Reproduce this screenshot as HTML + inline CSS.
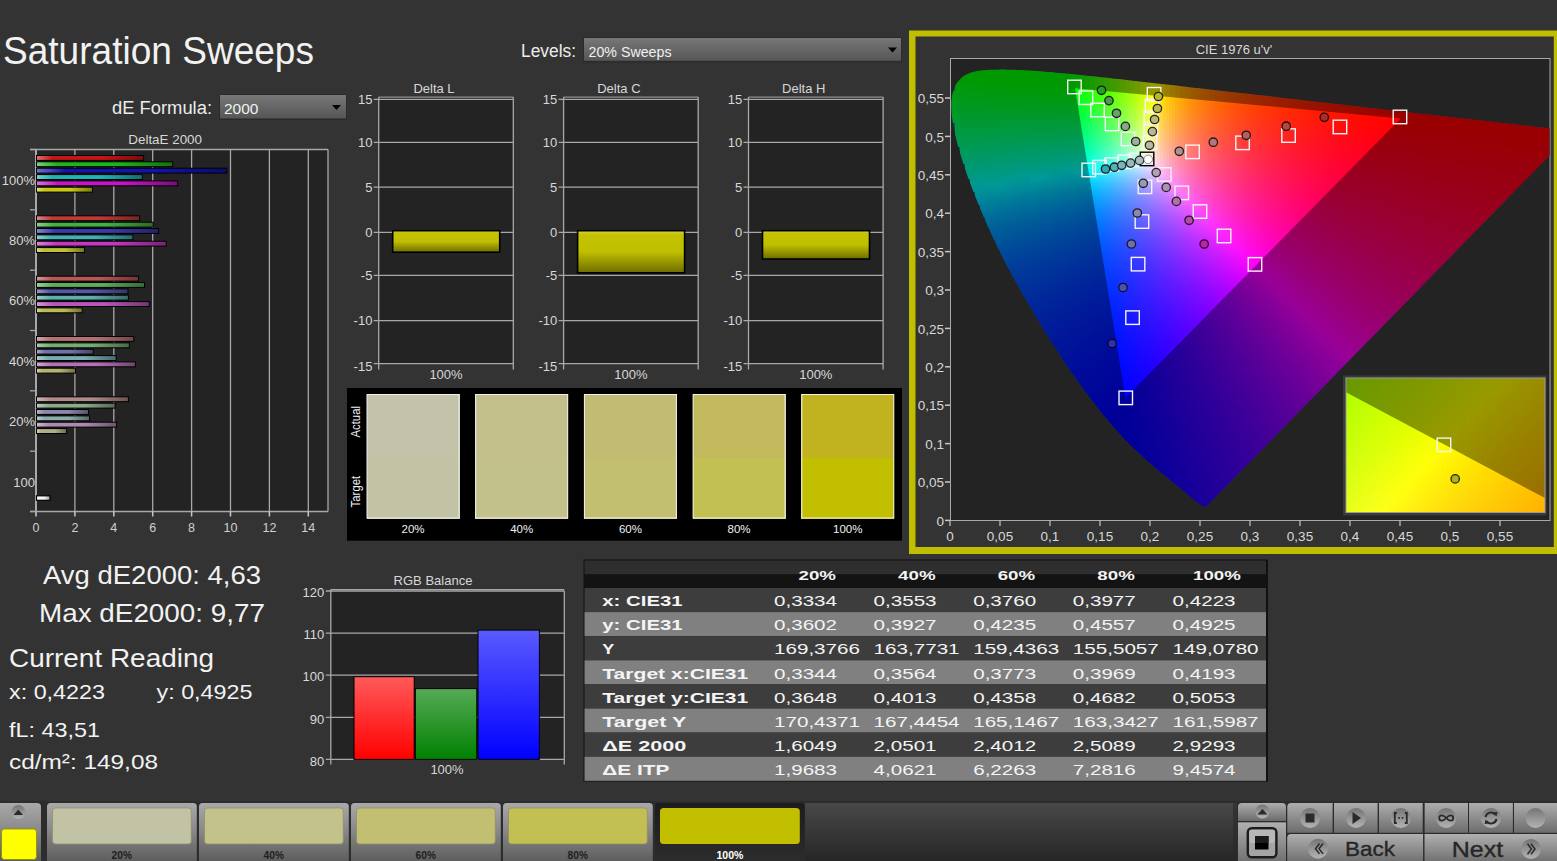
<!DOCTYPE html>
<html><head><meta charset="utf-8"><style>
html,body{margin:0;padding:0;background:#333333;width:1557px;height:861px;overflow:hidden}
svg{display:block;font-family:"Liberation Sans", sans-serif}
</style></head><body>
<svg width="1557" height="861" viewBox="0 0 1557 861">
<defs>
<linearGradient id="dd" x1="0" y1="0" x2="0" y2="1"><stop offset="0" stop-color="#777777"/><stop offset="1" stop-color="#555555"/></linearGradient>
<linearGradient id="ybar" x1="0" y1="0" x2="0" y2="1"><stop offset="0" stop-color="#d4d448"/><stop offset="0.1" stop-color="#c4c200"/><stop offset="0.5" stop-color="#c0bf00"/><stop offset="1" stop-color="#6e6c00"/></linearGradient>
</defs>
<rect x="0" y="0" width="1557" height="861" fill="#333333"/>
<text x="3" y="64" font-size="38" fill="#f2f2f2" text-anchor="start" textLength="311" lengthAdjust="spacingAndGlyphs" >Saturation Sweeps</text>
<text x="112" y="114" font-size="18" fill="#ececec" text-anchor="start" textLength="100" lengthAdjust="spacingAndGlyphs" >dE Formula:</text>
<rect x="219" y="94" width="128" height="26" fill="#2b2b2b"/>
<rect x="220" y="95" width="126" height="24" fill="url(#dd)"/>
<rect x="220" y="118.5" width="126" height="1" fill="#2a2a2a"/>
<text x="224" y="114" font-size="15.5" fill="#f0f0f0" text-anchor="start" >2000</text>
<path d="M332 105 L341 105 L336.5 110 Z" fill="#000"/>
<text x="521" y="57" font-size="18" fill="#ececec" text-anchor="start" textLength="55" lengthAdjust="spacingAndGlyphs" >Levels:</text>
<rect x="583" y="37" width="319" height="25.5" fill="#2b2b2b"/>
<rect x="584" y="38" width="317" height="23.5" fill="url(#dd)"/>
<rect x="584" y="60.8" width="317" height="1" fill="#2a2a2a"/>
<text x="588.5" y="57" font-size="15.5" fill="#f0f0f0" text-anchor="start" textLength="83" lengthAdjust="spacingAndGlyphs" >20% Sweeps</text>
<path d="M888 47.5 L897 47.5 L892.5 52.5 Z" fill="#000"/>
<text x="128.3" y="143.5" font-size="13" fill="#d8d8d8" text-anchor="start" textLength="73.7" lengthAdjust="spacingAndGlyphs" >DeltaE 2000</text>
<rect x="36" y="149.5" width="292" height="362.0" fill="#232323"/>
<line x1="74.9" y1="149.5" x2="74.9" y2="511.5" stroke="#a8a8a8" stroke-width="1.3"/>
<line x1="113.8" y1="149.5" x2="113.8" y2="511.5" stroke="#a8a8a8" stroke-width="1.3"/>
<line x1="152.7" y1="149.5" x2="152.7" y2="511.5" stroke="#a8a8a8" stroke-width="1.3"/>
<line x1="191.6" y1="149.5" x2="191.6" y2="511.5" stroke="#a8a8a8" stroke-width="1.3"/>
<line x1="230.5" y1="149.5" x2="230.5" y2="511.5" stroke="#a8a8a8" stroke-width="1.3"/>
<line x1="269.4" y1="149.5" x2="269.4" y2="511.5" stroke="#a8a8a8" stroke-width="1.3"/>
<line x1="308.3" y1="149.5" x2="308.3" y2="511.5" stroke="#a8a8a8" stroke-width="1.3"/>
<line x1="328" y1="149.5" x2="328" y2="511.5" stroke="#a8a8a8" stroke-width="1.3"/>
<line x1="30" y1="149.5" x2="328" y2="149.5" stroke="#a8a8a8" stroke-width="1.3"/>
<line x1="36" y1="149.5" x2="36" y2="516.5" stroke="#a8a8a8" stroke-width="2"/>
<line x1="30" y1="511.5" x2="328" y2="511.5" stroke="#a8a8a8" stroke-width="1.3"/>
<text x="36.0" y="532" font-size="12.5" fill="#d0d0d0" text-anchor="middle" >0</text>
<line x1="74.9" y1="511.5" x2="74.9" y2="516.5" stroke="#c8c8c8" stroke-width="1.5"/>
<text x="74.9" y="532" font-size="12.5" fill="#d0d0d0" text-anchor="middle" >2</text>
<line x1="113.8" y1="511.5" x2="113.8" y2="516.5" stroke="#c8c8c8" stroke-width="1.5"/>
<text x="113.8" y="532" font-size="12.5" fill="#d0d0d0" text-anchor="middle" >4</text>
<line x1="152.7" y1="511.5" x2="152.7" y2="516.5" stroke="#c8c8c8" stroke-width="1.5"/>
<text x="152.7" y="532" font-size="12.5" fill="#d0d0d0" text-anchor="middle" >6</text>
<line x1="191.6" y1="511.5" x2="191.6" y2="516.5" stroke="#c8c8c8" stroke-width="1.5"/>
<text x="191.6" y="532" font-size="12.5" fill="#d0d0d0" text-anchor="middle" >8</text>
<line x1="230.5" y1="511.5" x2="230.5" y2="516.5" stroke="#c8c8c8" stroke-width="1.5"/>
<text x="230.5" y="532" font-size="12.5" fill="#d0d0d0" text-anchor="middle" >10</text>
<line x1="269.4" y1="511.5" x2="269.4" y2="516.5" stroke="#c8c8c8" stroke-width="1.5"/>
<text x="269.4" y="532" font-size="12.5" fill="#d0d0d0" text-anchor="middle" >12</text>
<line x1="308.3" y1="511.5" x2="308.3" y2="516.5" stroke="#c8c8c8" stroke-width="1.5"/>
<text x="308.3" y="532" font-size="12.5" fill="#d0d0d0" text-anchor="middle" >14</text>
<line x1="30" y1="149.5" x2="36" y2="149.5" stroke="#a8a8a8" stroke-width="1.3"/>
<line x1="30" y1="209.8" x2="36" y2="209.8" stroke="#a8a8a8" stroke-width="1.3"/>
<line x1="30" y1="270.2" x2="36" y2="270.2" stroke="#a8a8a8" stroke-width="1.3"/>
<line x1="30" y1="330.5" x2="36" y2="330.5" stroke="#a8a8a8" stroke-width="1.3"/>
<line x1="30" y1="390.8" x2="36" y2="390.8" stroke="#a8a8a8" stroke-width="1.3"/>
<line x1="30" y1="451.2" x2="36" y2="451.2" stroke="#a8a8a8" stroke-width="1.3"/>
<line x1="30" y1="511.5" x2="36" y2="511.5" stroke="#a8a8a8" stroke-width="1.3"/>
<text x="35" y="184.7" font-size="13" fill="#d8d8d8" text-anchor="end" >100%</text>
<linearGradient id="bg0" x1="0" y1="0" x2="1" y2="0"><stop offset="0" stop-color="rgb(222, 114, 114)"/><stop offset="0.15" stop-color="rgb(200, 20, 20)"/><stop offset="0.6" stop-color="rgb(200, 20, 20)"/><stop offset="1" stop-color="rgb(124, 12, 12)"/></linearGradient>
<rect x="36.5" y="155.5" width="107.1" height="4.9" fill="url(#bg0)" stroke="#000" stroke-width="1"/>
<linearGradient id="bg1" x1="0" y1="0" x2="1" y2="0"><stop offset="0" stop-color="rgb(120, 210, 120)"/><stop offset="0.15" stop-color="rgb(30, 180, 30)"/><stop offset="0.6" stop-color="rgb(30, 180, 30)"/><stop offset="1" stop-color="rgb(18, 111, 18)"/></linearGradient>
<rect x="36.5" y="161.8" width="136.2" height="4.9" fill="url(#bg1)" stroke="#000" stroke-width="1"/>
<linearGradient id="bg2" x1="0" y1="0" x2="1" y2="0"><stop offset="0" stop-color="rgb(114, 114, 204)"/><stop offset="0.15" stop-color="rgb(20, 20, 170)"/><stop offset="0.6" stop-color="rgb(20, 20, 170)"/><stop offset="1" stop-color="rgb(12, 12, 105)"/></linearGradient>
<rect x="36.5" y="168.2" width="190.3" height="4.9" fill="url(#bg2)" stroke="#000" stroke-width="1"/>
<linearGradient id="bg3" x1="0" y1="0" x2="1" y2="0"><stop offset="0" stop-color="rgb(120, 210, 210)"/><stop offset="0.15" stop-color="rgb(30, 180, 180)"/><stop offset="0.6" stop-color="rgb(30, 180, 180)"/><stop offset="1" stop-color="rgb(18, 111, 111)"/></linearGradient>
<rect x="36.5" y="174.6" width="105.8" height="4.9" fill="url(#bg3)" stroke="#000" stroke-width="1"/>
<linearGradient id="bg4" x1="0" y1="0" x2="1" y2="0"><stop offset="0" stop-color="rgb(222, 114, 222)"/><stop offset="0.15" stop-color="rgb(200, 20, 200)"/><stop offset="0.6" stop-color="rgb(200, 20, 200)"/><stop offset="1" stop-color="rgb(124, 12, 124)"/></linearGradient>
<rect x="36.5" y="180.9" width="141.2" height="4.9" fill="url(#bg4)" stroke="#000" stroke-width="1"/>
<linearGradient id="bg5" x1="0" y1="0" x2="1" y2="0"><stop offset="0" stop-color="rgb(222, 222, 114)"/><stop offset="0.15" stop-color="rgb(200, 200, 20)"/><stop offset="0.6" stop-color="rgb(200, 200, 20)"/><stop offset="1" stop-color="rgb(124, 124, 12)"/></linearGradient>
<rect x="36.5" y="187.2" width="56.0" height="4.9" fill="url(#bg5)" stroke="#000" stroke-width="1"/>
<text x="35" y="245.0" font-size="13" fill="#d8d8d8" text-anchor="end" >80%</text>
<linearGradient id="bg6" x1="0" y1="0" x2="1" y2="0"><stop offset="0" stop-color="rgb(217, 136, 136)"/><stop offset="0.15" stop-color="rgb(192, 57, 57)"/><stop offset="0.6" stop-color="rgb(192, 57, 57)"/><stop offset="1" stop-color="rgb(119, 35, 35)"/></linearGradient>
<rect x="36.5" y="215.8" width="103.1" height="4.9" fill="url(#bg6)" stroke="#000" stroke-width="1"/>
<linearGradient id="bg7" x1="0" y1="0" x2="1" y2="0"><stop offset="0" stop-color="rgb(141, 208, 141)"/><stop offset="0.15" stop-color="rgb(65, 177, 65)"/><stop offset="0.6" stop-color="rgb(65, 177, 65)"/><stop offset="1" stop-color="rgb(40, 109, 40)"/></linearGradient>
<rect x="36.5" y="222.2" width="116.8" height="4.9" fill="url(#bg7)" stroke="#000" stroke-width="1"/>
<linearGradient id="bg8" x1="0" y1="0" x2="1" y2="0"><stop offset="0" stop-color="rgb(136, 136, 204)"/><stop offset="0.15" stop-color="rgb(57, 57, 170)"/><stop offset="0.6" stop-color="rgb(57, 57, 170)"/><stop offset="1" stop-color="rgb(35, 35, 105)"/></linearGradient>
<rect x="36.5" y="228.5" width="122.1" height="4.9" fill="url(#bg8)" stroke="#000" stroke-width="1"/>
<linearGradient id="bg9" x1="0" y1="0" x2="1" y2="0"><stop offset="0" stop-color="rgb(141, 208, 208)"/><stop offset="0.15" stop-color="rgb(65, 177, 177)"/><stop offset="0.6" stop-color="rgb(65, 177, 177)"/><stop offset="1" stop-color="rgb(40, 109, 109)"/></linearGradient>
<rect x="36.5" y="234.9" width="96.4" height="4.9" fill="url(#bg9)" stroke="#000" stroke-width="1"/>
<linearGradient id="bg10" x1="0" y1="0" x2="1" y2="0"><stop offset="0" stop-color="rgb(217, 136, 217)"/><stop offset="0.15" stop-color="rgb(192, 57, 192)"/><stop offset="0.6" stop-color="rgb(192, 57, 192)"/><stop offset="1" stop-color="rgb(119, 35, 119)"/></linearGradient>
<rect x="36.5" y="241.2" width="129.8" height="4.9" fill="url(#bg10)" stroke="#000" stroke-width="1"/>
<linearGradient id="bg11" x1="0" y1="0" x2="1" y2="0"><stop offset="0" stop-color="rgb(217, 217, 136)"/><stop offset="0.15" stop-color="rgb(192, 192, 57)"/><stop offset="0.6" stop-color="rgb(192, 192, 57)"/><stop offset="1" stop-color="rgb(119, 119, 35)"/></linearGradient>
<rect x="36.5" y="247.6" width="48.0" height="4.9" fill="url(#bg11)" stroke="#000" stroke-width="1"/>
<text x="35" y="305.3" font-size="13" fill="#d8d8d8" text-anchor="end" >60%</text>
<linearGradient id="bg12" x1="0" y1="0" x2="1" y2="0"><stop offset="0" stop-color="rgb(213, 153, 153)"/><stop offset="0.15" stop-color="rgb(186, 86, 86)"/><stop offset="0.6" stop-color="rgb(186, 86, 86)"/><stop offset="1" stop-color="rgb(115, 53, 53)"/></linearGradient>
<rect x="36.5" y="276.2" width="102.0" height="4.9" fill="url(#bg12)" stroke="#000" stroke-width="1"/>
<linearGradient id="bg13" x1="0" y1="0" x2="1" y2="0"><stop offset="0" stop-color="rgb(156, 207, 156)"/><stop offset="0.15" stop-color="rgb(91, 175, 91)"/><stop offset="0.6" stop-color="rgb(91, 175, 91)"/><stop offset="1" stop-color="rgb(56, 108, 56)"/></linearGradient>
<rect x="36.5" y="282.5" width="108.0" height="4.9" fill="url(#bg13)" stroke="#000" stroke-width="1"/>
<linearGradient id="bg14" x1="0" y1="0" x2="1" y2="0"><stop offset="0" stop-color="rgb(153, 153, 204)"/><stop offset="0.15" stop-color="rgb(86, 86, 170)"/><stop offset="0.6" stop-color="rgb(86, 86, 170)"/><stop offset="1" stop-color="rgb(53, 53, 105)"/></linearGradient>
<rect x="36.5" y="288.9" width="91.5" height="4.9" fill="url(#bg14)" stroke="#000" stroke-width="1"/>
<linearGradient id="bg15" x1="0" y1="0" x2="1" y2="0"><stop offset="0" stop-color="rgb(156, 207, 207)"/><stop offset="0.15" stop-color="rgb(91, 175, 175)"/><stop offset="0.6" stop-color="rgb(91, 175, 175)"/><stop offset="1" stop-color="rgb(56, 108, 108)"/></linearGradient>
<rect x="36.5" y="295.2" width="91.9" height="4.9" fill="url(#bg15)" stroke="#000" stroke-width="1"/>
<linearGradient id="bg16" x1="0" y1="0" x2="1" y2="0"><stop offset="0" stop-color="rgb(213, 153, 213)"/><stop offset="0.15" stop-color="rgb(186, 86, 186)"/><stop offset="0.6" stop-color="rgb(186, 86, 186)"/><stop offset="1" stop-color="rgb(115, 53, 115)"/></linearGradient>
<rect x="36.5" y="301.6" width="112.8" height="4.9" fill="url(#bg16)" stroke="#000" stroke-width="1"/>
<linearGradient id="bg17" x1="0" y1="0" x2="1" y2="0"><stop offset="0" stop-color="rgb(213, 213, 153)"/><stop offset="0.15" stop-color="rgb(186, 186, 86)"/><stop offset="0.6" stop-color="rgb(186, 186, 86)"/><stop offset="1" stop-color="rgb(115, 115, 53)"/></linearGradient>
<rect x="36.5" y="307.9" width="45.7" height="4.9" fill="url(#bg17)" stroke="#000" stroke-width="1"/>
<text x="35" y="365.7" font-size="13" fill="#d8d8d8" text-anchor="end" >40%</text>
<linearGradient id="bg18" x1="0" y1="0" x2="1" y2="0"><stop offset="0" stop-color="rgb(210, 169, 169)"/><stop offset="0.15" stop-color="rgb(181, 113, 113)"/><stop offset="0.6" stop-color="rgb(181, 113, 113)"/><stop offset="1" stop-color="rgb(112, 70, 70)"/></linearGradient>
<rect x="36.5" y="336.5" width="97.3" height="4.9" fill="url(#bg18)" stroke="#000" stroke-width="1"/>
<linearGradient id="bg19" x1="0" y1="0" x2="1" y2="0"><stop offset="0" stop-color="rgb(171, 205, 171)"/><stop offset="0.15" stop-color="rgb(116, 173, 116)"/><stop offset="0.6" stop-color="rgb(116, 173, 116)"/><stop offset="1" stop-color="rgb(71, 107, 71)"/></linearGradient>
<rect x="36.5" y="342.9" width="92.9" height="4.9" fill="url(#bg19)" stroke="#000" stroke-width="1"/>
<linearGradient id="bg20" x1="0" y1="0" x2="1" y2="0"><stop offset="0" stop-color="rgb(169, 169, 204)"/><stop offset="0.15" stop-color="rgb(113, 113, 170)"/><stop offset="0.6" stop-color="rgb(113, 113, 170)"/><stop offset="1" stop-color="rgb(70, 70, 105)"/></linearGradient>
<rect x="36.5" y="349.2" width="56.8" height="4.9" fill="url(#bg20)" stroke="#000" stroke-width="1"/>
<linearGradient id="bg21" x1="0" y1="0" x2="1" y2="0"><stop offset="0" stop-color="rgb(171, 205, 205)"/><stop offset="0.15" stop-color="rgb(116, 173, 173)"/><stop offset="0.6" stop-color="rgb(116, 173, 173)"/><stop offset="1" stop-color="rgb(71, 107, 107)"/></linearGradient>
<rect x="36.5" y="355.6" width="79.7" height="4.9" fill="url(#bg21)" stroke="#000" stroke-width="1"/>
<linearGradient id="bg22" x1="0" y1="0" x2="1" y2="0"><stop offset="0" stop-color="rgb(210, 169, 210)"/><stop offset="0.15" stop-color="rgb(181, 113, 181)"/><stop offset="0.6" stop-color="rgb(181, 113, 181)"/><stop offset="1" stop-color="rgb(112, 70, 112)"/></linearGradient>
<rect x="36.5" y="361.9" width="98.9" height="4.9" fill="url(#bg22)" stroke="#000" stroke-width="1"/>
<linearGradient id="bg23" x1="0" y1="0" x2="1" y2="0"><stop offset="0" stop-color="rgb(210, 210, 169)"/><stop offset="0.15" stop-color="rgb(181, 181, 113)"/><stop offset="0.6" stop-color="rgb(181, 181, 113)"/><stop offset="1" stop-color="rgb(112, 112, 70)"/></linearGradient>
<rect x="36.5" y="368.2" width="39.0" height="4.9" fill="url(#bg23)" stroke="#000" stroke-width="1"/>
<text x="35" y="426.0" font-size="13" fill="#d8d8d8" text-anchor="end" >20%</text>
<linearGradient id="bg24" x1="0" y1="0" x2="1" y2="0"><stop offset="0" stop-color="rgb(207, 184, 184)"/><stop offset="0.15" stop-color="rgb(176, 137, 137)"/><stop offset="0.6" stop-color="rgb(176, 137, 137)"/><stop offset="1" stop-color="rgb(109, 84, 84)"/></linearGradient>
<rect x="36.5" y="396.8" width="91.9" height="4.9" fill="url(#bg24)" stroke="#000" stroke-width="1"/>
<linearGradient id="bg25" x1="0" y1="0" x2="1" y2="0"><stop offset="0" stop-color="rgb(185, 205, 185)"/><stop offset="0.15" stop-color="rgb(139, 172, 139)"/><stop offset="0.6" stop-color="rgb(139, 172, 139)"/><stop offset="1" stop-color="rgb(86, 106, 86)"/></linearGradient>
<rect x="36.5" y="403.2" width="78.7" height="4.9" fill="url(#bg25)" stroke="#000" stroke-width="1"/>
<linearGradient id="bg26" x1="0" y1="0" x2="1" y2="0"><stop offset="0" stop-color="rgb(184, 184, 204)"/><stop offset="0.15" stop-color="rgb(137, 137, 170)"/><stop offset="0.6" stop-color="rgb(137, 137, 170)"/><stop offset="1" stop-color="rgb(84, 84, 105)"/></linearGradient>
<rect x="36.5" y="409.5" width="52.1" height="4.9" fill="url(#bg26)" stroke="#000" stroke-width="1"/>
<linearGradient id="bg27" x1="0" y1="0" x2="1" y2="0"><stop offset="0" stop-color="rgb(185, 205, 205)"/><stop offset="0.15" stop-color="rgb(139, 172, 172)"/><stop offset="0.6" stop-color="rgb(139, 172, 172)"/><stop offset="1" stop-color="rgb(86, 106, 106)"/></linearGradient>
<rect x="36.5" y="415.9" width="53.1" height="4.9" fill="url(#bg27)" stroke="#000" stroke-width="1"/>
<linearGradient id="bg28" x1="0" y1="0" x2="1" y2="0"><stop offset="0" stop-color="rgb(207, 184, 207)"/><stop offset="0.15" stop-color="rgb(176, 137, 176)"/><stop offset="0.6" stop-color="rgb(176, 137, 176)"/><stop offset="1" stop-color="rgb(109, 84, 109)"/></linearGradient>
<rect x="36.5" y="422.2" width="80.1" height="4.9" fill="url(#bg28)" stroke="#000" stroke-width="1"/>
<linearGradient id="bg29" x1="0" y1="0" x2="1" y2="0"><stop offset="0" stop-color="rgb(207, 207, 184)"/><stop offset="0.15" stop-color="rgb(176, 176, 137)"/><stop offset="0.6" stop-color="rgb(176, 176, 137)"/><stop offset="1" stop-color="rgb(109, 109, 84)"/></linearGradient>
<rect x="36.5" y="428.6" width="30.2" height="4.9" fill="url(#bg29)" stroke="#000" stroke-width="1"/>
<text x="35" y="487" font-size="13" fill="#d8d8d8" text-anchor="end" >100</text>
<linearGradient id="bgw" x1="0" y1="0" x2="1" y2="0"><stop offset="0" stop-color="#ffffff"/><stop offset="0.6" stop-color="#f0f0f0"/><stop offset="1" stop-color="#9a9a9a"/></linearGradient>
<rect x="36.5" y="495.8" width="13.5" height="4.5" fill="url(#bgw)" stroke="#000" stroke-width="1.2"/>
<rect x="378.7" y="97.3" width="134.6" height="266.3" fill="#232323"/>
<line x1="373.7" y1="99.3" x2="513.3" y2="99.3" stroke="#a8a8a8" stroke-width="1.3"/>
<text x="372.4" y="103.9" font-size="13" fill="#d8d8d8" text-anchor="end" >15</text>
<line x1="373.7" y1="142.3" x2="513.3" y2="142.3" stroke="#a8a8a8" stroke-width="1.3"/>
<text x="372.4" y="146.9" font-size="13" fill="#d8d8d8" text-anchor="end" >10</text>
<line x1="373.7" y1="187.2" x2="513.3" y2="187.2" stroke="#a8a8a8" stroke-width="1.3"/>
<text x="372.4" y="191.8" font-size="13" fill="#d8d8d8" text-anchor="end" >5</text>
<line x1="373.7" y1="232.4" x2="513.3" y2="232.4" stroke="#a8a8a8" stroke-width="1.3"/>
<text x="372.4" y="237.0" font-size="13" fill="#d8d8d8" text-anchor="end" >0</text>
<line x1="373.7" y1="275.3" x2="513.3" y2="275.3" stroke="#a8a8a8" stroke-width="1.3"/>
<text x="372.4" y="279.9" font-size="13" fill="#d8d8d8" text-anchor="end" >-5</text>
<line x1="373.7" y1="320.6" x2="513.3" y2="320.6" stroke="#a8a8a8" stroke-width="1.3"/>
<text x="372.4" y="325.2" font-size="13" fill="#d8d8d8" text-anchor="end" >-10</text>
<line x1="373.7" y1="363.6" x2="513.3" y2="363.6" stroke="#a8a8a8" stroke-width="1.3"/>
<text x="372.4" y="370.5" font-size="13" fill="#d8d8d8" text-anchor="end" >-15</text>
<line x1="378.7" y1="97.1" x2="513.3" y2="97.1" stroke="#a8a8a8" stroke-width="1"/>
<line x1="378.7" y1="97.1" x2="378.7" y2="369.6" stroke="#a8a8a8" stroke-width="1.3"/>
<line x1="513.3" y1="97.1" x2="513.3" y2="369.6" stroke="#a8a8a8" stroke-width="1.3"/>
<text x="434.0" y="93" font-size="13" fill="#d8d8d8" text-anchor="middle" >Delta L</text>
<text x="446.0" y="379" font-size="13" fill="#d8d8d8" text-anchor="middle" >100%</text>
<rect x="392.7" y="230.7" width="107" height="21.5" fill="url(#ybar)" stroke="#000" stroke-width="1.6"/>
<rect x="563.6" y="97.3" width="134.6" height="266.3" fill="#232323"/>
<line x1="558.6" y1="99.3" x2="698.2" y2="99.3" stroke="#a8a8a8" stroke-width="1.3"/>
<text x="557.3" y="103.9" font-size="13" fill="#d8d8d8" text-anchor="end" >15</text>
<line x1="558.6" y1="142.3" x2="698.2" y2="142.3" stroke="#a8a8a8" stroke-width="1.3"/>
<text x="557.3" y="146.9" font-size="13" fill="#d8d8d8" text-anchor="end" >10</text>
<line x1="558.6" y1="187.2" x2="698.2" y2="187.2" stroke="#a8a8a8" stroke-width="1.3"/>
<text x="557.3" y="191.8" font-size="13" fill="#d8d8d8" text-anchor="end" >5</text>
<line x1="558.6" y1="232.4" x2="698.2" y2="232.4" stroke="#a8a8a8" stroke-width="1.3"/>
<text x="557.3" y="237.0" font-size="13" fill="#d8d8d8" text-anchor="end" >0</text>
<line x1="558.6" y1="275.3" x2="698.2" y2="275.3" stroke="#a8a8a8" stroke-width="1.3"/>
<text x="557.3" y="279.9" font-size="13" fill="#d8d8d8" text-anchor="end" >-5</text>
<line x1="558.6" y1="320.6" x2="698.2" y2="320.6" stroke="#a8a8a8" stroke-width="1.3"/>
<text x="557.3" y="325.2" font-size="13" fill="#d8d8d8" text-anchor="end" >-10</text>
<line x1="558.6" y1="363.6" x2="698.2" y2="363.6" stroke="#a8a8a8" stroke-width="1.3"/>
<text x="557.3" y="370.5" font-size="13" fill="#d8d8d8" text-anchor="end" >-15</text>
<line x1="563.6" y1="97.1" x2="698.2" y2="97.1" stroke="#a8a8a8" stroke-width="1"/>
<line x1="563.6" y1="97.1" x2="563.6" y2="369.6" stroke="#a8a8a8" stroke-width="1.3"/>
<line x1="698.2" y1="97.1" x2="698.2" y2="369.6" stroke="#a8a8a8" stroke-width="1.3"/>
<text x="618.9" y="93" font-size="13" fill="#d8d8d8" text-anchor="middle" >Delta C</text>
<text x="630.9" y="379" font-size="13" fill="#d8d8d8" text-anchor="middle" >100%</text>
<rect x="577.6" y="230.7" width="107" height="42.1" fill="url(#ybar)" stroke="#000" stroke-width="1.6"/>
<rect x="748.5" y="97.3" width="134.6" height="266.3" fill="#232323"/>
<line x1="743.5" y1="99.3" x2="883.1" y2="99.3" stroke="#a8a8a8" stroke-width="1.3"/>
<text x="742.2" y="103.9" font-size="13" fill="#d8d8d8" text-anchor="end" >15</text>
<line x1="743.5" y1="142.3" x2="883.1" y2="142.3" stroke="#a8a8a8" stroke-width="1.3"/>
<text x="742.2" y="146.9" font-size="13" fill="#d8d8d8" text-anchor="end" >10</text>
<line x1="743.5" y1="187.2" x2="883.1" y2="187.2" stroke="#a8a8a8" stroke-width="1.3"/>
<text x="742.2" y="191.8" font-size="13" fill="#d8d8d8" text-anchor="end" >5</text>
<line x1="743.5" y1="232.4" x2="883.1" y2="232.4" stroke="#a8a8a8" stroke-width="1.3"/>
<text x="742.2" y="237.0" font-size="13" fill="#d8d8d8" text-anchor="end" >0</text>
<line x1="743.5" y1="275.3" x2="883.1" y2="275.3" stroke="#a8a8a8" stroke-width="1.3"/>
<text x="742.2" y="279.9" font-size="13" fill="#d8d8d8" text-anchor="end" >-5</text>
<line x1="743.5" y1="320.6" x2="883.1" y2="320.6" stroke="#a8a8a8" stroke-width="1.3"/>
<text x="742.2" y="325.2" font-size="13" fill="#d8d8d8" text-anchor="end" >-10</text>
<line x1="743.5" y1="363.6" x2="883.1" y2="363.6" stroke="#a8a8a8" stroke-width="1.3"/>
<text x="742.2" y="370.5" font-size="13" fill="#d8d8d8" text-anchor="end" >-15</text>
<line x1="748.5" y1="97.1" x2="883.1" y2="97.1" stroke="#a8a8a8" stroke-width="1"/>
<line x1="748.5" y1="97.1" x2="748.5" y2="369.6" stroke="#a8a8a8" stroke-width="1.3"/>
<line x1="883.1" y1="97.1" x2="883.1" y2="369.6" stroke="#a8a8a8" stroke-width="1.3"/>
<text x="803.8" y="93" font-size="13" fill="#d8d8d8" text-anchor="middle" >Delta H</text>
<text x="815.8" y="379" font-size="13" fill="#d8d8d8" text-anchor="middle" >100%</text>
<rect x="762.5" y="230.7" width="107" height="28.3" fill="url(#ybar)" stroke="#000" stroke-width="1.6"/>
<rect x="347" y="388" width="555" height="152.7" fill="#000"/>
<rect x="366.5" y="394" width="93" height="64" fill="#c3c3a9" shape-rendering="crispEdges"/>
<rect x="366.5" y="458" width="93" height="60.5" fill="#c2c2a5" shape-rendering="crispEdges"/>
<rect x="367.0" y="394.5" width="92" height="123.5" fill="none" stroke="#f0f0f0" stroke-width="1"/>
<text x="413.0" y="533" font-size="11.5" fill="#f0f0f0" text-anchor="middle" >20%</text>
<rect x="475.2" y="394" width="93" height="64" fill="#c2bf8b" shape-rendering="crispEdges"/>
<rect x="475.2" y="458" width="93" height="60.5" fill="#c2c18a" shape-rendering="crispEdges"/>
<rect x="475.7" y="394.5" width="92" height="123.5" fill="none" stroke="#f0f0f0" stroke-width="1"/>
<text x="521.7" y="533" font-size="11.5" fill="#f0f0f0" text-anchor="middle" >40%</text>
<rect x="583.9" y="394" width="93" height="64" fill="#c1bb73" shape-rendering="crispEdges"/>
<rect x="583.9" y="458" width="93" height="60.5" fill="#c2bf71" shape-rendering="crispEdges"/>
<rect x="584.4" y="394.5" width="92" height="123.5" fill="none" stroke="#f0f0f0" stroke-width="1"/>
<text x="630.4" y="533" font-size="11.5" fill="#f0f0f0" text-anchor="middle" >60%</text>
<rect x="692.6" y="394" width="93" height="64" fill="#c2b95c" shape-rendering="crispEdges"/>
<rect x="692.6" y="458" width="93" height="60.5" fill="#c2c052" shape-rendering="crispEdges"/>
<rect x="693.1" y="394.5" width="92" height="123.5" fill="none" stroke="#f0f0f0" stroke-width="1"/>
<text x="739.1" y="533" font-size="11.5" fill="#f0f0f0" text-anchor="middle" >80%</text>
<rect x="801.3" y="394" width="93" height="64" fill="#c1b31f" shape-rendering="crispEdges"/>
<rect x="801.3" y="458" width="93" height="60.5" fill="#c2bf00" shape-rendering="crispEdges"/>
<rect x="801.8" y="394.5" width="92" height="123.5" fill="none" stroke="#f0f0f0" stroke-width="1"/>
<text x="847.8" y="533" font-size="11.5" fill="#f0f0f0" text-anchor="middle" >100%</text>
<text transform="translate(359.5,437.5) rotate(-90)" font-size="12" fill="#f0f0f0" textLength="31.5" lengthAdjust="spacingAndGlyphs">Actual</text>
<text transform="translate(359.5,507.4) rotate(-90)" font-size="12" fill="#f0f0f0" textLength="31.6" lengthAdjust="spacingAndGlyphs">Target</text>
<clipPath id="cieclip"><rect x="950.5" y="58.5" width="599" height="461.5"/></clipPath>
<clipPath id="locclip"><path d="M1206.8 506.1 L1206.7 506.2 L1206.5 506.2 L1206.3 506.3 L1206.1 506.5 L1205.9 506.5 L1205.7 506.6 L1205.5 506.6 L1205.4 506.7 L1205.2 506.7 L1205.0 506.7 L1204.8 506.7 L1204.5 506.6 L1204.2 506.5 L1203.9 506.5 L1203.5 506.3 L1203.0 506.2 L1202.6 506.1 L1202.2 505.9 L1201.8 505.7 L1201.4 505.4 L1201.0 505.1 L1200.6 504.8 L1200.1 504.5 L1199.6 504.2 L1199.1 503.8 L1198.6 503.4 L1198.0 503.0 L1197.4 502.5 L1196.8 502.0 L1196.1 501.5 L1195.4 500.9 L1194.6 500.3 L1193.8 499.6 L1192.9 498.9 L1192.0 498.2 L1191.1 497.4 L1190.1 496.6 L1189.1 495.7 L1188.1 494.9 L1187.0 493.9 L1185.9 493.0 L1184.7 492.0 L1183.5 491.0 L1182.2 490.0 L1180.9 488.9 L1179.6 487.8 L1178.1 486.6 L1176.6 485.4 L1175.0 484.1 L1173.4 482.7 L1171.6 481.3 L1169.8 479.8 L1168.0 478.3 L1166.1 476.7 L1164.1 475.1 L1162.1 473.5 L1160.0 471.8 L1157.9 470.0 L1155.7 468.1 L1153.3 466.1 L1150.9 464.1 L1148.5 461.9 L1145.9 459.7 L1143.3 457.3 L1140.5 454.8 L1137.7 452.1 L1134.8 449.4 L1131.9 446.5 L1128.9 443.6 L1125.8 440.4 L1122.5 437.0 L1119.0 433.1 L1115.2 428.9 L1111.3 424.4 L1107.2 419.5 L1102.9 414.4 L1098.6 409.0 L1094.1 403.2 L1089.5 397.2 L1084.7 390.8 L1079.8 384.1 L1074.8 377.1 L1069.8 369.9 L1064.7 362.4 L1059.5 354.5 L1054.2 346.3 L1048.8 337.8 L1043.4 329.1 L1038.1 320.3 L1032.8 311.5 L1027.6 302.5 L1022.3 293.4 L1017.0 284.1 L1011.8 274.8 L1006.8 265.6 L1002.1 256.5 L997.7 247.4 L993.4 238.4 L989.2 229.4 L985.3 220.6 L981.6 212.0 L978.2 203.7 L974.9 195.6 L971.9 187.8 L969.1 180.2 L966.4 172.8 L964.1 165.8 L961.9 159.1 L960.0 152.8 L958.3 146.9 L956.8 141.2 L955.5 135.9 L954.4 130.8 L953.5 126.0 L952.7 121.5 L952.1 117.4 L951.7 113.5 L951.5 109.8 L951.4 106.3 L951.4 103.0 L951.6 99.9 L952.0 97.0 L952.4 94.3 L953.1 91.8 L953.8 89.4 L954.6 87.2 L955.6 85.1 L956.7 83.2 L958.0 81.5 L959.3 79.9 L960.8 78.5 L962.3 77.1 L963.9 76.0 L965.6 74.9 L967.4 74.1 L969.2 73.3 L971.2 72.6 L973.1 72.0 L975.1 71.5 L977.2 71.1 L979.4 70.8 L981.5 70.5 L983.8 70.3 L986.0 70.1 L988.3 69.9 L990.6 69.8 L992.9 69.7 L995.3 69.7 L997.7 69.7 L1000.1 69.6 L1002.4 69.6 L1004.8 69.6 L1007.1 69.7 L1009.5 69.7 L1011.9 69.8 L1014.3 69.8 L1016.8 69.9 L1019.2 70.0 L1021.7 70.1 L1024.2 70.2 L1026.7 70.4 L1029.2 70.5 L1031.8 70.7 L1034.4 70.8 L1037.1 71.0 L1039.8 71.2 L1042.5 71.4 L1045.3 71.7 L1048.1 71.9 L1050.9 72.1 L1053.8 72.4 L1056.7 72.7 L1059.7 72.9 L1062.7 73.2 L1065.8 73.5 L1068.9 73.8 L1072.0 74.1 L1075.3 74.5 L1078.5 74.8 L1081.9 75.2 L1085.3 75.5 L1088.7 75.9 L1092.2 76.2 L1095.8 76.6 L1099.4 77.0 L1103.1 77.4 L1106.9 77.8 L1110.7 78.3 L1114.5 78.7 L1118.5 79.1 L1122.5 79.6 L1126.6 80.0 L1130.7 80.5 L1135.0 81.0 L1139.3 81.5 L1143.6 81.9 L1148.1 82.4 L1152.6 83.0 L1157.2 83.5 L1161.8 84.0 L1166.6 84.5 L1171.4 85.1 L1176.2 85.6 L1181.2 86.2 L1186.2 86.8 L1191.3 87.4 L1196.4 88.0 L1201.7 88.6 L1207.0 89.2 L1212.3 89.8 L1217.8 90.4 L1223.3 91.0 L1228.9 91.7 L1234.5 92.3 L1240.2 93.0 L1246.0 93.6 L1251.8 94.3 L1257.6 95.0 L1263.6 95.6 L1269.5 96.3 L1275.5 97.0 L1281.5 97.7 L1287.6 98.4 L1293.7 99.1 L1299.8 99.8 L1305.9 100.5 L1312.0 101.2 L1318.1 101.9 L1324.0 102.6 L1330.0 103.3 L1335.9 103.9 L1341.8 104.6 L1347.6 105.3 L1353.5 105.9 L1359.3 106.6 L1365.2 107.3 L1371.0 107.9 L1376.7 108.6 L1382.4 109.2 L1387.9 109.9 L1393.4 110.5 L1398.7 111.1 L1404.0 111.7 L1409.2 112.3 L1414.2 112.9 L1419.2 113.4 L1424.0 114.0 L1428.8 114.5 L1433.5 115.1 L1438.0 115.6 L1442.4 116.1 L1446.8 116.6 L1450.8 117.1 L1454.4 117.5 L1458.0 117.9 L1461.6 118.3 L1465.7 118.8 L1470.3 119.3 L1475.7 119.9 L1481.8 120.6 L1488.2 121.3 L1494.7 122.1 L1500.9 122.8 L1506.5 123.4 L1511.6 124.0 L1516.4 124.6 L1520.9 125.1 L1525.2 125.6 L1529.3 126.0 L1533.0 126.5 L1536.6 126.9 L1539.8 127.2 L1542.8 127.6 L1545.5 127.9 L1548.1 128.2 L1550.5 128.5 L1552.7 128.7 L1554.5 128.9 L1556.2 129.1 L1557.8 129.3 L1559.3 129.5 L1560.9 129.6 L1562.5 129.8 L1564.2 130.0 L1565.8 130.2 L1567.4 130.4 L1568.7 130.5 L1569.9 130.7 L1570.8 130.8 L1571.6 130.9 L1572.2 130.9 L1572.7 131.0 L1573.1 131.0 L1573.4 131.1 Z"/></clipPath>
<rect x="909" y="30.5" width="660" height="523.5" fill="#bfbe00"/>
<rect x="915.5" y="36.5" width="638.3" height="510.5" fill="#333333"/>
<text x="1234" y="54" font-size="13" fill="#d8d8d8" text-anchor="middle" >CIE 1976 u'v'</text>
<rect x="950.5" y="58.5" width="599.5" height="462" fill="#232323" stroke="#a8a8a8" stroke-width="1"/>
<g clip-path="url(#cieclip)"><g clip-path="url(#locclip)">
<path d="M1206.8 506.1 L1206.7 506.2 L1206.5 506.2 L1206.3 506.3 L1206.1 506.5 L1205.9 506.5 L1205.7 506.6 L1205.5 506.6 L1205.4 506.7 L1205.2 506.7 L1205.0 506.7 L1204.8 506.7 L1204.5 506.6 L1204.2 506.5 L1203.9 506.5 L1203.5 506.3 L1203.0 506.2 L1202.6 506.1 L1202.2 505.9 L1201.8 505.7 L1201.4 505.4 L1201.0 505.1 L1200.6 504.8 L1200.1 504.5 L1199.6 504.2 L1199.1 503.8 L1198.6 503.4 L1198.0 503.0 L1197.4 502.5 L1196.8 502.0 L1196.1 501.5 L1195.4 500.9 L1194.6 500.3 L1193.8 499.6 L1192.9 498.9 L1192.0 498.2 L1191.1 497.4 L1190.1 496.6 L1189.1 495.7 L1188.1 494.9 L1187.0 493.9 L1185.9 493.0 L1184.7 492.0 L1183.5 491.0 L1182.2 490.0 L1180.9 488.9 L1179.6 487.8 L1178.1 486.6 L1176.6 485.4 L1175.0 484.1 L1173.4 482.7 L1171.6 481.3 L1169.8 479.8 L1168.0 478.3 L1166.1 476.7 L1164.1 475.1 L1162.1 473.5 L1160.0 471.8 L1157.9 470.0 L1155.7 468.1 L1153.3 466.1 L1150.9 464.1 L1148.5 461.9 L1145.9 459.7 L1143.3 457.3 L1140.5 454.8 L1137.7 452.1 L1134.8 449.4 L1131.9 446.5 L1128.9 443.6 L1125.8 440.4 L1122.5 437.0 L1119.0 433.1 L1115.2 428.9 L1111.3 424.4 L1107.2 419.5 L1102.9 414.4 L1098.6 409.0 L1094.1 403.2 L1089.5 397.2 L1084.7 390.8 L1079.8 384.1 L1074.8 377.1 L1069.8 369.9 L1064.7 362.4 L1059.5 354.5 L1054.2 346.3 L1048.8 337.8 L1043.4 329.1 L1038.1 320.3 L1032.8 311.5 L1027.6 302.5 L1022.3 293.4 L1017.0 284.1 L1011.8 274.8 L1006.8 265.6 L1002.1 256.5 L997.7 247.4 L993.4 238.4 L989.2 229.4 L985.3 220.6 L981.6 212.0 L978.2 203.7 L974.9 195.6 L971.9 187.8 L969.1 180.2 L966.4 172.8 L964.1 165.8 L961.9 159.1 L960.0 152.8 L958.3 146.9 L956.8 141.2 L955.5 135.9 L954.4 130.8 L953.5 126.0 L952.7 121.5 L952.1 117.4 L951.7 113.5 L951.5 109.8 L951.4 106.3 L951.4 103.0 L951.6 99.9 L952.0 97.0 L952.4 94.3 L953.1 91.8 L953.8 89.4 L954.6 87.2 L955.6 85.1 L956.7 83.2 L958.0 81.5 L959.3 79.9 L960.8 78.5 L962.3 77.1 L963.9 76.0 L965.6 74.9 L967.4 74.1 L969.2 73.3 L971.2 72.6 L973.1 72.0 L975.1 71.5 L977.2 71.1 L979.4 70.8 L981.5 70.5 L983.8 70.3 L986.0 70.1 L988.3 69.9 L990.6 69.8 L992.9 69.7 L995.3 69.7 L997.7 69.7 L1000.1 69.6 L1002.4 69.6 L1004.8 69.6 L1007.1 69.7 L1009.5 69.7 L1011.9 69.8 L1014.3 69.8 L1016.8 69.9 L1019.2 70.0 L1021.7 70.1 L1024.2 70.2 L1026.7 70.4 L1029.2 70.5 L1031.8 70.7 L1034.4 70.8 L1037.1 71.0 L1039.8 71.2 L1042.5 71.4 L1045.3 71.7 L1048.1 71.9 L1050.9 72.1 L1053.8 72.4 L1056.7 72.7 L1059.7 72.9 L1062.7 73.2 L1065.8 73.5 L1068.9 73.8 L1072.0 74.1 L1075.3 74.5 L1078.5 74.8 L1081.9 75.2 L1085.3 75.5 L1088.7 75.9 L1092.2 76.2 L1095.8 76.6 L1099.4 77.0 L1103.1 77.4 L1106.9 77.8 L1110.7 78.3 L1114.5 78.7 L1118.5 79.1 L1122.5 79.6 L1126.6 80.0 L1130.7 80.5 L1135.0 81.0 L1139.3 81.5 L1143.6 81.9 L1148.1 82.4 L1152.6 83.0 L1157.2 83.5 L1161.8 84.0 L1166.6 84.5 L1171.4 85.1 L1176.2 85.6 L1181.2 86.2 L1186.2 86.8 L1191.3 87.4 L1196.4 88.0 L1201.7 88.6 L1207.0 89.2 L1212.3 89.8 L1217.8 90.4 L1223.3 91.0 L1228.9 91.7 L1234.5 92.3 L1240.2 93.0 L1246.0 93.6 L1251.8 94.3 L1257.6 95.0 L1263.6 95.6 L1269.5 96.3 L1275.5 97.0 L1281.5 97.7 L1287.6 98.4 L1293.7 99.1 L1299.8 99.8 L1305.9 100.5 L1312.0 101.2 L1318.1 101.9 L1324.0 102.6 L1330.0 103.3 L1335.9 103.9 L1341.8 104.6 L1347.6 105.3 L1353.5 105.9 L1359.3 106.6 L1365.2 107.3 L1371.0 107.9 L1376.7 108.6 L1382.4 109.2 L1387.9 109.9 L1393.4 110.5 L1398.7 111.1 L1404.0 111.7 L1409.2 112.3 L1414.2 112.9 L1419.2 113.4 L1424.0 114.0 L1428.8 114.5 L1433.5 115.1 L1438.0 115.6 L1442.4 116.1 L1446.8 116.6 L1450.8 117.1 L1454.4 117.5 L1458.0 117.9 L1461.6 118.3 L1465.7 118.8 L1470.3 119.3 L1475.7 119.9 L1481.8 120.6 L1488.2 121.3 L1494.7 122.1 L1500.9 122.8 L1506.5 123.4 L1511.6 124.0 L1516.4 124.6 L1520.9 125.1 L1525.2 125.6 L1529.3 126.0 L1533.0 126.5 L1536.6 126.9 L1539.8 127.2 L1542.8 127.6 L1545.5 127.9 L1548.1 128.2 L1550.5 128.5 L1552.7 128.7 L1554.5 128.9 L1556.2 129.1 L1557.8 129.3 L1559.3 129.5 L1560.9 129.6 L1562.5 129.8 L1564.2 130.0 L1565.8 130.2 L1567.4 130.4 L1568.7 130.5 L1569.9 130.7 L1570.8 130.8 L1571.6 130.9 L1572.2 130.9 L1572.7 131.0 L1573.1 131.0 L1573.4 131.1 Z" fill="#005a60"/>
<g shape-rendering="crispEdges">
<linearGradient id="fo0" gradientUnits="userSpaceOnUse" x1="0" y1="91.0" x2="0" y2="123.1"><stop offset="0" stop-color="#00990f"/><stop offset=".25" stop-color="#009918"/><stop offset=".5" stop-color="#009921"/><stop offset=".75" stop-color="#00992a"/><stop offset="1" stop-color="#009934"/></linearGradient>
<rect x="950" y="91.0" width="5" height="32.0" fill="url(#fo0)"/>
<linearGradient id="fo1" gradientUnits="userSpaceOnUse" x1="0" y1="79.2" x2="0" y2="147.0"><stop offset="0" stop-color="#009902"/><stop offset=".167" stop-color="#00990e"/><stop offset=".333" stop-color="#00991a"/><stop offset=".5" stop-color="#009928"/><stop offset=".667" stop-color="#009935"/><stop offset=".833" stop-color="#009944"/><stop offset="1" stop-color="#009953"/></linearGradient>
<rect x="955" y="79.2" width="5" height="67.8" fill="url(#fo1)"/>
<linearGradient id="fo2" gradientUnits="userSpaceOnUse" x1="0" y1="74.0" x2="0" y2="164.0"><stop offset="0" stop-color="#009900"/><stop offset=".125" stop-color="#009908"/><stop offset=".25" stop-color="#009914"/><stop offset=".375" stop-color="#009921"/><stop offset=".5" stop-color="#00992f"/><stop offset=".625" stop-color="#00993d"/><stop offset=".75" stop-color="#00994c"/><stop offset=".875" stop-color="#00995c"/><stop offset="1" stop-color="#00996d"/></linearGradient>
<rect x="960" y="74.0" width="5" height="90.0" fill="url(#fo2)"/>
<linearGradient id="fo3" gradientUnits="userSpaceOnUse" x1="0" y1="71.0" x2="0" y2="178.8"><stop offset="0" stop-color="#009900"/><stop offset=".1" stop-color="#009904"/><stop offset=".2" stop-color="#009910"/><stop offset=".3" stop-color="#00991c"/><stop offset=".4" stop-color="#009929"/><stop offset=".5" stop-color="#009936"/><stop offset=".6" stop-color="#009944"/><stop offset=".7" stop-color="#009953"/><stop offset=".8" stop-color="#009963"/><stop offset=".9" stop-color="#009974"/><stop offset="1" stop-color="#009985"/></linearGradient>
<rect x="965" y="71.0" width="5" height="107.8" fill="url(#fo3)"/>
<linearGradient id="fo4" gradientUnits="userSpaceOnUse" x1="0" y1="69.2" x2="0" y2="192.4"><stop offset="0" stop-color="#009900"/><stop offset=".091" stop-color="#009902"/><stop offset=".182" stop-color="#00990e"/><stop offset=".273" stop-color="#00991b"/><stop offset=".364" stop-color="#009929"/><stop offset=".455" stop-color="#009937"/><stop offset=".545" stop-color="#009946"/><stop offset=".636" stop-color="#009956"/><stop offset=".727" stop-color="#009966"/><stop offset=".818" stop-color="#009978"/><stop offset=".909" stop-color="#00998b"/><stop offset="1" stop-color="#009399"/></linearGradient>
<rect x="970" y="69.2" width="5" height="123.2" fill="url(#fo4)"/>
<linearGradient id="fo5" gradientUnits="userSpaceOnUse" x1="0" y1="68.0" x2="0" y2="205.0"><stop offset="0" stop-color="#009900"/><stop offset=".083" stop-color="#009900"/><stop offset=".167" stop-color="#00990d"/><stop offset=".25" stop-color="#00991a"/><stop offset=".333" stop-color="#009928"/><stop offset=".417" stop-color="#009937"/><stop offset=".5" stop-color="#009946"/><stop offset=".583" stop-color="#009957"/><stop offset=".667" stop-color="#009968"/><stop offset=".75" stop-color="#00997a"/><stop offset=".833" stop-color="#00998e"/><stop offset=".917" stop-color="#009099"/><stop offset="1" stop-color="#007f99"/></linearGradient>
<rect x="975" y="68.0" width="5" height="137.0" fill="url(#fo5)"/>
<linearGradient id="fo6" gradientUnits="userSpaceOnUse" x1="0" y1="67.4" x2="0" y2="217.0"><stop offset="0" stop-color="#009900"/><stop offset=".071" stop-color="#009900"/><stop offset=".143" stop-color="#00990a"/><stop offset=".214" stop-color="#009917"/><stop offset=".286" stop-color="#009924"/><stop offset=".357" stop-color="#009931"/><stop offset=".429" stop-color="#009940"/><stop offset=".5" stop-color="#00994f"/><stop offset=".571" stop-color="#00995f"/><stop offset=".643" stop-color="#00996f"/><stop offset=".714" stop-color="#009981"/><stop offset=".786" stop-color="#009994"/><stop offset=".857" stop-color="#008b99"/><stop offset=".929" stop-color="#007c99"/><stop offset="1" stop-color="#006e99"/></linearGradient>
<rect x="980" y="67.4" width="5" height="149.6" fill="url(#fo6)"/>
<linearGradient id="fo7" gradientUnits="userSpaceOnUse" x1="0" y1="67.0" x2="0" y2="228.5"><stop offset="0" stop-color="#009900"/><stop offset=".067" stop-color="#009900"/><stop offset=".133" stop-color="#009909"/><stop offset=".2" stop-color="#009916"/><stop offset=".267" stop-color="#009923"/><stop offset=".333" stop-color="#009931"/><stop offset=".4" stop-color="#009940"/><stop offset=".467" stop-color="#00994f"/><stop offset=".533" stop-color="#009960"/><stop offset=".6" stop-color="#009971"/><stop offset=".667" stop-color="#009983"/><stop offset=".733" stop-color="#009996"/><stop offset=".8" stop-color="#008999"/><stop offset=".867" stop-color="#007999"/><stop offset=".933" stop-color="#006c99"/><stop offset="1" stop-color="#006199"/></linearGradient>
<rect x="985" y="67.0" width="5" height="161.5" fill="url(#fo7)"/>
<linearGradient id="fo8" gradientUnits="userSpaceOnUse" x1="0" y1="66.8" x2="0" y2="239.5"><stop offset="0" stop-color="#009900"/><stop offset=".062" stop-color="#009900"/><stop offset=".125" stop-color="#009909"/><stop offset=".188" stop-color="#009916"/><stop offset=".25" stop-color="#009923"/><stop offset=".312" stop-color="#009931"/><stop offset=".375" stop-color="#009940"/><stop offset=".438" stop-color="#009950"/><stop offset=".5" stop-color="#009960"/><stop offset=".562" stop-color="#009972"/><stop offset=".625" stop-color="#009984"/><stop offset=".688" stop-color="#009998"/><stop offset=".75" stop-color="#008799"/><stop offset=".812" stop-color="#007899"/><stop offset=".875" stop-color="#006b99"/><stop offset=".938" stop-color="#005f99"/><stop offset="1" stop-color="#005699"/></linearGradient>
<rect x="990" y="66.8" width="5" height="172.8" fill="url(#fo8)"/>
<linearGradient id="fo9" gradientUnits="userSpaceOnUse" x1="0" y1="66.7" x2="0" y2="250.1"><stop offset="0" stop-color="#009900"/><stop offset=".059" stop-color="#009900"/><stop offset=".118" stop-color="#009908"/><stop offset=".176" stop-color="#009915"/><stop offset=".235" stop-color="#009923"/><stop offset=".294" stop-color="#009931"/><stop offset=".353" stop-color="#009940"/><stop offset=".412" stop-color="#009950"/><stop offset=".471" stop-color="#009961"/><stop offset=".529" stop-color="#009973"/><stop offset=".588" stop-color="#009985"/><stop offset=".647" stop-color="#009999"/><stop offset=".706" stop-color="#008699"/><stop offset=".765" stop-color="#007699"/><stop offset=".824" stop-color="#006999"/><stop offset=".882" stop-color="#005e99"/><stop offset=".941" stop-color="#005599"/><stop offset="1" stop-color="#004c99"/></linearGradient>
<rect x="995" y="66.7" width="5" height="183.4" fill="url(#fo9)"/>
<linearGradient id="fo10" gradientUnits="userSpaceOnUse" x1="0" y1="66.6" x2="0" y2="260.2"><stop offset="0" stop-color="#009900"/><stop offset=".056" stop-color="#009900"/><stop offset=".111" stop-color="#009908"/><stop offset=".167" stop-color="#009915"/><stop offset=".222" stop-color="#009922"/><stop offset=".278" stop-color="#009931"/><stop offset=".333" stop-color="#009940"/><stop offset=".389" stop-color="#009950"/><stop offset=".444" stop-color="#009961"/><stop offset=".5" stop-color="#009973"/><stop offset=".556" stop-color="#009986"/><stop offset=".611" stop-color="#009899"/><stop offset=".667" stop-color="#008599"/><stop offset=".722" stop-color="#007699"/><stop offset=".778" stop-color="#006999"/><stop offset=".833" stop-color="#005e99"/><stop offset=".889" stop-color="#005499"/><stop offset=".944" stop-color="#004c99"/><stop offset="1" stop-color="#004499"/></linearGradient>
<rect x="1000" y="66.6" width="5" height="193.6" fill="url(#fo10)"/>
<linearGradient id="fo11" gradientUnits="userSpaceOnUse" x1="0" y1="66.7" x2="0" y2="269.8"><stop offset="0" stop-color="#009900"/><stop offset=".056" stop-color="#009900"/><stop offset=".111" stop-color="#009909"/><stop offset=".167" stop-color="#009916"/><stop offset=".222" stop-color="#009925"/><stop offset=".278" stop-color="#009935"/><stop offset=".333" stop-color="#009945"/><stop offset=".389" stop-color="#009956"/><stop offset=".444" stop-color="#009969"/><stop offset=".5" stop-color="#00997c"/><stop offset=".556" stop-color="#009991"/><stop offset=".611" stop-color="#008c99"/><stop offset=".667" stop-color="#007a99"/><stop offset=".722" stop-color="#006c99"/><stop offset=".778" stop-color="#005f99"/><stop offset=".833" stop-color="#005599"/><stop offset=".889" stop-color="#004c99"/><stop offset=".944" stop-color="#004499"/><stop offset="1" stop-color="#003d99"/></linearGradient>
<rect x="1005" y="66.7" width="5" height="203.1" fill="url(#fo11)"/>
<linearGradient id="fo12" gradientUnits="userSpaceOnUse" x1="0" y1="66.8" x2="0" y2="279.0"><stop offset="0" stop-color="#009900"/><stop offset=".053" stop-color="#009900"/><stop offset=".105" stop-color="#009908"/><stop offset=".158" stop-color="#009916"/><stop offset=".211" stop-color="#009924"/><stop offset=".263" stop-color="#009934"/><stop offset=".316" stop-color="#009944"/><stop offset=".368" stop-color="#009956"/><stop offset=".421" stop-color="#009968"/><stop offset=".474" stop-color="#00997c"/><stop offset=".526" stop-color="#009991"/><stop offset=".579" stop-color="#008c99"/><stop offset=".632" stop-color="#007a99"/><stop offset=".684" stop-color="#006c99"/><stop offset=".737" stop-color="#006099"/><stop offset=".789" stop-color="#005599"/><stop offset=".842" stop-color="#004c99"/><stop offset=".895" stop-color="#004499"/><stop offset=".947" stop-color="#003d99"/><stop offset="1" stop-color="#003799"/></linearGradient>
<rect x="1010" y="66.8" width="5" height="212.3" fill="url(#fo12)"/>
<linearGradient id="fo13" gradientUnits="userSpaceOnUse" x1="0" y1="66.9" x2="0" y2="288.0"><stop offset="0" stop-color="#009900"/><stop offset=".05" stop-color="#009900"/><stop offset=".1" stop-color="#009907"/><stop offset=".15" stop-color="#009915"/><stop offset=".2" stop-color="#009924"/><stop offset=".25" stop-color="#009933"/><stop offset=".3" stop-color="#009944"/><stop offset=".35" stop-color="#009955"/><stop offset=".4" stop-color="#009968"/><stop offset=".45" stop-color="#00997b"/><stop offset=".5" stop-color="#009990"/><stop offset=".55" stop-color="#008c99"/><stop offset=".6" stop-color="#007b99"/><stop offset=".65" stop-color="#006c99"/><stop offset=".7" stop-color="#006099"/><stop offset=".75" stop-color="#005599"/><stop offset=".8" stop-color="#004c99"/><stop offset=".85" stop-color="#004499"/><stop offset=".9" stop-color="#003d99"/><stop offset=".95" stop-color="#003799"/><stop offset="1" stop-color="#003299"/></linearGradient>
<rect x="1015" y="66.9" width="5" height="221.1" fill="url(#fo13)"/>
<linearGradient id="fo14" gradientUnits="userSpaceOnUse" x1="0" y1="67.1" x2="0" y2="296.8"><stop offset="0" stop-color="#009900"/><stop offset=".048" stop-color="#009900"/><stop offset=".095" stop-color="#009907"/><stop offset=".143" stop-color="#009915"/><stop offset=".19" stop-color="#009923"/><stop offset=".238" stop-color="#009933"/><stop offset=".286" stop-color="#009943"/><stop offset=".333" stop-color="#009955"/><stop offset=".381" stop-color="#009967"/><stop offset=".429" stop-color="#00997b"/><stop offset=".476" stop-color="#009990"/><stop offset=".524" stop-color="#008d99"/><stop offset=".571" stop-color="#007b99"/><stop offset=".619" stop-color="#006c99"/><stop offset=".667" stop-color="#006099"/><stop offset=".714" stop-color="#005599"/><stop offset=".762" stop-color="#004c99"/><stop offset=".81" stop-color="#004499"/><stop offset=".857" stop-color="#003d99"/><stop offset=".905" stop-color="#003799"/><stop offset=".952" stop-color="#003299"/><stop offset="1" stop-color="#002d99"/></linearGradient>
<rect x="1020" y="67.1" width="5" height="229.7" fill="url(#fo14)"/>
<linearGradient id="fo15" gradientUnits="userSpaceOnUse" x1="0" y1="67.4" x2="0" y2="305.4"><stop offset="0" stop-color="#009900"/><stop offset=".045" stop-color="#009900"/><stop offset=".091" stop-color="#009906"/><stop offset=".136" stop-color="#009914"/><stop offset=".182" stop-color="#009923"/><stop offset=".227" stop-color="#009933"/><stop offset=".273" stop-color="#009943"/><stop offset=".318" stop-color="#009954"/><stop offset=".364" stop-color="#009967"/><stop offset=".409" stop-color="#00997b"/><stop offset=".455" stop-color="#009990"/><stop offset=".5" stop-color="#008d99"/><stop offset=".545" stop-color="#007b99"/><stop offset=".591" stop-color="#006c99"/><stop offset=".636" stop-color="#006099"/><stop offset=".682" stop-color="#005599"/><stop offset=".727" stop-color="#004c99"/><stop offset=".773" stop-color="#004499"/><stop offset=".818" stop-color="#003d99"/><stop offset=".864" stop-color="#003799"/><stop offset=".909" stop-color="#003299"/><stop offset=".955" stop-color="#002d99"/><stop offset="1" stop-color="#002899"/></linearGradient>
<rect x="1025" y="67.4" width="5" height="238.0" fill="url(#fo15)"/>
<linearGradient id="fo16" gradientUnits="userSpaceOnUse" x1="0" y1="67.7" x2="0" y2="313.9"><stop offset="0" stop-color="#009900"/><stop offset=".045" stop-color="#009900"/><stop offset=".091" stop-color="#009907"/><stop offset=".136" stop-color="#009916"/><stop offset=".182" stop-color="#009925"/><stop offset=".227" stop-color="#009936"/><stop offset=".273" stop-color="#009947"/><stop offset=".318" stop-color="#00995a"/><stop offset=".364" stop-color="#00996e"/><stop offset=".409" stop-color="#009983"/><stop offset=".455" stop-color="#009899"/><stop offset=".5" stop-color="#008499"/><stop offset=".545" stop-color="#007399"/><stop offset=".591" stop-color="#006599"/><stop offset=".636" stop-color="#005999"/><stop offset=".682" stop-color="#004f99"/><stop offset=".727" stop-color="#004699"/><stop offset=".773" stop-color="#003f99"/><stop offset=".818" stop-color="#003899"/><stop offset=".864" stop-color="#003299"/><stop offset=".909" stop-color="#002d99"/><stop offset=".955" stop-color="#002899"/><stop offset="1" stop-color="#002499"/></linearGradient>
<rect x="1030" y="67.7" width="5" height="246.2" fill="url(#fo16)"/>
<linearGradient id="fo17" gradientUnits="userSpaceOnUse" x1="0" y1="68.1" x2="0" y2="322.3"><stop offset="0" stop-color="#009900"/><stop offset=".043" stop-color="#009900"/><stop offset=".087" stop-color="#009907"/><stop offset=".13" stop-color="#009916"/><stop offset=".174" stop-color="#009925"/><stop offset=".217" stop-color="#009935"/><stop offset=".261" stop-color="#009947"/><stop offset=".304" stop-color="#009959"/><stop offset=".348" stop-color="#00996d"/><stop offset=".391" stop-color="#009982"/><stop offset=".435" stop-color="#009999"/><stop offset=".478" stop-color="#008499"/><stop offset=".522" stop-color="#007399"/><stop offset=".565" stop-color="#006599"/><stop offset=".609" stop-color="#005999"/><stop offset=".652" stop-color="#004f99"/><stop offset=".696" stop-color="#004699"/><stop offset=".739" stop-color="#003f99"/><stop offset=".783" stop-color="#003899"/><stop offset=".826" stop-color="#003299"/><stop offset=".87" stop-color="#002d99"/><stop offset=".913" stop-color="#002899"/><stop offset=".957" stop-color="#002499"/><stop offset="1" stop-color="#002099"/></linearGradient>
<rect x="1035" y="68.1" width="5" height="254.3" fill="url(#fo17)"/>
<linearGradient id="fo18" gradientUnits="userSpaceOnUse" x1="0" y1="68.4" x2="0" y2="330.6"><stop offset="0" stop-color="#009900"/><stop offset=".042" stop-color="#009900"/><stop offset=".083" stop-color="#009907"/><stop offset=".125" stop-color="#009915"/><stop offset=".167" stop-color="#009925"/><stop offset=".208" stop-color="#009935"/><stop offset=".25" stop-color="#009947"/><stop offset=".292" stop-color="#009959"/><stop offset=".333" stop-color="#00996d"/><stop offset=".375" stop-color="#009982"/><stop offset=".417" stop-color="#009999"/><stop offset=".458" stop-color="#008499"/><stop offset=".5" stop-color="#007399"/><stop offset=".542" stop-color="#006599"/><stop offset=".583" stop-color="#005999"/><stop offset=".625" stop-color="#004f99"/><stop offset=".667" stop-color="#004699"/><stop offset=".708" stop-color="#003f99"/><stop offset=".75" stop-color="#003899"/><stop offset=".792" stop-color="#003299"/><stop offset=".833" stop-color="#002d99"/><stop offset=".875" stop-color="#002899"/><stop offset=".917" stop-color="#002499"/><stop offset=".958" stop-color="#002099"/><stop offset="1" stop-color="#001d99"/></linearGradient>
<rect x="1040" y="68.4" width="5" height="262.1" fill="url(#fo18)"/>
<linearGradient id="fo19" gradientUnits="userSpaceOnUse" x1="0" y1="68.8" x2="0" y2="338.6"><stop offset="0" stop-color="#009900"/><stop offset=".04" stop-color="#009900"/><stop offset=".08" stop-color="#009906"/><stop offset=".12" stop-color="#009915"/><stop offset=".16" stop-color="#009924"/><stop offset=".2" stop-color="#009935"/><stop offset=".24" stop-color="#009946"/><stop offset=".28" stop-color="#009959"/><stop offset=".32" stop-color="#00996d"/><stop offset=".36" stop-color="#009982"/><stop offset=".4" stop-color="#009999"/><stop offset=".44" stop-color="#008499"/><stop offset=".48" stop-color="#007399"/><stop offset=".52" stop-color="#006599"/><stop offset=".56" stop-color="#005999"/><stop offset=".6" stop-color="#004f99"/><stop offset=".64" stop-color="#004699"/><stop offset=".68" stop-color="#003f99"/><stop offset=".72" stop-color="#003899"/><stop offset=".76" stop-color="#003299"/><stop offset=".8" stop-color="#002d99"/><stop offset=".84" stop-color="#002899"/><stop offset=".88" stop-color="#002499"/><stop offset=".92" stop-color="#002099"/><stop offset=".96" stop-color="#001d99"/><stop offset="1" stop-color="#001999"/></linearGradient>
<rect x="1045" y="68.8" width="5" height="269.8" fill="url(#fo19)"/>
<linearGradient id="fo20" gradientUnits="userSpaceOnUse" x1="0" y1="69.3" x2="0" y2="346.6"><stop offset="0" stop-color="#009900"/><stop offset=".04" stop-color="#009900"/><stop offset=".08" stop-color="#009907"/><stop offset=".12" stop-color="#009916"/><stop offset=".16" stop-color="#009927"/><stop offset=".2" stop-color="#009938"/><stop offset=".24" stop-color="#00994a"/><stop offset=".28" stop-color="#00995e"/><stop offset=".32" stop-color="#009973"/><stop offset=".36" stop-color="#00998a"/><stop offset=".4" stop-color="#009099"/><stop offset=".44" stop-color="#007c99"/><stop offset=".48" stop-color="#006c99"/><stop offset=".52" stop-color="#005e99"/><stop offset=".56" stop-color="#005399"/><stop offset=".6" stop-color="#004999"/><stop offset=".64" stop-color="#004199"/><stop offset=".68" stop-color="#003a99"/><stop offset=".72" stop-color="#003499"/><stop offset=".76" stop-color="#002e99"/><stop offset=".8" stop-color="#002999"/><stop offset=".84" stop-color="#002599"/><stop offset=".88" stop-color="#002099"/><stop offset=".92" stop-color="#001d99"/><stop offset=".96" stop-color="#001999"/><stop offset="1" stop-color="#001699"/></linearGradient>
<rect x="1050" y="69.3" width="5" height="277.3" fill="url(#fo20)"/>
<linearGradient id="fo21" gradientUnits="userSpaceOnUse" x1="0" y1="69.7" x2="0" y2="354.4"><stop offset="0" stop-color="#009900"/><stop offset=".038" stop-color="#009900"/><stop offset=".077" stop-color="#009907"/><stop offset=".115" stop-color="#009916"/><stop offset=".154" stop-color="#009926"/><stop offset=".192" stop-color="#009938"/><stop offset=".231" stop-color="#00994a"/><stop offset=".269" stop-color="#00995e"/><stop offset=".308" stop-color="#009973"/><stop offset=".346" stop-color="#00998a"/><stop offset=".385" stop-color="#009099"/><stop offset=".423" stop-color="#007c99"/><stop offset=".462" stop-color="#006c99"/><stop offset=".5" stop-color="#005e99"/><stop offset=".538" stop-color="#005399"/><stop offset=".577" stop-color="#004999"/><stop offset=".615" stop-color="#004199"/><stop offset=".654" stop-color="#003a99"/><stop offset=".692" stop-color="#003499"/><stop offset=".731" stop-color="#002e99"/><stop offset=".769" stop-color="#002999"/><stop offset=".808" stop-color="#002499"/><stop offset=".846" stop-color="#002099"/><stop offset=".885" stop-color="#001d99"/><stop offset=".923" stop-color="#001999"/><stop offset=".962" stop-color="#001699"/><stop offset="1" stop-color="#001499"/></linearGradient>
<rect x="1055" y="69.7" width="5" height="284.7" fill="url(#fo21)"/>
<linearGradient id="fo22" gradientUnits="userSpaceOnUse" x1="0" y1="70.2" x2="0" y2="362.0"><stop offset="0" stop-color="#009900"/><stop offset=".037" stop-color="#009900"/><stop offset=".074" stop-color="#009907"/><stop offset=".111" stop-color="#009916"/><stop offset=".148" stop-color="#009926"/><stop offset=".185" stop-color="#009937"/><stop offset=".222" stop-color="#00994a"/><stop offset=".259" stop-color="#00995e"/><stop offset=".296" stop-color="#009973"/><stop offset=".333" stop-color="#00998a"/><stop offset=".37" stop-color="#009099"/><stop offset=".407" stop-color="#007c99"/><stop offset=".444" stop-color="#006c99"/><stop offset=".481" stop-color="#005e99"/><stop offset=".519" stop-color="#005399"/><stop offset=".556" stop-color="#004999"/><stop offset=".593" stop-color="#004199"/><stop offset=".63" stop-color="#003a99"/><stop offset=".667" stop-color="#003499"/><stop offset=".704" stop-color="#002e99"/><stop offset=".741" stop-color="#002999"/><stop offset=".778" stop-color="#002499"/><stop offset=".815" stop-color="#002099"/><stop offset=".852" stop-color="#001d99"/><stop offset=".889" stop-color="#001999"/><stop offset=".926" stop-color="#001699"/><stop offset=".963" stop-color="#001399"/><stop offset="1" stop-color="#001199"/></linearGradient>
<rect x="1060" y="70.2" width="5" height="291.8" fill="url(#fo22)"/>
<linearGradient id="fo23" gradientUnits="userSpaceOnUse" x1="0" y1="70.7" x2="0" y2="369.5"><stop offset="0" stop-color="#009900"/><stop offset=".037" stop-color="#009900"/><stop offset=".074" stop-color="#009907"/><stop offset=".111" stop-color="#009917"/><stop offset=".148" stop-color="#009928"/><stop offset=".185" stop-color="#00993b"/><stop offset=".222" stop-color="#00994e"/><stop offset=".259" stop-color="#009963"/><stop offset=".296" stop-color="#009979"/><stop offset=".333" stop-color="#009992"/><stop offset=".37" stop-color="#008899"/><stop offset=".407" stop-color="#007599"/><stop offset=".444" stop-color="#006699"/><stop offset=".481" stop-color="#005999"/><stop offset=".519" stop-color="#004e99"/><stop offset=".556" stop-color="#004599"/><stop offset=".593" stop-color="#003d99"/><stop offset=".63" stop-color="#003699"/><stop offset=".667" stop-color="#003099"/><stop offset=".704" stop-color="#002a99"/><stop offset=".741" stop-color="#002599"/><stop offset=".778" stop-color="#002199"/><stop offset=".815" stop-color="#001d99"/><stop offset=".852" stop-color="#001a99"/><stop offset=".889" stop-color="#001799"/><stop offset=".926" stop-color="#001499"/><stop offset=".963" stop-color="#001199"/><stop offset="1" stop-color="#000e99"/></linearGradient>
<rect x="1065" y="70.7" width="5" height="298.8" fill="url(#fo23)"/>
<linearGradient id="fo24" gradientUnits="userSpaceOnUse" x1="0" y1="71.2" x2="0" y2="376.8"><stop offset="0" stop-color="#009900"/><stop offset=".036" stop-color="#009900"/><stop offset=".071" stop-color="#009907"/><stop offset=".107" stop-color="#009917"/><stop offset=".143" stop-color="#009928"/><stop offset=".179" stop-color="#00993a"/><stop offset=".214" stop-color="#00994e"/><stop offset=".25" stop-color="#009963"/><stop offset=".286" stop-color="#009979"/><stop offset=".321" stop-color="#009991"/><stop offset=".357" stop-color="#008999"/><stop offset=".393" stop-color="#007599"/><stop offset=".429" stop-color="#006699"/><stop offset=".464" stop-color="#005999"/><stop offset=".5" stop-color="#004e99"/><stop offset=".536" stop-color="#004599"/><stop offset=".571" stop-color="#003d99"/><stop offset=".607" stop-color="#003699"/><stop offset=".643" stop-color="#003099"/><stop offset=".679" stop-color="#002a99"/><stop offset=".714" stop-color="#002599"/><stop offset=".75" stop-color="#002199"/><stop offset=".786" stop-color="#001d99"/><stop offset=".821" stop-color="#001a99"/><stop offset=".857" stop-color="#001699"/><stop offset=".893" stop-color="#001499"/><stop offset=".929" stop-color="#001199"/><stop offset=".964" stop-color="#000e99"/><stop offset="1" stop-color="#000c99"/></linearGradient>
<rect x="1070" y="71.2" width="5" height="305.6" fill="url(#fo24)"/>
<linearGradient id="fo25" gradientUnits="userSpaceOnUse" x1="0" y1="71.7" x2="0" y2="383.8"><stop offset="0" stop-color="#079900"/><stop offset=".036" stop-color="#059900"/><stop offset=".071" stop-color="#029908"/><stop offset=".107" stop-color="#009919"/><stop offset=".143" stop-color="#00992a"/><stop offset=".179" stop-color="#00993e"/><stop offset=".214" stop-color="#009952"/><stop offset=".25" stop-color="#009968"/><stop offset=".286" stop-color="#009980"/><stop offset=".321" stop-color="#009999"/><stop offset=".357" stop-color="#008199"/><stop offset=".393" stop-color="#006f99"/><stop offset=".429" stop-color="#006099"/><stop offset=".464" stop-color="#005399"/><stop offset=".5" stop-color="#004999"/><stop offset=".536" stop-color="#004099"/><stop offset=".571" stop-color="#003999"/><stop offset=".607" stop-color="#003299"/><stop offset=".643" stop-color="#002c99"/><stop offset=".679" stop-color="#002799"/><stop offset=".714" stop-color="#002299"/><stop offset=".75" stop-color="#001e99"/><stop offset=".786" stop-color="#001a99"/><stop offset=".821" stop-color="#001799"/><stop offset=".857" stop-color="#001499"/><stop offset=".893" stop-color="#001199"/><stop offset=".929" stop-color="#000e99"/><stop offset=".964" stop-color="#000c99"/><stop offset="1" stop-color="#000a99"/></linearGradient>
<rect x="1075" y="71.7" width="5" height="312.1" fill="url(#fo25)"/>
<linearGradient id="fo26" gradientUnits="userSpaceOnUse" x1="0" y1="72.2" x2="0" y2="390.8"><stop offset="0" stop-color="#0f9900"/><stop offset=".034" stop-color="#0c9900"/><stop offset=".069" stop-color="#0a9908"/><stop offset=".103" stop-color="#089918"/><stop offset=".138" stop-color="#05992a"/><stop offset=".172" stop-color="#02993d"/><stop offset=".207" stop-color="#009952"/><stop offset=".241" stop-color="#009968"/><stop offset=".276" stop-color="#00997f"/><stop offset=".31" stop-color="#009999"/><stop offset=".345" stop-color="#008299"/><stop offset=".379" stop-color="#006f99"/><stop offset=".414" stop-color="#006099"/><stop offset=".448" stop-color="#005499"/><stop offset=".483" stop-color="#004999"/><stop offset=".517" stop-color="#004099"/><stop offset=".552" stop-color="#003999"/><stop offset=".586" stop-color="#003299"/><stop offset=".621" stop-color="#002c99"/><stop offset=".655" stop-color="#002799"/><stop offset=".69" stop-color="#002299"/><stop offset=".724" stop-color="#001e99"/><stop offset=".759" stop-color="#001a99"/><stop offset=".793" stop-color="#001799"/><stop offset=".828" stop-color="#001499"/><stop offset=".862" stop-color="#001199"/><stop offset=".897" stop-color="#000e99"/><stop offset=".931" stop-color="#000c99"/><stop offset=".966" stop-color="#000a99"/><stop offset="1" stop-color="#000899"/></linearGradient>
<rect x="1080" y="72.2" width="5" height="318.5" fill="url(#fo26)"/>
<linearGradient id="fo27" gradientUnits="userSpaceOnUse" x1="0" y1="72.7" x2="0" y2="397.5"><stop offset="0" stop-color="#169900"/><stop offset=".033" stop-color="#149900"/><stop offset=".067" stop-color="#129907"/><stop offset=".1" stop-color="#109918"/><stop offset=".133" stop-color="#0d992a"/><stop offset=".167" stop-color="#0b993d"/><stop offset=".2" stop-color="#089951"/><stop offset=".233" stop-color="#059967"/><stop offset=".267" stop-color="#02997f"/><stop offset=".3" stop-color="#009999"/><stop offset=".333" stop-color="#008299"/><stop offset=".367" stop-color="#006f99"/><stop offset=".4" stop-color="#006099"/><stop offset=".433" stop-color="#005499"/><stop offset=".467" stop-color="#004999"/><stop offset=".5" stop-color="#004099"/><stop offset=".533" stop-color="#003999"/><stop offset=".567" stop-color="#003299"/><stop offset=".6" stop-color="#002c99"/><stop offset=".633" stop-color="#002799"/><stop offset=".667" stop-color="#002299"/><stop offset=".7" stop-color="#001e99"/><stop offset=".733" stop-color="#001a99"/><stop offset=".767" stop-color="#001799"/><stop offset=".8" stop-color="#001499"/><stop offset=".833" stop-color="#001199"/><stop offset=".867" stop-color="#000e99"/><stop offset=".9" stop-color="#000c99"/><stop offset=".933" stop-color="#000a99"/><stop offset=".967" stop-color="#000899"/><stop offset="1" stop-color="#000699"/></linearGradient>
<rect x="1085" y="72.7" width="5" height="324.8" fill="url(#fo27)"/>
<linearGradient id="fo28" gradientUnits="userSpaceOnUse" x1="0" y1="73.3" x2="0" y2="404.1"><stop offset="0" stop-color="#1e9900"/><stop offset=".033" stop-color="#1c9900"/><stop offset=".067" stop-color="#1a9908"/><stop offset=".1" stop-color="#18991a"/><stop offset=".133" stop-color="#16992c"/><stop offset=".167" stop-color="#139940"/><stop offset=".2" stop-color="#119956"/><stop offset=".233" stop-color="#0e996d"/><stop offset=".267" stop-color="#0b9986"/><stop offset=".3" stop-color="#079299"/><stop offset=".333" stop-color="#037b99"/><stop offset=".367" stop-color="#006999"/><stop offset=".4" stop-color="#005b99"/><stop offset=".433" stop-color="#004f99"/><stop offset=".467" stop-color="#004599"/><stop offset=".5" stop-color="#003c99"/><stop offset=".533" stop-color="#003599"/><stop offset=".567" stop-color="#002e99"/><stop offset=".6" stop-color="#002999"/><stop offset=".633" stop-color="#002499"/><stop offset=".667" stop-color="#001f99"/><stop offset=".7" stop-color="#001b99"/><stop offset=".733" stop-color="#001899"/><stop offset=".767" stop-color="#001499"/><stop offset=".8" stop-color="#001199"/><stop offset=".833" stop-color="#000f99"/><stop offset=".867" stop-color="#000c99"/><stop offset=".9" stop-color="#000a99"/><stop offset=".933" stop-color="#000899"/><stop offset=".967" stop-color="#000699"/><stop offset="1" stop-color="#000499"/></linearGradient>
<rect x="1090" y="73.3" width="5" height="330.9" fill="url(#fo28)"/>
<linearGradient id="fo29" gradientUnits="userSpaceOnUse" x1="0" y1="73.8" x2="0" y2="410.6"><stop offset="0" stop-color="#269900"/><stop offset=".032" stop-color="#249900"/><stop offset=".065" stop-color="#239908"/><stop offset=".097" stop-color="#219919"/><stop offset=".129" stop-color="#1f992c"/><stop offset=".161" stop-color="#1d9940"/><stop offset=".194" stop-color="#1b9955"/><stop offset=".226" stop-color="#18996c"/><stop offset=".258" stop-color="#169986"/><stop offset=".29" stop-color="#129299"/><stop offset=".323" stop-color="#0d7b99"/><stop offset=".355" stop-color="#096999"/><stop offset=".387" stop-color="#055b99"/><stop offset=".419" stop-color="#024f99"/><stop offset=".452" stop-color="#004599"/><stop offset=".484" stop-color="#003c99"/><stop offset=".516" stop-color="#003599"/><stop offset=".548" stop-color="#002e99"/><stop offset=".581" stop-color="#002999"/><stop offset=".613" stop-color="#002499"/><stop offset=".645" stop-color="#001f99"/><stop offset=".677" stop-color="#001b99"/><stop offset=".71" stop-color="#001899"/><stop offset=".742" stop-color="#001499"/><stop offset=".774" stop-color="#001199"/><stop offset=".806" stop-color="#000f99"/><stop offset=".839" stop-color="#000c99"/><stop offset=".871" stop-color="#000a99"/><stop offset=".903" stop-color="#000899"/><stop offset=".935" stop-color="#000699"/><stop offset=".968" stop-color="#000499"/><stop offset="1" stop-color="#000299"/></linearGradient>
<rect x="1095" y="73.8" width="5" height="336.8" fill="url(#fo29)"/>
<linearGradient id="fo30" gradientUnits="userSpaceOnUse" x1="0" y1="74.4" x2="0" y2="416.9"><stop offset="0" stop-color="#2e9900"/><stop offset=".032" stop-color="#2d9900"/><stop offset=".065" stop-color="#2b9909"/><stop offset=".097" stop-color="#2a991b"/><stop offset=".129" stop-color="#28992e"/><stop offset=".161" stop-color="#269943"/><stop offset=".194" stop-color="#24995a"/><stop offset=".226" stop-color="#229972"/><stop offset=".258" stop-color="#20998c"/><stop offset=".29" stop-color="#1b8b99"/><stop offset=".323" stop-color="#147599"/><stop offset=".355" stop-color="#0f6499"/><stop offset=".387" stop-color="#0b5699"/><stop offset=".419" stop-color="#084a99"/><stop offset=".452" stop-color="#054199"/><stop offset=".484" stop-color="#033899"/><stop offset=".516" stop-color="#013199"/><stop offset=".548" stop-color="#002b99"/><stop offset=".581" stop-color="#002699"/><stop offset=".613" stop-color="#002199"/><stop offset=".645" stop-color="#001d99"/><stop offset=".677" stop-color="#001999"/><stop offset=".71" stop-color="#001599"/><stop offset=".742" stop-color="#001299"/><stop offset=".774" stop-color="#000f99"/><stop offset=".806" stop-color="#000d99"/><stop offset=".839" stop-color="#000a99"/><stop offset=".871" stop-color="#000899"/><stop offset=".903" stop-color="#000699"/><stop offset=".935" stop-color="#000499"/><stop offset=".968" stop-color="#000299"/><stop offset="1" stop-color="#000199"/></linearGradient>
<rect x="1100" y="74.4" width="5" height="342.5" fill="url(#fo30)"/>
<linearGradient id="fo31" gradientUnits="userSpaceOnUse" x1="0" y1="74.9" x2="0" y2="422.9"><stop offset="0" stop-color="#379900"/><stop offset=".031" stop-color="#369900"/><stop offset=".062" stop-color="#349909"/><stop offset=".094" stop-color="#33991b"/><stop offset=".125" stop-color="#32992e"/><stop offset=".156" stop-color="#309943"/><stop offset=".188" stop-color="#2f9959"/><stop offset=".219" stop-color="#2d9972"/><stop offset=".25" stop-color="#2b998c"/><stop offset=".281" stop-color="#268b99"/><stop offset=".312" stop-color="#1e7599"/><stop offset=".344" stop-color="#186499"/><stop offset=".375" stop-color="#135699"/><stop offset=".406" stop-color="#0f4a99"/><stop offset=".438" stop-color="#0c4199"/><stop offset=".469" stop-color="#093899"/><stop offset=".5" stop-color="#073199"/><stop offset=".531" stop-color="#042b99"/><stop offset=".562" stop-color="#032699"/><stop offset=".594" stop-color="#012199"/><stop offset=".625" stop-color="#001d99"/><stop offset=".656" stop-color="#001999"/><stop offset=".688" stop-color="#001599"/><stop offset=".719" stop-color="#001299"/><stop offset=".75" stop-color="#000f99"/><stop offset=".781" stop-color="#000d99"/><stop offset=".812" stop-color="#000a99"/><stop offset=".844" stop-color="#000899"/><stop offset=".875" stop-color="#000699"/><stop offset=".906" stop-color="#000499"/><stop offset=".938" stop-color="#000299"/><stop offset=".969" stop-color="#000199"/><stop offset="1" stop-color="#000099"/></linearGradient>
<rect x="1105" y="74.9" width="5" height="348.0" fill="url(#fo31)"/>
<linearGradient id="fo32" gradientUnits="userSpaceOnUse" x1="0" y1="75.5" x2="0" y2="428.8"><stop offset="0" stop-color="#3f9900"/><stop offset=".031" stop-color="#3f9900"/><stop offset=".062" stop-color="#3e9909"/><stop offset=".094" stop-color="#3d991c"/><stop offset=".125" stop-color="#3c9930"/><stop offset=".156" stop-color="#3b9946"/><stop offset=".188" stop-color="#3a995d"/><stop offset=".219" stop-color="#389977"/><stop offset=".25" stop-color="#379993"/><stop offset=".281" stop-color="#2e8499"/><stop offset=".312" stop-color="#266f99"/><stop offset=".344" stop-color="#1f5f99"/><stop offset=".375" stop-color="#195199"/><stop offset=".406" stop-color="#154699"/><stop offset=".438" stop-color="#113d99"/><stop offset=".469" stop-color="#0e3599"/><stop offset=".5" stop-color="#0b2e99"/><stop offset=".531" stop-color="#092899"/><stop offset=".562" stop-color="#062399"/><stop offset=".594" stop-color="#051e99"/><stop offset=".625" stop-color="#031a99"/><stop offset=".656" stop-color="#011699"/><stop offset=".688" stop-color="#001399"/><stop offset=".719" stop-color="#001099"/><stop offset=".75" stop-color="#000d99"/><stop offset=".781" stop-color="#000b99"/><stop offset=".812" stop-color="#000899"/><stop offset=".844" stop-color="#000699"/><stop offset=".875" stop-color="#000499"/><stop offset=".906" stop-color="#000299"/><stop offset=".938" stop-color="#000199"/><stop offset=".969" stop-color="#000099"/><stop offset="1" stop-color="#000099"/></linearGradient>
<rect x="1110" y="75.5" width="5" height="353.3" fill="url(#fo32)"/>
<linearGradient id="fo33" gradientUnits="userSpaceOnUse" x1="0" y1="76.0" x2="0" y2="434.5"><stop offset="0" stop-color="#499900"/><stop offset=".03" stop-color="#489900"/><stop offset=".061" stop-color="#479909"/><stop offset=".091" stop-color="#47991c"/><stop offset=".121" stop-color="#469930"/><stop offset=".152" stop-color="#469946"/><stop offset=".182" stop-color="#45995d"/><stop offset=".212" stop-color="#449977"/><stop offset=".242" stop-color="#439993"/><stop offset=".273" stop-color="#398499"/><stop offset=".303" stop-color="#2f6f99"/><stop offset=".333" stop-color="#285f99"/><stop offset=".364" stop-color="#215199"/><stop offset=".394" stop-color="#1c4699"/><stop offset=".424" stop-color="#183d99"/><stop offset=".455" stop-color="#143599"/><stop offset=".485" stop-color="#112e99"/><stop offset=".515" stop-color="#0e2899"/><stop offset=".545" stop-color="#0c2399"/><stop offset=".576" stop-color="#091e99"/><stop offset=".606" stop-color="#071a99"/><stop offset=".636" stop-color="#061699"/><stop offset=".667" stop-color="#041399"/><stop offset=".697" stop-color="#031099"/><stop offset=".727" stop-color="#010d99"/><stop offset=".758" stop-color="#000b99"/><stop offset=".788" stop-color="#000899"/><stop offset=".818" stop-color="#000699"/><stop offset=".848" stop-color="#000499"/><stop offset=".879" stop-color="#000299"/><stop offset=".909" stop-color="#000199"/><stop offset=".939" stop-color="#000099"/><stop offset=".97" stop-color="#000099"/><stop offset="1" stop-color="#000099"/></linearGradient>
<rect x="1115" y="76.0" width="5" height="358.4" fill="url(#fo33)"/>
<linearGradient id="fo34" gradientUnits="userSpaceOnUse" x1="0" y1="76.6" x2="0" y2="440.0"><stop offset="0" stop-color="#529900"/><stop offset=".03" stop-color="#529900"/><stop offset=".061" stop-color="#52990a"/><stop offset=".091" stop-color="#51991d"/><stop offset=".121" stop-color="#519932"/><stop offset=".152" stop-color="#519949"/><stop offset=".182" stop-color="#509961"/><stop offset=".212" stop-color="#50997c"/><stop offset=".242" stop-color="#509899"/><stop offset=".273" stop-color="#417e99"/><stop offset=".303" stop-color="#376a99"/><stop offset=".333" stop-color="#2e5a99"/><stop offset=".364" stop-color="#274d99"/><stop offset=".394" stop-color="#224299"/><stop offset=".424" stop-color="#1d3999"/><stop offset=".455" stop-color="#193299"/><stop offset=".485" stop-color="#152b99"/><stop offset=".515" stop-color="#122599"/><stop offset=".545" stop-color="#0f2099"/><stop offset=".576" stop-color="#0d1c99"/><stop offset=".606" stop-color="#0b1899"/><stop offset=".636" stop-color="#091499"/><stop offset=".667" stop-color="#071199"/><stop offset=".697" stop-color="#060e99"/><stop offset=".727" stop-color="#040b99"/><stop offset=".758" stop-color="#030999"/><stop offset=".788" stop-color="#020799"/><stop offset=".818" stop-color="#010499"/><stop offset=".848" stop-color="#000399"/><stop offset=".879" stop-color="#000199"/><stop offset=".909" stop-color="#000099"/><stop offset=".939" stop-color="#000099"/><stop offset=".97" stop-color="#000099"/><stop offset="1" stop-color="#000099"/></linearGradient>
<rect x="1120" y="76.6" width="5" height="363.4" fill="url(#fo34)"/>
<linearGradient id="fo35" gradientUnits="userSpaceOnUse" x1="0" y1="77.1" x2="0" y2="445.2"><stop offset="0" stop-color="#5c9900"/><stop offset=".03" stop-color="#5c9900"/><stop offset=".061" stop-color="#5c990b"/><stop offset=".091" stop-color="#5c991f"/><stop offset=".121" stop-color="#5c9935"/><stop offset=".152" stop-color="#5d994c"/><stop offset=".182" stop-color="#5d9966"/><stop offset=".212" stop-color="#5d9982"/><stop offset=".242" stop-color="#599299"/><stop offset=".273" stop-color="#4a7899"/><stop offset=".303" stop-color="#3e6599"/><stop offset=".333" stop-color="#355599"/><stop offset=".364" stop-color="#2d4999"/><stop offset=".394" stop-color="#273f99"/><stop offset=".424" stop-color="#223699"/><stop offset=".455" stop-color="#1d2f99"/><stop offset=".485" stop-color="#192899"/><stop offset=".515" stop-color="#162399"/><stop offset=".545" stop-color="#131e99"/><stop offset=".576" stop-color="#111999"/><stop offset=".606" stop-color="#0e1599"/><stop offset=".636" stop-color="#0c1299"/><stop offset=".667" stop-color="#0a0f99"/><stop offset=".697" stop-color="#090c99"/><stop offset=".727" stop-color="#070999"/><stop offset=".758" stop-color="#060799"/><stop offset=".788" stop-color="#040599"/><stop offset=".818" stop-color="#030399"/><stop offset=".848" stop-color="#020199"/><stop offset=".879" stop-color="#010099"/><stop offset=".909" stop-color="#000099"/><stop offset=".939" stop-color="#000099"/><stop offset=".97" stop-color="#000099"/><stop offset="1" stop-color="#000099"/></linearGradient>
<rect x="1125" y="77.1" width="5" height="368.0" fill="url(#fo35)"/>
<linearGradient id="fo36" gradientUnits="userSpaceOnUse" x1="0" y1="77.7" x2="0" y2="450.1"><stop offset="0" stop-color="#669900"/><stop offset=".029" stop-color="#669900"/><stop offset=".059" stop-color="#67990a"/><stop offset=".088" stop-color="#67991f"/><stop offset=".118" stop-color="#689934"/><stop offset=".147" stop-color="#69994c"/><stop offset=".176" stop-color="#6a9965"/><stop offset=".206" stop-color="#6a9981"/><stop offset=".235" stop-color="#669299"/><stop offset=".265" stop-color="#557999"/><stop offset=".294" stop-color="#486599"/><stop offset=".324" stop-color="#3e5699"/><stop offset=".353" stop-color="#354999"/><stop offset=".382" stop-color="#2f3f99"/><stop offset=".412" stop-color="#293699"/><stop offset=".441" stop-color="#242f99"/><stop offset=".471" stop-color="#1f2899"/><stop offset=".5" stop-color="#1c2399"/><stop offset=".529" stop-color="#181e99"/><stop offset=".559" stop-color="#161999"/><stop offset=".588" stop-color="#131699"/><stop offset=".618" stop-color="#111299"/><stop offset=".647" stop-color="#0f0f99"/><stop offset=".676" stop-color="#0d0c99"/><stop offset=".706" stop-color="#0b0999"/><stop offset=".735" stop-color="#090799"/><stop offset=".765" stop-color="#080599"/><stop offset=".794" stop-color="#060399"/><stop offset=".824" stop-color="#050199"/><stop offset=".853" stop-color="#040099"/><stop offset=".882" stop-color="#030099"/><stop offset=".912" stop-color="#020099"/><stop offset=".941" stop-color="#010099"/><stop offset=".971" stop-color="#000099"/><stop offset="1" stop-color="#000099"/></linearGradient>
<rect x="1130" y="77.7" width="5" height="372.4" fill="url(#fo36)"/>
<linearGradient id="fo37" gradientUnits="userSpaceOnUse" x1="0" y1="78.3" x2="0" y2="454.9"><stop offset="0" stop-color="#709900"/><stop offset=".029" stop-color="#719900"/><stop offset=".059" stop-color="#72990b"/><stop offset=".088" stop-color="#739920"/><stop offset=".118" stop-color="#749937"/><stop offset=".147" stop-color="#76994f"/><stop offset=".176" stop-color="#77996a"/><stop offset=".206" stop-color="#799987"/><stop offset=".235" stop-color="#708c99"/><stop offset=".265" stop-color="#5d7399"/><stop offset=".294" stop-color="#4f6099"/><stop offset=".324" stop-color="#445199"/><stop offset=".353" stop-color="#3b4599"/><stop offset=".382" stop-color="#343b99"/><stop offset=".412" stop-color="#2e3399"/><stop offset=".441" stop-color="#282c99"/><stop offset=".471" stop-color="#242599"/><stop offset=".5" stop-color="#202099"/><stop offset=".529" stop-color="#1c1b99"/><stop offset=".559" stop-color="#191799"/><stop offset=".588" stop-color="#161399"/><stop offset=".618" stop-color="#141099"/><stop offset=".647" stop-color="#120d99"/><stop offset=".676" stop-color="#0f0a99"/><stop offset=".706" stop-color="#0e0899"/><stop offset=".735" stop-color="#0c0599"/><stop offset=".765" stop-color="#0a0399"/><stop offset=".794" stop-color="#090199"/><stop offset=".824" stop-color="#080099"/><stop offset=".853" stop-color="#060099"/><stop offset=".882" stop-color="#050099"/><stop offset=".912" stop-color="#040099"/><stop offset=".941" stop-color="#030099"/><stop offset=".971" stop-color="#020099"/><stop offset="1" stop-color="#010099"/></linearGradient>
<rect x="1135" y="78.3" width="5" height="376.7" fill="url(#fo37)"/>
<linearGradient id="fo38" gradientUnits="userSpaceOnUse" x1="0" y1="78.8" x2="0" y2="459.6"><stop offset="0" stop-color="#7b9900"/><stop offset=".029" stop-color="#7c9900"/><stop offset=".057" stop-color="#7e990b"/><stop offset=".086" stop-color="#7f9920"/><stop offset=".114" stop-color="#819936"/><stop offset=".143" stop-color="#83994f"/><stop offset=".171" stop-color="#85996a"/><stop offset=".2" stop-color="#879987"/><stop offset=".229" stop-color="#7e8c99"/><stop offset=".257" stop-color="#6a7399"/><stop offset=".286" stop-color="#5a6099"/><stop offset=".314" stop-color="#4e5199"/><stop offset=".343" stop-color="#444599"/><stop offset=".371" stop-color="#3c3b99"/><stop offset=".4" stop-color="#353399"/><stop offset=".429" stop-color="#2f2c99"/><stop offset=".457" stop-color="#2a2699"/><stop offset=".486" stop-color="#262099"/><stop offset=".514" stop-color="#221b99"/><stop offset=".543" stop-color="#1e1799"/><stop offset=".571" stop-color="#1b1399"/><stop offset=".6" stop-color="#181099"/><stop offset=".629" stop-color="#160d99"/><stop offset=".657" stop-color="#140a99"/><stop offset=".686" stop-color="#120899"/><stop offset=".714" stop-color="#100599"/><stop offset=".743" stop-color="#0e0399"/><stop offset=".771" stop-color="#0c0199"/><stop offset=".8" stop-color="#0b0099"/><stop offset=".829" stop-color="#0a0099"/><stop offset=".857" stop-color="#080099"/><stop offset=".886" stop-color="#070099"/><stop offset=".914" stop-color="#060099"/><stop offset=".943" stop-color="#050099"/><stop offset=".971" stop-color="#040099"/><stop offset="1" stop-color="#030099"/></linearGradient>
<rect x="1140" y="78.8" width="5" height="380.8" fill="url(#fo38)"/>
<linearGradient id="fo39" gradientUnits="userSpaceOnUse" x1="0" y1="79.4" x2="0" y2="464.1"><stop offset="0" stop-color="#869900"/><stop offset=".029" stop-color="#889900"/><stop offset=".057" stop-color="#8a990c"/><stop offset=".086" stop-color="#8c9921"/><stop offset=".114" stop-color="#8e9939"/><stop offset=".143" stop-color="#919952"/><stop offset=".171" stop-color="#94996e"/><stop offset=".2" stop-color="#97998d"/><stop offset=".229" stop-color="#878699"/><stop offset=".257" stop-color="#716e99"/><stop offset=".286" stop-color="#615c99"/><stop offset=".314" stop-color="#544d99"/><stop offset=".343" stop-color="#4a4299"/><stop offset=".371" stop-color="#413899"/><stop offset=".4" stop-color="#3a3099"/><stop offset=".429" stop-color="#342999"/><stop offset=".457" stop-color="#2e2399"/><stop offset=".486" stop-color="#2a1e99"/><stop offset=".514" stop-color="#251999"/><stop offset=".543" stop-color="#221599"/><stop offset=".571" stop-color="#1f1199"/><stop offset=".6" stop-color="#1c0e99"/><stop offset=".629" stop-color="#190b99"/><stop offset=".657" stop-color="#170999"/><stop offset=".686" stop-color="#140699"/><stop offset=".714" stop-color="#120499"/><stop offset=".743" stop-color="#110299"/><stop offset=".771" stop-color="#0f0099"/><stop offset=".8" stop-color="#0d0099"/><stop offset=".829" stop-color="#0c0099"/><stop offset=".857" stop-color="#0b0099"/><stop offset=".886" stop-color="#090099"/><stop offset=".914" stop-color="#080099"/><stop offset=".943" stop-color="#070099"/><stop offset=".971" stop-color="#060099"/><stop offset="1" stop-color="#050099"/></linearGradient>
<rect x="1145" y="79.4" width="5" height="384.7" fill="url(#fo39)"/>
<linearGradient id="fo40" gradientUnits="userSpaceOnUse" x1="0" y1="79.9" x2="0" y2="468.4"><stop offset="0" stop-color="#929900"/><stop offset=".029" stop-color="#949900"/><stop offset=".057" stop-color="#97990d"/><stop offset=".086" stop-color="#999823"/><stop offset=".114" stop-color="#99963a"/><stop offset=".143" stop-color="#999252"/><stop offset=".171" stop-color="#998f6c"/><stop offset=".2" stop-color="#998c87"/><stop offset=".229" stop-color="#908099"/><stop offset=".257" stop-color="#796999"/><stop offset=".286" stop-color="#685799"/><stop offset=".314" stop-color="#5a4999"/><stop offset=".343" stop-color="#4f3e99"/><stop offset=".371" stop-color="#463599"/><stop offset=".4" stop-color="#3f2d99"/><stop offset=".429" stop-color="#382699"/><stop offset=".457" stop-color="#322099"/><stop offset=".486" stop-color="#2d1b99"/><stop offset=".514" stop-color="#291799"/><stop offset=".543" stop-color="#251399"/><stop offset=".571" stop-color="#220f99"/><stop offset=".6" stop-color="#1f0c99"/><stop offset=".629" stop-color="#1c0999"/><stop offset=".657" stop-color="#190799"/><stop offset=".686" stop-color="#170499"/><stop offset=".714" stop-color="#150299"/><stop offset=".743" stop-color="#130099"/><stop offset=".771" stop-color="#110099"/><stop offset=".8" stop-color="#100099"/><stop offset=".829" stop-color="#0e0099"/><stop offset=".857" stop-color="#0d0099"/><stop offset=".886" stop-color="#0b0099"/><stop offset=".914" stop-color="#0a0099"/><stop offset=".943" stop-color="#090099"/><stop offset=".971" stop-color="#080099"/><stop offset="1" stop-color="#070099"/></linearGradient>
<rect x="1150" y="79.9" width="5" height="388.5" fill="url(#fo40)"/>
<linearGradient id="fo41" gradientUnits="userSpaceOnUse" x1="0" y1="80.5" x2="0" y2="472.7"><stop offset="0" stop-color="#999400"/><stop offset=".028" stop-color="#999100"/><stop offset=".056" stop-color="#998f0b"/><stop offset=".083" stop-color="#998c20"/><stop offset=".111" stop-color="#998935"/><stop offset=".139" stop-color="#99864b"/><stop offset=".167" stop-color="#998362"/><stop offset=".194" stop-color="#997f7a"/><stop offset=".222" stop-color="#997c94"/><stop offset=".25" stop-color="#866999"/><stop offset=".278" stop-color="#735799"/><stop offset=".306" stop-color="#654999"/><stop offset=".333" stop-color="#593e99"/><stop offset=".361" stop-color="#4f3599"/><stop offset=".389" stop-color="#462d99"/><stop offset=".417" stop-color="#3f2699"/><stop offset=".444" stop-color="#392099"/><stop offset=".472" stop-color="#341b99"/><stop offset=".5" stop-color="#2f1799"/><stop offset=".528" stop-color="#2b1399"/><stop offset=".556" stop-color="#270f99"/><stop offset=".583" stop-color="#240c99"/><stop offset=".611" stop-color="#210999"/><stop offset=".639" stop-color="#1e0799"/><stop offset=".667" stop-color="#1b0499"/><stop offset=".694" stop-color="#190299"/><stop offset=".722" stop-color="#170099"/><stop offset=".75" stop-color="#150099"/><stop offset=".778" stop-color="#130099"/><stop offset=".806" stop-color="#120099"/><stop offset=".833" stop-color="#100099"/><stop offset=".861" stop-color="#0f0099"/><stop offset=".889" stop-color="#0d0099"/><stop offset=".917" stop-color="#0c0099"/><stop offset=".944" stop-color="#0b0099"/><stop offset=".972" stop-color="#0a0099"/><stop offset="1" stop-color="#090099"/></linearGradient>
<rect x="1155" y="80.5" width="5" height="392.2" fill="url(#fo41)"/>
<linearGradient id="fo42" gradientUnits="userSpaceOnUse" x1="0" y1="81.1" x2="0" y2="476.8"><stop offset="0" stop-color="#998900"/><stop offset=".028" stop-color="#998600"/><stop offset=".056" stop-color="#99840b"/><stop offset=".083" stop-color="#99811e"/><stop offset=".111" stop-color="#997e32"/><stop offset=".139" stop-color="#997a47"/><stop offset=".167" stop-color="#99775d"/><stop offset=".194" stop-color="#997474"/><stop offset=".222" stop-color="#99708c"/><stop offset=".25" stop-color="#8e6499"/><stop offset=".278" stop-color="#7a5399"/><stop offset=".306" stop-color="#6b4699"/><stop offset=".333" stop-color="#5e3b99"/><stop offset=".361" stop-color="#543299"/><stop offset=".389" stop-color="#4b2a99"/><stop offset=".417" stop-color="#442499"/><stop offset=".444" stop-color="#3d1e99"/><stop offset=".472" stop-color="#371999"/><stop offset=".5" stop-color="#331599"/><stop offset=".528" stop-color="#2e1199"/><stop offset=".556" stop-color="#2a0d99"/><stop offset=".583" stop-color="#270a99"/><stop offset=".611" stop-color="#240899"/><stop offset=".639" stop-color="#210599"/><stop offset=".667" stop-color="#1e0399"/><stop offset=".694" stop-color="#1c0199"/><stop offset=".722" stop-color="#190099"/><stop offset=".75" stop-color="#170099"/><stop offset=".778" stop-color="#160099"/><stop offset=".806" stop-color="#140099"/><stop offset=".833" stop-color="#120099"/><stop offset=".861" stop-color="#110099"/><stop offset=".889" stop-color="#0f0099"/><stop offset=".917" stop-color="#0e0099"/><stop offset=".944" stop-color="#0d0099"/><stop offset=".972" stop-color="#0c0099"/><stop offset="1" stop-color="#0a0099"/></linearGradient>
<rect x="1160" y="81.1" width="5" height="395.7" fill="url(#fo42)"/>
<linearGradient id="fo43" gradientUnits="userSpaceOnUse" x1="0" y1="81.6" x2="0" y2="480.9"><stop offset="0" stop-color="#997f00"/><stop offset=".028" stop-color="#997c00"/><stop offset=".056" stop-color="#997a0b"/><stop offset=".083" stop-color="#99771d"/><stop offset=".111" stop-color="#997330"/><stop offset=".139" stop-color="#997044"/><stop offset=".167" stop-color="#996d59"/><stop offset=".194" stop-color="#99696e"/><stop offset=".222" stop-color="#996685"/><stop offset=".25" stop-color="#955f99"/><stop offset=".278" stop-color="#814f99"/><stop offset=".306" stop-color="#714299"/><stop offset=".333" stop-color="#643799"/><stop offset=".361" stop-color="#592f99"/><stop offset=".389" stop-color="#502799"/><stop offset=".417" stop-color="#482199"/><stop offset=".444" stop-color="#411c99"/><stop offset=".472" stop-color="#3b1799"/><stop offset=".5" stop-color="#361399"/><stop offset=".528" stop-color="#320f99"/><stop offset=".556" stop-color="#2d0c99"/><stop offset=".583" stop-color="#2a0999"/><stop offset=".611" stop-color="#260699"/><stop offset=".639" stop-color="#230499"/><stop offset=".667" stop-color="#210199"/><stop offset=".694" stop-color="#1e0099"/><stop offset=".722" stop-color="#1c0099"/><stop offset=".75" stop-color="#1a0099"/><stop offset=".778" stop-color="#180099"/><stop offset=".806" stop-color="#160099"/><stop offset=".833" stop-color="#140099"/><stop offset=".861" stop-color="#130099"/><stop offset=".889" stop-color="#110099"/><stop offset=".917" stop-color="#100099"/><stop offset=".944" stop-color="#0f0099"/><stop offset=".972" stop-color="#0d0099"/><stop offset="1" stop-color="#0c0099"/></linearGradient>
<rect x="1165" y="81.6" width="5" height="399.3" fill="url(#fo43)"/>
<linearGradient id="fo44" gradientUnits="userSpaceOnUse" x1="0" y1="82.2" x2="0" y2="485.0"><stop offset="0" stop-color="#997600"/><stop offset=".027" stop-color="#997400"/><stop offset=".054" stop-color="#99710a"/><stop offset=".081" stop-color="#996e1b"/><stop offset=".108" stop-color="#996b2d"/><stop offset=".135" stop-color="#99683f"/><stop offset=".162" stop-color="#996452"/><stop offset=".189" stop-color="#996166"/><stop offset=".216" stop-color="#995d7a"/><stop offset=".243" stop-color="#995a90"/><stop offset=".27" stop-color="#8d4f99"/><stop offset=".297" stop-color="#7b4299"/><stop offset=".324" stop-color="#6d3799"/><stop offset=".351" stop-color="#622e99"/><stop offset=".378" stop-color="#582799"/><stop offset=".405" stop-color="#4f2199"/><stop offset=".432" stop-color="#481b99"/><stop offset=".459" stop-color="#421799"/><stop offset=".486" stop-color="#3c1399"/><stop offset=".514" stop-color="#370f99"/><stop offset=".541" stop-color="#330c99"/><stop offset=".568" stop-color="#2f0999"/><stop offset=".595" stop-color="#2b0699"/><stop offset=".622" stop-color="#280399"/><stop offset=".649" stop-color="#250199"/><stop offset=".676" stop-color="#220099"/><stop offset=".703" stop-color="#200099"/><stop offset=".73" stop-color="#1e0099"/><stop offset=".757" stop-color="#1c0099"/><stop offset=".784" stop-color="#1a0099"/><stop offset=".811" stop-color="#180099"/><stop offset=".838" stop-color="#160099"/><stop offset=".865" stop-color="#140099"/><stop offset=".892" stop-color="#130099"/><stop offset=".919" stop-color="#120099"/><stop offset=".946" stop-color="#100099"/><stop offset=".973" stop-color="#0f0099"/><stop offset="1" stop-color="#0e0099"/></linearGradient>
<rect x="1170" y="82.2" width="5" height="402.8" fill="url(#fo44)"/>
<linearGradient id="fo45" gradientUnits="userSpaceOnUse" x1="0" y1="82.8" x2="0" y2="489.1"><stop offset="0" stop-color="#996e00"/><stop offset=".027" stop-color="#996c00"/><stop offset=".054" stop-color="#99690a"/><stop offset=".081" stop-color="#99661a"/><stop offset=".108" stop-color="#99632b"/><stop offset=".135" stop-color="#99603d"/><stop offset=".162" stop-color="#995c4f"/><stop offset=".189" stop-color="#995962"/><stop offset=".216" stop-color="#995575"/><stop offset=".243" stop-color="#99518a"/><stop offset=".27" stop-color="#934b99"/><stop offset=".297" stop-color="#813e99"/><stop offset=".324" stop-color="#733499"/><stop offset=".351" stop-color="#672c99"/><stop offset=".378" stop-color="#5c2499"/><stop offset=".405" stop-color="#541e99"/><stop offset=".432" stop-color="#4c1999"/><stop offset=".459" stop-color="#461499"/><stop offset=".486" stop-color="#401099"/><stop offset=".514" stop-color="#3b0d99"/><stop offset=".541" stop-color="#360a99"/><stop offset=".568" stop-color="#320799"/><stop offset=".595" stop-color="#2e0499"/><stop offset=".622" stop-color="#2b0299"/><stop offset=".649" stop-color="#280099"/><stop offset=".676" stop-color="#250099"/><stop offset=".703" stop-color="#220099"/><stop offset=".73" stop-color="#200099"/><stop offset=".757" stop-color="#1e0099"/><stop offset=".784" stop-color="#1c0099"/><stop offset=".811" stop-color="#1a0099"/><stop offset=".838" stop-color="#180099"/><stop offset=".865" stop-color="#160099"/><stop offset=".892" stop-color="#150099"/><stop offset=".919" stop-color="#130099"/><stop offset=".946" stop-color="#120099"/><stop offset=".973" stop-color="#110099"/><stop offset="1" stop-color="#100099"/></linearGradient>
<rect x="1175" y="82.8" width="5" height="406.3" fill="url(#fo45)"/>
<linearGradient id="fo46" gradientUnits="userSpaceOnUse" x1="0" y1="83.4" x2="0" y2="493.2"><stop offset="0" stop-color="#996700"/><stop offset=".027" stop-color="#996400"/><stop offset=".054" stop-color="#99610a"/><stop offset=".081" stop-color="#995e1a"/><stop offset=".108" stop-color="#995b2a"/><stop offset=".135" stop-color="#99583a"/><stop offset=".162" stop-color="#99554c"/><stop offset=".189" stop-color="#99515e"/><stop offset=".216" stop-color="#994e70"/><stop offset=".243" stop-color="#994a84"/><stop offset=".27" stop-color="#994698"/><stop offset=".297" stop-color="#873b99"/><stop offset=".324" stop-color="#783199"/><stop offset=".351" stop-color="#6b2999"/><stop offset=".378" stop-color="#612299"/><stop offset=".405" stop-color="#581c99"/><stop offset=".432" stop-color="#501799"/><stop offset=".459" stop-color="#491299"/><stop offset=".486" stop-color="#430e99"/><stop offset=".514" stop-color="#3e0b99"/><stop offset=".541" stop-color="#390899"/><stop offset=".568" stop-color="#350599"/><stop offset=".595" stop-color="#310399"/><stop offset=".622" stop-color="#2e0099"/><stop offset=".649" stop-color="#2a0099"/><stop offset=".676" stop-color="#270099"/><stop offset=".703" stop-color="#250099"/><stop offset=".73" stop-color="#220099"/><stop offset=".757" stop-color="#200099"/><stop offset=".784" stop-color="#1e0099"/><stop offset=".811" stop-color="#1c0099"/><stop offset=".838" stop-color="#1a0099"/><stop offset=".865" stop-color="#180099"/><stop offset=".892" stop-color="#170099"/><stop offset=".919" stop-color="#150099"/><stop offset=".946" stop-color="#140099"/><stop offset=".973" stop-color="#120099"/><stop offset="1" stop-color="#110099"/></linearGradient>
<rect x="1180" y="83.4" width="5" height="409.8" fill="url(#fo46)"/>
<linearGradient id="fo47" gradientUnits="userSpaceOnUse" x1="0" y1="83.9" x2="0" y2="497.4"><stop offset="0" stop-color="#996000"/><stop offset=".026" stop-color="#995e00"/><stop offset=".053" stop-color="#995b09"/><stop offset=".079" stop-color="#995818"/><stop offset=".105" stop-color="#995527"/><stop offset=".132" stop-color="#995236"/><stop offset=".158" stop-color="#994f47"/><stop offset=".184" stop-color="#994b57"/><stop offset=".211" stop-color="#994869"/><stop offset=".237" stop-color="#99447a"/><stop offset=".263" stop-color="#99418d"/><stop offset=".289" stop-color="#923a99"/><stop offset=".316" stop-color="#823099"/><stop offset=".342" stop-color="#742899"/><stop offset=".368" stop-color="#692199"/><stop offset=".395" stop-color="#5f1c99"/><stop offset=".421" stop-color="#571699"/><stop offset=".447" stop-color="#501299"/><stop offset=".474" stop-color="#490e99"/><stop offset=".5" stop-color="#440b99"/><stop offset=".526" stop-color="#3f0899"/><stop offset=".553" stop-color="#3a0599"/><stop offset=".579" stop-color="#360299"/><stop offset=".605" stop-color="#320099"/><stop offset=".632" stop-color="#2f0099"/><stop offset=".658" stop-color="#2c0099"/><stop offset=".684" stop-color="#290099"/><stop offset=".711" stop-color="#260099"/><stop offset=".737" stop-color="#240099"/><stop offset=".763" stop-color="#220099"/><stop offset=".789" stop-color="#200099"/><stop offset=".816" stop-color="#1e0099"/><stop offset=".842" stop-color="#1c0099"/><stop offset=".868" stop-color="#1a0099"/><stop offset=".895" stop-color="#180099"/><stop offset=".921" stop-color="#170099"/><stop offset=".947" stop-color="#150099"/><stop offset=".974" stop-color="#140099"/><stop offset="1" stop-color="#130099"/></linearGradient>
<rect x="1185" y="83.9" width="5" height="413.4" fill="url(#fo47)"/>
<linearGradient id="fo48" gradientUnits="userSpaceOnUse" x1="0" y1="84.5" x2="0" y2="501.6"><stop offset="0" stop-color="#995a00"/><stop offset=".026" stop-color="#995800"/><stop offset=".053" stop-color="#995509"/><stop offset=".079" stop-color="#995217"/><stop offset=".105" stop-color="#994f26"/><stop offset=".132" stop-color="#994c35"/><stop offset=".158" stop-color="#994944"/><stop offset=".184" stop-color="#994554"/><stop offset=".211" stop-color="#994265"/><stop offset=".237" stop-color="#993f76"/><stop offset=".263" stop-color="#993b88"/><stop offset=".289" stop-color="#983799"/><stop offset=".316" stop-color="#872d99"/><stop offset=".342" stop-color="#792599"/><stop offset=".368" stop-color="#6d1f99"/><stop offset=".395" stop-color="#641999"/><stop offset=".421" stop-color="#5b1499"/><stop offset=".447" stop-color="#531099"/><stop offset=".474" stop-color="#4d0c99"/><stop offset=".5" stop-color="#470999"/><stop offset=".526" stop-color="#420699"/><stop offset=".553" stop-color="#3d0399"/><stop offset=".579" stop-color="#390199"/><stop offset=".605" stop-color="#350099"/><stop offset=".632" stop-color="#310099"/><stop offset=".658" stop-color="#2e0099"/><stop offset=".684" stop-color="#2b0099"/><stop offset=".711" stop-color="#290099"/><stop offset=".737" stop-color="#260099"/><stop offset=".763" stop-color="#240099"/><stop offset=".789" stop-color="#220099"/><stop offset=".816" stop-color="#1f0099"/><stop offset=".842" stop-color="#1e0099"/><stop offset=".868" stop-color="#1c0099"/><stop offset=".895" stop-color="#1a0099"/><stop offset=".921" stop-color="#190099"/><stop offset=".947" stop-color="#170099"/><stop offset=".974" stop-color="#160099"/><stop offset="1" stop-color="#140099"/></linearGradient>
<rect x="1190" y="84.5" width="5" height="417.1" fill="url(#fo48)"/>
<linearGradient id="fo49" gradientUnits="userSpaceOnUse" x1="0" y1="85.1" x2="0" y2="505.6"><stop offset="0" stop-color="#995500"/><stop offset=".026" stop-color="#995200"/><stop offset=".053" stop-color="#994f09"/><stop offset=".079" stop-color="#994c17"/><stop offset=".105" stop-color="#994925"/><stop offset=".132" stop-color="#994633"/><stop offset=".158" stop-color="#994342"/><stop offset=".184" stop-color="#994052"/><stop offset=".211" stop-color="#993d62"/><stop offset=".237" stop-color="#993972"/><stop offset=".263" stop-color="#993583"/><stop offset=".289" stop-color="#993295"/><stop offset=".316" stop-color="#8c2a99"/><stop offset=".342" stop-color="#7e2299"/><stop offset=".368" stop-color="#721c99"/><stop offset=".395" stop-color="#681799"/><stop offset=".421" stop-color="#5f1299"/><stop offset=".447" stop-color="#570e99"/><stop offset=".474" stop-color="#500a99"/><stop offset=".5" stop-color="#4a0799"/><stop offset=".526" stop-color="#450499"/><stop offset=".553" stop-color="#400299"/><stop offset=".579" stop-color="#3c0099"/><stop offset=".605" stop-color="#380099"/><stop offset=".632" stop-color="#340099"/><stop offset=".658" stop-color="#310099"/><stop offset=".684" stop-color="#2e0099"/><stop offset=".711" stop-color="#2b0099"/><stop offset=".737" stop-color="#280099"/><stop offset=".763" stop-color="#260099"/><stop offset=".789" stop-color="#240099"/><stop offset=".816" stop-color="#210099"/><stop offset=".842" stop-color="#1f0099"/><stop offset=".868" stop-color="#1e0099"/><stop offset=".895" stop-color="#1c0099"/><stop offset=".921" stop-color="#1a0099"/><stop offset=".947" stop-color="#190099"/><stop offset=".974" stop-color="#170099"/><stop offset="1" stop-color="#160099"/></linearGradient>
<rect x="1195" y="85.1" width="5" height="420.5" fill="url(#fo49)"/>
<linearGradient id="fo50" gradientUnits="userSpaceOnUse" x1="0" y1="85.7" x2="0" y2="509.0"><stop offset="0" stop-color="#995000"/><stop offset=".026" stop-color="#994d00"/><stop offset=".053" stop-color="#994a09"/><stop offset=".079" stop-color="#994716"/><stop offset=".105" stop-color="#994424"/><stop offset=".132" stop-color="#994132"/><stop offset=".158" stop-color="#993e40"/><stop offset=".184" stop-color="#993b4f"/><stop offset=".211" stop-color="#99385e"/><stop offset=".237" stop-color="#99346e"/><stop offset=".263" stop-color="#99317e"/><stop offset=".289" stop-color="#992d8f"/><stop offset=".316" stop-color="#922799"/><stop offset=".342" stop-color="#832099"/><stop offset=".368" stop-color="#761a99"/><stop offset=".395" stop-color="#6c1499"/><stop offset=".421" stop-color="#631099"/><stop offset=".447" stop-color="#5b0c99"/><stop offset=".474" stop-color="#540899"/><stop offset=".5" stop-color="#4d0599"/><stop offset=".526" stop-color="#480399"/><stop offset=".553" stop-color="#430099"/><stop offset=".579" stop-color="#3e0099"/><stop offset=".605" stop-color="#3a0099"/><stop offset=".632" stop-color="#370099"/><stop offset=".658" stop-color="#330099"/><stop offset=".684" stop-color="#300099"/><stop offset=".711" stop-color="#2d0099"/><stop offset=".737" stop-color="#2a0099"/><stop offset=".763" stop-color="#280099"/><stop offset=".789" stop-color="#260099"/><stop offset=".816" stop-color="#230099"/><stop offset=".842" stop-color="#210099"/><stop offset=".868" stop-color="#200099"/><stop offset=".895" stop-color="#1e0099"/><stop offset=".921" stop-color="#1c0099"/><stop offset=".947" stop-color="#1a0099"/><stop offset=".974" stop-color="#190099"/><stop offset="1" stop-color="#180099"/></linearGradient>
<rect x="1200" y="85.7" width="5" height="423.4" fill="url(#fo50)"/>
<linearGradient id="fo51" gradientUnits="userSpaceOnUse" x1="0" y1="86.2" x2="0" y2="508.4"><stop offset="0" stop-color="#994b00"/><stop offset=".026" stop-color="#994800"/><stop offset=".053" stop-color="#994509"/><stop offset=".079" stop-color="#994315"/><stop offset=".105" stop-color="#994022"/><stop offset=".132" stop-color="#993d30"/><stop offset=".158" stop-color="#993a3d"/><stop offset=".184" stop-color="#99374c"/><stop offset=".211" stop-color="#99335a"/><stop offset=".237" stop-color="#993069"/><stop offset=".263" stop-color="#992c79"/><stop offset=".289" stop-color="#992989"/><stop offset=".316" stop-color="#992599"/><stop offset=".342" stop-color="#891e99"/><stop offset=".368" stop-color="#7c1899"/><stop offset=".395" stop-color="#711399"/><stop offset=".421" stop-color="#680e99"/><stop offset=".447" stop-color="#600b99"/><stop offset=".474" stop-color="#580799"/><stop offset=".5" stop-color="#520499"/><stop offset=".526" stop-color="#4c0199"/><stop offset=".553" stop-color="#470099"/><stop offset=".579" stop-color="#420099"/><stop offset=".605" stop-color="#3e0099"/><stop offset=".632" stop-color="#3a0099"/><stop offset=".658" stop-color="#360099"/><stop offset=".684" stop-color="#330099"/><stop offset=".711" stop-color="#300099"/><stop offset=".737" stop-color="#2d0099"/><stop offset=".763" stop-color="#2b0099"/><stop offset=".789" stop-color="#280099"/><stop offset=".816" stop-color="#260099"/><stop offset=".842" stop-color="#240099"/><stop offset=".868" stop-color="#220099"/><stop offset=".895" stop-color="#200099"/><stop offset=".921" stop-color="#1e0099"/><stop offset=".947" stop-color="#1d0099"/><stop offset=".974" stop-color="#1b0099"/><stop offset="1" stop-color="#1a0099"/></linearGradient>
<rect x="1205" y="86.2" width="5" height="422.2" fill="url(#fo51)"/>
<linearGradient id="fo52" gradientUnits="userSpaceOnUse" x1="0" y1="86.8" x2="0" y2="503.3"><stop offset="0" stop-color="#994600"/><stop offset=".026" stop-color="#994400"/><stop offset=".053" stop-color="#994108"/><stop offset=".079" stop-color="#993e14"/><stop offset=".105" stop-color="#993c20"/><stop offset=".132" stop-color="#99392d"/><stop offset=".158" stop-color="#99363a"/><stop offset=".184" stop-color="#993347"/><stop offset=".211" stop-color="#993055"/><stop offset=".237" stop-color="#992c63"/><stop offset=".263" stop-color="#992972"/><stop offset=".289" stop-color="#992681"/><stop offset=".316" stop-color="#992290"/><stop offset=".342" stop-color="#921d99"/><stop offset=".368" stop-color="#841799"/><stop offset=".395" stop-color="#791299"/><stop offset=".421" stop-color="#6f0e99"/><stop offset=".447" stop-color="#660a99"/><stop offset=".474" stop-color="#5e0699"/><stop offset=".5" stop-color="#580399"/><stop offset=".526" stop-color="#510199"/><stop offset=".553" stop-color="#4c0099"/><stop offset=".579" stop-color="#470099"/><stop offset=".605" stop-color="#420099"/><stop offset=".632" stop-color="#3e0099"/><stop offset=".658" stop-color="#3b0099"/><stop offset=".684" stop-color="#370099"/><stop offset=".711" stop-color="#340099"/><stop offset=".737" stop-color="#310099"/><stop offset=".763" stop-color="#2e0099"/><stop offset=".789" stop-color="#2c0099"/><stop offset=".816" stop-color="#290099"/><stop offset=".842" stop-color="#270099"/><stop offset=".868" stop-color="#250099"/><stop offset=".895" stop-color="#230099"/><stop offset=".921" stop-color="#210099"/><stop offset=".947" stop-color="#200099"/><stop offset=".974" stop-color="#1e0099"/><stop offset="1" stop-color="#1c0099"/></linearGradient>
<rect x="1210" y="86.8" width="5" height="416.5" fill="url(#fo52)"/>
<linearGradient id="fo53" gradientUnits="userSpaceOnUse" x1="0" y1="87.4" x2="0" y2="498.2"><stop offset="0" stop-color="#994200"/><stop offset=".027" stop-color="#994000"/><stop offset=".054" stop-color="#993d08"/><stop offset=".081" stop-color="#993a14"/><stop offset=".108" stop-color="#993720"/><stop offset=".135" stop-color="#99352c"/><stop offset=".162" stop-color="#993239"/><stop offset=".189" stop-color="#992f46"/><stop offset=".216" stop-color="#992c53"/><stop offset=".243" stop-color="#992861"/><stop offset=".27" stop-color="#99256f"/><stop offset=".297" stop-color="#99227e"/><stop offset=".324" stop-color="#991e8d"/><stop offset=".351" stop-color="#961a99"/><stop offset=".378" stop-color="#881499"/><stop offset=".405" stop-color="#7c0f99"/><stop offset=".432" stop-color="#720b99"/><stop offset=".459" stop-color="#690899"/><stop offset=".486" stop-color="#610499"/><stop offset=".514" stop-color="#5a0199"/><stop offset=".541" stop-color="#540099"/><stop offset=".568" stop-color="#4e0099"/><stop offset=".595" stop-color="#490099"/><stop offset=".622" stop-color="#450099"/><stop offset=".649" stop-color="#400099"/><stop offset=".676" stop-color="#3c0099"/><stop offset=".703" stop-color="#390099"/><stop offset=".73" stop-color="#360099"/><stop offset=".757" stop-color="#330099"/><stop offset=".784" stop-color="#300099"/><stop offset=".811" stop-color="#2d0099"/><stop offset=".838" stop-color="#2b0099"/><stop offset=".865" stop-color="#290099"/><stop offset=".892" stop-color="#270099"/><stop offset=".919" stop-color="#250099"/><stop offset=".946" stop-color="#230099"/><stop offset=".973" stop-color="#210099"/><stop offset="1" stop-color="#1f0099"/></linearGradient>
<rect x="1215" y="87.4" width="5" height="410.8" fill="url(#fo53)"/>
<linearGradient id="fo54" gradientUnits="userSpaceOnUse" x1="0" y1="87.9" x2="0" y2="493.0"><stop offset="0" stop-color="#993e00"/><stop offset=".027" stop-color="#993c00"/><stop offset=".054" stop-color="#993908"/><stop offset=".081" stop-color="#993713"/><stop offset=".108" stop-color="#99341e"/><stop offset=".135" stop-color="#99312a"/><stop offset=".162" stop-color="#992e36"/><stop offset=".189" stop-color="#992b42"/><stop offset=".216" stop-color="#99284f"/><stop offset=".243" stop-color="#99255c"/><stop offset=".27" stop-color="#992269"/><stop offset=".297" stop-color="#991f77"/><stop offset=".324" stop-color="#991c85"/><stop offset=".351" stop-color="#991894"/><stop offset=".378" stop-color="#901399"/><stop offset=".405" stop-color="#830f99"/><stop offset=".432" stop-color="#790a99"/><stop offset=".459" stop-color="#6f0799"/><stop offset=".486" stop-color="#670499"/><stop offset=".514" stop-color="#600199"/><stop offset=".541" stop-color="#590099"/><stop offset=".568" stop-color="#530099"/><stop offset=".595" stop-color="#4e0099"/><stop offset=".622" stop-color="#490099"/><stop offset=".649" stop-color="#450099"/><stop offset=".676" stop-color="#410099"/><stop offset=".703" stop-color="#3d0099"/><stop offset=".73" stop-color="#3a0099"/><stop offset=".757" stop-color="#370099"/><stop offset=".784" stop-color="#340099"/><stop offset=".811" stop-color="#310099"/><stop offset=".838" stop-color="#2e0099"/><stop offset=".865" stop-color="#2c0099"/><stop offset=".892" stop-color="#2a0099"/><stop offset=".919" stop-color="#280099"/><stop offset=".946" stop-color="#260099"/><stop offset=".973" stop-color="#240099"/><stop offset="1" stop-color="#220099"/></linearGradient>
<rect x="1220" y="87.9" width="5" height="405.1" fill="url(#fo54)"/>
<linearGradient id="fo55" gradientUnits="userSpaceOnUse" x1="0" y1="88.5" x2="0" y2="487.9"><stop offset="0" stop-color="#993b00"/><stop offset=".028" stop-color="#993800"/><stop offset=".056" stop-color="#993608"/><stop offset=".083" stop-color="#993313"/><stop offset=".111" stop-color="#99301e"/><stop offset=".139" stop-color="#992e2a"/><stop offset=".167" stop-color="#992b35"/><stop offset=".194" stop-color="#992841"/><stop offset=".222" stop-color="#99254e"/><stop offset=".25" stop-color="#99225a"/><stop offset=".278" stop-color="#991f67"/><stop offset=".306" stop-color="#991c75"/><stop offset=".333" stop-color="#991883"/><stop offset=".361" stop-color="#991591"/><stop offset=".389" stop-color="#931199"/><stop offset=".417" stop-color="#860c99"/><stop offset=".444" stop-color="#7b0899"/><stop offset=".472" stop-color="#720599"/><stop offset=".5" stop-color="#6a0299"/><stop offset=".528" stop-color="#620099"/><stop offset=".556" stop-color="#5b0099"/><stop offset=".583" stop-color="#550099"/><stop offset=".611" stop-color="#500099"/><stop offset=".639" stop-color="#4b0099"/><stop offset=".667" stop-color="#470099"/><stop offset=".694" stop-color="#430099"/><stop offset=".722" stop-color="#3f0099"/><stop offset=".75" stop-color="#3b0099"/><stop offset=".778" stop-color="#380099"/><stop offset=".806" stop-color="#350099"/><stop offset=".833" stop-color="#320099"/><stop offset=".861" stop-color="#300099"/><stop offset=".889" stop-color="#2d0099"/><stop offset=".917" stop-color="#2b0099"/><stop offset=".944" stop-color="#290099"/><stop offset=".972" stop-color="#270099"/><stop offset="1" stop-color="#250099"/></linearGradient>
<rect x="1225" y="88.5" width="5" height="399.4" fill="url(#fo55)"/>
<linearGradient id="fo56" gradientUnits="userSpaceOnUse" x1="0" y1="89.1" x2="0" y2="482.8"><stop offset="0" stop-color="#993700"/><stop offset=".028" stop-color="#993500"/><stop offset=".056" stop-color="#993208"/><stop offset=".083" stop-color="#993012"/><stop offset=".111" stop-color="#992d1d"/><stop offset=".139" stop-color="#992b27"/><stop offset=".167" stop-color="#992833"/><stop offset=".194" stop-color="#99253e"/><stop offset=".222" stop-color="#99224a"/><stop offset=".25" stop-color="#991f56"/><stop offset=".278" stop-color="#991c62"/><stop offset=".306" stop-color="#99196f"/><stop offset=".333" stop-color="#99167c"/><stop offset=".361" stop-color="#991389"/><stop offset=".389" stop-color="#990f97"/><stop offset=".417" stop-color="#8e0b99"/><stop offset=".444" stop-color="#830799"/><stop offset=".472" stop-color="#790499"/><stop offset=".5" stop-color="#700199"/><stop offset=".528" stop-color="#680099"/><stop offset=".556" stop-color="#610099"/><stop offset=".583" stop-color="#5b0099"/><stop offset=".611" stop-color="#550099"/><stop offset=".639" stop-color="#500099"/><stop offset=".667" stop-color="#4b0099"/><stop offset=".694" stop-color="#470099"/><stop offset=".722" stop-color="#430099"/><stop offset=".75" stop-color="#3f0099"/><stop offset=".778" stop-color="#3c0099"/><stop offset=".806" stop-color="#390099"/><stop offset=".833" stop-color="#360099"/><stop offset=".861" stop-color="#330099"/><stop offset=".889" stop-color="#310099"/><stop offset=".917" stop-color="#2e0099"/><stop offset=".944" stop-color="#2c0099"/><stop offset=".972" stop-color="#2a0099"/><stop offset="1" stop-color="#280099"/></linearGradient>
<rect x="1230" y="89.1" width="5" height="393.7" fill="url(#fo56)"/>
<linearGradient id="fo57" gradientUnits="userSpaceOnUse" x1="0" y1="89.7" x2="0" y2="477.7"><stop offset="0" stop-color="#993400"/><stop offset=".029" stop-color="#993200"/><stop offset=".057" stop-color="#992f08"/><stop offset=".086" stop-color="#992d12"/><stop offset=".114" stop-color="#992a1c"/><stop offset=".143" stop-color="#992727"/><stop offset=".171" stop-color="#992532"/><stop offset=".2" stop-color="#99223d"/><stop offset=".229" stop-color="#991f49"/><stop offset=".257" stop-color="#991c54"/><stop offset=".286" stop-color="#991960"/><stop offset=".314" stop-color="#99166d"/><stop offset=".343" stop-color="#99137a"/><stop offset=".371" stop-color="#991087"/><stop offset=".4" stop-color="#990c94"/><stop offset=".429" stop-color="#910999"/><stop offset=".457" stop-color="#850599"/><stop offset=".486" stop-color="#7b0299"/><stop offset=".514" stop-color="#720099"/><stop offset=".543" stop-color="#6a0099"/><stop offset=".571" stop-color="#630099"/><stop offset=".6" stop-color="#5d0099"/><stop offset=".629" stop-color="#570099"/><stop offset=".657" stop-color="#520099"/><stop offset=".686" stop-color="#4d0099"/><stop offset=".714" stop-color="#490099"/><stop offset=".743" stop-color="#450099"/><stop offset=".771" stop-color="#410099"/><stop offset=".8" stop-color="#3e0099"/><stop offset=".829" stop-color="#3a0099"/><stop offset=".857" stop-color="#370099"/><stop offset=".886" stop-color="#350099"/><stop offset=".914" stop-color="#320099"/><stop offset=".943" stop-color="#300099"/><stop offset=".971" stop-color="#2d0099"/><stop offset="1" stop-color="#2b0099"/></linearGradient>
<rect x="1235" y="89.7" width="5" height="388.0" fill="url(#fo57)"/>
<linearGradient id="fo58" gradientUnits="userSpaceOnUse" x1="0" y1="90.2" x2="0" y2="472.6"><stop offset="0" stop-color="#993100"/><stop offset=".029" stop-color="#992f00"/><stop offset=".057" stop-color="#992c07"/><stop offset=".086" stop-color="#992a11"/><stop offset=".114" stop-color="#99271b"/><stop offset=".143" stop-color="#992525"/><stop offset=".171" stop-color="#992230"/><stop offset=".2" stop-color="#99203a"/><stop offset=".229" stop-color="#991d45"/><stop offset=".257" stop-color="#991a50"/><stop offset=".286" stop-color="#99175c"/><stop offset=".314" stop-color="#991467"/><stop offset=".343" stop-color="#991173"/><stop offset=".371" stop-color="#990e80"/><stop offset=".4" stop-color="#990b8c"/><stop offset=".429" stop-color="#990899"/><stop offset=".457" stop-color="#8d0499"/><stop offset=".486" stop-color="#820199"/><stop offset=".514" stop-color="#790099"/><stop offset=".543" stop-color="#700099"/><stop offset=".571" stop-color="#690099"/><stop offset=".6" stop-color="#620099"/><stop offset=".629" stop-color="#5c0099"/><stop offset=".657" stop-color="#570099"/><stop offset=".686" stop-color="#520099"/><stop offset=".714" stop-color="#4d0099"/><stop offset=".743" stop-color="#490099"/><stop offset=".771" stop-color="#450099"/><stop offset=".8" stop-color="#420099"/><stop offset=".829" stop-color="#3e0099"/><stop offset=".857" stop-color="#3b0099"/><stop offset=".886" stop-color="#380099"/><stop offset=".914" stop-color="#360099"/><stop offset=".943" stop-color="#330099"/><stop offset=".971" stop-color="#310099"/><stop offset="1" stop-color="#2f0099"/></linearGradient>
<rect x="1240" y="90.2" width="5" height="382.3" fill="url(#fo58)"/>
<linearGradient id="fo59" gradientUnits="userSpaceOnUse" x1="0" y1="90.8" x2="0" y2="467.5"><stop offset="0" stop-color="#992e00"/><stop offset=".029" stop-color="#992c00"/><stop offset=".059" stop-color="#992a07"/><stop offset=".088" stop-color="#992711"/><stop offset=".118" stop-color="#99251b"/><stop offset=".147" stop-color="#992225"/><stop offset=".176" stop-color="#99202f"/><stop offset=".206" stop-color="#991d3a"/><stop offset=".235" stop-color="#991a44"/><stop offset=".265" stop-color="#99174f"/><stop offset=".294" stop-color="#99145a"/><stop offset=".324" stop-color="#991266"/><stop offset=".353" stop-color="#990f72"/><stop offset=".382" stop-color="#990b7e"/><stop offset=".412" stop-color="#99088a"/><stop offset=".441" stop-color="#990597"/><stop offset=".471" stop-color="#8f0299"/><stop offset=".5" stop-color="#840099"/><stop offset=".529" stop-color="#7b0099"/><stop offset=".559" stop-color="#720099"/><stop offset=".588" stop-color="#6b0099"/><stop offset=".618" stop-color="#640099"/><stop offset=".647" stop-color="#5e0099"/><stop offset=".676" stop-color="#580099"/><stop offset=".706" stop-color="#530099"/><stop offset=".735" stop-color="#4f0099"/><stop offset=".765" stop-color="#4b0099"/><stop offset=".794" stop-color="#470099"/><stop offset=".824" stop-color="#430099"/><stop offset=".853" stop-color="#400099"/><stop offset=".882" stop-color="#3c0099"/><stop offset=".912" stop-color="#3a0099"/><stop offset=".941" stop-color="#370099"/><stop offset=".971" stop-color="#340099"/><stop offset="1" stop-color="#320099"/></linearGradient>
<rect x="1245" y="90.8" width="5" height="376.7" fill="url(#fo59)"/>
<linearGradient id="fo60" gradientUnits="userSpaceOnUse" x1="0" y1="91.4" x2="0" y2="462.4"><stop offset="0" stop-color="#992c00"/><stop offset=".029" stop-color="#992900"/><stop offset=".059" stop-color="#992707"/><stop offset=".088" stop-color="#992510"/><stop offset=".118" stop-color="#99221a"/><stop offset=".147" stop-color="#992023"/><stop offset=".176" stop-color="#991d2d"/><stop offset=".206" stop-color="#991b37"/><stop offset=".235" stop-color="#991841"/><stop offset=".265" stop-color="#99154b"/><stop offset=".294" stop-color="#991356"/><stop offset=".324" stop-color="#991061"/><stop offset=".353" stop-color="#990d6c"/><stop offset=".382" stop-color="#990a78"/><stop offset=".412" stop-color="#990783"/><stop offset=".441" stop-color="#99048f"/><stop offset=".471" stop-color="#970199"/><stop offset=".5" stop-color="#8b0099"/><stop offset=".529" stop-color="#820099"/><stop offset=".559" stop-color="#790099"/><stop offset=".588" stop-color="#710099"/><stop offset=".618" stop-color="#6a0099"/><stop offset=".647" stop-color="#630099"/><stop offset=".676" stop-color="#5e0099"/><stop offset=".706" stop-color="#580099"/><stop offset=".735" stop-color="#540099"/><stop offset=".765" stop-color="#4f0099"/><stop offset=".794" stop-color="#4b0099"/><stop offset=".824" stop-color="#470099"/><stop offset=".853" stop-color="#440099"/><stop offset=".882" stop-color="#400099"/><stop offset=".912" stop-color="#3d0099"/><stop offset=".941" stop-color="#3b0099"/><stop offset=".971" stop-color="#380099"/><stop offset="1" stop-color="#350099"/></linearGradient>
<rect x="1250" y="91.4" width="5" height="371.0" fill="url(#fo60)"/>
<linearGradient id="fo61" gradientUnits="userSpaceOnUse" x1="0" y1="91.9" x2="0" y2="457.2"><stop offset="0" stop-color="#992900"/><stop offset=".03" stop-color="#992700"/><stop offset=".061" stop-color="#992507"/><stop offset=".091" stop-color="#992210"/><stop offset=".121" stop-color="#992019"/><stop offset=".152" stop-color="#991d23"/><stop offset=".182" stop-color="#991b2c"/><stop offset=".212" stop-color="#991836"/><stop offset=".242" stop-color="#991640"/><stop offset=".273" stop-color="#99134b"/><stop offset=".303" stop-color="#991055"/><stop offset=".333" stop-color="#990d60"/><stop offset=".364" stop-color="#990b6b"/><stop offset=".394" stop-color="#990876"/><stop offset=".424" stop-color="#990581"/><stop offset=".455" stop-color="#99028d"/><stop offset=".485" stop-color="#990099"/><stop offset=".515" stop-color="#8d0099"/><stop offset=".545" stop-color="#830099"/><stop offset=".576" stop-color="#7b0099"/><stop offset=".606" stop-color="#730099"/><stop offset=".636" stop-color="#6b0099"/><stop offset=".667" stop-color="#650099"/><stop offset=".697" stop-color="#5f0099"/><stop offset=".727" stop-color="#5a0099"/><stop offset=".758" stop-color="#550099"/><stop offset=".788" stop-color="#500099"/><stop offset=".818" stop-color="#4c0099"/><stop offset=".848" stop-color="#480099"/><stop offset=".879" stop-color="#450099"/><stop offset=".909" stop-color="#420099"/><stop offset=".939" stop-color="#3e0099"/><stop offset=".97" stop-color="#3c0099"/><stop offset="1" stop-color="#390099"/></linearGradient>
<rect x="1255" y="91.9" width="5" height="365.3" fill="url(#fo61)"/>
<linearGradient id="fo62" gradientUnits="userSpaceOnUse" x1="0" y1="92.5" x2="0" y2="452.1"><stop offset="0" stop-color="#992700"/><stop offset=".03" stop-color="#992500"/><stop offset=".061" stop-color="#992207"/><stop offset=".091" stop-color="#99200f"/><stop offset=".121" stop-color="#991e18"/><stop offset=".152" stop-color="#991b21"/><stop offset=".182" stop-color="#99192a"/><stop offset=".212" stop-color="#991634"/><stop offset=".242" stop-color="#99143d"/><stop offset=".273" stop-color="#991147"/><stop offset=".303" stop-color="#990f51"/><stop offset=".333" stop-color="#990c5b"/><stop offset=".364" stop-color="#990966"/><stop offset=".394" stop-color="#990770"/><stop offset=".424" stop-color="#99047b"/><stop offset=".455" stop-color="#990186"/><stop offset=".485" stop-color="#990092"/><stop offset=".515" stop-color="#950099"/><stop offset=".545" stop-color="#8a0099"/><stop offset=".576" stop-color="#810099"/><stop offset=".606" stop-color="#790099"/><stop offset=".636" stop-color="#710099"/><stop offset=".667" stop-color="#6b0099"/><stop offset=".697" stop-color="#650099"/><stop offset=".727" stop-color="#5f0099"/><stop offset=".758" stop-color="#5a0099"/><stop offset=".788" stop-color="#550099"/><stop offset=".818" stop-color="#510099"/><stop offset=".848" stop-color="#4d0099"/><stop offset=".879" stop-color="#490099"/><stop offset=".909" stop-color="#460099"/><stop offset=".939" stop-color="#420099"/><stop offset=".97" stop-color="#3f0099"/><stop offset="1" stop-color="#3d0099"/></linearGradient>
<rect x="1260" y="92.5" width="5" height="359.6" fill="url(#fo62)"/>
<linearGradient id="fo63" gradientUnits="userSpaceOnUse" x1="0" y1="93.1" x2="0" y2="447.0"><stop offset="0" stop-color="#992400"/><stop offset=".031" stop-color="#992200"/><stop offset=".062" stop-color="#992007"/><stop offset=".094" stop-color="#991e0f"/><stop offset=".125" stop-color="#991b18"/><stop offset=".156" stop-color="#991921"/><stop offset=".188" stop-color="#99172a"/><stop offset=".219" stop-color="#991433"/><stop offset=".25" stop-color="#99123d"/><stop offset=".281" stop-color="#990f47"/><stop offset=".312" stop-color="#990d50"/><stop offset=".344" stop-color="#990a5a"/><stop offset=".375" stop-color="#990765"/><stop offset=".406" stop-color="#99046f"/><stop offset=".438" stop-color="#99027a"/><stop offset=".469" stop-color="#990085"/><stop offset=".5" stop-color="#990090"/><stop offset=".531" stop-color="#970099"/><stop offset=".562" stop-color="#8c0099"/><stop offset=".594" stop-color="#830099"/><stop offset=".625" stop-color="#7a0099"/><stop offset=".656" stop-color="#730099"/><stop offset=".688" stop-color="#6c0099"/><stop offset=".719" stop-color="#660099"/><stop offset=".75" stop-color="#600099"/><stop offset=".781" stop-color="#5b0099"/><stop offset=".812" stop-color="#560099"/><stop offset=".844" stop-color="#520099"/><stop offset=".875" stop-color="#4e0099"/><stop offset=".906" stop-color="#4a0099"/><stop offset=".938" stop-color="#470099"/><stop offset=".969" stop-color="#430099"/><stop offset="1" stop-color="#400099"/></linearGradient>
<rect x="1265" y="93.1" width="5" height="353.9" fill="url(#fo63)"/>
<linearGradient id="fo64" gradientUnits="userSpaceOnUse" x1="0" y1="93.7" x2="0" y2="441.9"><stop offset="0" stop-color="#992200"/><stop offset=".031" stop-color="#992000"/><stop offset=".062" stop-color="#991e07"/><stop offset=".094" stop-color="#991c0f"/><stop offset=".125" stop-color="#991a17"/><stop offset=".156" stop-color="#991720"/><stop offset=".188" stop-color="#991528"/><stop offset=".219" stop-color="#991331"/><stop offset=".25" stop-color="#99103a"/><stop offset=".281" stop-color="#990e43"/><stop offset=".312" stop-color="#990b4d"/><stop offset=".344" stop-color="#990956"/><stop offset=".375" stop-color="#990660"/><stop offset=".406" stop-color="#99036a"/><stop offset=".438" stop-color="#990174"/><stop offset=".469" stop-color="#99007f"/><stop offset=".5" stop-color="#990089"/><stop offset=".531" stop-color="#990094"/><stop offset=".562" stop-color="#930099"/><stop offset=".594" stop-color="#890099"/><stop offset=".625" stop-color="#810099"/><stop offset=".656" stop-color="#790099"/><stop offset=".688" stop-color="#720099"/><stop offset=".719" stop-color="#6b0099"/><stop offset=".75" stop-color="#660099"/><stop offset=".781" stop-color="#600099"/><stop offset=".812" stop-color="#5b0099"/><stop offset=".844" stop-color="#570099"/><stop offset=".875" stop-color="#520099"/><stop offset=".906" stop-color="#4e0099"/><stop offset=".938" stop-color="#4b0099"/><stop offset=".969" stop-color="#470099"/><stop offset="1" stop-color="#440099"/></linearGradient>
<rect x="1270" y="93.7" width="5" height="348.2" fill="url(#fo64)"/>
<linearGradient id="fo65" gradientUnits="userSpaceOnUse" x1="0" y1="94.2" x2="0" y2="436.8"><stop offset="0" stop-color="#992000"/><stop offset=".032" stop-color="#991e00"/><stop offset=".065" stop-color="#991c07"/><stop offset=".097" stop-color="#991a0f"/><stop offset=".129" stop-color="#991817"/><stop offset=".161" stop-color="#991520"/><stop offset=".194" stop-color="#991328"/><stop offset=".226" stop-color="#991131"/><stop offset=".258" stop-color="#990e3a"/><stop offset=".29" stop-color="#990c43"/><stop offset=".323" stop-color="#99094c"/><stop offset=".355" stop-color="#990756"/><stop offset=".387" stop-color="#99045f"/><stop offset=".419" stop-color="#990169"/><stop offset=".452" stop-color="#990073"/><stop offset=".484" stop-color="#99007d"/><stop offset=".516" stop-color="#990088"/><stop offset=".548" stop-color="#990093"/><stop offset=".581" stop-color="#950099"/><stop offset=".613" stop-color="#8b0099"/><stop offset=".645" stop-color="#820099"/><stop offset=".677" stop-color="#7a0099"/><stop offset=".71" stop-color="#730099"/><stop offset=".742" stop-color="#6d0099"/><stop offset=".774" stop-color="#670099"/><stop offset=".806" stop-color="#610099"/><stop offset=".839" stop-color="#5c0099"/><stop offset=".871" stop-color="#580099"/><stop offset=".903" stop-color="#530099"/><stop offset=".935" stop-color="#4f0099"/><stop offset=".968" stop-color="#4c0099"/><stop offset="1" stop-color="#480099"/></linearGradient>
<rect x="1275" y="94.2" width="5" height="342.5" fill="url(#fo65)"/>
<linearGradient id="fo66" gradientUnits="userSpaceOnUse" x1="0" y1="94.8" x2="0" y2="431.7"><stop offset="0" stop-color="#991e00"/><stop offset=".032" stop-color="#991c00"/><stop offset=".065" stop-color="#991a06"/><stop offset=".097" stop-color="#99180e"/><stop offset=".129" stop-color="#991616"/><stop offset=".161" stop-color="#99141e"/><stop offset=".194" stop-color="#991126"/><stop offset=".226" stop-color="#990f2f"/><stop offset=".258" stop-color="#990d37"/><stop offset=".29" stop-color="#990a40"/><stop offset=".323" stop-color="#990849"/><stop offset=".355" stop-color="#990652"/><stop offset=".387" stop-color="#99035b"/><stop offset=".419" stop-color="#990164"/><stop offset=".452" stop-color="#99006e"/><stop offset=".484" stop-color="#990078"/><stop offset=".516" stop-color="#990081"/><stop offset=".548" stop-color="#99008c"/><stop offset=".581" stop-color="#990096"/><stop offset=".613" stop-color="#920099"/><stop offset=".645" stop-color="#890099"/><stop offset=".677" stop-color="#800099"/><stop offset=".71" stop-color="#790099"/><stop offset=".742" stop-color="#720099"/><stop offset=".774" stop-color="#6c0099"/><stop offset=".806" stop-color="#660099"/><stop offset=".839" stop-color="#610099"/><stop offset=".871" stop-color="#5c0099"/><stop offset=".903" stop-color="#580099"/><stop offset=".935" stop-color="#540099"/><stop offset=".968" stop-color="#500099"/><stop offset="1" stop-color="#4c0099"/></linearGradient>
<rect x="1280" y="94.8" width="5" height="336.9" fill="url(#fo66)"/>
<linearGradient id="fo67" gradientUnits="userSpaceOnUse" x1="0" y1="95.4" x2="0" y2="426.5"><stop offset="0" stop-color="#991c00"/><stop offset=".033" stop-color="#991a00"/><stop offset=".067" stop-color="#991807"/><stop offset=".1" stop-color="#99160e"/><stop offset=".133" stop-color="#991416"/><stop offset=".167" stop-color="#99121e"/><stop offset=".2" stop-color="#991026"/><stop offset=".233" stop-color="#990d2f"/><stop offset=".267" stop-color="#990b37"/><stop offset=".3" stop-color="#990940"/><stop offset=".333" stop-color="#990648"/><stop offset=".367" stop-color="#990451"/><stop offset=".4" stop-color="#99015a"/><stop offset=".433" stop-color="#990064"/><stop offset=".467" stop-color="#99006d"/><stop offset=".5" stop-color="#990077"/><stop offset=".533" stop-color="#990081"/><stop offset=".567" stop-color="#99008b"/><stop offset=".6" stop-color="#990095"/><stop offset=".633" stop-color="#930099"/><stop offset=".667" stop-color="#8a0099"/><stop offset=".7" stop-color="#820099"/><stop offset=".733" stop-color="#7a0099"/><stop offset=".767" stop-color="#730099"/><stop offset=".8" stop-color="#6d0099"/><stop offset=".833" stop-color="#670099"/><stop offset=".867" stop-color="#620099"/><stop offset=".9" stop-color="#5d0099"/><stop offset=".933" stop-color="#590099"/><stop offset=".967" stop-color="#550099"/><stop offset="1" stop-color="#510099"/></linearGradient>
<rect x="1285" y="95.4" width="5" height="331.2" fill="url(#fo67)"/>
<linearGradient id="fo68" gradientUnits="userSpaceOnUse" x1="0" y1="95.9" x2="0" y2="421.4"><stop offset="0" stop-color="#991b00"/><stop offset=".033" stop-color="#991900"/><stop offset=".067" stop-color="#991706"/><stop offset=".1" stop-color="#99150e"/><stop offset=".133" stop-color="#991315"/><stop offset=".167" stop-color="#99101d"/><stop offset=".2" stop-color="#990e25"/><stop offset=".233" stop-color="#990c2d"/><stop offset=".267" stop-color="#990a35"/><stop offset=".3" stop-color="#99083d"/><stop offset=".333" stop-color="#990545"/><stop offset=".367" stop-color="#99034e"/><stop offset=".4" stop-color="#990156"/><stop offset=".433" stop-color="#99005f"/><stop offset=".467" stop-color="#990068"/><stop offset=".5" stop-color="#990071"/><stop offset=".533" stop-color="#99007b"/><stop offset=".567" stop-color="#990084"/><stop offset=".6" stop-color="#99008e"/><stop offset=".633" stop-color="#990098"/><stop offset=".667" stop-color="#910099"/><stop offset=".7" stop-color="#880099"/><stop offset=".733" stop-color="#800099"/><stop offset=".767" stop-color="#790099"/><stop offset=".8" stop-color="#730099"/><stop offset=".833" stop-color="#6d0099"/><stop offset=".867" stop-color="#670099"/><stop offset=".9" stop-color="#620099"/><stop offset=".933" stop-color="#5e0099"/><stop offset=".967" stop-color="#590099"/><stop offset="1" stop-color="#550099"/></linearGradient>
<rect x="1290" y="95.9" width="5" height="325.5" fill="url(#fo68)"/>
<linearGradient id="fo69" gradientUnits="userSpaceOnUse" x1="0" y1="96.5" x2="0" y2="416.3"><stop offset="0" stop-color="#991900"/><stop offset=".034" stop-color="#991700"/><stop offset=".069" stop-color="#991506"/><stop offset=".103" stop-color="#99130e"/><stop offset=".138" stop-color="#991115"/><stop offset=".172" stop-color="#990f1d"/><stop offset=".207" stop-color="#990d25"/><stop offset=".241" stop-color="#990a2c"/><stop offset=".276" stop-color="#990834"/><stop offset=".31" stop-color="#99063d"/><stop offset=".345" stop-color="#990445"/><stop offset=".379" stop-color="#99014d"/><stop offset=".414" stop-color="#990056"/><stop offset=".448" stop-color="#99005f"/><stop offset=".483" stop-color="#990068"/><stop offset=".517" stop-color="#990071"/><stop offset=".552" stop-color="#99007a"/><stop offset=".586" stop-color="#990083"/><stop offset=".621" stop-color="#99008d"/><stop offset=".655" stop-color="#990097"/><stop offset=".69" stop-color="#920099"/><stop offset=".724" stop-color="#890099"/><stop offset=".759" stop-color="#810099"/><stop offset=".793" stop-color="#7a0099"/><stop offset=".828" stop-color="#730099"/><stop offset=".862" stop-color="#6d0099"/><stop offset=".897" stop-color="#680099"/><stop offset=".931" stop-color="#630099"/><stop offset=".966" stop-color="#5e0099"/><stop offset="1" stop-color="#5a0099"/></linearGradient>
<rect x="1295" y="96.5" width="5" height="319.8" fill="url(#fo69)"/>
<linearGradient id="fo70" gradientUnits="userSpaceOnUse" x1="0" y1="97.1" x2="0" y2="411.2"><stop offset="0" stop-color="#991700"/><stop offset=".034" stop-color="#991500"/><stop offset=".069" stop-color="#991306"/><stop offset=".103" stop-color="#99110d"/><stop offset=".138" stop-color="#990f14"/><stop offset=".172" stop-color="#990d1c"/><stop offset=".207" stop-color="#990b23"/><stop offset=".241" stop-color="#99092b"/><stop offset=".276" stop-color="#990732"/><stop offset=".31" stop-color="#99053a"/><stop offset=".345" stop-color="#990342"/><stop offset=".379" stop-color="#99004a"/><stop offset=".414" stop-color="#990052"/><stop offset=".448" stop-color="#99005b"/><stop offset=".483" stop-color="#990063"/><stop offset=".517" stop-color="#99006c"/><stop offset=".552" stop-color="#990074"/><stop offset=".586" stop-color="#99007d"/><stop offset=".621" stop-color="#990087"/><stop offset=".655" stop-color="#990090"/><stop offset=".69" stop-color="#990099"/><stop offset=".724" stop-color="#900099"/><stop offset=".759" stop-color="#880099"/><stop offset=".793" stop-color="#800099"/><stop offset=".828" stop-color="#790099"/><stop offset=".862" stop-color="#730099"/><stop offset=".897" stop-color="#6d0099"/><stop offset=".931" stop-color="#680099"/><stop offset=".966" stop-color="#630099"/><stop offset="1" stop-color="#5f0099"/></linearGradient>
<rect x="1300" y="97.1" width="5" height="314.1" fill="url(#fo70)"/>
<linearGradient id="fo71" gradientUnits="userSpaceOnUse" x1="0" y1="97.7" x2="0" y2="406.1"><stop offset="0" stop-color="#991600"/><stop offset=".036" stop-color="#991400"/><stop offset=".071" stop-color="#991206"/><stop offset=".107" stop-color="#99100d"/><stop offset=".143" stop-color="#990e14"/><stop offset=".179" stop-color="#990c1c"/><stop offset=".214" stop-color="#990a23"/><stop offset=".25" stop-color="#99082b"/><stop offset=".286" stop-color="#990632"/><stop offset=".321" stop-color="#99033a"/><stop offset=".357" stop-color="#990142"/><stop offset=".393" stop-color="#99004a"/><stop offset=".429" stop-color="#990052"/><stop offset=".464" stop-color="#99005a"/><stop offset=".5" stop-color="#990063"/><stop offset=".536" stop-color="#99006b"/><stop offset=".571" stop-color="#990074"/><stop offset=".607" stop-color="#99007d"/><stop offset=".643" stop-color="#990086"/><stop offset=".679" stop-color="#99008f"/><stop offset=".714" stop-color="#990099"/><stop offset=".75" stop-color="#900099"/><stop offset=".786" stop-color="#880099"/><stop offset=".821" stop-color="#810099"/><stop offset=".857" stop-color="#7a0099"/><stop offset=".893" stop-color="#740099"/><stop offset=".929" stop-color="#6e0099"/><stop offset=".964" stop-color="#690099"/><stop offset="1" stop-color="#640099"/></linearGradient>
<rect x="1305" y="97.7" width="5" height="308.4" fill="url(#fo71)"/>
<linearGradient id="fo72" gradientUnits="userSpaceOnUse" x1="0" y1="98.2" x2="0" y2="401.0"><stop offset="0" stop-color="#991400"/><stop offset=".036" stop-color="#991200"/><stop offset=".071" stop-color="#991106"/><stop offset=".107" stop-color="#990f0d"/><stop offset=".143" stop-color="#990d14"/><stop offset=".179" stop-color="#990b1a"/><stop offset=".214" stop-color="#990922"/><stop offset=".25" stop-color="#990729"/><stop offset=".286" stop-color="#990530"/><stop offset=".321" stop-color="#990237"/><stop offset=".357" stop-color="#99003f"/><stop offset=".393" stop-color="#990047"/><stop offset=".429" stop-color="#99004e"/><stop offset=".464" stop-color="#990056"/><stop offset=".5" stop-color="#99005e"/><stop offset=".536" stop-color="#990067"/><stop offset=".571" stop-color="#99006f"/><stop offset=".607" stop-color="#990077"/><stop offset=".643" stop-color="#990080"/><stop offset=".679" stop-color="#990089"/><stop offset=".714" stop-color="#990092"/><stop offset=".75" stop-color="#970099"/><stop offset=".786" stop-color="#8f0099"/><stop offset=".821" stop-color="#870099"/><stop offset=".857" stop-color="#800099"/><stop offset=".893" stop-color="#7a0099"/><stop offset=".929" stop-color="#740099"/><stop offset=".964" stop-color="#6e0099"/><stop offset="1" stop-color="#690099"/></linearGradient>
<rect x="1310" y="98.2" width="5" height="302.7" fill="url(#fo72)"/>
<linearGradient id="fo73" gradientUnits="userSpaceOnUse" x1="0" y1="98.8" x2="0" y2="395.9"><stop offset="0" stop-color="#991300"/><stop offset=".037" stop-color="#991100"/><stop offset=".074" stop-color="#990f06"/><stop offset=".111" stop-color="#990d0d"/><stop offset=".148" stop-color="#990b14"/><stop offset=".185" stop-color="#99091b"/><stop offset=".222" stop-color="#990722"/><stop offset=".259" stop-color="#990529"/><stop offset=".296" stop-color="#990330"/><stop offset=".333" stop-color="#990137"/><stop offset=".37" stop-color="#99003f"/><stop offset=".407" stop-color="#990047"/><stop offset=".444" stop-color="#99004e"/><stop offset=".481" stop-color="#990056"/><stop offset=".519" stop-color="#99005e"/><stop offset=".556" stop-color="#990066"/><stop offset=".593" stop-color="#99006f"/><stop offset=".63" stop-color="#990077"/><stop offset=".667" stop-color="#990080"/><stop offset=".704" stop-color="#990088"/><stop offset=".741" stop-color="#990091"/><stop offset=".778" stop-color="#980099"/><stop offset=".815" stop-color="#8f0099"/><stop offset=".852" stop-color="#870099"/><stop offset=".889" stop-color="#800099"/><stop offset=".926" stop-color="#7a0099"/><stop offset=".963" stop-color="#740099"/><stop offset="1" stop-color="#6e0099"/></linearGradient>
<rect x="1315" y="98.8" width="5" height="297.0" fill="url(#fo73)"/>
<linearGradient id="fo74" gradientUnits="userSpaceOnUse" x1="0" y1="99.4" x2="0" y2="390.7"><stop offset="0" stop-color="#991100"/><stop offset=".038" stop-color="#991000"/><stop offset=".077" stop-color="#990e06"/><stop offset=".115" stop-color="#990c0d"/><stop offset=".154" stop-color="#990a14"/><stop offset=".192" stop-color="#99081b"/><stop offset=".231" stop-color="#990622"/><stop offset=".269" stop-color="#990429"/><stop offset=".308" stop-color="#990230"/><stop offset=".346" stop-color="#990038"/><stop offset=".385" stop-color="#99003f"/><stop offset=".423" stop-color="#990047"/><stop offset=".462" stop-color="#99004e"/><stop offset=".5" stop-color="#990056"/><stop offset=".538" stop-color="#99005e"/><stop offset=".577" stop-color="#990066"/><stop offset=".615" stop-color="#99006f"/><stop offset=".654" stop-color="#990077"/><stop offset=".692" stop-color="#990080"/><stop offset=".731" stop-color="#990088"/><stop offset=".769" stop-color="#990091"/><stop offset=".808" stop-color="#980099"/><stop offset=".846" stop-color="#8f0099"/><stop offset=".885" stop-color="#870099"/><stop offset=".923" stop-color="#800099"/><stop offset=".962" stop-color="#7a0099"/><stop offset="1" stop-color="#740099"/></linearGradient>
<rect x="1320" y="99.4" width="5" height="291.3" fill="url(#fo74)"/>
<linearGradient id="fo75" gradientUnits="userSpaceOnUse" x1="0" y1="100.0" x2="0" y2="385.6"><stop offset="0" stop-color="#991000"/><stop offset=".038" stop-color="#990e00"/><stop offset=".077" stop-color="#990c06"/><stop offset=".115" stop-color="#990b0c"/><stop offset=".154" stop-color="#990913"/><stop offset=".192" stop-color="#99071a"/><stop offset=".231" stop-color="#990520"/><stop offset=".269" stop-color="#990327"/><stop offset=".308" stop-color="#99012e"/><stop offset=".346" stop-color="#990035"/><stop offset=".385" stop-color="#99003c"/><stop offset=".423" stop-color="#990044"/><stop offset=".462" stop-color="#99004b"/><stop offset=".5" stop-color="#990053"/><stop offset=".538" stop-color="#99005a"/><stop offset=".577" stop-color="#990062"/><stop offset=".615" stop-color="#99006a"/><stop offset=".654" stop-color="#990072"/><stop offset=".692" stop-color="#99007a"/><stop offset=".731" stop-color="#990082"/><stop offset=".769" stop-color="#99008b"/><stop offset=".808" stop-color="#990093"/><stop offset=".846" stop-color="#960099"/><stop offset=".885" stop-color="#8e0099"/><stop offset=".923" stop-color="#870099"/><stop offset=".962" stop-color="#800099"/><stop offset="1" stop-color="#7a0099"/></linearGradient>
<rect x="1325" y="100.0" width="5" height="285.7" fill="url(#fo75)"/>
<linearGradient id="fo76" gradientUnits="userSpaceOnUse" x1="0" y1="100.5" x2="0" y2="380.5"><stop offset="0" stop-color="#990f00"/><stop offset=".04" stop-color="#990d00"/><stop offset=".08" stop-color="#990b06"/><stop offset=".12" stop-color="#99090d"/><stop offset=".16" stop-color="#990713"/><stop offset=".2" stop-color="#99061a"/><stop offset=".24" stop-color="#990421"/><stop offset=".28" stop-color="#990227"/><stop offset=".32" stop-color="#99002e"/><stop offset=".36" stop-color="#990035"/><stop offset=".4" stop-color="#99003d"/><stop offset=".44" stop-color="#990044"/><stop offset=".48" stop-color="#99004b"/><stop offset=".52" stop-color="#990053"/><stop offset=".56" stop-color="#99005a"/><stop offset=".6" stop-color="#990062"/><stop offset=".64" stop-color="#99006a"/><stop offset=".68" stop-color="#990072"/><stop offset=".72" stop-color="#99007a"/><stop offset=".76" stop-color="#990082"/><stop offset=".8" stop-color="#99008b"/><stop offset=".84" stop-color="#990093"/><stop offset=".88" stop-color="#960099"/><stop offset=".92" stop-color="#8e0099"/><stop offset=".96" stop-color="#870099"/><stop offset="1" stop-color="#800099"/></linearGradient>
<rect x="1330" y="100.5" width="5" height="280.0" fill="url(#fo76)"/>
<linearGradient id="fo77" gradientUnits="userSpaceOnUse" x1="0" y1="101.1" x2="0" y2="375.4"><stop offset="0" stop-color="#990e00"/><stop offset=".04" stop-color="#990c00"/><stop offset=".08" stop-color="#990a06"/><stop offset=".12" stop-color="#99080c"/><stop offset=".16" stop-color="#990612"/><stop offset=".2" stop-color="#990519"/><stop offset=".24" stop-color="#99031f"/><stop offset=".28" stop-color="#990126"/><stop offset=".32" stop-color="#99002c"/><stop offset=".36" stop-color="#990033"/><stop offset=".4" stop-color="#99003a"/><stop offset=".44" stop-color="#990041"/><stop offset=".48" stop-color="#990048"/><stop offset=".52" stop-color="#99004f"/><stop offset=".56" stop-color="#990056"/><stop offset=".6" stop-color="#99005e"/><stop offset=".64" stop-color="#990065"/><stop offset=".68" stop-color="#99006d"/><stop offset=".72" stop-color="#990075"/><stop offset=".76" stop-color="#99007c"/><stop offset=".8" stop-color="#990084"/><stop offset=".84" stop-color="#99008d"/><stop offset=".88" stop-color="#990095"/><stop offset=".92" stop-color="#950099"/><stop offset=".96" stop-color="#8d0099"/><stop offset="1" stop-color="#860099"/></linearGradient>
<rect x="1335" y="101.1" width="5" height="274.3" fill="url(#fo77)"/>
<linearGradient id="fo78" gradientUnits="userSpaceOnUse" x1="0" y1="101.7" x2="0" y2="370.3"><stop offset="0" stop-color="#990c00"/><stop offset=".042" stop-color="#990b00"/><stop offset=".083" stop-color="#990906"/><stop offset=".125" stop-color="#99070c"/><stop offset=".167" stop-color="#990512"/><stop offset=".208" stop-color="#990319"/><stop offset=".25" stop-color="#99021f"/><stop offset=".292" stop-color="#990026"/><stop offset=".333" stop-color="#99002d"/><stop offset=".375" stop-color="#990033"/><stop offset=".417" stop-color="#99003a"/><stop offset=".458" stop-color="#990041"/><stop offset=".5" stop-color="#990048"/><stop offset=".542" stop-color="#99004f"/><stop offset=".583" stop-color="#990057"/><stop offset=".625" stop-color="#99005e"/><stop offset=".667" stop-color="#990066"/><stop offset=".708" stop-color="#99006d"/><stop offset=".75" stop-color="#990075"/><stop offset=".792" stop-color="#99007d"/><stop offset=".833" stop-color="#990085"/><stop offset=".875" stop-color="#99008d"/><stop offset=".917" stop-color="#990095"/><stop offset=".958" stop-color="#950099"/><stop offset="1" stop-color="#8d0099"/></linearGradient>
<rect x="1340" y="101.7" width="5" height="268.6" fill="url(#fo78)"/>
<linearGradient id="fo79" gradientUnits="userSpaceOnUse" x1="0" y1="102.3" x2="0" y2="365.2"><stop offset="0" stop-color="#990b00"/><stop offset=".042" stop-color="#990a00"/><stop offset=".083" stop-color="#990806"/><stop offset=".125" stop-color="#99060c"/><stop offset=".167" stop-color="#990412"/><stop offset=".208" stop-color="#990318"/><stop offset=".25" stop-color="#99011e"/><stop offset=".292" stop-color="#990024"/><stop offset=".333" stop-color="#99002b"/><stop offset=".375" stop-color="#990031"/><stop offset=".417" stop-color="#990038"/><stop offset=".458" stop-color="#99003e"/><stop offset=".5" stop-color="#990045"/><stop offset=".542" stop-color="#99004c"/><stop offset=".583" stop-color="#990053"/><stop offset=".625" stop-color="#99005a"/><stop offset=".667" stop-color="#990061"/><stop offset=".708" stop-color="#990068"/><stop offset=".75" stop-color="#990070"/><stop offset=".792" stop-color="#990077"/><stop offset=".833" stop-color="#99007f"/><stop offset=".875" stop-color="#990087"/><stop offset=".917" stop-color="#99008e"/><stop offset=".958" stop-color="#990096"/><stop offset="1" stop-color="#940099"/></linearGradient>
<rect x="1345" y="102.3" width="5" height="262.9" fill="url(#fo79)"/>
<linearGradient id="fo80" gradientUnits="userSpaceOnUse" x1="0" y1="102.8" x2="0" y2="360.1"><stop offset="0" stop-color="#990a00"/><stop offset=".043" stop-color="#990900"/><stop offset=".087" stop-color="#990706"/><stop offset=".13" stop-color="#99050c"/><stop offset=".174" stop-color="#990312"/><stop offset=".217" stop-color="#990118"/><stop offset=".261" stop-color="#99001e"/><stop offset=".304" stop-color="#990025"/><stop offset=".348" stop-color="#99002b"/><stop offset=".391" stop-color="#990031"/><stop offset=".435" stop-color="#990038"/><stop offset=".478" stop-color="#99003f"/><stop offset=".522" stop-color="#990046"/><stop offset=".565" stop-color="#99004c"/><stop offset=".609" stop-color="#990053"/><stop offset=".652" stop-color="#99005a"/><stop offset=".696" stop-color="#990062"/><stop offset=".739" stop-color="#990069"/><stop offset=".783" stop-color="#990070"/><stop offset=".826" stop-color="#990078"/><stop offset=".87" stop-color="#99007f"/><stop offset=".913" stop-color="#990087"/><stop offset=".957" stop-color="#99008f"/><stop offset="1" stop-color="#990097"/></linearGradient>
<rect x="1350" y="102.8" width="5" height="257.2" fill="url(#fo80)"/>
<linearGradient id="fo81" gradientUnits="userSpaceOnUse" x1="0" y1="103.4" x2="0" y2="354.9"><stop offset="0" stop-color="#990900"/><stop offset=".043" stop-color="#990800"/><stop offset=".087" stop-color="#990606"/><stop offset=".13" stop-color="#99040b"/><stop offset=".174" stop-color="#990211"/><stop offset=".217" stop-color="#990117"/><stop offset=".261" stop-color="#99001d"/><stop offset=".304" stop-color="#990023"/><stop offset=".348" stop-color="#990029"/><stop offset=".391" stop-color="#99002f"/><stop offset=".435" stop-color="#990036"/><stop offset=".478" stop-color="#99003c"/><stop offset=".522" stop-color="#990042"/><stop offset=".565" stop-color="#990049"/><stop offset=".609" stop-color="#990050"/><stop offset=".652" stop-color="#990056"/><stop offset=".696" stop-color="#99005d"/><stop offset=".739" stop-color="#990064"/><stop offset=".783" stop-color="#99006b"/><stop offset=".826" stop-color="#990072"/><stop offset=".87" stop-color="#99007a"/><stop offset=".913" stop-color="#990081"/><stop offset=".957" stop-color="#990088"/><stop offset="1" stop-color="#990090"/></linearGradient>
<rect x="1355" y="103.4" width="5" height="251.5" fill="url(#fo81)"/>
<linearGradient id="fo82" gradientUnits="userSpaceOnUse" x1="0" y1="104.0" x2="0" y2="349.8"><stop offset="0" stop-color="#990800"/><stop offset=".045" stop-color="#990600"/><stop offset=".091" stop-color="#990506"/><stop offset=".136" stop-color="#99030c"/><stop offset=".182" stop-color="#990111"/><stop offset=".227" stop-color="#990017"/><stop offset=".273" stop-color="#99001d"/><stop offset=".318" stop-color="#990023"/><stop offset=".364" stop-color="#99002a"/><stop offset=".409" stop-color="#990030"/><stop offset=".455" stop-color="#990036"/><stop offset=".5" stop-color="#99003c"/><stop offset=".545" stop-color="#990043"/><stop offset=".591" stop-color="#99004a"/><stop offset=".636" stop-color="#990050"/><stop offset=".682" stop-color="#990057"/><stop offset=".727" stop-color="#99005e"/><stop offset=".773" stop-color="#990065"/><stop offset=".818" stop-color="#99006c"/><stop offset=".864" stop-color="#990073"/><stop offset=".909" stop-color="#99007a"/><stop offset=".955" stop-color="#990082"/><stop offset="1" stop-color="#990089"/></linearGradient>
<rect x="1360" y="104.0" width="5" height="245.8" fill="url(#fo82)"/>
<linearGradient id="fo83" gradientUnits="userSpaceOnUse" x1="0" y1="104.5" x2="0" y2="344.7"><stop offset="0" stop-color="#990700"/><stop offset=".045" stop-color="#990600"/><stop offset=".091" stop-color="#990405"/><stop offset=".136" stop-color="#99020b"/><stop offset=".182" stop-color="#990111"/><stop offset=".227" stop-color="#990016"/><stop offset=".273" stop-color="#99001c"/><stop offset=".318" stop-color="#990022"/><stop offset=".364" stop-color="#990028"/><stop offset=".409" stop-color="#99002e"/><stop offset=".455" stop-color="#990034"/><stop offset=".5" stop-color="#99003a"/><stop offset=".545" stop-color="#990040"/><stop offset=".591" stop-color="#990046"/><stop offset=".636" stop-color="#99004d"/><stop offset=".682" stop-color="#990053"/><stop offset=".727" stop-color="#99005a"/><stop offset=".773" stop-color="#990060"/><stop offset=".818" stop-color="#990067"/><stop offset=".864" stop-color="#99006e"/><stop offset=".909" stop-color="#990075"/><stop offset=".955" stop-color="#99007c"/><stop offset="1" stop-color="#990083"/></linearGradient>
<rect x="1365" y="104.5" width="5" height="240.2" fill="url(#fo83)"/>
<linearGradient id="fo84" gradientUnits="userSpaceOnUse" x1="0" y1="105.1" x2="0" y2="339.6"><stop offset="0" stop-color="#990600"/><stop offset=".048" stop-color="#990500"/><stop offset=".095" stop-color="#990306"/><stop offset=".143" stop-color="#99010b"/><stop offset=".19" stop-color="#990011"/><stop offset=".238" stop-color="#990017"/><stop offset=".286" stop-color="#99001c"/><stop offset=".333" stop-color="#990022"/><stop offset=".381" stop-color="#990028"/><stop offset=".429" stop-color="#99002e"/><stop offset=".476" stop-color="#990034"/><stop offset=".524" stop-color="#99003a"/><stop offset=".571" stop-color="#990041"/><stop offset=".619" stop-color="#990047"/><stop offset=".667" stop-color="#99004d"/><stop offset=".714" stop-color="#990054"/><stop offset=".762" stop-color="#99005a"/><stop offset=".81" stop-color="#990061"/><stop offset=".857" stop-color="#990068"/><stop offset=".905" stop-color="#99006f"/><stop offset=".952" stop-color="#990076"/><stop offset="1" stop-color="#99007d"/></linearGradient>
<rect x="1370" y="105.1" width="5" height="234.5" fill="url(#fo84)"/>
<linearGradient id="fo85" gradientUnits="userSpaceOnUse" x1="0" y1="105.7" x2="0" y2="334.5"><stop offset="0" stop-color="#990500"/><stop offset=".048" stop-color="#990400"/><stop offset=".095" stop-color="#990205"/><stop offset=".143" stop-color="#99010b"/><stop offset=".19" stop-color="#990010"/><stop offset=".238" stop-color="#990016"/><stop offset=".286" stop-color="#99001b"/><stop offset=".333" stop-color="#990021"/><stop offset=".381" stop-color="#990026"/><stop offset=".429" stop-color="#99002c"/><stop offset=".476" stop-color="#990032"/><stop offset=".524" stop-color="#990038"/><stop offset=".571" stop-color="#99003e"/><stop offset=".619" stop-color="#990044"/><stop offset=".667" stop-color="#99004a"/><stop offset=".714" stop-color="#990050"/><stop offset=".762" stop-color="#990056"/><stop offset=".81" stop-color="#99005d"/><stop offset=".857" stop-color="#990063"/><stop offset=".905" stop-color="#99006a"/><stop offset=".952" stop-color="#990070"/><stop offset="1" stop-color="#990077"/></linearGradient>
<rect x="1375" y="105.7" width="5" height="228.8" fill="url(#fo85)"/>
<linearGradient id="fo86" gradientUnits="userSpaceOnUse" x1="0" y1="106.3" x2="0" y2="329.4"><stop offset="0" stop-color="#990400"/><stop offset=".05" stop-color="#990300"/><stop offset=".1" stop-color="#990106"/><stop offset=".15" stop-color="#99000b"/><stop offset=".2" stop-color="#990010"/><stop offset=".25" stop-color="#990016"/><stop offset=".3" stop-color="#99001b"/><stop offset=".35" stop-color="#990021"/><stop offset=".4" stop-color="#990027"/><stop offset=".45" stop-color="#99002d"/><stop offset=".5" stop-color="#990032"/><stop offset=".55" stop-color="#990038"/><stop offset=".6" stop-color="#99003e"/><stop offset=".65" stop-color="#990044"/><stop offset=".7" stop-color="#99004b"/><stop offset=".75" stop-color="#990051"/><stop offset=".8" stop-color="#990057"/><stop offset=".85" stop-color="#99005e"/><stop offset=".9" stop-color="#990064"/><stop offset=".95" stop-color="#99006b"/><stop offset="1" stop-color="#990071"/></linearGradient>
<rect x="1380" y="106.3" width="5" height="223.1" fill="url(#fo86)"/>
<linearGradient id="fo87" gradientUnits="userSpaceOnUse" x1="0" y1="106.8" x2="0" y2="324.2"><stop offset="0" stop-color="#990400"/><stop offset=".05" stop-color="#990200"/><stop offset=".1" stop-color="#990005"/><stop offset=".15" stop-color="#99000a"/><stop offset=".2" stop-color="#990010"/><stop offset=".25" stop-color="#990015"/><stop offset=".3" stop-color="#99001a"/><stop offset=".35" stop-color="#990020"/><stop offset=".4" stop-color="#990025"/><stop offset=".45" stop-color="#99002b"/><stop offset=".5" stop-color="#990030"/><stop offset=".55" stop-color="#990036"/><stop offset=".6" stop-color="#99003c"/><stop offset=".65" stop-color="#990041"/><stop offset=".7" stop-color="#990047"/><stop offset=".75" stop-color="#99004d"/><stop offset=".8" stop-color="#990053"/><stop offset=".85" stop-color="#990059"/><stop offset=".9" stop-color="#99005f"/><stop offset=".95" stop-color="#990066"/><stop offset="1" stop-color="#99006c"/></linearGradient>
<rect x="1385" y="106.8" width="5" height="217.4" fill="url(#fo87)"/>
<linearGradient id="fo88" gradientUnits="userSpaceOnUse" x1="0" y1="107.4" x2="0" y2="319.1"><stop offset="0" stop-color="#990300"/><stop offset=".053" stop-color="#990100"/><stop offset=".105" stop-color="#990005"/><stop offset=".158" stop-color="#99000b"/><stop offset=".211" stop-color="#990010"/><stop offset=".263" stop-color="#990015"/><stop offset=".316" stop-color="#99001b"/><stop offset=".368" stop-color="#990020"/><stop offset=".421" stop-color="#990026"/><stop offset=".474" stop-color="#99002b"/><stop offset=".526" stop-color="#990031"/><stop offset=".579" stop-color="#990037"/><stop offset=".632" stop-color="#99003c"/><stop offset=".684" stop-color="#990042"/><stop offset=".737" stop-color="#990048"/><stop offset=".789" stop-color="#99004e"/><stop offset=".842" stop-color="#990054"/><stop offset=".895" stop-color="#99005a"/><stop offset=".947" stop-color="#990061"/><stop offset="1" stop-color="#990067"/></linearGradient>
<rect x="1390" y="107.4" width="5" height="211.7" fill="url(#fo88)"/>
<linearGradient id="fo89" gradientUnits="userSpaceOnUse" x1="0" y1="108.0" x2="0" y2="314.0"><stop offset="0" stop-color="#990200"/><stop offset=".053" stop-color="#990000"/><stop offset=".105" stop-color="#990005"/><stop offset=".158" stop-color="#99000a"/><stop offset=".211" stop-color="#99000f"/><stop offset=".263" stop-color="#990014"/><stop offset=".316" stop-color="#990019"/><stop offset=".368" stop-color="#99001f"/><stop offset=".421" stop-color="#990024"/><stop offset=".474" stop-color="#990029"/><stop offset=".526" stop-color="#99002f"/><stop offset=".579" stop-color="#990034"/><stop offset=".632" stop-color="#99003a"/><stop offset=".684" stop-color="#99003f"/><stop offset=".737" stop-color="#990045"/><stop offset=".789" stop-color="#99004b"/><stop offset=".842" stop-color="#990050"/><stop offset=".895" stop-color="#990056"/><stop offset=".947" stop-color="#99005c"/><stop offset="1" stop-color="#990062"/></linearGradient>
<rect x="1395" y="108.0" width="5" height="206.1" fill="url(#fo89)"/>
<linearGradient id="fo90" gradientUnits="userSpaceOnUse" x1="0" y1="108.5" x2="0" y2="308.9"><stop offset="0" stop-color="#990100"/><stop offset=".056" stop-color="#990000"/><stop offset=".111" stop-color="#990005"/><stop offset=".167" stop-color="#99000a"/><stop offset=".222" stop-color="#990010"/><stop offset=".278" stop-color="#990015"/><stop offset=".333" stop-color="#99001a"/><stop offset=".389" stop-color="#99001f"/><stop offset=".444" stop-color="#990024"/><stop offset=".5" stop-color="#99002a"/><stop offset=".556" stop-color="#99002f"/><stop offset=".611" stop-color="#990035"/><stop offset=".667" stop-color="#99003a"/><stop offset=".722" stop-color="#990040"/><stop offset=".778" stop-color="#990046"/><stop offset=".833" stop-color="#99004c"/><stop offset=".889" stop-color="#990051"/><stop offset=".944" stop-color="#990057"/><stop offset="1" stop-color="#99005d"/></linearGradient>
<rect x="1400" y="108.5" width="5" height="200.4" fill="url(#fo90)"/>
<linearGradient id="fo91" gradientUnits="userSpaceOnUse" x1="0" y1="109.1" x2="0" y2="303.8"><stop offset="0" stop-color="#990000"/><stop offset=".056" stop-color="#990000"/><stop offset=".111" stop-color="#990005"/><stop offset=".167" stop-color="#99000a"/><stop offset=".222" stop-color="#99000f"/><stop offset=".278" stop-color="#990014"/><stop offset=".333" stop-color="#990019"/><stop offset=".389" stop-color="#99001e"/><stop offset=".444" stop-color="#990023"/><stop offset=".5" stop-color="#990028"/><stop offset=".556" stop-color="#99002d"/><stop offset=".611" stop-color="#990032"/><stop offset=".667" stop-color="#990038"/><stop offset=".722" stop-color="#99003d"/><stop offset=".778" stop-color="#990042"/><stop offset=".833" stop-color="#990048"/><stop offset=".889" stop-color="#99004e"/><stop offset=".944" stop-color="#990053"/><stop offset="1" stop-color="#990059"/></linearGradient>
<rect x="1405" y="109.1" width="5" height="194.7" fill="url(#fo91)"/>
<linearGradient id="fo92" gradientUnits="userSpaceOnUse" x1="0" y1="109.7" x2="0" y2="298.7"><stop offset="0" stop-color="#990000"/><stop offset=".059" stop-color="#990001"/><stop offset=".118" stop-color="#990005"/><stop offset=".176" stop-color="#99000a"/><stop offset=".235" stop-color="#99000f"/><stop offset=".294" stop-color="#990014"/><stop offset=".353" stop-color="#990019"/><stop offset=".412" stop-color="#99001e"/><stop offset=".471" stop-color="#990023"/><stop offset=".529" stop-color="#990029"/><stop offset=".588" stop-color="#99002e"/><stop offset=".647" stop-color="#990033"/><stop offset=".706" stop-color="#990039"/><stop offset=".765" stop-color="#99003e"/><stop offset=".824" stop-color="#990044"/><stop offset=".882" stop-color="#990049"/><stop offset=".941" stop-color="#99004f"/><stop offset="1" stop-color="#990055"/></linearGradient>
<rect x="1410" y="109.7" width="5" height="189.0" fill="url(#fo92)"/>
<linearGradient id="fo93" gradientUnits="userSpaceOnUse" x1="0" y1="110.2" x2="0" y2="293.6"><stop offset="0" stop-color="#990000"/><stop offset=".059" stop-color="#990000"/><stop offset=".118" stop-color="#990005"/><stop offset=".176" stop-color="#99000a"/><stop offset=".235" stop-color="#99000e"/><stop offset=".294" stop-color="#990013"/><stop offset=".353" stop-color="#990018"/><stop offset=".412" stop-color="#99001d"/><stop offset=".471" stop-color="#990022"/><stop offset=".529" stop-color="#990027"/><stop offset=".588" stop-color="#99002c"/><stop offset=".647" stop-color="#990031"/><stop offset=".706" stop-color="#990036"/><stop offset=".765" stop-color="#99003b"/><stop offset=".824" stop-color="#990040"/><stop offset=".882" stop-color="#990046"/><stop offset=".941" stop-color="#99004b"/><stop offset="1" stop-color="#990050"/></linearGradient>
<rect x="1415" y="110.2" width="5" height="183.3" fill="url(#fo93)"/>
<linearGradient id="fo94" gradientUnits="userSpaceOnUse" x1="0" y1="110.8" x2="0" y2="288.4"><stop offset="0" stop-color="#990000"/><stop offset=".062" stop-color="#990001"/><stop offset=".125" stop-color="#990005"/><stop offset=".188" stop-color="#99000a"/><stop offset=".25" stop-color="#99000f"/><stop offset=".312" stop-color="#990014"/><stop offset=".375" stop-color="#990018"/><stop offset=".438" stop-color="#99001d"/><stop offset=".5" stop-color="#990022"/><stop offset=".562" stop-color="#990027"/><stop offset=".625" stop-color="#99002c"/><stop offset=".688" stop-color="#990032"/><stop offset=".75" stop-color="#990037"/><stop offset=".812" stop-color="#99003c"/><stop offset=".875" stop-color="#990041"/><stop offset=".938" stop-color="#990047"/><stop offset="1" stop-color="#99004c"/></linearGradient>
<rect x="1420" y="110.8" width="5" height="177.6" fill="url(#fo94)"/>
<linearGradient id="fo95" gradientUnits="userSpaceOnUse" x1="0" y1="111.4" x2="0" y2="283.3"><stop offset="0" stop-color="#990000"/><stop offset=".062" stop-color="#990000"/><stop offset=".125" stop-color="#990005"/><stop offset=".188" stop-color="#990009"/><stop offset=".25" stop-color="#99000e"/><stop offset=".312" stop-color="#990013"/><stop offset=".375" stop-color="#990017"/><stop offset=".438" stop-color="#99001c"/><stop offset=".5" stop-color="#990021"/><stop offset=".562" stop-color="#990025"/><stop offset=".625" stop-color="#99002a"/><stop offset=".688" stop-color="#99002f"/><stop offset=".75" stop-color="#990034"/><stop offset=".812" stop-color="#990039"/><stop offset=".875" stop-color="#99003e"/><stop offset=".938" stop-color="#990043"/><stop offset="1" stop-color="#990048"/></linearGradient>
<rect x="1425" y="111.4" width="5" height="172.0" fill="url(#fo95)"/>
<linearGradient id="fo96" gradientUnits="userSpaceOnUse" x1="0" y1="111.9" x2="0" y2="278.2"><stop offset="0" stop-color="#990000"/><stop offset=".067" stop-color="#990001"/><stop offset=".133" stop-color="#990005"/><stop offset=".2" stop-color="#99000a"/><stop offset=".267" stop-color="#99000e"/><stop offset=".333" stop-color="#990013"/><stop offset=".4" stop-color="#990018"/><stop offset=".467" stop-color="#99001d"/><stop offset=".533" stop-color="#990021"/><stop offset=".6" stop-color="#990026"/><stop offset=".667" stop-color="#99002b"/><stop offset=".733" stop-color="#990030"/><stop offset=".8" stop-color="#990035"/><stop offset=".867" stop-color="#99003a"/><stop offset=".933" stop-color="#99003f"/><stop offset="1" stop-color="#990045"/></linearGradient>
<rect x="1430" y="111.9" width="5" height="166.3" fill="url(#fo96)"/>
<linearGradient id="fo97" gradientUnits="userSpaceOnUse" x1="0" y1="112.5" x2="0" y2="273.1"><stop offset="0" stop-color="#990000"/><stop offset=".067" stop-color="#990001"/><stop offset=".133" stop-color="#990005"/><stop offset=".2" stop-color="#990009"/><stop offset=".267" stop-color="#99000e"/><stop offset=".333" stop-color="#990012"/><stop offset=".4" stop-color="#990017"/><stop offset=".467" stop-color="#99001b"/><stop offset=".533" stop-color="#990020"/><stop offset=".6" stop-color="#990024"/><stop offset=".667" stop-color="#990029"/><stop offset=".733" stop-color="#99002e"/><stop offset=".8" stop-color="#990032"/><stop offset=".867" stop-color="#990037"/><stop offset=".933" stop-color="#99003c"/><stop offset="1" stop-color="#990041"/></linearGradient>
<rect x="1435" y="112.5" width="5" height="160.6" fill="url(#fo97)"/>
<linearGradient id="fo98" gradientUnits="userSpaceOnUse" x1="0" y1="113.1" x2="0" y2="268.0"><stop offset="0" stop-color="#990000"/><stop offset=".071" stop-color="#990001"/><stop offset=".143" stop-color="#990005"/><stop offset=".214" stop-color="#99000a"/><stop offset=".286" stop-color="#99000e"/><stop offset=".357" stop-color="#990013"/><stop offset=".429" stop-color="#990017"/><stop offset=".5" stop-color="#99001c"/><stop offset=".571" stop-color="#990020"/><stop offset=".643" stop-color="#990025"/><stop offset=".714" stop-color="#99002a"/><stop offset=".786" stop-color="#99002f"/><stop offset=".857" stop-color="#990034"/><stop offset=".929" stop-color="#990039"/><stop offset="1" stop-color="#99003e"/></linearGradient>
<rect x="1440" y="113.1" width="5" height="154.9" fill="url(#fo98)"/>
<linearGradient id="fo99" gradientUnits="userSpaceOnUse" x1="0" y1="113.7" x2="0" y2="262.9"><stop offset="0" stop-color="#990000"/><stop offset=".071" stop-color="#990001"/><stop offset=".143" stop-color="#990005"/><stop offset=".214" stop-color="#990009"/><stop offset=".286" stop-color="#99000d"/><stop offset=".357" stop-color="#990012"/><stop offset=".429" stop-color="#990016"/><stop offset=".5" stop-color="#99001a"/><stop offset=".571" stop-color="#99001f"/><stop offset=".643" stop-color="#990023"/><stop offset=".714" stop-color="#990028"/><stop offset=".786" stop-color="#99002c"/><stop offset=".857" stop-color="#990031"/><stop offset=".929" stop-color="#990036"/><stop offset="1" stop-color="#99003a"/></linearGradient>
<rect x="1445" y="113.7" width="5" height="149.2" fill="url(#fo99)"/>
<linearGradient id="fo100" gradientUnits="userSpaceOnUse" x1="0" y1="114.3" x2="0" y2="257.8"><stop offset="0" stop-color="#990000"/><stop offset=".077" stop-color="#990001"/><stop offset=".154" stop-color="#990005"/><stop offset=".231" stop-color="#990009"/><stop offset=".308" stop-color="#99000e"/><stop offset=".385" stop-color="#990012"/><stop offset=".462" stop-color="#990017"/><stop offset=".538" stop-color="#99001b"/><stop offset=".615" stop-color="#990020"/><stop offset=".692" stop-color="#990024"/><stop offset=".769" stop-color="#990029"/><stop offset=".846" stop-color="#99002d"/><stop offset=".923" stop-color="#990032"/><stop offset="1" stop-color="#990037"/></linearGradient>
<rect x="1450" y="114.3" width="5" height="143.5" fill="url(#fo100)"/>
<linearGradient id="fo101" gradientUnits="userSpaceOnUse" x1="0" y1="114.8" x2="0" y2="252.6"><stop offset="0" stop-color="#990000"/><stop offset=".077" stop-color="#990001"/><stop offset=".154" stop-color="#990005"/><stop offset=".231" stop-color="#990009"/><stop offset=".308" stop-color="#99000d"/><stop offset=".385" stop-color="#990011"/><stop offset=".462" stop-color="#990015"/><stop offset=".538" stop-color="#99001a"/><stop offset=".615" stop-color="#99001e"/><stop offset=".692" stop-color="#990022"/><stop offset=".769" stop-color="#990026"/><stop offset=".846" stop-color="#99002b"/><stop offset=".923" stop-color="#99002f"/><stop offset="1" stop-color="#990034"/></linearGradient>
<rect x="1455" y="114.8" width="5" height="137.8" fill="url(#fo101)"/>
<linearGradient id="fo102" gradientUnits="userSpaceOnUse" x1="0" y1="115.4" x2="0" y2="247.5"><stop offset="0" stop-color="#990000"/><stop offset=".083" stop-color="#990001"/><stop offset=".167" stop-color="#990005"/><stop offset=".25" stop-color="#990009"/><stop offset=".333" stop-color="#99000d"/><stop offset=".417" stop-color="#990012"/><stop offset=".5" stop-color="#990016"/><stop offset=".583" stop-color="#99001a"/><stop offset=".667" stop-color="#99001f"/><stop offset=".75" stop-color="#990023"/><stop offset=".833" stop-color="#990028"/><stop offset=".917" stop-color="#99002c"/><stop offset="1" stop-color="#990031"/></linearGradient>
<rect x="1460" y="115.4" width="5" height="132.1" fill="url(#fo102)"/>
<linearGradient id="fo103" gradientUnits="userSpaceOnUse" x1="0" y1="116.0" x2="0" y2="242.4"><stop offset="0" stop-color="#990000"/><stop offset=".091" stop-color="#990001"/><stop offset=".182" stop-color="#990005"/><stop offset=".273" stop-color="#99000a"/><stop offset=".364" stop-color="#99000e"/><stop offset=".455" stop-color="#990012"/><stop offset=".545" stop-color="#990017"/><stop offset=".636" stop-color="#99001b"/><stop offset=".727" stop-color="#990020"/><stop offset=".818" stop-color="#990025"/><stop offset=".909" stop-color="#990029"/><stop offset="1" stop-color="#99002e"/></linearGradient>
<rect x="1465" y="116.0" width="5" height="126.4" fill="url(#fo103)"/>
<linearGradient id="fo104" gradientUnits="userSpaceOnUse" x1="0" y1="116.5" x2="0" y2="237.3"><stop offset="0" stop-color="#990000"/><stop offset=".091" stop-color="#990001"/><stop offset=".182" stop-color="#990005"/><stop offset=".273" stop-color="#990009"/><stop offset=".364" stop-color="#99000d"/><stop offset=".455" stop-color="#990011"/><stop offset=".545" stop-color="#990015"/><stop offset=".636" stop-color="#99001a"/><stop offset=".727" stop-color="#99001e"/><stop offset=".818" stop-color="#990022"/><stop offset=".909" stop-color="#990027"/><stop offset="1" stop-color="#99002b"/></linearGradient>
<rect x="1470" y="116.5" width="5" height="120.7" fill="url(#fo104)"/>
<linearGradient id="fo105" gradientUnits="userSpaceOnUse" x1="0" y1="117.1" x2="0" y2="232.2"><stop offset="0" stop-color="#990000"/><stop offset=".1" stop-color="#990001"/><stop offset=".2" stop-color="#990005"/><stop offset=".3" stop-color="#990009"/><stop offset=".4" stop-color="#99000e"/><stop offset=".5" stop-color="#990012"/><stop offset=".6" stop-color="#990016"/><stop offset=".7" stop-color="#99001b"/><stop offset=".8" stop-color="#99001f"/><stop offset=".9" stop-color="#990024"/><stop offset="1" stop-color="#990028"/></linearGradient>
<rect x="1475" y="117.1" width="5" height="115.1" fill="url(#fo105)"/>
<linearGradient id="fo106" gradientUnits="userSpaceOnUse" x1="0" y1="117.7" x2="0" y2="227.1"><stop offset="0" stop-color="#990000"/><stop offset=".1" stop-color="#990001"/><stop offset=".2" stop-color="#990005"/><stop offset=".3" stop-color="#990009"/><stop offset=".4" stop-color="#99000d"/><stop offset=".5" stop-color="#990011"/><stop offset=".6" stop-color="#990015"/><stop offset=".7" stop-color="#990019"/><stop offset=".8" stop-color="#99001d"/><stop offset=".9" stop-color="#990021"/><stop offset="1" stop-color="#990026"/></linearGradient>
<rect x="1480" y="117.7" width="5" height="109.4" fill="url(#fo106)"/>
<linearGradient id="fo107" gradientUnits="userSpaceOnUse" x1="0" y1="118.3" x2="0" y2="221.9"><stop offset="0" stop-color="#990000"/><stop offset=".111" stop-color="#990001"/><stop offset=".222" stop-color="#990005"/><stop offset=".333" stop-color="#990009"/><stop offset=".444" stop-color="#99000e"/><stop offset=".556" stop-color="#990012"/><stop offset=".667" stop-color="#990016"/><stop offset=".778" stop-color="#99001a"/><stop offset=".889" stop-color="#99001f"/><stop offset="1" stop-color="#990023"/></linearGradient>
<rect x="1485" y="118.3" width="5" height="103.7" fill="url(#fo107)"/>
<linearGradient id="fo108" gradientUnits="userSpaceOnUse" x1="0" y1="118.8" x2="0" y2="216.8"><stop offset="0" stop-color="#990000"/><stop offset=".111" stop-color="#990001"/><stop offset=".222" stop-color="#990005"/><stop offset=".333" stop-color="#990009"/><stop offset=".444" stop-color="#99000c"/><stop offset=".556" stop-color="#990010"/><stop offset=".667" stop-color="#990014"/><stop offset=".778" stop-color="#990018"/><stop offset=".889" stop-color="#99001c"/><stop offset="1" stop-color="#990020"/></linearGradient>
<rect x="1490" y="118.8" width="5" height="98.0" fill="url(#fo108)"/>
<linearGradient id="fo109" gradientUnits="userSpaceOnUse" x1="0" y1="119.4" x2="0" y2="211.7"><stop offset="0" stop-color="#990000"/><stop offset=".125" stop-color="#990001"/><stop offset=".25" stop-color="#990005"/><stop offset=".375" stop-color="#990009"/><stop offset=".5" stop-color="#99000d"/><stop offset=".625" stop-color="#990011"/><stop offset=".75" stop-color="#990016"/><stop offset=".875" stop-color="#99001a"/><stop offset="1" stop-color="#99001e"/></linearGradient>
<rect x="1495" y="119.4" width="5" height="92.3" fill="url(#fo109)"/>
<linearGradient id="fo110" gradientUnits="userSpaceOnUse" x1="0" y1="120.0" x2="0" y2="206.6"><stop offset="0" stop-color="#990000"/><stop offset=".125" stop-color="#990001"/><stop offset=".25" stop-color="#990005"/><stop offset=".375" stop-color="#990008"/><stop offset=".5" stop-color="#99000c"/><stop offset=".625" stop-color="#990010"/><stop offset=".75" stop-color="#990014"/><stop offset=".875" stop-color="#990018"/><stop offset="1" stop-color="#99001c"/></linearGradient>
<rect x="1500" y="120.0" width="5" height="86.6" fill="url(#fo110)"/>
<linearGradient id="fo111" gradientUnits="userSpaceOnUse" x1="0" y1="120.5" x2="0" y2="201.5"><stop offset="0" stop-color="#990000"/><stop offset=".143" stop-color="#990001"/><stop offset=".286" stop-color="#990005"/><stop offset=".429" stop-color="#990009"/><stop offset=".571" stop-color="#99000d"/><stop offset=".714" stop-color="#990011"/><stop offset=".857" stop-color="#990015"/><stop offset="1" stop-color="#990019"/></linearGradient>
<rect x="1505" y="120.5" width="5" height="80.9" fill="url(#fo111)"/>
<linearGradient id="fo112" gradientUnits="userSpaceOnUse" x1="0" y1="121.1" x2="0" y2="196.4"><stop offset="0" stop-color="#990000"/><stop offset=".143" stop-color="#990001"/><stop offset=".286" stop-color="#990005"/><stop offset=".429" stop-color="#990008"/><stop offset=".571" stop-color="#99000c"/><stop offset=".714" stop-color="#990010"/><stop offset=".857" stop-color="#990013"/><stop offset="1" stop-color="#990017"/></linearGradient>
<rect x="1510" y="121.1" width="5" height="75.3" fill="url(#fo112)"/>
<linearGradient id="fo113" gradientUnits="userSpaceOnUse" x1="0" y1="121.7" x2="0" y2="191.3"><stop offset="0" stop-color="#990000"/><stop offset=".167" stop-color="#990001"/><stop offset=".333" stop-color="#990005"/><stop offset=".5" stop-color="#990009"/><stop offset=".667" stop-color="#99000d"/><stop offset=".833" stop-color="#990011"/><stop offset="1" stop-color="#990015"/></linearGradient>
<rect x="1515" y="121.7" width="5" height="69.6" fill="url(#fo113)"/>
<linearGradient id="fo114" gradientUnits="userSpaceOnUse" x1="0" y1="122.3" x2="0" y2="186.1"><stop offset="0" stop-color="#990000"/><stop offset=".167" stop-color="#990001"/><stop offset=".333" stop-color="#990004"/><stop offset=".5" stop-color="#990008"/><stop offset=".667" stop-color="#99000c"/><stop offset=".833" stop-color="#99000f"/><stop offset="1" stop-color="#990013"/></linearGradient>
<rect x="1520" y="122.3" width="5" height="63.9" fill="url(#fo114)"/>
<linearGradient id="fo115" gradientUnits="userSpaceOnUse" x1="0" y1="122.8" x2="0" y2="181.0"><stop offset="0" stop-color="#990000"/><stop offset=".2" stop-color="#990001"/><stop offset=".4" stop-color="#990005"/><stop offset=".6" stop-color="#990009"/><stop offset=".8" stop-color="#99000d"/><stop offset="1" stop-color="#990011"/></linearGradient>
<rect x="1525" y="122.8" width="5" height="58.2" fill="url(#fo115)"/>
<linearGradient id="fo116" gradientUnits="userSpaceOnUse" x1="0" y1="123.4" x2="0" y2="175.9"><stop offset="0" stop-color="#990000"/><stop offset=".2" stop-color="#990001"/><stop offset=".4" stop-color="#990004"/><stop offset=".6" stop-color="#990008"/><stop offset=".8" stop-color="#99000b"/><stop offset="1" stop-color="#99000f"/></linearGradient>
<rect x="1530" y="123.4" width="5" height="52.5" fill="url(#fo116)"/>
<linearGradient id="fo117" gradientUnits="userSpaceOnUse" x1="0" y1="124.0" x2="0" y2="170.8"><stop offset="0" stop-color="#990000"/><stop offset=".25" stop-color="#990001"/><stop offset=".5" stop-color="#990005"/><stop offset=".75" stop-color="#990009"/><stop offset="1" stop-color="#99000d"/></linearGradient>
<rect x="1535" y="124.0" width="5" height="46.8" fill="url(#fo117)"/>
<linearGradient id="fo118" gradientUnits="userSpaceOnUse" x1="0" y1="124.5" x2="0" y2="165.7"><stop offset="0" stop-color="#990000"/><stop offset=".25" stop-color="#990001"/><stop offset=".5" stop-color="#990004"/><stop offset=".75" stop-color="#990007"/><stop offset="1" stop-color="#99000b"/></linearGradient>
<rect x="1540" y="124.5" width="5" height="41.1" fill="url(#fo118)"/>
<linearGradient id="fo119" gradientUnits="userSpaceOnUse" x1="0" y1="125.1" x2="0" y2="160.6"><stop offset="0" stop-color="#990000"/><stop offset=".25" stop-color="#990001"/><stop offset=".5" stop-color="#990003"/><stop offset=".75" stop-color="#990006"/><stop offset="1" stop-color="#990009"/></linearGradient>
<rect x="1545" y="125.1" width="5" height="35.5" fill="url(#fo119)"/>
</g>
<clipPath id="triclip"><path d="M1400.70 118.52 L1075.00 88.21 L1125.40 397.93 Z"/></clipPath>
<g clip-path="url(#triclip)"><g shape-rendering="crispEdges">
<linearGradient id="fi120" gradientUnits="userSpaceOnUse" x1="0" y1="86.2" x2="0" y2="96.4"><stop offset="0" stop-color="#00ff00"/><stop offset=".333" stop-color="#00ff03"/><stop offset=".667" stop-color="#00ff0b"/><stop offset="1" stop-color="#00ff13"/></linearGradient>
<rect x="1073" y="86.2" width="3" height="10.1" fill="url(#fi120)"/>
<linearGradient id="fi121" gradientUnits="userSpaceOnUse" x1="0" y1="86.3" x2="0" y2="114.8"><stop offset="0" stop-color="#07ff00"/><stop offset=".333" stop-color="#03ff12"/><stop offset=".667" stop-color="#00ff29"/><stop offset="1" stop-color="#00ff43"/></linearGradient>
<rect x="1076" y="86.3" width="3" height="28.5" fill="url(#fi121)"/>
<linearGradient id="fi122" gradientUnits="userSpaceOnUse" x1="0" y1="86.6" x2="0" y2="133.2"><stop offset="0" stop-color="#0eff00"/><stop offset=".2" stop-color="#0bff11"/><stop offset=".4" stop-color="#07ff29"/><stop offset=".6" stop-color="#03ff42"/><stop offset=".8" stop-color="#00ff5c"/><stop offset="1" stop-color="#00ff78"/></linearGradient>
<rect x="1079" y="86.6" width="3" height="46.6" fill="url(#fi122)"/>
<linearGradient id="fi123" gradientUnits="userSpaceOnUse" x1="0" y1="86.9" x2="0" y2="151.7"><stop offset="0" stop-color="#16ff00"/><stop offset=".167" stop-color="#12ff15"/><stop offset=".333" stop-color="#0eff31"/><stop offset=".5" stop-color="#0aff4f"/><stop offset=".667" stop-color="#05ff6f"/><stop offset=".833" stop-color="#00ff91"/><stop offset="1" stop-color="#00ffb6"/></linearGradient>
<rect x="1082" y="86.9" width="3" height="64.8" fill="url(#fi123)"/>
<linearGradient id="fi124" gradientUnits="userSpaceOnUse" x1="0" y1="87.1" x2="0" y2="170.1"><stop offset="0" stop-color="#1eff00"/><stop offset=".125" stop-color="#1aff14"/><stop offset=".25" stop-color="#17ff2f"/><stop offset=".375" stop-color="#13ff4c"/><stop offset=".5" stop-color="#0eff6b"/><stop offset=".625" stop-color="#0aff8c"/><stop offset=".75" stop-color="#05ffaf"/><stop offset=".875" stop-color="#00ffd5"/><stop offset="1" stop-color="#00fffe"/></linearGradient>
<rect x="1085" y="87.1" width="3" height="83.0" fill="url(#fi124)"/>
<linearGradient id="fi125" gradientUnits="userSpaceOnUse" x1="0" y1="87.4" x2="0" y2="188.5"><stop offset="0" stop-color="#26ff00"/><stop offset=".1" stop-color="#23ff14"/><stop offset=".2" stop-color="#1fff2e"/><stop offset=".3" stop-color="#1bff4b"/><stop offset=".4" stop-color="#18ff69"/><stop offset=".5" stop-color="#13ff89"/><stop offset=".6" stop-color="#0fffac"/><stop offset=".7" stop-color="#0affd1"/><stop offset=".8" stop-color="#05fff8"/><stop offset=".9" stop-color="#00dfff"/><stop offset="1" stop-color="#00c1ff"/></linearGradient>
<rect x="1088" y="87.4" width="3" height="101.1" fill="url(#fi125)"/>
<linearGradient id="fi126" gradientUnits="userSpaceOnUse" x1="0" y1="87.7" x2="0" y2="207.0"><stop offset="0" stop-color="#2eff00"/><stop offset=".083" stop-color="#2bff14"/><stop offset=".167" stop-color="#28ff2e"/><stop offset=".25" stop-color="#24ff4a"/><stop offset=".333" stop-color="#21ff68"/><stop offset=".417" stop-color="#1dff88"/><stop offset=".5" stop-color="#19ffaa"/><stop offset=".583" stop-color="#14ffce"/><stop offset=".667" stop-color="#10fff6"/><stop offset=".75" stop-color="#09e2ff"/><stop offset=".833" stop-color="#04c3ff"/><stop offset=".917" stop-color="#00a9ff"/><stop offset="1" stop-color="#0094ff"/></linearGradient>
<rect x="1091" y="87.7" width="3" height="119.3" fill="url(#fi126)"/>
<linearGradient id="fi127" gradientUnits="userSpaceOnUse" x1="0" y1="88.0" x2="0" y2="225.4"><stop offset="0" stop-color="#36ff00"/><stop offset=".071" stop-color="#33ff13"/><stop offset=".143" stop-color="#30ff2e"/><stop offset=".214" stop-color="#2dff4a"/><stop offset=".286" stop-color="#2aff67"/><stop offset=".357" stop-color="#27ff87"/><stop offset=".429" stop-color="#23ffa9"/><stop offset=".5" stop-color="#1fffce"/><stop offset=".571" stop-color="#1bfff5"/><stop offset=".643" stop-color="#13e3ff"/><stop offset=".714" stop-color="#0dc3ff"/><stop offset=".786" stop-color="#08aaff"/><stop offset=".857" stop-color="#0395ff"/><stop offset=".929" stop-color="#0083ff"/><stop offset="1" stop-color="#0074ff"/></linearGradient>
<rect x="1094" y="88.0" width="3" height="137.4" fill="url(#fi127)"/>
<linearGradient id="fi128" gradientUnits="userSpaceOnUse" x1="0" y1="88.3" x2="0" y2="243.8"><stop offset="0" stop-color="#3fff00"/><stop offset=".062" stop-color="#3cff13"/><stop offset=".125" stop-color="#39ff2e"/><stop offset=".188" stop-color="#37ff4a"/><stop offset=".25" stop-color="#34ff67"/><stop offset=".312" stop-color="#30ff87"/><stop offset=".375" stop-color="#2dffa9"/><stop offset=".438" stop-color="#29ffce"/><stop offset=".5" stop-color="#25fff5"/><stop offset=".562" stop-color="#1de2ff"/><stop offset=".625" stop-color="#16c3ff"/><stop offset=".688" stop-color="#10aaff"/><stop offset=".75" stop-color="#0b95ff"/><stop offset=".812" stop-color="#0683ff"/><stop offset=".875" stop-color="#0374ff"/><stop offset=".938" stop-color="#0067ff"/><stop offset="1" stop-color="#005cff"/></linearGradient>
<rect x="1097" y="88.3" width="3" height="155.6" fill="url(#fi128)"/>
<linearGradient id="fi129" gradientUnits="userSpaceOnUse" x1="0" y1="88.5" x2="0" y2="262.3"><stop offset="0" stop-color="#47ff00"/><stop offset=".059" stop-color="#45ff15"/><stop offset=".118" stop-color="#42ff31"/><stop offset=".176" stop-color="#3fff4f"/><stop offset=".235" stop-color="#3dff6f"/><stop offset=".294" stop-color="#3aff91"/><stop offset=".353" stop-color="#36ffb6"/><stop offset=".412" stop-color="#33ffde"/><stop offset=".471" stop-color="#2df5ff"/><stop offset=".529" stop-color="#23d1ff"/><stop offset=".588" stop-color="#1bb3ff"/><stop offset=".647" stop-color="#149bff"/><stop offset=".706" stop-color="#0f88ff"/><stop offset=".765" stop-color="#0a77ff"/><stop offset=".824" stop-color="#0669ff"/><stop offset=".882" stop-color="#035cff"/><stop offset=".941" stop-color="#0052ff"/><stop offset="1" stop-color="#0048ff"/></linearGradient>
<rect x="1100" y="88.5" width="3" height="173.7" fill="url(#fi129)"/>
<linearGradient id="fi130" gradientUnits="userSpaceOnUse" x1="0" y1="88.8" x2="0" y2="280.7"><stop offset="0" stop-color="#50ff00"/><stop offset=".053" stop-color="#4eff15"/><stop offset=".105" stop-color="#4cff31"/><stop offset=".158" stop-color="#49ff4f"/><stop offset=".211" stop-color="#47ff6f"/><stop offset=".263" stop-color="#44ff91"/><stop offset=".316" stop-color="#41ffb6"/><stop offset=".368" stop-color="#3effde"/><stop offset=".421" stop-color="#38f6ff"/><stop offset=".474" stop-color="#2dd1ff"/><stop offset=".526" stop-color="#24b4ff"/><stop offset=".579" stop-color="#1c9cff"/><stop offset=".632" stop-color="#1688ff"/><stop offset=".684" stop-color="#1177ff"/><stop offset=".737" stop-color="#0c69ff"/><stop offset=".789" stop-color="#095dff"/><stop offset=".842" stop-color="#0552ff"/><stop offset=".895" stop-color="#0249ff"/><stop offset=".947" stop-color="#0040ff"/><stop offset="1" stop-color="#0039ff"/></linearGradient>
<rect x="1103" y="88.8" width="3" height="191.9" fill="url(#fi130)"/>
<linearGradient id="fi131" gradientUnits="userSpaceOnUse" x1="0" y1="89.1" x2="0" y2="299.1"><stop offset="0" stop-color="#59ff00"/><stop offset=".048" stop-color="#57ff15"/><stop offset=".095" stop-color="#55ff31"/><stop offset=".143" stop-color="#53ff4f"/><stop offset=".19" stop-color="#51ff6f"/><stop offset=".238" stop-color="#4eff91"/><stop offset=".286" stop-color="#4cffb6"/><stop offset=".333" stop-color="#49ffde"/><stop offset=".381" stop-color="#44f6ff"/><stop offset=".429" stop-color="#37d1ff"/><stop offset=".476" stop-color="#2db4ff"/><stop offset=".524" stop-color="#249cff"/><stop offset=".571" stop-color="#1e88ff"/><stop offset=".619" stop-color="#1877ff"/><stop offset=".667" stop-color="#1369ff"/><stop offset=".714" stop-color="#0f5dff"/><stop offset=".762" stop-color="#0b52ff"/><stop offset=".81" stop-color="#0848ff"/><stop offset=".857" stop-color="#0540ff"/><stop offset=".905" stop-color="#0239ff"/><stop offset=".952" stop-color="#0032ff"/><stop offset="1" stop-color="#002cff"/></linearGradient>
<rect x="1106" y="89.1" width="3" height="210.1" fill="url(#fi131)"/>
<linearGradient id="fi132" gradientUnits="userSpaceOnUse" x1="0" y1="89.4" x2="0" y2="317.6"><stop offset="0" stop-color="#62ff00"/><stop offset=".043" stop-color="#60ff15"/><stop offset=".087" stop-color="#5fff31"/><stop offset=".13" stop-color="#5dff4f"/><stop offset=".174" stop-color="#5bff6f"/><stop offset=".217" stop-color="#59ff91"/><stop offset=".261" stop-color="#57ffb6"/><stop offset=".304" stop-color="#55ffde"/><stop offset=".348" stop-color="#4ff5ff"/><stop offset=".391" stop-color="#41d0ff"/><stop offset=".435" stop-color="#36b3ff"/><stop offset=".478" stop-color="#2d9bff"/><stop offset=".522" stop-color="#2588ff"/><stop offset=".565" stop-color="#1f77ff"/><stop offset=".609" stop-color="#1969ff"/><stop offset=".652" stop-color="#155cff"/><stop offset=".696" stop-color="#1052ff"/><stop offset=".739" stop-color="#0d48ff"/><stop offset=".783" stop-color="#0a40ff"/><stop offset=".826" stop-color="#0738ff"/><stop offset=".87" stop-color="#0431ff"/><stop offset=".913" stop-color="#022bff"/><stop offset=".957" stop-color="#0026ff"/><stop offset="1" stop-color="#0021ff"/></linearGradient>
<rect x="1109" y="89.4" width="3" height="228.2" fill="url(#fi132)"/>
<linearGradient id="fi133" gradientUnits="userSpaceOnUse" x1="0" y1="89.6" x2="0" y2="336.0"><stop offset="0" stop-color="#6bff00"/><stop offset=".04" stop-color="#6aff15"/><stop offset=".08" stop-color="#69ff31"/><stop offset=".12" stop-color="#67ff4f"/><stop offset=".16" stop-color="#66ff6f"/><stop offset=".2" stop-color="#64ff92"/><stop offset=".24" stop-color="#62ffb7"/><stop offset=".28" stop-color="#60ffdf"/><stop offset=".32" stop-color="#5af4ff"/><stop offset=".36" stop-color="#4bcfff"/><stop offset=".4" stop-color="#3fb2ff"/><stop offset=".44" stop-color="#359bff"/><stop offset=".48" stop-color="#2d87ff"/><stop offset=".52" stop-color="#2676ff"/><stop offset=".56" stop-color="#2068ff"/><stop offset=".6" stop-color="#1b5cff"/><stop offset=".64" stop-color="#1651ff"/><stop offset=".68" stop-color="#1248ff"/><stop offset=".72" stop-color="#0f3fff"/><stop offset=".76" stop-color="#0b38ff"/><stop offset=".8" stop-color="#0931ff"/><stop offset=".84" stop-color="#062bff"/><stop offset=".88" stop-color="#0425ff"/><stop offset=".92" stop-color="#0220ff"/><stop offset=".96" stop-color="#001cff"/><stop offset="1" stop-color="#0017ff"/></linearGradient>
<rect x="1112" y="89.6" width="3" height="246.4" fill="url(#fi133)"/>
<linearGradient id="fi134" gradientUnits="userSpaceOnUse" x1="0" y1="89.9" x2="0" y2="354.5"><stop offset="0" stop-color="#75ff00"/><stop offset=".038" stop-color="#74ff16"/><stop offset=".077" stop-color="#73ff33"/><stop offset=".115" stop-color="#71ff53"/><stop offset=".154" stop-color="#70ff75"/><stop offset=".192" stop-color="#6fff9a"/><stop offset=".231" stop-color="#6effc1"/><stop offset=".269" stop-color="#6cffec"/><stop offset=".308" stop-color="#60e6ff"/><stop offset=".346" stop-color="#50c3ff"/><stop offset=".385" stop-color="#43a8ff"/><stop offset=".423" stop-color="#3991ff"/><stop offset=".462" stop-color="#307eff"/><stop offset=".5" stop-color="#296eff"/><stop offset=".538" stop-color="#2360ff"/><stop offset=".577" stop-color="#1e55ff"/><stop offset=".615" stop-color="#194aff"/><stop offset=".654" stop-color="#1541ff"/><stop offset=".692" stop-color="#1139ff"/><stop offset=".731" stop-color="#0e32ff"/><stop offset=".769" stop-color="#0b2cff"/><stop offset=".808" stop-color="#0826ff"/><stop offset=".846" stop-color="#0621ff"/><stop offset=".885" stop-color="#041cff"/><stop offset=".923" stop-color="#0217ff"/><stop offset=".962" stop-color="#0013ff"/><stop offset="1" stop-color="#0010ff"/></linearGradient>
<rect x="1115" y="89.9" width="3" height="264.5" fill="url(#fi134)"/>
<linearGradient id="fi135" gradientUnits="userSpaceOnUse" x1="0" y1="90.2" x2="0" y2="372.9"><stop offset="0" stop-color="#7eff00"/><stop offset=".036" stop-color="#7eff16"/><stop offset=".071" stop-color="#7dff34"/><stop offset=".107" stop-color="#7cff53"/><stop offset=".143" stop-color="#7bff75"/><stop offset=".179" stop-color="#7aff9a"/><stop offset=".214" stop-color="#7affc2"/><stop offset=".25" stop-color="#79ffed"/><stop offset=".286" stop-color="#6ce6ff"/><stop offset=".321" stop-color="#5ac3ff"/><stop offset=".357" stop-color="#4ca7ff"/><stop offset=".393" stop-color="#4190ff"/><stop offset=".429" stop-color="#387dff"/><stop offset=".464" stop-color="#306eff"/><stop offset=".5" stop-color="#2960ff"/><stop offset=".536" stop-color="#2454ff"/><stop offset=".571" stop-color="#1f4aff"/><stop offset=".607" stop-color="#1a41ff"/><stop offset=".643" stop-color="#1639ff"/><stop offset=".679" stop-color="#1332ff"/><stop offset=".714" stop-color="#0f2bff"/><stop offset=".75" stop-color="#0d26ff"/><stop offset=".786" stop-color="#0a20ff"/><stop offset=".821" stop-color="#081bff"/><stop offset=".857" stop-color="#0517ff"/><stop offset=".893" stop-color="#0313ff"/><stop offset=".929" stop-color="#010fff"/><stop offset=".964" stop-color="#000cff"/><stop offset="1" stop-color="#0009ff"/></linearGradient>
<rect x="1118" y="90.2" width="3" height="282.7" fill="url(#fi135)"/>
<linearGradient id="fi136" gradientUnits="userSpaceOnUse" x1="0" y1="90.5" x2="0" y2="391.3"><stop offset="0" stop-color="#88ff00"/><stop offset=".033" stop-color="#88ff16"/><stop offset=".067" stop-color="#87ff34"/><stop offset=".1" stop-color="#87ff54"/><stop offset=".133" stop-color="#87ff76"/><stop offset=".167" stop-color="#86ff9b"/><stop offset=".2" stop-color="#86ffc3"/><stop offset=".233" stop-color="#85ffee"/><stop offset=".267" stop-color="#77e4ff"/><stop offset=".3" stop-color="#64c2ff"/><stop offset=".333" stop-color="#56a6ff"/><stop offset=".367" stop-color="#498fff"/><stop offset=".4" stop-color="#3f7dff"/><stop offset=".433" stop-color="#376dff"/><stop offset=".467" stop-color="#305fff"/><stop offset=".5" stop-color="#2a54ff"/><stop offset=".533" stop-color="#2449ff"/><stop offset=".567" stop-color="#1f40ff"/><stop offset=".6" stop-color="#1b38ff"/><stop offset=".633" stop-color="#1731ff"/><stop offset=".667" stop-color="#142bff"/><stop offset=".7" stop-color="#1125ff"/><stop offset=".733" stop-color="#0e20ff"/><stop offset=".767" stop-color="#0b1bff"/><stop offset=".8" stop-color="#0917ff"/><stop offset=".833" stop-color="#0713ff"/><stop offset=".867" stop-color="#050fff"/><stop offset=".9" stop-color="#030bff"/><stop offset=".933" stop-color="#0108ff"/><stop offset=".967" stop-color="#0005ff"/><stop offset="1" stop-color="#0002ff"/></linearGradient>
<rect x="1121" y="90.5" width="3" height="300.8" fill="url(#fi136)"/>
<linearGradient id="fi137" gradientUnits="userSpaceOnUse" x1="0" y1="90.8" x2="0" y2="399.8"><stop offset="0" stop-color="#92ff00"/><stop offset=".032" stop-color="#92ff16"/><stop offset=".065" stop-color="#92ff34"/><stop offset=".097" stop-color="#92ff54"/><stop offset=".129" stop-color="#92ff76"/><stop offset=".161" stop-color="#92ff9c"/><stop offset=".194" stop-color="#92ffc4"/><stop offset=".226" stop-color="#92ffef"/><stop offset=".258" stop-color="#82e3ff"/><stop offset=".29" stop-color="#6ec0ff"/><stop offset=".323" stop-color="#5fa5ff"/><stop offset=".355" stop-color="#528eff"/><stop offset=".387" stop-color="#477cff"/><stop offset=".419" stop-color="#3e6cff"/><stop offset=".452" stop-color="#365eff"/><stop offset=".484" stop-color="#3053ff"/><stop offset=".516" stop-color="#2a49ff"/><stop offset=".548" stop-color="#2540ff"/><stop offset=".581" stop-color="#2038ff"/><stop offset=".613" stop-color="#1c31ff"/><stop offset=".645" stop-color="#182aff"/><stop offset=".677" stop-color="#1525ff"/><stop offset=".71" stop-color="#121fff"/><stop offset=".742" stop-color="#0f1bff"/><stop offset=".774" stop-color="#0d16ff"/><stop offset=".806" stop-color="#0a12ff"/><stop offset=".839" stop-color="#080eff"/><stop offset=".871" stop-color="#060bff"/><stop offset=".903" stop-color="#0508ff"/><stop offset=".935" stop-color="#0305ff"/><stop offset=".968" stop-color="#0102ff"/><stop offset="1" stop-color="#0000ff"/></linearGradient>
<rect x="1124" y="90.8" width="3" height="309.1" fill="url(#fi137)"/>
<linearGradient id="fi138" gradientUnits="userSpaceOnUse" x1="0" y1="91.0" x2="0" y2="398.3"><stop offset="0" stop-color="#9dff00"/><stop offset=".032" stop-color="#9dff16"/><stop offset=".065" stop-color="#9dff34"/><stop offset=".097" stop-color="#9eff54"/><stop offset=".129" stop-color="#9eff77"/><stop offset=".161" stop-color="#9fff9c"/><stop offset=".194" stop-color="#9fffc5"/><stop offset=".226" stop-color="#a0fff1"/><stop offset=".258" stop-color="#8ee2ff"/><stop offset=".29" stop-color="#79bfff"/><stop offset=".323" stop-color="#68a4ff"/><stop offset=".355" stop-color="#5a8dff"/><stop offset=".387" stop-color="#4f7bff"/><stop offset=".419" stop-color="#456bff"/><stop offset=".452" stop-color="#3d5eff"/><stop offset=".484" stop-color="#3652ff"/><stop offset=".516" stop-color="#2f48ff"/><stop offset=".548" stop-color="#2a3fff"/><stop offset=".581" stop-color="#2537ff"/><stop offset=".613" stop-color="#2130ff"/><stop offset=".645" stop-color="#1d2aff"/><stop offset=".677" stop-color="#1924ff"/><stop offset=".71" stop-color="#161fff"/><stop offset=".742" stop-color="#131aff"/><stop offset=".774" stop-color="#1116ff"/><stop offset=".806" stop-color="#0e12ff"/><stop offset=".839" stop-color="#0c0eff"/><stop offset=".871" stop-color="#0a0bff"/><stop offset=".903" stop-color="#0807ff"/><stop offset=".935" stop-color="#0604ff"/><stop offset=".968" stop-color="#0402ff"/><stop offset="1" stop-color="#0300ff"/></linearGradient>
<rect x="1127" y="91.0" width="3" height="307.3" fill="url(#fi138)"/>
<linearGradient id="fi139" gradientUnits="userSpaceOnUse" x1="0" y1="91.3" x2="0" y2="395.3"><stop offset="0" stop-color="#a7ff00"/><stop offset=".033" stop-color="#a8ff17"/><stop offset=".067" stop-color="#a9ff36"/><stop offset=".1" stop-color="#aaff58"/><stop offset=".133" stop-color="#aaff7c"/><stop offset=".167" stop-color="#abffa3"/><stop offset=".2" stop-color="#acffcd"/><stop offset=".233" stop-color="#aefffb"/><stop offset=".267" stop-color="#94d7ff"/><stop offset=".3" stop-color="#7eb6ff"/><stop offset=".333" stop-color="#6d9cff"/><stop offset=".367" stop-color="#5e86ff"/><stop offset=".4" stop-color="#5374ff"/><stop offset=".433" stop-color="#4965ff"/><stop offset=".467" stop-color="#4058ff"/><stop offset=".5" stop-color="#394dff"/><stop offset=".533" stop-color="#3243ff"/><stop offset=".567" stop-color="#2d3aff"/><stop offset=".6" stop-color="#2833ff"/><stop offset=".633" stop-color="#232cff"/><stop offset=".667" stop-color="#1f26ff"/><stop offset=".7" stop-color="#1c20ff"/><stop offset=".733" stop-color="#181bff"/><stop offset=".767" stop-color="#1517ff"/><stop offset=".8" stop-color="#1312ff"/><stop offset=".833" stop-color="#100fff"/><stop offset=".867" stop-color="#0e0bff"/><stop offset=".9" stop-color="#0b08ff"/><stop offset=".933" stop-color="#0905ff"/><stop offset=".967" stop-color="#0802ff"/><stop offset="1" stop-color="#0600ff"/></linearGradient>
<rect x="1130" y="91.3" width="3" height="303.9" fill="url(#fi139)"/>
<linearGradient id="fi140" gradientUnits="userSpaceOnUse" x1="0" y1="91.6" x2="0" y2="392.2"><stop offset="0" stop-color="#b2ff00"/><stop offset=".033" stop-color="#b3ff17"/><stop offset=".067" stop-color="#b4ff36"/><stop offset=".1" stop-color="#b6ff58"/><stop offset=".133" stop-color="#b7ff7c"/><stop offset=".167" stop-color="#b8ffa3"/><stop offset=".2" stop-color="#baffcd"/><stop offset=".233" stop-color="#bcfffb"/><stop offset=".267" stop-color="#a0d8ff"/><stop offset=".3" stop-color="#89b6ff"/><stop offset=".333" stop-color="#769cff"/><stop offset=".367" stop-color="#6786ff"/><stop offset=".4" stop-color="#5b74ff"/><stop offset=".433" stop-color="#5065ff"/><stop offset=".467" stop-color="#4758ff"/><stop offset=".5" stop-color="#3f4dff"/><stop offset=".533" stop-color="#3943ff"/><stop offset=".567" stop-color="#333aff"/><stop offset=".6" stop-color="#2d33ff"/><stop offset=".633" stop-color="#282cff"/><stop offset=".667" stop-color="#2426ff"/><stop offset=".7" stop-color="#2020ff"/><stop offset=".733" stop-color="#1d1bff"/><stop offset=".767" stop-color="#1a17ff"/><stop offset=".8" stop-color="#1712ff"/><stop offset=".833" stop-color="#140fff"/><stop offset=".867" stop-color="#110bff"/><stop offset=".9" stop-color="#0f08ff"/><stop offset=".933" stop-color="#0d05ff"/><stop offset=".967" stop-color="#0b02ff"/><stop offset="1" stop-color="#0900ff"/></linearGradient>
<rect x="1133" y="91.6" width="3" height="300.6" fill="url(#fi140)"/>
<linearGradient id="fi141" gradientUnits="userSpaceOnUse" x1="0" y1="91.9" x2="0" y2="389.2"><stop offset="0" stop-color="#bdff00"/><stop offset=".033" stop-color="#beff17"/><stop offset=".067" stop-color="#c0ff36"/><stop offset=".1" stop-color="#c2ff58"/><stop offset=".133" stop-color="#c4ff7c"/><stop offset=".167" stop-color="#c6ffa3"/><stop offset=".2" stop-color="#c8ffcd"/><stop offset=".233" stop-color="#cafffb"/><stop offset=".267" stop-color="#add8ff"/><stop offset=".3" stop-color="#94b6ff"/><stop offset=".333" stop-color="#819cff"/><stop offset=".367" stop-color="#7186ff"/><stop offset=".4" stop-color="#6374ff"/><stop offset=".433" stop-color="#5865ff"/><stop offset=".467" stop-color="#4e58ff"/><stop offset=".5" stop-color="#464dff"/><stop offset=".533" stop-color="#3f43ff"/><stop offset=".567" stop-color="#383aff"/><stop offset=".6" stop-color="#3333ff"/><stop offset=".633" stop-color="#2e2cff"/><stop offset=".667" stop-color="#2926ff"/><stop offset=".7" stop-color="#2520ff"/><stop offset=".733" stop-color="#211bff"/><stop offset=".767" stop-color="#1e17ff"/><stop offset=".8" stop-color="#1b12ff"/><stop offset=".833" stop-color="#180fff"/><stop offset=".867" stop-color="#150bff"/><stop offset=".9" stop-color="#1308ff"/><stop offset=".933" stop-color="#1105ff"/><stop offset=".967" stop-color="#0e02ff"/><stop offset="1" stop-color="#0c00ff"/></linearGradient>
<rect x="1136" y="91.9" width="3" height="297.3" fill="url(#fi141)"/>
<linearGradient id="fi142" gradientUnits="userSpaceOnUse" x1="0" y1="92.2" x2="0" y2="386.1"><stop offset="0" stop-color="#c8ff00"/><stop offset=".034" stop-color="#caff18"/><stop offset=".069" stop-color="#ccff38"/><stop offset=".103" stop-color="#cfff5b"/><stop offset=".138" stop-color="#d1ff81"/><stop offset=".172" stop-color="#d4ffaa"/><stop offset=".207" stop-color="#d7ffd6"/><stop offset=".241" stop-color="#d3f7ff"/><stop offset=".276" stop-color="#b2ceff"/><stop offset=".31" stop-color="#99adff"/><stop offset=".345" stop-color="#8594ff"/><stop offset=".379" stop-color="#747fff"/><stop offset=".414" stop-color="#676eff"/><stop offset=".448" stop-color="#5b5fff"/><stop offset=".483" stop-color="#5152ff"/><stop offset=".517" stop-color="#4948ff"/><stop offset=".552" stop-color="#413eff"/><stop offset=".586" stop-color="#3b36ff"/><stop offset=".621" stop-color="#352eff"/><stop offset=".655" stop-color="#3028ff"/><stop offset=".69" stop-color="#2b22ff"/><stop offset=".724" stop-color="#271dff"/><stop offset=".759" stop-color="#2318ff"/><stop offset=".793" stop-color="#2013ff"/><stop offset=".828" stop-color="#1d0fff"/><stop offset=".862" stop-color="#1a0bff"/><stop offset=".897" stop-color="#1708ff"/><stop offset=".931" stop-color="#1405ff"/><stop offset=".966" stop-color="#1202ff"/><stop offset="1" stop-color="#1000ff"/></linearGradient>
<rect x="1139" y="92.2" width="3" height="294.0" fill="url(#fi142)"/>
<linearGradient id="fi143" gradientUnits="userSpaceOnUse" x1="0" y1="92.4" x2="0" y2="383.1"><stop offset="0" stop-color="#d4ff00"/><stop offset=".034" stop-color="#d6ff18"/><stop offset=".069" stop-color="#d9ff38"/><stop offset=".103" stop-color="#dbff5b"/><stop offset=".138" stop-color="#deff81"/><stop offset=".172" stop-color="#e2ffaa"/><stop offset=".207" stop-color="#e5ffd6"/><stop offset=".241" stop-color="#e2f7ff"/><stop offset=".276" stop-color="#bfceff"/><stop offset=".31" stop-color="#a4adff"/><stop offset=".345" stop-color="#8f94ff"/><stop offset=".379" stop-color="#7e7fff"/><stop offset=".414" stop-color="#6f6eff"/><stop offset=".448" stop-color="#635fff"/><stop offset=".483" stop-color="#5952ff"/><stop offset=".517" stop-color="#5048ff"/><stop offset=".552" stop-color="#483eff"/><stop offset=".586" stop-color="#4136ff"/><stop offset=".621" stop-color="#3b2eff"/><stop offset=".655" stop-color="#3528ff"/><stop offset=".69" stop-color="#3022ff"/><stop offset=".724" stop-color="#2c1dff"/><stop offset=".759" stop-color="#2818ff"/><stop offset=".793" stop-color="#2413ff"/><stop offset=".828" stop-color="#210fff"/><stop offset=".862" stop-color="#1e0bff"/><stop offset=".897" stop-color="#1b08ff"/><stop offset=".931" stop-color="#1805ff"/><stop offset=".966" stop-color="#1602ff"/><stop offset="1" stop-color="#1300ff"/></linearGradient>
<rect x="1142" y="92.4" width="3" height="290.6" fill="url(#fi143)"/>
<linearGradient id="fi144" gradientUnits="userSpaceOnUse" x1="0" y1="92.7" x2="0" y2="380.0"><stop offset="0" stop-color="#e0ff00"/><stop offset=".034" stop-color="#e2ff18"/><stop offset=".069" stop-color="#e5ff38"/><stop offset=".103" stop-color="#e9ff5b"/><stop offset=".138" stop-color="#ecff81"/><stop offset=".172" stop-color="#f0ffaa"/><stop offset=".207" stop-color="#f4ffd6"/><stop offset=".241" stop-color="#f1f7ff"/><stop offset=".276" stop-color="#ccceff"/><stop offset=".31" stop-color="#b0adff"/><stop offset=".345" stop-color="#9a94ff"/><stop offset=".379" stop-color="#877fff"/><stop offset=".414" stop-color="#786eff"/><stop offset=".448" stop-color="#6b5fff"/><stop offset=".483" stop-color="#6052ff"/><stop offset=".517" stop-color="#5748ff"/><stop offset=".552" stop-color="#4e3eff"/><stop offset=".586" stop-color="#4736ff"/><stop offset=".621" stop-color="#412eff"/><stop offset=".655" stop-color="#3b28ff"/><stop offset=".69" stop-color="#3622ff"/><stop offset=".724" stop-color="#311dff"/><stop offset=".759" stop-color="#2d18ff"/><stop offset=".793" stop-color="#2913ff"/><stop offset=".828" stop-color="#250fff"/><stop offset=".862" stop-color="#220bff"/><stop offset=".897" stop-color="#1f08ff"/><stop offset=".931" stop-color="#1c05ff"/><stop offset=".966" stop-color="#1902ff"/><stop offset="1" stop-color="#1700ff"/></linearGradient>
<rect x="1145" y="92.7" width="3" height="287.3" fill="url(#fi144)"/>
<linearGradient id="fi145" gradientUnits="userSpaceOnUse" x1="0" y1="93.0" x2="0" y2="377.0"><stop offset="0" stop-color="#ecff00"/><stop offset=".036" stop-color="#efff19"/><stop offset=".071" stop-color="#f3ff3b"/><stop offset=".107" stop-color="#f7ff5f"/><stop offset=".143" stop-color="#fbff86"/><stop offset=".179" stop-color="#ffffb1"/><stop offset=".214" stop-color="#fffadc"/><stop offset=".25" stop-color="#f6ecff"/><stop offset=".286" stop-color="#d1c4ff"/><stop offset=".321" stop-color="#b4a5ff"/><stop offset=".357" stop-color="#9d8cff"/><stop offset=".393" stop-color="#8a78ff"/><stop offset=".429" stop-color="#7b67ff"/><stop offset=".464" stop-color="#6e59ff"/><stop offset=".5" stop-color="#634dff"/><stop offset=".536" stop-color="#5942ff"/><stop offset=".571" stop-color="#5039ff"/><stop offset=".607" stop-color="#4931ff"/><stop offset=".643" stop-color="#422aff"/><stop offset=".679" stop-color="#3d24ff"/><stop offset=".714" stop-color="#371eff"/><stop offset=".75" stop-color="#3219ff"/><stop offset=".786" stop-color="#2e14ff"/><stop offset=".821" stop-color="#2a10ff"/><stop offset=".857" stop-color="#260cff"/><stop offset=".893" stop-color="#2308ff"/><stop offset=".929" stop-color="#2005ff"/><stop offset=".964" stop-color="#1d02ff"/><stop offset="1" stop-color="#1b00ff"/></linearGradient>
<rect x="1148" y="93.0" width="3" height="284.0" fill="url(#fi145)"/>
<linearGradient id="fi146" gradientUnits="userSpaceOnUse" x1="0" y1="93.3" x2="0" y2="373.9"><stop offset="0" stop-color="#f8ff00"/><stop offset=".036" stop-color="#fcff19"/><stop offset=".071" stop-color="#fffe3a"/><stop offset=".107" stop-color="#fffa5d"/><stop offset=".143" stop-color="#fff581"/><stop offset=".179" stop-color="#fff0a7"/><stop offset=".214" stop-color="#ffebcf"/><stop offset=".25" stop-color="#ffe6f9"/><stop offset=".286" stop-color="#dec4ff"/><stop offset=".321" stop-color="#c0a5ff"/><stop offset=".357" stop-color="#a88cff"/><stop offset=".393" stop-color="#9478ff"/><stop offset=".429" stop-color="#8467ff"/><stop offset=".464" stop-color="#7659ff"/><stop offset=".5" stop-color="#6a4dff"/><stop offset=".536" stop-color="#6042ff"/><stop offset=".571" stop-color="#5739ff"/><stop offset=".607" stop-color="#4f31ff"/><stop offset=".643" stop-color="#482aff"/><stop offset=".679" stop-color="#4224ff"/><stop offset=".714" stop-color="#3c1eff"/><stop offset=".75" stop-color="#3719ff"/><stop offset=".786" stop-color="#3314ff"/><stop offset=".821" stop-color="#2f10ff"/><stop offset=".857" stop-color="#2b0cff"/><stop offset=".893" stop-color="#2708ff"/><stop offset=".929" stop-color="#2405ff"/><stop offset=".964" stop-color="#2102ff"/><stop offset="1" stop-color="#1e00ff"/></linearGradient>
<rect x="1151" y="93.3" width="3" height="280.7" fill="url(#fi146)"/>
<linearGradient id="fi147" gradientUnits="userSpaceOnUse" x1="0" y1="93.6" x2="0" y2="370.9"><stop offset="0" stop-color="#fff900"/><stop offset=".036" stop-color="#fff518"/><stop offset=".071" stop-color="#fff137"/><stop offset=".107" stop-color="#ffed58"/><stop offset=".143" stop-color="#ffe87a"/><stop offset=".179" stop-color="#ffe39e"/><stop offset=".214" stop-color="#ffdec3"/><stop offset=".25" stop-color="#ffd9eb"/><stop offset=".286" stop-color="#ecc4ff"/><stop offset=".321" stop-color="#cca5ff"/><stop offset=".357" stop-color="#b38cff"/><stop offset=".393" stop-color="#9e78ff"/><stop offset=".429" stop-color="#8d67ff"/><stop offset=".464" stop-color="#7e59ff"/><stop offset=".5" stop-color="#724dff"/><stop offset=".536" stop-color="#6742ff"/><stop offset=".571" stop-color="#5e39ff"/><stop offset=".607" stop-color="#5631ff"/><stop offset=".643" stop-color="#4e2aff"/><stop offset=".679" stop-color="#4824ff"/><stop offset=".714" stop-color="#421eff"/><stop offset=".75" stop-color="#3d19ff"/><stop offset=".786" stop-color="#3814ff"/><stop offset=".821" stop-color="#3310ff"/><stop offset=".857" stop-color="#2f0cff"/><stop offset=".893" stop-color="#2c08ff"/><stop offset=".929" stop-color="#2805ff"/><stop offset=".964" stop-color="#2502ff"/><stop offset="1" stop-color="#2200ff"/></linearGradient>
<rect x="1154" y="93.6" width="3" height="277.3" fill="url(#fi147)"/>
<linearGradient id="fi148" gradientUnits="userSpaceOnUse" x1="0" y1="93.8" x2="0" y2="367.9"><stop offset="0" stop-color="#ffee00"/><stop offset=".037" stop-color="#ffe918"/><stop offset=".074" stop-color="#ffe537"/><stop offset=".111" stop-color="#ffe057"/><stop offset=".148" stop-color="#ffdb79"/><stop offset=".185" stop-color="#ffd69c"/><stop offset=".222" stop-color="#ffd1c1"/><stop offset=".259" stop-color="#ffcce7"/><stop offset=".296" stop-color="#efbaff"/><stop offset=".333" stop-color="#cf9cff"/><stop offset=".37" stop-color="#b584ff"/><stop offset=".407" stop-color="#a070ff"/><stop offset=".444" stop-color="#8f60ff"/><stop offset=".481" stop-color="#8053ff"/><stop offset=".519" stop-color="#7447ff"/><stop offset=".556" stop-color="#693dff"/><stop offset=".593" stop-color="#5f34ff"/><stop offset=".63" stop-color="#572dff"/><stop offset=".667" stop-color="#5026ff"/><stop offset=".704" stop-color="#4920ff"/><stop offset=".741" stop-color="#431aff"/><stop offset=".778" stop-color="#3e15ff"/><stop offset=".815" stop-color="#3911ff"/><stop offset=".852" stop-color="#350cff"/><stop offset=".889" stop-color="#3009ff"/><stop offset=".926" stop-color="#2d05ff"/><stop offset=".963" stop-color="#2902ff"/><stop offset="1" stop-color="#2600ff"/></linearGradient>
<rect x="1157" y="93.8" width="3" height="274.0" fill="url(#fi148)"/>
<linearGradient id="fi149" gradientUnits="userSpaceOnUse" x1="0" y1="94.1" x2="0" y2="364.8"><stop offset="0" stop-color="#ffe200"/><stop offset=".037" stop-color="#ffde16"/><stop offset=".074" stop-color="#ffda34"/><stop offset=".111" stop-color="#ffd553"/><stop offset=".148" stop-color="#ffd073"/><stop offset=".185" stop-color="#ffcb94"/><stop offset=".222" stop-color="#ffc6b7"/><stop offset=".259" stop-color="#ffc1db"/><stop offset=".296" stop-color="#fdbaff"/><stop offset=".333" stop-color="#db9cff"/><stop offset=".37" stop-color="#c084ff"/><stop offset=".407" stop-color="#aa70ff"/><stop offset=".444" stop-color="#9860ff"/><stop offset=".481" stop-color="#8953ff"/><stop offset=".519" stop-color="#7c47ff"/><stop offset=".556" stop-color="#703dff"/><stop offset=".593" stop-color="#6634ff"/><stop offset=".63" stop-color="#5e2dff"/><stop offset=".667" stop-color="#5626ff"/><stop offset=".704" stop-color="#4f20ff"/><stop offset=".741" stop-color="#491aff"/><stop offset=".778" stop-color="#4315ff"/><stop offset=".815" stop-color="#3e11ff"/><stop offset=".852" stop-color="#390cff"/><stop offset=".889" stop-color="#3509ff"/><stop offset=".926" stop-color="#3105ff"/><stop offset=".963" stop-color="#2d02ff"/><stop offset="1" stop-color="#2a00ff"/></linearGradient>
<rect x="1160" y="94.1" width="3" height="270.7" fill="url(#fi149)"/>
<linearGradient id="fi150" gradientUnits="userSpaceOnUse" x1="0" y1="94.4" x2="0" y2="361.8"><stop offset="0" stop-color="#ffd800"/><stop offset=".037" stop-color="#ffd415"/><stop offset=".074" stop-color="#ffd031"/><stop offset=".111" stop-color="#ffcb4f"/><stop offset=".148" stop-color="#ffc66d"/><stop offset=".185" stop-color="#ffc18d"/><stop offset=".222" stop-color="#ffbcad"/><stop offset=".259" stop-color="#ffb7d0"/><stop offset=".296" stop-color="#ffb1f3"/><stop offset=".333" stop-color="#e89cff"/><stop offset=".37" stop-color="#cc84ff"/><stop offset=".407" stop-color="#b570ff"/><stop offset=".444" stop-color="#a260ff"/><stop offset=".481" stop-color="#9153ff"/><stop offset=".519" stop-color="#8447ff"/><stop offset=".556" stop-color="#783dff"/><stop offset=".593" stop-color="#6d34ff"/><stop offset=".63" stop-color="#642dff"/><stop offset=".667" stop-color="#5c26ff"/><stop offset=".704" stop-color="#5520ff"/><stop offset=".741" stop-color="#4e1aff"/><stop offset=".778" stop-color="#4815ff"/><stop offset=".815" stop-color="#4311ff"/><stop offset=".852" stop-color="#3e0cff"/><stop offset=".889" stop-color="#3a09ff"/><stop offset=".926" stop-color="#3505ff"/><stop offset=".963" stop-color="#3202ff"/><stop offset="1" stop-color="#2e00ff"/></linearGradient>
<rect x="1163" y="94.4" width="3" height="267.4" fill="url(#fi150)"/>
<linearGradient id="fi151" gradientUnits="userSpaceOnUse" x1="0" y1="94.7" x2="0" y2="358.7"><stop offset="0" stop-color="#ffcf00"/><stop offset=".038" stop-color="#ffca15"/><stop offset=".077" stop-color="#ffc631"/><stop offset=".115" stop-color="#ffc14e"/><stop offset=".154" stop-color="#ffbc6c"/><stop offset=".192" stop-color="#ffb78b"/><stop offset=".231" stop-color="#ffb2ac"/><stop offset=".269" stop-color="#ffacce"/><stop offset=".308" stop-color="#ffa6f1"/><stop offset=".346" stop-color="#ea93ff"/><stop offset=".385" stop-color="#cd7cff"/><stop offset=".423" stop-color="#b669ff"/><stop offset=".462" stop-color="#a35aff"/><stop offset=".5" stop-color="#934dff"/><stop offset=".538" stop-color="#8542ff"/><stop offset=".577" stop-color="#7938ff"/><stop offset=".615" stop-color="#6e2fff"/><stop offset=".654" stop-color="#6528ff"/><stop offset=".692" stop-color="#5d21ff"/><stop offset=".731" stop-color="#561bff"/><stop offset=".769" stop-color="#4f16ff"/><stop offset=".808" stop-color="#4911ff"/><stop offset=".846" stop-color="#440dff"/><stop offset=".885" stop-color="#3f09ff"/><stop offset=".923" stop-color="#3a05ff"/><stop offset=".962" stop-color="#3602ff"/><stop offset="1" stop-color="#3200ff"/></linearGradient>
<rect x="1166" y="94.7" width="3" height="264.0" fill="url(#fi151)"/>
<linearGradient id="fi152" gradientUnits="userSpaceOnUse" x1="0" y1="95.0" x2="0" y2="355.7"><stop offset="0" stop-color="#ffc600"/><stop offset=".038" stop-color="#ffc114"/><stop offset=".077" stop-color="#ffbd2f"/><stop offset=".115" stop-color="#ffb84a"/><stop offset=".154" stop-color="#ffb367"/><stop offset=".192" stop-color="#ffae85"/><stop offset=".231" stop-color="#ffa9a4"/><stop offset=".269" stop-color="#ffa3c4"/><stop offset=".308" stop-color="#ff9ee5"/><stop offset=".346" stop-color="#f793ff"/><stop offset=".385" stop-color="#d97cff"/><stop offset=".423" stop-color="#c169ff"/><stop offset=".462" stop-color="#ad5aff"/><stop offset=".5" stop-color="#9c4dff"/><stop offset=".538" stop-color="#8d42ff"/><stop offset=".577" stop-color="#8138ff"/><stop offset=".615" stop-color="#762fff"/><stop offset=".654" stop-color="#6c28ff"/><stop offset=".692" stop-color="#6321ff"/><stop offset=".731" stop-color="#5c1bff"/><stop offset=".769" stop-color="#5516ff"/><stop offset=".808" stop-color="#4f11ff"/><stop offset=".846" stop-color="#490dff"/><stop offset=".885" stop-color="#4409ff"/><stop offset=".923" stop-color="#3f05ff"/><stop offset=".962" stop-color="#3b02ff"/><stop offset="1" stop-color="#3700ff"/></linearGradient>
<rect x="1169" y="95.0" width="3" height="260.7" fill="url(#fi152)"/>
<linearGradient id="fi153" gradientUnits="userSpaceOnUse" x1="0" y1="95.2" x2="0" y2="352.6"><stop offset="0" stop-color="#ffbd00"/><stop offset=".038" stop-color="#ffb913"/><stop offset=".077" stop-color="#ffb42d"/><stop offset=".115" stop-color="#ffb047"/><stop offset=".154" stop-color="#ffab62"/><stop offset=".192" stop-color="#ffa67f"/><stop offset=".231" stop-color="#ffa19c"/><stop offset=".269" stop-color="#ff9cba"/><stop offset=".308" stop-color="#ff96da"/><stop offset=".346" stop-color="#ff90fa"/><stop offset=".385" stop-color="#e57cff"/><stop offset=".423" stop-color="#cb69ff"/><stop offset=".462" stop-color="#b65aff"/><stop offset=".5" stop-color="#a54dff"/><stop offset=".538" stop-color="#9542ff"/><stop offset=".577" stop-color="#8838ff"/><stop offset=".615" stop-color="#7d2fff"/><stop offset=".654" stop-color="#7328ff"/><stop offset=".692" stop-color="#6a21ff"/><stop offset=".731" stop-color="#621bff"/><stop offset=".769" stop-color="#5b16ff"/><stop offset=".808" stop-color="#5411ff"/><stop offset=".846" stop-color="#4e0dff"/><stop offset=".885" stop-color="#4909ff"/><stop offset=".923" stop-color="#4405ff"/><stop offset=".962" stop-color="#3f02ff"/><stop offset="1" stop-color="#3b00ff"/></linearGradient>
<rect x="1172" y="95.2" width="3" height="257.4" fill="url(#fi153)"/>
<linearGradient id="fi154" gradientUnits="userSpaceOnUse" x1="0" y1="95.5" x2="0" y2="349.6"><stop offset="0" stop-color="#ffb500"/><stop offset=".04" stop-color="#ffb113"/><stop offset=".08" stop-color="#ffac2d"/><stop offset=".12" stop-color="#ffa747"/><stop offset=".16" stop-color="#ffa262"/><stop offset=".2" stop-color="#ff9d7e"/><stop offset=".24" stop-color="#ff989b"/><stop offset=".28" stop-color="#ff93ba"/><stop offset=".32" stop-color="#ff8dd9"/><stop offset=".36" stop-color="#ff87f9"/><stop offset=".4" stop-color="#e574ff"/><stop offset=".44" stop-color="#cc62ff"/><stop offset=".48" stop-color="#b753ff"/><stop offset=".52" stop-color="#a547ff"/><stop offset=".56" stop-color="#963cff"/><stop offset=".6" stop-color="#8933ff"/><stop offset=".64" stop-color="#7d2bff"/><stop offset=".68" stop-color="#7323ff"/><stop offset=".72" stop-color="#6a1dff"/><stop offset=".76" stop-color="#6217ff"/><stop offset=".8" stop-color="#5b12ff"/><stop offset=".84" stop-color="#550eff"/><stop offset=".88" stop-color="#4f09ff"/><stop offset=".92" stop-color="#4906ff"/><stop offset=".96" stop-color="#4402ff"/><stop offset="1" stop-color="#4000ff"/></linearGradient>
<rect x="1175" y="95.5" width="3" height="254.1" fill="url(#fi154)"/>
<linearGradient id="fi155" gradientUnits="userSpaceOnUse" x1="0" y1="95.8" x2="0" y2="346.5"><stop offset="0" stop-color="#ffae00"/><stop offset=".04" stop-color="#ffa913"/><stop offset=".08" stop-color="#ffa52b"/><stop offset=".12" stop-color="#ffa044"/><stop offset=".16" stop-color="#ff9b5e"/><stop offset=".2" stop-color="#ff9678"/><stop offset=".24" stop-color="#ff9194"/><stop offset=".28" stop-color="#ff8cb1"/><stop offset=".32" stop-color="#ff86cf"/><stop offset=".36" stop-color="#ff81ed"/><stop offset=".4" stop-color="#f174ff"/><stop offset=".44" stop-color="#d762ff"/><stop offset=".48" stop-color="#c153ff"/><stop offset=".52" stop-color="#ae47ff"/><stop offset=".56" stop-color="#9e3cff"/><stop offset=".6" stop-color="#9133ff"/><stop offset=".64" stop-color="#852aff"/><stop offset=".68" stop-color="#7a23ff"/><stop offset=".72" stop-color="#711dff"/><stop offset=".76" stop-color="#6817ff"/><stop offset=".8" stop-color="#6112ff"/><stop offset=".84" stop-color="#5a0eff"/><stop offset=".88" stop-color="#5409ff"/><stop offset=".92" stop-color="#4e06ff"/><stop offset=".96" stop-color="#4902ff"/><stop offset="1" stop-color="#4400ff"/></linearGradient>
<rect x="1178" y="95.8" width="3" height="250.8" fill="url(#fi155)"/>
<linearGradient id="fi156" gradientUnits="userSpaceOnUse" x1="0" y1="96.1" x2="0" y2="343.5"><stop offset="0" stop-color="#ffa700"/><stop offset=".04" stop-color="#ffa212"/><stop offset=".08" stop-color="#ff9e29"/><stop offset=".12" stop-color="#ff9941"/><stop offset=".16" stop-color="#ff955a"/><stop offset=".2" stop-color="#ff9073"/><stop offset=".24" stop-color="#ff8b8d"/><stop offset=".28" stop-color="#ff85a9"/><stop offset=".32" stop-color="#ff80c5"/><stop offset=".36" stop-color="#ff7ae2"/><stop offset=".4" stop-color="#fe74ff"/><stop offset=".44" stop-color="#e262ff"/><stop offset=".48" stop-color="#cb53ff"/><stop offset=".52" stop-color="#b847ff"/><stop offset=".56" stop-color="#a73cff"/><stop offset=".6" stop-color="#9933ff"/><stop offset=".64" stop-color="#8c2aff"/><stop offset=".68" stop-color="#8123ff"/><stop offset=".72" stop-color="#781dff"/><stop offset=".76" stop-color="#6f17ff"/><stop offset=".8" stop-color="#6712ff"/><stop offset=".84" stop-color="#600eff"/><stop offset=".88" stop-color="#5909ff"/><stop offset=".92" stop-color="#5406ff"/><stop offset=".96" stop-color="#4e02ff"/><stop offset="1" stop-color="#4900ff"/></linearGradient>
<rect x="1181" y="96.1" width="3" height="247.4" fill="url(#fi156)"/>
<linearGradient id="fi157" gradientUnits="userSpaceOnUse" x1="0" y1="96.4" x2="0" y2="340.5"><stop offset="0" stop-color="#ffa000"/><stop offset=".042" stop-color="#ff9b12"/><stop offset=".083" stop-color="#ff9729"/><stop offset=".125" stop-color="#ff9241"/><stop offset=".167" stop-color="#ff8d5a"/><stop offset=".208" stop-color="#ff8873"/><stop offset=".25" stop-color="#ff838e"/><stop offset=".292" stop-color="#ff7ea9"/><stop offset=".333" stop-color="#ff78c5"/><stop offset=".375" stop-color="#ff73e2"/><stop offset=".417" stop-color="#fe6cff"/><stop offset=".458" stop-color="#e25bff"/><stop offset=".5" stop-color="#cb4dff"/><stop offset=".542" stop-color="#b841ff"/><stop offset=".583" stop-color="#a736ff"/><stop offset=".625" stop-color="#992dff"/><stop offset=".667" stop-color="#8c26ff"/><stop offset=".708" stop-color="#811fff"/><stop offset=".75" stop-color="#7819ff"/><stop offset=".792" stop-color="#6f13ff"/><stop offset=".833" stop-color="#670eff"/><stop offset=".875" stop-color="#600aff"/><stop offset=".917" stop-color="#5906ff"/><stop offset=".958" stop-color="#5402ff"/><stop offset="1" stop-color="#4e00ff"/></linearGradient>
<rect x="1184" y="96.4" width="3" height="244.1" fill="url(#fi157)"/>
<linearGradient id="fi158" gradientUnits="userSpaceOnUse" x1="0" y1="96.6" x2="0" y2="337.4"><stop offset="0" stop-color="#ff9900"/><stop offset=".042" stop-color="#ff9511"/><stop offset=".083" stop-color="#ff9127"/><stop offset=".125" stop-color="#ff8c3e"/><stop offset=".167" stop-color="#ff8756"/><stop offset=".208" stop-color="#ff836e"/><stop offset=".25" stop-color="#ff7d87"/><stop offset=".292" stop-color="#ff78a1"/><stop offset=".333" stop-color="#ff73bc"/><stop offset=".375" stop-color="#ff6dd8"/><stop offset=".417" stop-color="#ff68f5"/><stop offset=".458" stop-color="#ed5bff"/><stop offset=".5" stop-color="#d54dff"/><stop offset=".542" stop-color="#c141ff"/><stop offset=".583" stop-color="#b036ff"/><stop offset=".625" stop-color="#a12dff"/><stop offset=".667" stop-color="#9426ff"/><stop offset=".708" stop-color="#891fff"/><stop offset=".75" stop-color="#7e19ff"/><stop offset=".792" stop-color="#7513ff"/><stop offset=".833" stop-color="#6d0eff"/><stop offset=".875" stop-color="#660aff"/><stop offset=".917" stop-color="#5f06ff"/><stop offset=".958" stop-color="#5902ff"/><stop offset="1" stop-color="#5300ff"/></linearGradient>
<rect x="1187" y="96.6" width="3" height="240.8" fill="url(#fi158)"/>
<linearGradient id="fi159" gradientUnits="userSpaceOnUse" x1="0" y1="96.9" x2="0" y2="334.4"><stop offset="0" stop-color="#ff9300"/><stop offset=".042" stop-color="#ff8f10"/><stop offset=".083" stop-color="#ff8b26"/><stop offset=".125" stop-color="#ff863c"/><stop offset=".167" stop-color="#ff8252"/><stop offset=".208" stop-color="#ff7d69"/><stop offset=".25" stop-color="#ff7881"/><stop offset=".292" stop-color="#ff739a"/><stop offset=".333" stop-color="#ff6eb4"/><stop offset=".375" stop-color="#ff68ce"/><stop offset=".417" stop-color="#ff63e9"/><stop offset=".458" stop-color="#f95bff"/><stop offset=".5" stop-color="#e04dff"/><stop offset=".542" stop-color="#cb41ff"/><stop offset=".583" stop-color="#b936ff"/><stop offset=".625" stop-color="#a92dff"/><stop offset=".667" stop-color="#9c26ff"/><stop offset=".708" stop-color="#901fff"/><stop offset=".75" stop-color="#8519ff"/><stop offset=".792" stop-color="#7c13ff"/><stop offset=".833" stop-color="#730eff"/><stop offset=".875" stop-color="#6c0aff"/><stop offset=".917" stop-color="#6506ff"/><stop offset=".958" stop-color="#5e02ff"/><stop offset="1" stop-color="#5900ff"/></linearGradient>
<rect x="1190" y="96.9" width="3" height="237.5" fill="url(#fi159)"/>
<linearGradient id="fi160" gradientUnits="userSpaceOnUse" x1="0" y1="97.2" x2="0" y2="331.3"><stop offset="0" stop-color="#ff8e00"/><stop offset=".043" stop-color="#ff8910"/><stop offset=".087" stop-color="#ff8526"/><stop offset=".13" stop-color="#ff803c"/><stop offset=".174" stop-color="#ff7c53"/><stop offset=".217" stop-color="#ff776a"/><stop offset=".261" stop-color="#ff7282"/><stop offset=".304" stop-color="#ff6d9b"/><stop offset=".348" stop-color="#ff67b5"/><stop offset=".391" stop-color="#ff62cf"/><stop offset=".435" stop-color="#ff5cea"/><stop offset=".478" stop-color="#f854ff"/><stop offset=".522" stop-color="#df46ff"/><stop offset=".565" stop-color="#ca3bff"/><stop offset=".609" stop-color="#b831ff"/><stop offset=".652" stop-color="#a928ff"/><stop offset=".696" stop-color="#9b21ff"/><stop offset=".739" stop-color="#8f1aff"/><stop offset=".783" stop-color="#8514ff"/><stop offset=".826" stop-color="#7b0fff"/><stop offset=".87" stop-color="#730aff"/><stop offset=".913" stop-color="#6b06ff"/><stop offset=".957" stop-color="#6402ff"/><stop offset="1" stop-color="#5e00ff"/></linearGradient>
<rect x="1193" y="97.2" width="3" height="234.1" fill="url(#fi160)"/>
<linearGradient id="fi161" gradientUnits="userSpaceOnUse" x1="0" y1="97.5" x2="0" y2="328.3"><stop offset="0" stop-color="#ff8800"/><stop offset=".043" stop-color="#ff8410"/><stop offset=".087" stop-color="#ff8024"/><stop offset=".13" stop-color="#ff7b39"/><stop offset=".174" stop-color="#ff774f"/><stop offset=".217" stop-color="#ff7266"/><stop offset=".261" stop-color="#ff6d7d"/><stop offset=".304" stop-color="#ff6894"/><stop offset=".348" stop-color="#ff63ad"/><stop offset=".391" stop-color="#ff5dc6"/><stop offset=".435" stop-color="#ff58e0"/><stop offset=".478" stop-color="#ff52fb"/><stop offset=".522" stop-color="#ea46ff"/><stop offset=".565" stop-color="#d43bff"/><stop offset=".609" stop-color="#c131ff"/><stop offset=".652" stop-color="#b128ff"/><stop offset=".696" stop-color="#a321ff"/><stop offset=".739" stop-color="#971aff"/><stop offset=".783" stop-color="#8c14ff"/><stop offset=".826" stop-color="#820fff"/><stop offset=".87" stop-color="#790aff"/><stop offset=".913" stop-color="#7106ff"/><stop offset=".957" stop-color="#6a02ff"/><stop offset="1" stop-color="#6300ff"/></linearGradient>
<rect x="1196" y="97.5" width="3" height="230.8" fill="url(#fi161)"/>
<linearGradient id="fi162" gradientUnits="userSpaceOnUse" x1="0" y1="97.7" x2="0" y2="325.2"><stop offset="0" stop-color="#ff8300"/><stop offset=".043" stop-color="#ff7f0f"/><stop offset=".087" stop-color="#ff7b23"/><stop offset=".13" stop-color="#ff7637"/><stop offset=".174" stop-color="#ff724c"/><stop offset=".217" stop-color="#ff6d61"/><stop offset=".261" stop-color="#ff6877"/><stop offset=".304" stop-color="#ff648e"/><stop offset=".348" stop-color="#ff5fa5"/><stop offset=".391" stop-color="#ff59bd"/><stop offset=".435" stop-color="#ff54d6"/><stop offset=".478" stop-color="#ff4ff0"/><stop offset=".522" stop-color="#f546ff"/><stop offset=".565" stop-color="#de3bff"/><stop offset=".609" stop-color="#cb31ff"/><stop offset=".652" stop-color="#ba28ff"/><stop offset=".696" stop-color="#ab21ff"/><stop offset=".739" stop-color="#9f1aff"/><stop offset=".783" stop-color="#9314ff"/><stop offset=".826" stop-color="#890fff"/><stop offset=".87" stop-color="#800aff"/><stop offset=".913" stop-color="#7806ff"/><stop offset=".957" stop-color="#7002ff"/><stop offset="1" stop-color="#6900ff"/></linearGradient>
<rect x="1199" y="97.7" width="3" height="227.5" fill="url(#fi162)"/>
<linearGradient id="fi163" gradientUnits="userSpaceOnUse" x1="0" y1="98.0" x2="0" y2="322.2"><stop offset="0" stop-color="#ff7e00"/><stop offset=".045" stop-color="#ff7a0f"/><stop offset=".091" stop-color="#ff7623"/><stop offset=".136" stop-color="#ff7138"/><stop offset=".182" stop-color="#ff6c4d"/><stop offset=".227" stop-color="#ff6862"/><stop offset=".273" stop-color="#ff6378"/><stop offset=".318" stop-color="#ff5e8f"/><stop offset=".364" stop-color="#ff59a7"/><stop offset=".409" stop-color="#ff54bf"/><stop offset=".455" stop-color="#ff4ed8"/><stop offset=".5" stop-color="#ff48f1"/><stop offset=".545" stop-color="#f340ff"/><stop offset=".591" stop-color="#dc34ff"/><stop offset=".636" stop-color="#c92bff"/><stop offset=".682" stop-color="#b923ff"/><stop offset=".727" stop-color="#aa1cff"/><stop offset=".773" stop-color="#9d16ff"/><stop offset=".818" stop-color="#9210ff"/><stop offset=".864" stop-color="#880bff"/><stop offset=".909" stop-color="#7f07ff"/><stop offset=".955" stop-color="#7602ff"/><stop offset="1" stop-color="#6f00ff"/></linearGradient>
<rect x="1202" y="98.0" width="3" height="224.2" fill="url(#fi163)"/>
<linearGradient id="fi164" gradientUnits="userSpaceOnUse" x1="0" y1="98.3" x2="0" y2="319.1"><stop offset="0" stop-color="#ff7900"/><stop offset=".045" stop-color="#ff750f"/><stop offset=".091" stop-color="#ff7122"/><stop offset=".136" stop-color="#ff6d35"/><stop offset=".182" stop-color="#ff684a"/><stop offset=".227" stop-color="#ff645e"/><stop offset=".273" stop-color="#ff5f73"/><stop offset=".318" stop-color="#ff5a89"/><stop offset=".364" stop-color="#ff55a0"/><stop offset=".409" stop-color="#ff50b7"/><stop offset=".455" stop-color="#ff4bce"/><stop offset=".5" stop-color="#ff45e7"/><stop offset=".545" stop-color="#fe3fff"/><stop offset=".591" stop-color="#e734ff"/><stop offset=".636" stop-color="#d32bff"/><stop offset=".682" stop-color="#c123ff"/><stop offset=".727" stop-color="#b21cff"/><stop offset=".773" stop-color="#a515ff"/><stop offset=".818" stop-color="#9910ff"/><stop offset=".864" stop-color="#8f0bff"/><stop offset=".909" stop-color="#8506ff"/><stop offset=".955" stop-color="#7d02ff"/><stop offset="1" stop-color="#7500ff"/></linearGradient>
<rect x="1205" y="98.3" width="3" height="220.8" fill="url(#fi164)"/>
<linearGradient id="fi165" gradientUnits="userSpaceOnUse" x1="0" y1="98.6" x2="0" y2="316.1"><stop offset="0" stop-color="#ff7500"/><stop offset=".045" stop-color="#ff710e"/><stop offset=".091" stop-color="#ff6d20"/><stop offset=".136" stop-color="#ff6833"/><stop offset=".182" stop-color="#ff6447"/><stop offset=".227" stop-color="#ff605a"/><stop offset=".273" stop-color="#ff5b6f"/><stop offset=".318" stop-color="#ff5684"/><stop offset=".364" stop-color="#ff5299"/><stop offset=".409" stop-color="#ff4daf"/><stop offset=".455" stop-color="#ff48c6"/><stop offset=".5" stop-color="#ff42dd"/><stop offset=".545" stop-color="#ff3df5"/><stop offset=".591" stop-color="#f134ff"/><stop offset=".636" stop-color="#dd2bff"/><stop offset=".682" stop-color="#cb23ff"/><stop offset=".727" stop-color="#bb1cff"/><stop offset=".773" stop-color="#ad15ff"/><stop offset=".818" stop-color="#a110ff"/><stop offset=".864" stop-color="#960bff"/><stop offset=".909" stop-color="#8c06ff"/><stop offset=".955" stop-color="#8302ff"/><stop offset="1" stop-color="#7b00ff"/></linearGradient>
<rect x="1208" y="98.6" width="3" height="217.5" fill="url(#fi165)"/>
<linearGradient id="fi166" gradientUnits="userSpaceOnUse" x1="0" y1="98.9" x2="0" y2="313.1"><stop offset="0" stop-color="#ff7100"/><stop offset=".048" stop-color="#ff6c0e"/><stop offset=".095" stop-color="#ff6821"/><stop offset=".143" stop-color="#ff6434"/><stop offset=".19" stop-color="#ff5f47"/><stop offset=".238" stop-color="#ff5b5b"/><stop offset=".286" stop-color="#ff5670"/><stop offset=".333" stop-color="#ff5185"/><stop offset=".381" stop-color="#ff4c9b"/><stop offset=".429" stop-color="#ff47b1"/><stop offset=".476" stop-color="#ff42c8"/><stop offset=".524" stop-color="#ff3ddf"/><stop offset=".571" stop-color="#ff37f8"/><stop offset=".619" stop-color="#ef2eff"/><stop offset=".667" stop-color="#da25ff"/><stop offset=".714" stop-color="#c81eff"/><stop offset=".762" stop-color="#b917ff"/><stop offset=".81" stop-color="#ab11ff"/><stop offset=".857" stop-color="#9f0cff"/><stop offset=".905" stop-color="#9407ff"/><stop offset=".952" stop-color="#8a03ff"/><stop offset="1" stop-color="#8200ff"/></linearGradient>
<rect x="1211" y="98.9" width="3" height="214.2" fill="url(#fi166)"/>
<linearGradient id="fi167" gradientUnits="userSpaceOnUse" x1="0" y1="99.1" x2="0" y2="310.0"><stop offset="0" stop-color="#ff6c00"/><stop offset=".048" stop-color="#ff680e"/><stop offset=".095" stop-color="#ff6420"/><stop offset=".143" stop-color="#ff6032"/><stop offset=".19" stop-color="#ff5c45"/><stop offset=".238" stop-color="#ff5758"/><stop offset=".286" stop-color="#ff536c"/><stop offset=".333" stop-color="#ff4e80"/><stop offset=".381" stop-color="#ff4994"/><stop offset=".429" stop-color="#ff44aa"/><stop offset=".476" stop-color="#ff3fc0"/><stop offset=".524" stop-color="#ff3ad6"/><stop offset=".571" stop-color="#ff35ed"/><stop offset=".619" stop-color="#f92eff"/><stop offset=".667" stop-color="#e425ff"/><stop offset=".714" stop-color="#d21eff"/><stop offset=".762" stop-color="#c217ff"/><stop offset=".81" stop-color="#b311ff"/><stop offset=".857" stop-color="#a70cff"/><stop offset=".905" stop-color="#9c07ff"/><stop offset=".952" stop-color="#9103ff"/><stop offset="1" stop-color="#8800ff"/></linearGradient>
<rect x="1214" y="99.1" width="3" height="210.9" fill="url(#fi167)"/>
<linearGradient id="fi168" gradientUnits="userSpaceOnUse" x1="0" y1="99.4" x2="0" y2="307.0"><stop offset="0" stop-color="#ff6800"/><stop offset=".048" stop-color="#ff650d"/><stop offset=".095" stop-color="#ff611e"/><stop offset=".143" stop-color="#ff5c30"/><stop offset=".19" stop-color="#ff5842"/><stop offset=".238" stop-color="#ff5454"/><stop offset=".286" stop-color="#ff5067"/><stop offset=".333" stop-color="#ff4b7b"/><stop offset=".381" stop-color="#ff468e"/><stop offset=".429" stop-color="#ff42a3"/><stop offset=".476" stop-color="#ff3db8"/><stop offset=".524" stop-color="#ff38cd"/><stop offset=".571" stop-color="#ff33e3"/><stop offset=".619" stop-color="#ff2dfa"/><stop offset=".667" stop-color="#ee25ff"/><stop offset=".714" stop-color="#db1eff"/><stop offset=".762" stop-color="#cb17ff"/><stop offset=".81" stop-color="#bc11ff"/><stop offset=".857" stop-color="#af0cff"/><stop offset=".905" stop-color="#a307ff"/><stop offset=".952" stop-color="#9903ff"/><stop offset="1" stop-color="#8f00ff"/></linearGradient>
<rect x="1217" y="99.4" width="3" height="207.5" fill="url(#fi168)"/>
<linearGradient id="fi169" gradientUnits="userSpaceOnUse" x1="0" y1="99.7" x2="0" y2="303.9"><stop offset="0" stop-color="#ff6500"/><stop offset=".05" stop-color="#ff610d"/><stop offset=".1" stop-color="#ff5d1f"/><stop offset=".15" stop-color="#ff5831"/><stop offset=".2" stop-color="#ff5443"/><stop offset=".25" stop-color="#ff5056"/><stop offset=".3" stop-color="#ff4b69"/><stop offset=".35" stop-color="#ff467c"/><stop offset=".4" stop-color="#ff4290"/><stop offset=".45" stop-color="#ff3da5"/><stop offset=".5" stop-color="#ff38ba"/><stop offset=".55" stop-color="#ff33d0"/><stop offset=".6" stop-color="#ff2de6"/><stop offset=".65" stop-color="#ff28fd"/><stop offset=".7" stop-color="#eb20ff"/><stop offset=".75" stop-color="#d818ff"/><stop offset=".8" stop-color="#c812ff"/><stop offset=".85" stop-color="#b90cff"/><stop offset=".9" stop-color="#ac07ff"/><stop offset=".95" stop-color="#a103ff"/><stop offset="1" stop-color="#9600ff"/></linearGradient>
<rect x="1220" y="99.7" width="3" height="204.2" fill="url(#fi169)"/>
<linearGradient id="fi170" gradientUnits="userSpaceOnUse" x1="0" y1="100.0" x2="0" y2="300.9"><stop offset="0" stop-color="#ff6100"/><stop offset=".05" stop-color="#ff5d0d"/><stop offset=".1" stop-color="#ff591e"/><stop offset=".15" stop-color="#ff552f"/><stop offset=".2" stop-color="#ff5140"/><stop offset=".25" stop-color="#ff4d52"/><stop offset=".3" stop-color="#ff4865"/><stop offset=".35" stop-color="#ff4477"/><stop offset=".4" stop-color="#ff3f8b"/><stop offset=".45" stop-color="#ff3a9e"/><stop offset=".5" stop-color="#ff36b3"/><stop offset=".55" stop-color="#ff31c7"/><stop offset=".6" stop-color="#ff2cdd"/><stop offset=".65" stop-color="#ff26f3"/><stop offset=".7" stop-color="#f520ff"/><stop offset=".75" stop-color="#e218ff"/><stop offset=".8" stop-color="#d112ff"/><stop offset=".85" stop-color="#c20cff"/><stop offset=".9" stop-color="#b407ff"/><stop offset=".95" stop-color="#a803ff"/><stop offset="1" stop-color="#9e00ff"/></linearGradient>
<rect x="1223" y="100.0" width="3" height="200.9" fill="url(#fi170)"/>
<linearGradient id="fi171" gradientUnits="userSpaceOnUse" x1="0" y1="100.3" x2="0" y2="297.8"><stop offset="0" stop-color="#ff5d00"/><stop offset=".05" stop-color="#ff5a0c"/><stop offset=".1" stop-color="#ff561d"/><stop offset=".15" stop-color="#ff522d"/><stop offset=".2" stop-color="#ff4e3e"/><stop offset=".25" stop-color="#ff4a4f"/><stop offset=".3" stop-color="#ff4561"/><stop offset=".35" stop-color="#ff4173"/><stop offset=".4" stop-color="#ff3d85"/><stop offset=".45" stop-color="#ff3898"/><stop offset=".5" stop-color="#ff33ab"/><stop offset=".55" stop-color="#ff2fbf"/><stop offset=".6" stop-color="#ff2ad4"/><stop offset=".65" stop-color="#ff25e8"/><stop offset=".7" stop-color="#ff20fe"/><stop offset=".75" stop-color="#ec18ff"/><stop offset=".8" stop-color="#da12ff"/><stop offset=".85" stop-color="#cb0cff"/><stop offset=".9" stop-color="#bd07ff"/><stop offset=".95" stop-color="#b003ff"/><stop offset="1" stop-color="#a500ff"/></linearGradient>
<rect x="1226" y="100.3" width="3" height="197.6" fill="url(#fi171)"/>
<linearGradient id="fi172" gradientUnits="userSpaceOnUse" x1="0" y1="100.5" x2="0" y2="294.8"><stop offset="0" stop-color="#ff5a00"/><stop offset=".053" stop-color="#ff560d"/><stop offset=".105" stop-color="#ff521d"/><stop offset=".158" stop-color="#ff4e2e"/><stop offset=".211" stop-color="#ff4a3f"/><stop offset=".263" stop-color="#ff4650"/><stop offset=".316" stop-color="#ff4162"/><stop offset=".368" stop-color="#ff3d75"/><stop offset=".421" stop-color="#ff3888"/><stop offset=".474" stop-color="#ff349b"/><stop offset=".526" stop-color="#ff2fae"/><stop offset=".579" stop-color="#ff2ac3"/><stop offset=".632" stop-color="#ff25d7"/><stop offset=".684" stop-color="#ff20ed"/><stop offset=".737" stop-color="#fc1aff"/><stop offset=".789" stop-color="#e813ff"/><stop offset=".842" stop-color="#d60dff"/><stop offset=".895" stop-color="#c708ff"/><stop offset=".947" stop-color="#b903ff"/><stop offset="1" stop-color="#ad00ff"/></linearGradient>
<rect x="1229" y="100.5" width="3" height="194.2" fill="url(#fi172)"/>
<linearGradient id="fi173" gradientUnits="userSpaceOnUse" x1="0" y1="100.8" x2="0" y2="291.7"><stop offset="0" stop-color="#ff5700"/><stop offset=".053" stop-color="#ff530c"/><stop offset=".105" stop-color="#ff4f1c"/><stop offset=".158" stop-color="#ff4b2c"/><stop offset=".211" stop-color="#ff473d"/><stop offset=".263" stop-color="#ff434d"/><stop offset=".316" stop-color="#ff3f5f"/><stop offset=".368" stop-color="#ff3b70"/><stop offset=".421" stop-color="#ff3682"/><stop offset=".474" stop-color="#ff3295"/><stop offset=".526" stop-color="#ff2da7"/><stop offset=".579" stop-color="#ff28bb"/><stop offset=".632" stop-color="#ff23cf"/><stop offset=".684" stop-color="#ff1ee3"/><stop offset=".737" stop-color="#ff19f7"/><stop offset=".789" stop-color="#f213ff"/><stop offset=".842" stop-color="#e00dff"/><stop offset=".895" stop-color="#d008ff"/><stop offset=".947" stop-color="#c203ff"/><stop offset="1" stop-color="#b500ff"/></linearGradient>
<rect x="1232" y="100.8" width="3" height="190.9" fill="url(#fi173)"/>
<linearGradient id="fi174" gradientUnits="userSpaceOnUse" x1="0" y1="101.1" x2="0" y2="288.7"><stop offset="0" stop-color="#ff5400"/><stop offset=".053" stop-color="#ff500c"/><stop offset=".105" stop-color="#ff4c1b"/><stop offset=".158" stop-color="#ff482a"/><stop offset=".211" stop-color="#ff453a"/><stop offset=".263" stop-color="#ff414a"/><stop offset=".316" stop-color="#ff3c5b"/><stop offset=".368" stop-color="#ff386c"/><stop offset=".421" stop-color="#ff347d"/><stop offset=".474" stop-color="#ff308f"/><stop offset=".526" stop-color="#ff2ba1"/><stop offset=".579" stop-color="#ff27b3"/><stop offset=".632" stop-color="#ff22c6"/><stop offset=".684" stop-color="#ff1dd9"/><stop offset=".737" stop-color="#ff18ed"/><stop offset=".789" stop-color="#fd13ff"/><stop offset=".842" stop-color="#ea0dff"/><stop offset=".895" stop-color="#d908ff"/><stop offset=".947" stop-color="#cb03ff"/><stop offset="1" stop-color="#bd00ff"/></linearGradient>
<rect x="1235" y="101.1" width="3" height="187.6" fill="url(#fi174)"/>
<linearGradient id="fi175" gradientUnits="userSpaceOnUse" x1="0" y1="101.4" x2="0" y2="285.6"><stop offset="0" stop-color="#ff5100"/><stop offset=".056" stop-color="#ff4d0c"/><stop offset=".111" stop-color="#ff491c"/><stop offset=".167" stop-color="#ff452b"/><stop offset=".222" stop-color="#ff413b"/><stop offset=".278" stop-color="#ff3d4c"/><stop offset=".333" stop-color="#ff395d"/><stop offset=".389" stop-color="#ff356e"/><stop offset=".444" stop-color="#ff3080"/><stop offset=".5" stop-color="#ff2c92"/><stop offset=".556" stop-color="#ff27a4"/><stop offset=".611" stop-color="#ff22b7"/><stop offset=".667" stop-color="#ff1eca"/><stop offset=".722" stop-color="#ff19de"/><stop offset=".778" stop-color="#ff14f2"/><stop offset=".833" stop-color="#f70eff"/><stop offset=".889" stop-color="#e508ff"/><stop offset=".944" stop-color="#d503ff"/><stop offset="1" stop-color="#c600ff"/></linearGradient>
<rect x="1238" y="101.4" width="3" height="184.3" fill="url(#fi175)"/>
<linearGradient id="fi176" gradientUnits="userSpaceOnUse" x1="0" y1="101.7" x2="0" y2="282.6"><stop offset="0" stop-color="#ff4e00"/><stop offset=".056" stop-color="#ff4a0c"/><stop offset=".111" stop-color="#ff461a"/><stop offset=".167" stop-color="#ff432a"/><stop offset=".222" stop-color="#ff3f39"/><stop offset=".278" stop-color="#ff3b49"/><stop offset=".333" stop-color="#ff3759"/><stop offset=".389" stop-color="#ff326a"/><stop offset=".444" stop-color="#ff2e7b"/><stop offset=".5" stop-color="#ff2a8c"/><stop offset=".556" stop-color="#ff259e"/><stop offset=".611" stop-color="#ff21b0"/><stop offset=".667" stop-color="#ff1cc2"/><stop offset=".722" stop-color="#ff18d5"/><stop offset=".778" stop-color="#ff13e8"/><stop offset=".833" stop-color="#ff0efc"/><stop offset=".889" stop-color="#ef08ff"/><stop offset=".944" stop-color="#de03ff"/><stop offset="1" stop-color="#cf00ff"/></linearGradient>
<rect x="1241" y="101.7" width="3" height="180.9" fill="url(#fi176)"/>
<linearGradient id="fi177" gradientUnits="userSpaceOnUse" x1="0" y1="101.9" x2="0" y2="279.6"><stop offset="0" stop-color="#ff4b00"/><stop offset=".056" stop-color="#ff470b"/><stop offset=".111" stop-color="#ff4419"/><stop offset=".167" stop-color="#ff4028"/><stop offset=".222" stop-color="#ff3c37"/><stop offset=".278" stop-color="#ff3846"/><stop offset=".333" stop-color="#ff3556"/><stop offset=".389" stop-color="#ff3166"/><stop offset=".444" stop-color="#ff2c76"/><stop offset=".5" stop-color="#ff2886"/><stop offset=".556" stop-color="#ff2497"/><stop offset=".611" stop-color="#ff20a9"/><stop offset=".667" stop-color="#ff1bba"/><stop offset=".722" stop-color="#ff17cc"/><stop offset=".778" stop-color="#ff12df"/><stop offset=".833" stop-color="#ff0df1"/><stop offset=".889" stop-color="#f908ff"/><stop offset=".944" stop-color="#e803ff"/><stop offset="1" stop-color="#d800ff"/></linearGradient>
<rect x="1244" y="101.9" width="3" height="177.6" fill="url(#fi177)"/>
<linearGradient id="fi178" gradientUnits="userSpaceOnUse" x1="0" y1="102.2" x2="0" y2="276.5"><stop offset="0" stop-color="#ff4800"/><stop offset=".059" stop-color="#ff450b"/><stop offset=".118" stop-color="#ff411a"/><stop offset=".176" stop-color="#ff3d29"/><stop offset=".235" stop-color="#ff3938"/><stop offset=".294" stop-color="#ff3548"/><stop offset=".353" stop-color="#ff3158"/><stop offset=".412" stop-color="#ff2d68"/><stop offset=".471" stop-color="#ff2979"/><stop offset=".529" stop-color="#ff248a"/><stop offset=".588" stop-color="#ff209b"/><stop offset=".647" stop-color="#ff1cad"/><stop offset=".706" stop-color="#ff17bf"/><stop offset=".765" stop-color="#ff12d1"/><stop offset=".824" stop-color="#ff0de4"/><stop offset=".882" stop-color="#ff08f7"/><stop offset=".941" stop-color="#f303ff"/><stop offset="1" stop-color="#e200ff"/></linearGradient>
<rect x="1247" y="102.2" width="3" height="174.3" fill="url(#fi178)"/>
<linearGradient id="fi179" gradientUnits="userSpaceOnUse" x1="0" y1="102.5" x2="0" y2="273.5"><stop offset="0" stop-color="#ff4600"/><stop offset=".059" stop-color="#ff420b"/><stop offset=".118" stop-color="#ff3f19"/><stop offset=".176" stop-color="#ff3b28"/><stop offset=".235" stop-color="#ff3736"/><stop offset=".294" stop-color="#ff3345"/><stop offset=".353" stop-color="#ff2f54"/><stop offset=".412" stop-color="#ff2b64"/><stop offset=".471" stop-color="#ff2774"/><stop offset=".529" stop-color="#ff2384"/><stop offset=".588" stop-color="#ff1f95"/><stop offset=".647" stop-color="#ff1aa6"/><stop offset=".706" stop-color="#ff16b7"/><stop offset=".765" stop-color="#ff11c9"/><stop offset=".824" stop-color="#ff0ddb"/><stop offset=".882" stop-color="#ff08ed"/><stop offset=".941" stop-color="#fe03ff"/><stop offset="1" stop-color="#ec00ff"/></linearGradient>
<rect x="1250" y="102.5" width="3" height="171.0" fill="url(#fi179)"/>
<linearGradient id="fi180" gradientUnits="userSpaceOnUse" x1="0" y1="102.8" x2="0" y2="270.4"><stop offset="0" stop-color="#ff4300"/><stop offset=".059" stop-color="#ff400a"/><stop offset=".118" stop-color="#ff3c18"/><stop offset=".176" stop-color="#ff3926"/><stop offset=".235" stop-color="#ff3534"/><stop offset=".294" stop-color="#ff3143"/><stop offset=".353" stop-color="#ff2d51"/><stop offset=".412" stop-color="#ff2a60"/><stop offset=".471" stop-color="#ff266f"/><stop offset=".529" stop-color="#ff227f"/><stop offset=".588" stop-color="#ff1e8f"/><stop offset=".647" stop-color="#ff199f"/><stop offset=".706" stop-color="#ff15b0"/><stop offset=".765" stop-color="#ff11c0"/><stop offset=".824" stop-color="#ff0cd2"/><stop offset=".882" stop-color="#ff08e3"/><stop offset=".941" stop-color="#ff03f5"/><stop offset="1" stop-color="#f700ff"/></linearGradient>
<rect x="1253" y="102.8" width="3" height="167.7" fill="url(#fi180)"/>
<linearGradient id="fi181" gradientUnits="userSpaceOnUse" x1="0" y1="103.1" x2="0" y2="267.4"><stop offset="0" stop-color="#ff4100"/><stop offset=".062" stop-color="#ff3d0b"/><stop offset=".125" stop-color="#ff3a19"/><stop offset=".188" stop-color="#ff3627"/><stop offset=".25" stop-color="#ff3236"/><stop offset=".312" stop-color="#ff2e44"/><stop offset=".375" stop-color="#ff2a53"/><stop offset=".438" stop-color="#ff2663"/><stop offset=".5" stop-color="#ff2273"/><stop offset=".562" stop-color="#ff1e83"/><stop offset=".625" stop-color="#ff1a93"/><stop offset=".688" stop-color="#ff15a4"/><stop offset=".75" stop-color="#ff11b5"/><stop offset=".812" stop-color="#ff0dc6"/><stop offset=".875" stop-color="#ff08d8"/><stop offset=".938" stop-color="#ff03ea"/><stop offset="1" stop-color="#ff00fc"/></linearGradient>
<rect x="1256" y="103.1" width="3" height="164.3" fill="url(#fi181)"/>
<linearGradient id="fi182" gradientUnits="userSpaceOnUse" x1="0" y1="103.3" x2="0" y2="264.3"><stop offset="0" stop-color="#ff3e00"/><stop offset=".062" stop-color="#ff3b0a"/><stop offset=".125" stop-color="#ff3718"/><stop offset=".188" stop-color="#ff3426"/><stop offset=".25" stop-color="#ff3034"/><stop offset=".312" stop-color="#ff2c42"/><stop offset=".375" stop-color="#ff2950"/><stop offset=".438" stop-color="#ff255f"/><stop offset=".5" stop-color="#ff216e"/><stop offset=".562" stop-color="#ff1d7d"/><stop offset=".625" stop-color="#ff198d"/><stop offset=".688" stop-color="#ff159d"/><stop offset=".75" stop-color="#ff10ad"/><stop offset=".812" stop-color="#ff0cbe"/><stop offset=".875" stop-color="#ff08cf"/><stop offset=".938" stop-color="#ff03e0"/><stop offset="1" stop-color="#ff00f2"/></linearGradient>
<rect x="1259" y="103.3" width="3" height="161.0" fill="url(#fi182)"/>
<linearGradient id="fi183" gradientUnits="userSpaceOnUse" x1="0" y1="103.6" x2="0" y2="261.3"><stop offset="0" stop-color="#ff3c00"/><stop offset=".062" stop-color="#ff390a"/><stop offset=".125" stop-color="#ff3517"/><stop offset=".188" stop-color="#ff3224"/><stop offset=".25" stop-color="#ff2e32"/><stop offset=".312" stop-color="#ff2b3f"/><stop offset=".375" stop-color="#ff274d"/><stop offset=".438" stop-color="#ff235b"/><stop offset=".5" stop-color="#ff206a"/><stop offset=".562" stop-color="#ff1c78"/><stop offset=".625" stop-color="#ff1887"/><stop offset=".688" stop-color="#ff1497"/><stop offset=".75" stop-color="#ff10a6"/><stop offset=".812" stop-color="#ff0bb6"/><stop offset=".875" stop-color="#ff07c6"/><stop offset=".938" stop-color="#ff03d7"/><stop offset="1" stop-color="#ff00e7"/></linearGradient>
<rect x="1262" y="103.6" width="3" height="157.7" fill="url(#fi183)"/>
<linearGradient id="fi184" gradientUnits="userSpaceOnUse" x1="0" y1="103.9" x2="0" y2="258.2"><stop offset="0" stop-color="#ff3a00"/><stop offset=".067" stop-color="#ff360a"/><stop offset=".133" stop-color="#ff3318"/><stop offset=".2" stop-color="#ff2f25"/><stop offset=".267" stop-color="#ff2c33"/><stop offset=".333" stop-color="#ff2841"/><stop offset=".4" stop-color="#ff244f"/><stop offset=".467" stop-color="#ff205e"/><stop offset=".533" stop-color="#ff1c6d"/><stop offset=".6" stop-color="#ff187c"/><stop offset=".667" stop-color="#ff148c"/><stop offset=".733" stop-color="#ff109b"/><stop offset=".8" stop-color="#ff0cab"/><stop offset=".867" stop-color="#ff07bc"/><stop offset=".933" stop-color="#ff03cd"/><stop offset="1" stop-color="#ff00de"/></linearGradient>
<rect x="1265" y="103.9" width="3" height="154.4" fill="url(#fi184)"/>
<linearGradient id="fi185" gradientUnits="userSpaceOnUse" x1="0" y1="104.2" x2="0" y2="255.2"><stop offset="0" stop-color="#ff3800"/><stop offset=".067" stop-color="#ff340a"/><stop offset=".133" stop-color="#ff3117"/><stop offset=".2" stop-color="#ff2e24"/><stop offset=".267" stop-color="#ff2a31"/><stop offset=".333" stop-color="#ff263f"/><stop offset=".4" stop-color="#ff234c"/><stop offset=".467" stop-color="#ff1f5a"/><stop offset=".533" stop-color="#ff1b69"/><stop offset=".6" stop-color="#ff1777"/><stop offset=".667" stop-color="#ff1386"/><stop offset=".733" stop-color="#ff0f95"/><stop offset=".8" stop-color="#ff0ba4"/><stop offset=".867" stop-color="#ff07b4"/><stop offset=".933" stop-color="#ff03c4"/><stop offset="1" stop-color="#ff00d4"/></linearGradient>
<rect x="1268" y="104.2" width="3" height="151.0" fill="url(#fi185)"/>
<linearGradient id="fi186" gradientUnits="userSpaceOnUse" x1="0" y1="104.4" x2="0" y2="252.2"><stop offset="0" stop-color="#ff3600"/><stop offset=".067" stop-color="#ff320a"/><stop offset=".133" stop-color="#ff2f16"/><stop offset=".2" stop-color="#ff2c22"/><stop offset=".267" stop-color="#ff282f"/><stop offset=".333" stop-color="#ff253c"/><stop offset=".4" stop-color="#ff2149"/><stop offset=".467" stop-color="#ff1e57"/><stop offset=".533" stop-color="#ff1a64"/><stop offset=".6" stop-color="#ff1672"/><stop offset=".667" stop-color="#ff1381"/><stop offset=".733" stop-color="#ff0f8f"/><stop offset=".8" stop-color="#ff0b9e"/><stop offset=".867" stop-color="#ff07ad"/><stop offset=".933" stop-color="#ff03bc"/><stop offset="1" stop-color="#ff00cb"/></linearGradient>
<rect x="1271" y="104.4" width="3" height="147.7" fill="url(#fi186)"/>
<linearGradient id="fi187" gradientUnits="userSpaceOnUse" x1="0" y1="104.7" x2="0" y2="249.1"><stop offset="0" stop-color="#ff3400"/><stop offset=".071" stop-color="#ff300a"/><stop offset=".143" stop-color="#ff2d17"/><stop offset=".214" stop-color="#ff2924"/><stop offset=".286" stop-color="#ff2631"/><stop offset=".357" stop-color="#ff223e"/><stop offset=".429" stop-color="#ff1f4c"/><stop offset=".5" stop-color="#ff1b5a"/><stop offset=".571" stop-color="#ff1768"/><stop offset=".643" stop-color="#ff1376"/><stop offset=".714" stop-color="#ff0f85"/><stop offset=".786" stop-color="#ff0b94"/><stop offset=".857" stop-color="#ff07a3"/><stop offset=".929" stop-color="#ff03b3"/><stop offset="1" stop-color="#ff00c3"/></linearGradient>
<rect x="1274" y="104.7" width="3" height="144.4" fill="url(#fi187)"/>
<linearGradient id="fi188" gradientUnits="userSpaceOnUse" x1="0" y1="105.0" x2="0" y2="246.1"><stop offset="0" stop-color="#ff3200"/><stop offset=".071" stop-color="#ff2e0a"/><stop offset=".143" stop-color="#ff2b16"/><stop offset=".214" stop-color="#ff2822"/><stop offset=".286" stop-color="#ff242f"/><stop offset=".357" stop-color="#ff213c"/><stop offset=".429" stop-color="#ff1d49"/><stop offset=".5" stop-color="#ff1a56"/><stop offset=".571" stop-color="#ff1664"/><stop offset=".643" stop-color="#ff1272"/><stop offset=".714" stop-color="#ff0f80"/><stop offset=".786" stop-color="#ff0b8e"/><stop offset=".857" stop-color="#ff079c"/><stop offset=".929" stop-color="#ff03ab"/><stop offset="1" stop-color="#ff00ba"/></linearGradient>
<rect x="1277" y="105.0" width="3" height="141.1" fill="url(#fi188)"/>
<linearGradient id="fi189" gradientUnits="userSpaceOnUse" x1="0" y1="105.3" x2="0" y2="243.0"><stop offset="0" stop-color="#ff3000"/><stop offset=".071" stop-color="#ff2d09"/><stop offset=".143" stop-color="#ff2915"/><stop offset=".214" stop-color="#ff2621"/><stop offset=".286" stop-color="#ff232d"/><stop offset=".357" stop-color="#ff2039"/><stop offset=".429" stop-color="#ff1c46"/><stop offset=".5" stop-color="#ff1953"/><stop offset=".571" stop-color="#ff1560"/><stop offset=".643" stop-color="#ff126d"/><stop offset=".714" stop-color="#ff0e7a"/><stop offset=".786" stop-color="#ff0a88"/><stop offset=".857" stop-color="#ff0696"/><stop offset=".929" stop-color="#ff03a4"/><stop offset="1" stop-color="#ff00b2"/></linearGradient>
<rect x="1280" y="105.3" width="3" height="137.7" fill="url(#fi189)"/>
<linearGradient id="fi190" gradientUnits="userSpaceOnUse" x1="0" y1="105.6" x2="0" y2="240.0"><stop offset="0" stop-color="#ff2e00"/><stop offset=".077" stop-color="#ff2b0a"/><stop offset=".154" stop-color="#ff2716"/><stop offset=".231" stop-color="#ff2422"/><stop offset=".308" stop-color="#ff202f"/><stop offset=".385" stop-color="#ff1d3c"/><stop offset=".462" stop-color="#ff1949"/><stop offset=".538" stop-color="#ff1656"/><stop offset=".615" stop-color="#ff1263"/><stop offset=".692" stop-color="#ff0e71"/><stop offset=".769" stop-color="#ff0b7f"/><stop offset=".846" stop-color="#ff078d"/><stop offset=".923" stop-color="#ff039c"/><stop offset="1" stop-color="#ff00ab"/></linearGradient>
<rect x="1283" y="105.6" width="3" height="134.4" fill="url(#fi190)"/>
<linearGradient id="fi191" gradientUnits="userSpaceOnUse" x1="0" y1="105.8" x2="0" y2="236.9"><stop offset="0" stop-color="#ff2c00"/><stop offset=".077" stop-color="#ff2909"/><stop offset=".154" stop-color="#ff2615"/><stop offset=".231" stop-color="#ff2321"/><stop offset=".308" stop-color="#ff1f2d"/><stop offset=".385" stop-color="#ff1c39"/><stop offset=".462" stop-color="#ff1846"/><stop offset=".538" stop-color="#ff1552"/><stop offset=".615" stop-color="#ff115f"/><stop offset=".692" stop-color="#ff0e6c"/><stop offset=".769" stop-color="#ff0a7a"/><stop offset=".846" stop-color="#ff0687"/><stop offset=".923" stop-color="#ff0395"/><stop offset="1" stop-color="#ff00a3"/></linearGradient>
<rect x="1286" y="105.8" width="3" height="131.1" fill="url(#fi191)"/>
<linearGradient id="fi192" gradientUnits="userSpaceOnUse" x1="0" y1="106.1" x2="0" y2="233.9"><stop offset="0" stop-color="#ff2a00"/><stop offset=".077" stop-color="#ff2709"/><stop offset=".154" stop-color="#ff2414"/><stop offset=".231" stop-color="#ff211f"/><stop offset=".308" stop-color="#ff1e2b"/><stop offset=".385" stop-color="#ff1b37"/><stop offset=".462" stop-color="#ff1743"/><stop offset=".538" stop-color="#ff144f"/><stop offset=".615" stop-color="#ff115b"/><stop offset=".692" stop-color="#ff0d68"/><stop offset=".769" stop-color="#ff0a75"/><stop offset=".846" stop-color="#ff0682"/><stop offset=".923" stop-color="#ff028f"/><stop offset="1" stop-color="#ff009c"/></linearGradient>
<rect x="1289" y="106.1" width="3" height="127.8" fill="url(#fi192)"/>
<linearGradient id="fi193" gradientUnits="userSpaceOnUse" x1="0" y1="106.4" x2="0" y2="230.8"><stop offset="0" stop-color="#ff2900"/><stop offset=".083" stop-color="#ff2609"/><stop offset=".167" stop-color="#ff2215"/><stop offset=".25" stop-color="#ff1f21"/><stop offset=".333" stop-color="#ff1c2d"/><stop offset=".417" stop-color="#ff1839"/><stop offset=".5" stop-color="#ff1546"/><stop offset=".583" stop-color="#ff1152"/><stop offset=".667" stop-color="#ff0e5f"/><stop offset=".75" stop-color="#ff0a6d"/><stop offset=".833" stop-color="#ff067a"/><stop offset=".917" stop-color="#ff0388"/><stop offset="1" stop-color="#ff0095"/></linearGradient>
<rect x="1292" y="106.4" width="3" height="124.4" fill="url(#fi193)"/>
<linearGradient id="fi194" gradientUnits="userSpaceOnUse" x1="0" y1="106.7" x2="0" y2="227.8"><stop offset="0" stop-color="#ff2700"/><stop offset=".083" stop-color="#ff2409"/><stop offset=".167" stop-color="#ff2114"/><stop offset=".25" stop-color="#ff1e1f"/><stop offset=".333" stop-color="#ff1a2b"/><stop offset=".417" stop-color="#ff1737"/><stop offset=".5" stop-color="#ff1443"/><stop offset=".583" stop-color="#ff104f"/><stop offset=".667" stop-color="#ff0d5b"/><stop offset=".75" stop-color="#ff0a68"/><stop offset=".833" stop-color="#ff0675"/><stop offset=".917" stop-color="#ff0282"/><stop offset="1" stop-color="#ff008f"/></linearGradient>
<rect x="1295" y="106.7" width="3" height="121.1" fill="url(#fi194)"/>
<linearGradient id="fi195" gradientUnits="userSpaceOnUse" x1="0" y1="107.0" x2="0" y2="224.8"><stop offset="0" stop-color="#ff2500"/><stop offset=".083" stop-color="#ff2208"/><stop offset=".167" stop-color="#ff1f13"/><stop offset=".25" stop-color="#ff1c1e"/><stop offset=".333" stop-color="#ff1929"/><stop offset=".417" stop-color="#ff1634"/><stop offset=".5" stop-color="#ff1340"/><stop offset=".583" stop-color="#ff104c"/><stop offset=".667" stop-color="#ff0c57"/><stop offset=".75" stop-color="#ff0963"/><stop offset=".833" stop-color="#ff066f"/><stop offset=".917" stop-color="#ff027c"/><stop offset="1" stop-color="#ff0088"/></linearGradient>
<rect x="1298" y="107.0" width="3" height="117.8" fill="url(#fi195)"/>
<linearGradient id="fi196" gradientUnits="userSpaceOnUse" x1="0" y1="107.2" x2="0" y2="221.7"><stop offset="0" stop-color="#ff2400"/><stop offset=".091" stop-color="#ff2109"/><stop offset=".182" stop-color="#ff1e14"/><stop offset=".273" stop-color="#ff1a20"/><stop offset=".364" stop-color="#ff172b"/><stop offset=".455" stop-color="#ff1437"/><stop offset=".545" stop-color="#ff1043"/><stop offset=".636" stop-color="#ff0d4f"/><stop offset=".727" stop-color="#ff0a5c"/><stop offset=".818" stop-color="#ff0668"/><stop offset=".909" stop-color="#ff0275"/><stop offset="1" stop-color="#ff0082"/></linearGradient>
<rect x="1301" y="107.2" width="3" height="114.5" fill="url(#fi196)"/>
<linearGradient id="fi197" gradientUnits="userSpaceOnUse" x1="0" y1="107.5" x2="0" y2="218.7"><stop offset="0" stop-color="#ff2200"/><stop offset=".091" stop-color="#ff1f08"/><stop offset=".182" stop-color="#ff1c13"/><stop offset=".273" stop-color="#ff191e"/><stop offset=".364" stop-color="#ff1629"/><stop offset=".455" stop-color="#ff1335"/><stop offset=".545" stop-color="#ff1040"/><stop offset=".636" stop-color="#ff0c4c"/><stop offset=".727" stop-color="#ff0958"/><stop offset=".818" stop-color="#ff0664"/><stop offset=".909" stop-color="#ff0270"/><stop offset="1" stop-color="#ff007c"/></linearGradient>
<rect x="1304" y="107.5" width="3" height="111.1" fill="url(#fi197)"/>
<linearGradient id="fi198" gradientUnits="userSpaceOnUse" x1="0" y1="107.8" x2="0" y2="215.6"><stop offset="0" stop-color="#ff2100"/><stop offset=".091" stop-color="#ff1e08"/><stop offset=".182" stop-color="#ff1b12"/><stop offset=".273" stop-color="#ff181d"/><stop offset=".364" stop-color="#ff1527"/><stop offset=".455" stop-color="#ff1232"/><stop offset=".545" stop-color="#ff0f3d"/><stop offset=".636" stop-color="#ff0c48"/><stop offset=".727" stop-color="#ff0954"/><stop offset=".818" stop-color="#ff055f"/><stop offset=".909" stop-color="#ff026b"/><stop offset="1" stop-color="#ff0076"/></linearGradient>
<rect x="1307" y="107.8" width="3" height="107.8" fill="url(#fi198)"/>
<linearGradient id="fi199" gradientUnits="userSpaceOnUse" x1="0" y1="108.1" x2="0" y2="212.6"><stop offset="0" stop-color="#ff1f00"/><stop offset=".1" stop-color="#ff1c09"/><stop offset=".2" stop-color="#ff1913"/><stop offset=".3" stop-color="#ff161f"/><stop offset=".4" stop-color="#ff132a"/><stop offset=".5" stop-color="#ff1035"/><stop offset=".6" stop-color="#ff0c41"/><stop offset=".7" stop-color="#ff094d"/><stop offset=".8" stop-color="#ff0658"/><stop offset=".9" stop-color="#ff0265"/><stop offset="1" stop-color="#ff0071"/></linearGradient>
<rect x="1310" y="108.1" width="3" height="104.5" fill="url(#fi199)"/>
<linearGradient id="fi200" gradientUnits="userSpaceOnUse" x1="0" y1="108.4" x2="0" y2="209.5"><stop offset="0" stop-color="#ff1e00"/><stop offset=".1" stop-color="#ff1b08"/><stop offset=".2" stop-color="#ff1813"/><stop offset=".3" stop-color="#ff151d"/><stop offset=".4" stop-color="#ff1228"/><stop offset=".5" stop-color="#ff0f33"/><stop offset=".6" stop-color="#ff0c3e"/><stop offset=".7" stop-color="#ff0949"/><stop offset=".8" stop-color="#ff0554"/><stop offset=".9" stop-color="#ff0260"/><stop offset="1" stop-color="#ff006c"/></linearGradient>
<rect x="1313" y="108.4" width="3" height="101.2" fill="url(#fi200)"/>
<linearGradient id="fi201" gradientUnits="userSpaceOnUse" x1="0" y1="108.6" x2="0" y2="206.5"><stop offset="0" stop-color="#ff1d00"/><stop offset=".1" stop-color="#ff1a08"/><stop offset=".2" stop-color="#ff1712"/><stop offset=".3" stop-color="#ff141c"/><stop offset=".4" stop-color="#ff1126"/><stop offset=".5" stop-color="#ff0e30"/><stop offset=".6" stop-color="#ff0b3b"/><stop offset=".7" stop-color="#ff0845"/><stop offset=".8" stop-color="#ff0550"/><stop offset=".9" stop-color="#ff025b"/><stop offset="1" stop-color="#ff0066"/></linearGradient>
<rect x="1316" y="108.6" width="3" height="97.8" fill="url(#fi201)"/>
<linearGradient id="fi202" gradientUnits="userSpaceOnUse" x1="0" y1="108.9" x2="0" y2="203.4"><stop offset="0" stop-color="#ff1b00"/><stop offset=".111" stop-color="#ff1808"/><stop offset=".222" stop-color="#ff1513"/><stop offset=".333" stop-color="#ff121e"/><stop offset=".444" stop-color="#ff0f28"/><stop offset=".556" stop-color="#ff0c33"/><stop offset=".667" stop-color="#ff093f"/><stop offset=".778" stop-color="#ff064a"/><stop offset=".889" stop-color="#ff0256"/><stop offset="1" stop-color="#ff0061"/></linearGradient>
<rect x="1319" y="108.9" width="3" height="94.5" fill="url(#fi202)"/>
<linearGradient id="fi203" gradientUnits="userSpaceOnUse" x1="0" y1="109.2" x2="0" y2="200.4"><stop offset="0" stop-color="#ff1a00"/><stop offset=".111" stop-color="#ff1708"/><stop offset=".222" stop-color="#ff1412"/><stop offset=".333" stop-color="#ff111c"/><stop offset=".444" stop-color="#ff0e26"/><stop offset=".556" stop-color="#ff0b31"/><stop offset=".667" stop-color="#ff083b"/><stop offset=".778" stop-color="#ff0546"/><stop offset=".889" stop-color="#ff0251"/><stop offset="1" stop-color="#ff005c"/></linearGradient>
<rect x="1322" y="109.2" width="3" height="91.2" fill="url(#fi203)"/>
<linearGradient id="fi204" gradientUnits="userSpaceOnUse" x1="0" y1="109.5" x2="0" y2="197.3"><stop offset="0" stop-color="#ff1900"/><stop offset=".111" stop-color="#ff1607"/><stop offset=".222" stop-color="#ff1311"/><stop offset=".333" stop-color="#ff101b"/><stop offset=".444" stop-color="#ff0e24"/><stop offset=".556" stop-color="#ff0b2e"/><stop offset=".667" stop-color="#ff0838"/><stop offset=".778" stop-color="#ff0543"/><stop offset=".889" stop-color="#ff024d"/><stop offset="1" stop-color="#ff0058"/></linearGradient>
<rect x="1325" y="109.5" width="3" height="87.9" fill="url(#fi204)"/>
<linearGradient id="fi205" gradientUnits="userSpaceOnUse" x1="0" y1="109.8" x2="0" y2="194.3"><stop offset="0" stop-color="#ff1700"/><stop offset=".125" stop-color="#ff1508"/><stop offset=".25" stop-color="#ff1212"/><stop offset=".375" stop-color="#ff0f1d"/><stop offset=".5" stop-color="#ff0c27"/><stop offset=".625" stop-color="#ff0832"/><stop offset=".75" stop-color="#ff053d"/><stop offset=".875" stop-color="#ff0248"/><stop offset="1" stop-color="#ff0053"/></linearGradient>
<rect x="1328" y="109.8" width="3" height="84.6" fill="url(#fi205)"/>
<linearGradient id="fi206" gradientUnits="userSpaceOnUse" x1="0" y1="110.0" x2="0" y2="191.3"><stop offset="0" stop-color="#ff1600"/><stop offset=".125" stop-color="#ff1308"/><stop offset=".25" stop-color="#ff1111"/><stop offset=".375" stop-color="#ff0e1b"/><stop offset=".5" stop-color="#ff0b25"/><stop offset=".625" stop-color="#ff082f"/><stop offset=".75" stop-color="#ff0539"/><stop offset=".875" stop-color="#ff0244"/><stop offset="1" stop-color="#ff004e"/></linearGradient>
<rect x="1331" y="110.0" width="3" height="81.2" fill="url(#fi206)"/>
<linearGradient id="fi207" gradientUnits="userSpaceOnUse" x1="0" y1="110.3" x2="0" y2="188.2"><stop offset="0" stop-color="#ff1500"/><stop offset=".125" stop-color="#ff1207"/><stop offset=".25" stop-color="#ff1010"/><stop offset=".375" stop-color="#ff0d1a"/><stop offset=".5" stop-color="#ff0a23"/><stop offset=".625" stop-color="#ff082d"/><stop offset=".75" stop-color="#ff0536"/><stop offset=".875" stop-color="#ff0240"/><stop offset="1" stop-color="#ff004a"/></linearGradient>
<rect x="1334" y="110.3" width="3" height="77.9" fill="url(#fi207)"/>
<linearGradient id="fi208" gradientUnits="userSpaceOnUse" x1="0" y1="110.6" x2="0" y2="185.2"><stop offset="0" stop-color="#ff1400"/><stop offset=".143" stop-color="#ff1108"/><stop offset=".286" stop-color="#ff0e12"/><stop offset=".429" stop-color="#ff0b1c"/><stop offset=".571" stop-color="#ff0826"/><stop offset=".714" stop-color="#ff0531"/><stop offset=".857" stop-color="#ff023b"/><stop offset="1" stop-color="#ff0046"/></linearGradient>
<rect x="1337" y="110.6" width="3" height="74.6" fill="url(#fi208)"/>
<linearGradient id="fi209" gradientUnits="userSpaceOnUse" x1="0" y1="110.9" x2="0" y2="182.1"><stop offset="0" stop-color="#ff1300"/><stop offset=".143" stop-color="#ff1007"/><stop offset=".286" stop-color="#ff0d11"/><stop offset=".429" stop-color="#ff0a1a"/><stop offset=".571" stop-color="#ff0824"/><stop offset=".714" stop-color="#ff052e"/><stop offset=".857" stop-color="#ff0238"/><stop offset="1" stop-color="#ff0042"/></linearGradient>
<rect x="1340" y="110.9" width="3" height="71.3" fill="url(#fi209)"/>
<linearGradient id="fi210" gradientUnits="userSpaceOnUse" x1="0" y1="111.1" x2="0" y2="179.1"><stop offset="0" stop-color="#ff1200"/><stop offset=".143" stop-color="#ff0f07"/><stop offset=".286" stop-color="#ff0c10"/><stop offset=".429" stop-color="#ff0a19"/><stop offset=".571" stop-color="#ff0722"/><stop offset=".714" stop-color="#ff042b"/><stop offset=".857" stop-color="#ff0234"/><stop offset="1" stop-color="#ff003e"/></linearGradient>
<rect x="1343" y="111.1" width="3" height="67.9" fill="url(#fi210)"/>
<linearGradient id="fi211" gradientUnits="userSpaceOnUse" x1="0" y1="111.4" x2="0" y2="176.0"><stop offset="0" stop-color="#ff1100"/><stop offset=".167" stop-color="#ff0e08"/><stop offset=".333" stop-color="#ff0b11"/><stop offset=".5" stop-color="#ff081b"/><stop offset=".667" stop-color="#ff0525"/><stop offset=".833" stop-color="#ff022f"/><stop offset="1" stop-color="#ff003a"/></linearGradient>
<rect x="1346" y="111.4" width="3" height="64.6" fill="url(#fi211)"/>
<linearGradient id="fi212" gradientUnits="userSpaceOnUse" x1="0" y1="111.7" x2="0" y2="173.0"><stop offset="0" stop-color="#ff0f00"/><stop offset=".167" stop-color="#ff0d07"/><stop offset=".333" stop-color="#ff0a10"/><stop offset=".5" stop-color="#ff0719"/><stop offset=".667" stop-color="#ff0523"/><stop offset=".833" stop-color="#ff022c"/><stop offset="1" stop-color="#ff0036"/></linearGradient>
<rect x="1349" y="111.7" width="3" height="61.3" fill="url(#fi212)"/>
<linearGradient id="fi213" gradientUnits="userSpaceOnUse" x1="0" y1="112.0" x2="0" y2="169.9"><stop offset="0" stop-color="#ff0e00"/><stop offset=".167" stop-color="#ff0c07"/><stop offset=".333" stop-color="#ff090f"/><stop offset=".5" stop-color="#ff0718"/><stop offset=".667" stop-color="#ff0420"/><stop offset=".833" stop-color="#ff0229"/><stop offset="1" stop-color="#ff0032"/></linearGradient>
<rect x="1352" y="112.0" width="3" height="58.0" fill="url(#fi213)"/>
<linearGradient id="fi214" gradientUnits="userSpaceOnUse" x1="0" y1="112.3" x2="0" y2="166.9"><stop offset="0" stop-color="#ff0d00"/><stop offset=".2" stop-color="#ff0b08"/><stop offset=".4" stop-color="#ff0811"/><stop offset=".6" stop-color="#ff051b"/><stop offset=".8" stop-color="#ff0225"/><stop offset="1" stop-color="#ff002f"/></linearGradient>
<rect x="1355" y="112.3" width="3" height="54.6" fill="url(#fi214)"/>
<linearGradient id="fi215" gradientUnits="userSpaceOnUse" x1="0" y1="112.5" x2="0" y2="163.9"><stop offset="0" stop-color="#ff0c00"/><stop offset=".2" stop-color="#ff0a07"/><stop offset=".4" stop-color="#ff0710"/><stop offset=".6" stop-color="#ff0519"/><stop offset=".8" stop-color="#ff0222"/><stop offset="1" stop-color="#ff002b"/></linearGradient>
<rect x="1358" y="112.5" width="3" height="51.3" fill="url(#fi215)"/>
<linearGradient id="fi216" gradientUnits="userSpaceOnUse" x1="0" y1="112.8" x2="0" y2="160.8"><stop offset="0" stop-color="#ff0b00"/><stop offset=".2" stop-color="#ff0906"/><stop offset=".4" stop-color="#ff070f"/><stop offset=".6" stop-color="#ff0417"/><stop offset=".8" stop-color="#ff021f"/><stop offset="1" stop-color="#ff0028"/></linearGradient>
<rect x="1361" y="112.8" width="3" height="48.0" fill="url(#fi216)"/>
<linearGradient id="fi217" gradientUnits="userSpaceOnUse" x1="0" y1="113.1" x2="0" y2="157.8"><stop offset="0" stop-color="#ff0a00"/><stop offset=".25" stop-color="#ff0808"/><stop offset=".5" stop-color="#ff0511"/><stop offset=".75" stop-color="#ff021b"/><stop offset="1" stop-color="#ff0024"/></linearGradient>
<rect x="1364" y="113.1" width="3" height="44.7" fill="url(#fi217)"/>
<linearGradient id="fi218" gradientUnits="userSpaceOnUse" x1="0" y1="113.4" x2="0" y2="154.7"><stop offset="0" stop-color="#ff0a00"/><stop offset=".25" stop-color="#ff0707"/><stop offset=".5" stop-color="#ff040f"/><stop offset=".75" stop-color="#ff0218"/><stop offset="1" stop-color="#ff0021"/></linearGradient>
<rect x="1367" y="113.4" width="3" height="41.3" fill="url(#fi218)"/>
<linearGradient id="fi219" gradientUnits="userSpaceOnUse" x1="0" y1="113.7" x2="0" y2="151.7"><stop offset="0" stop-color="#ff0900"/><stop offset=".25" stop-color="#ff0606"/><stop offset=".5" stop-color="#ff040e"/><stop offset=".75" stop-color="#ff0216"/><stop offset="1" stop-color="#ff001e"/></linearGradient>
<rect x="1370" y="113.7" width="3" height="38.0" fill="url(#fi219)"/>
<linearGradient id="fi220" gradientUnits="userSpaceOnUse" x1="0" y1="113.9" x2="0" y2="148.6"><stop offset="0" stop-color="#ff0800"/><stop offset=".333" stop-color="#ff0508"/><stop offset=".667" stop-color="#ff0211"/><stop offset="1" stop-color="#ff001b"/></linearGradient>
<rect x="1373" y="113.9" width="3" height="34.7" fill="url(#fi220)"/>
<linearGradient id="fi221" gradientUnits="userSpaceOnUse" x1="0" y1="114.2" x2="0" y2="145.6"><stop offset="0" stop-color="#ff0700"/><stop offset=".333" stop-color="#ff0407"/><stop offset=".667" stop-color="#ff020f"/><stop offset="1" stop-color="#ff0018"/></linearGradient>
<rect x="1376" y="114.2" width="3" height="31.4" fill="url(#fi221)"/>
<linearGradient id="fi222" gradientUnits="userSpaceOnUse" x1="0" y1="114.5" x2="0" y2="142.5"><stop offset="0" stop-color="#ff0600"/><stop offset=".333" stop-color="#ff0406"/><stop offset=".667" stop-color="#ff010d"/><stop offset="1" stop-color="#ff0015"/></linearGradient>
<rect x="1379" y="114.5" width="3" height="28.0" fill="url(#fi222)"/>
<linearGradient id="fi223" gradientUnits="userSpaceOnUse" x1="0" y1="114.8" x2="0" y2="139.5"><stop offset="0" stop-color="#ff0500"/><stop offset=".333" stop-color="#ff0305"/><stop offset=".667" stop-color="#ff010b"/><stop offset="1" stop-color="#ff0012"/></linearGradient>
<rect x="1382" y="114.8" width="3" height="24.7" fill="url(#fi223)"/>
<linearGradient id="fi224" gradientUnits="userSpaceOnUse" x1="0" y1="115.1" x2="0" y2="136.5"><stop offset="0" stop-color="#ff0400"/><stop offset=".333" stop-color="#ff0304"/><stop offset=".667" stop-color="#ff0109"/><stop offset="1" stop-color="#ff000f"/></linearGradient>
<rect x="1385" y="115.1" width="3" height="21.4" fill="url(#fi224)"/>
<linearGradient id="fi225" gradientUnits="userSpaceOnUse" x1="0" y1="115.3" x2="0" y2="133.4"><stop offset="0" stop-color="#ff0300"/><stop offset=".333" stop-color="#ff0203"/><stop offset=".667" stop-color="#ff0108"/><stop offset="1" stop-color="#ff000c"/></linearGradient>
<rect x="1388" y="115.3" width="3" height="18.1" fill="url(#fi225)"/>
<linearGradient id="fi226" gradientUnits="userSpaceOnUse" x1="0" y1="115.6" x2="0" y2="130.4"><stop offset="0" stop-color="#ff0300"/><stop offset=".333" stop-color="#ff0102"/><stop offset=".667" stop-color="#ff0006"/><stop offset="1" stop-color="#ff000a"/></linearGradient>
<rect x="1391" y="115.6" width="3" height="14.7" fill="url(#fi226)"/>
<linearGradient id="fi227" gradientUnits="userSpaceOnUse" x1="0" y1="115.9" x2="0" y2="127.3"><stop offset="0" stop-color="#ff0200"/><stop offset=".333" stop-color="#ff0101"/><stop offset=".667" stop-color="#ff0004"/><stop offset="1" stop-color="#ff0007"/></linearGradient>
<rect x="1394" y="115.9" width="3" height="11.4" fill="url(#fi227)"/>
<linearGradient id="fi228" gradientUnits="userSpaceOnUse" x1="0" y1="116.2" x2="0" y2="124.3"><stop offset="0" stop-color="#ff0100"/><stop offset=".333" stop-color="#ff0000"/><stop offset=".667" stop-color="#ff0002"/><stop offset="1" stop-color="#ff0004"/></linearGradient>
<rect x="1397" y="116.2" width="3" height="8.1" fill="url(#fi228)"/>
<linearGradient id="fi229" gradientUnits="userSpaceOnUse" x1="0" y1="116.5" x2="0" y2="121.2"><stop offset="0" stop-color="#ff0000"/><stop offset=".333" stop-color="#ff0000"/><stop offset=".667" stop-color="#ff0001"/><stop offset="1" stop-color="#ff0002"/></linearGradient>
<rect x="1400" y="116.5" width="3" height="4.8" fill="url(#fi229)"/>
</g></g>
</g></g>
<line x1="945" y1="520.4" x2="950" y2="520.4" stroke="#c8c8c8" stroke-width="1.5"/>
<text x="944" y="525.6" font-size="13.5" fill="#d8d8d8" text-anchor="end" >0</text>
<line x1="945" y1="482.0" x2="950" y2="482.0" stroke="#c8c8c8" stroke-width="1.5"/>
<text x="944" y="487.2" font-size="13.5" fill="#d8d8d8" text-anchor="end" >0,05</text>
<line x1="945" y1="443.6" x2="950" y2="443.6" stroke="#c8c8c8" stroke-width="1.5"/>
<text x="944" y="448.8" font-size="13.5" fill="#d8d8d8" text-anchor="end" >0,1</text>
<line x1="945" y1="405.2" x2="950" y2="405.2" stroke="#c8c8c8" stroke-width="1.5"/>
<text x="944" y="410.4" font-size="13.5" fill="#d8d8d8" text-anchor="end" >0,15</text>
<line x1="945" y1="366.8" x2="950" y2="366.8" stroke="#c8c8c8" stroke-width="1.5"/>
<text x="944" y="372.0" font-size="13.5" fill="#d8d8d8" text-anchor="end" >0,2</text>
<line x1="945" y1="328.4" x2="950" y2="328.4" stroke="#c8c8c8" stroke-width="1.5"/>
<text x="944" y="333.6" font-size="13.5" fill="#d8d8d8" text-anchor="end" >0,25</text>
<line x1="945" y1="290.0" x2="950" y2="290.0" stroke="#c8c8c8" stroke-width="1.5"/>
<text x="944" y="295.2" font-size="13.5" fill="#d8d8d8" text-anchor="end" >0,3</text>
<line x1="945" y1="251.6" x2="950" y2="251.6" stroke="#c8c8c8" stroke-width="1.5"/>
<text x="944" y="256.8" font-size="13.5" fill="#d8d8d8" text-anchor="end" >0,35</text>
<line x1="945" y1="213.2" x2="950" y2="213.2" stroke="#c8c8c8" stroke-width="1.5"/>
<text x="944" y="218.4" font-size="13.5" fill="#d8d8d8" text-anchor="end" >0,4</text>
<line x1="945" y1="174.8" x2="950" y2="174.8" stroke="#c8c8c8" stroke-width="1.5"/>
<text x="944" y="180.0" font-size="13.5" fill="#d8d8d8" text-anchor="end" >0,45</text>
<line x1="945" y1="136.4" x2="950" y2="136.4" stroke="#c8c8c8" stroke-width="1.5"/>
<text x="944" y="141.6" font-size="13.5" fill="#d8d8d8" text-anchor="end" >0,5</text>
<line x1="945" y1="98.0" x2="950" y2="98.0" stroke="#c8c8c8" stroke-width="1.5"/>
<text x="944" y="103.2" font-size="13.5" fill="#d8d8d8" text-anchor="end" >0,55</text>
<line x1="950" y1="520.5" x2="950" y2="526" stroke="#c8c8c8" stroke-width="1.2"/>
<text x="950" y="540.8" font-size="13.5" fill="#d8d8d8" text-anchor="middle" >0</text>
<line x1="1000" y1="520.5" x2="1000" y2="526" stroke="#c8c8c8" stroke-width="1.2"/>
<text x="1000" y="540.8" font-size="13.5" fill="#d8d8d8" text-anchor="middle" >0,05</text>
<line x1="1050" y1="520.5" x2="1050" y2="526" stroke="#c8c8c8" stroke-width="1.2"/>
<text x="1050" y="540.8" font-size="13.5" fill="#d8d8d8" text-anchor="middle" >0,1</text>
<line x1="1100" y1="520.5" x2="1100" y2="526" stroke="#c8c8c8" stroke-width="1.2"/>
<text x="1100" y="540.8" font-size="13.5" fill="#d8d8d8" text-anchor="middle" >0,15</text>
<line x1="1150" y1="520.5" x2="1150" y2="526" stroke="#c8c8c8" stroke-width="1.2"/>
<text x="1150" y="540.8" font-size="13.5" fill="#d8d8d8" text-anchor="middle" >0,2</text>
<line x1="1200" y1="520.5" x2="1200" y2="526" stroke="#c8c8c8" stroke-width="1.2"/>
<text x="1200" y="540.8" font-size="13.5" fill="#d8d8d8" text-anchor="middle" >0,25</text>
<line x1="1250" y1="520.5" x2="1250" y2="526" stroke="#c8c8c8" stroke-width="1.2"/>
<text x="1250" y="540.8" font-size="13.5" fill="#d8d8d8" text-anchor="middle" >0,3</text>
<line x1="1300" y1="520.5" x2="1300" y2="526" stroke="#c8c8c8" stroke-width="1.2"/>
<text x="1300" y="540.8" font-size="13.5" fill="#d8d8d8" text-anchor="middle" >0,35</text>
<line x1="1350" y1="520.5" x2="1350" y2="526" stroke="#c8c8c8" stroke-width="1.2"/>
<text x="1350" y="540.8" font-size="13.5" fill="#d8d8d8" text-anchor="middle" >0,4</text>
<line x1="1400" y1="520.5" x2="1400" y2="526" stroke="#c8c8c8" stroke-width="1.2"/>
<text x="1400" y="540.8" font-size="13.5" fill="#d8d8d8" text-anchor="middle" >0,45</text>
<line x1="1450" y1="520.5" x2="1450" y2="526" stroke="#c8c8c8" stroke-width="1.2"/>
<text x="1450" y="540.8" font-size="13.5" fill="#d8d8d8" text-anchor="middle" >0,5</text>
<line x1="1500" y1="520.5" x2="1500" y2="526" stroke="#c8c8c8" stroke-width="1.2"/>
<text x="1500" y="540.8" font-size="13.5" fill="#d8d8d8" text-anchor="middle" >0,55</text>
<rect x="1067.7" y="80.2" width="13.5" height="13.5" fill="none" stroke="#f4f4f4" stroke-width="1.4"/>
<rect x="1079.2" y="91.0" width="13.5" height="13.5" fill="none" stroke="#f4f4f4" stroke-width="1.4"/>
<rect x="1090.8" y="103.3" width="13.5" height="13.5" fill="none" stroke="#f4f4f4" stroke-width="1.4"/>
<rect x="1105.3" y="117.2" width="13.5" height="13.5" fill="none" stroke="#f4f4f4" stroke-width="1.4"/>
<rect x="1121.2" y="132.2" width="13.5" height="13.5" fill="none" stroke="#f4f4f4" stroke-width="1.4"/>
<rect x="1147.3" y="87.5" width="13.5" height="13.5" fill="none" stroke="#f4f4f4" stroke-width="1.4"/>
<rect x="1145.3" y="99.2" width="13.5" height="13.5" fill="none" stroke="#f4f4f4" stroke-width="1.4"/>
<rect x="1144.2" y="111.0" width="13.5" height="13.5" fill="none" stroke="#f4f4f4" stroke-width="1.4"/>
<rect x="1144.0" y="122.6" width="13.5" height="13.5" fill="none" stroke="#f4f4f4" stroke-width="1.4"/>
<rect x="1143.3" y="135.9" width="13.5" height="13.5" fill="none" stroke="#f4f4f4" stroke-width="1.4"/>
<rect x="1082.0" y="163.2" width="13.5" height="13.5" fill="none" stroke="#f4f4f4" stroke-width="1.4"/>
<rect x="1092.8" y="160.4" width="13.5" height="13.5" fill="none" stroke="#f4f4f4" stroke-width="1.4"/>
<rect x="1105.0" y="157.8" width="13.5" height="13.5" fill="none" stroke="#f4f4f4" stroke-width="1.4"/>
<rect x="1118.0" y="155.1" width="13.5" height="13.5" fill="none" stroke="#f4f4f4" stroke-width="1.4"/>
<rect x="1129.2" y="153.2" width="13.5" height="13.5" fill="none" stroke="#f4f4f4" stroke-width="1.4"/>
<rect x="1157.5" y="167.7" width="13.5" height="13.5" fill="none" stroke="#f4f4f4" stroke-width="1.4"/>
<rect x="1175.0" y="186.1" width="13.5" height="13.5" fill="none" stroke="#f4f4f4" stroke-width="1.4"/>
<rect x="1193.2" y="204.8" width="13.5" height="13.5" fill="none" stroke="#f4f4f4" stroke-width="1.4"/>
<rect x="1217.3" y="229.2" width="13.5" height="13.5" fill="none" stroke="#f4f4f4" stroke-width="1.4"/>
<rect x="1248.2" y="257.6" width="13.5" height="13.5" fill="none" stroke="#f4f4f4" stroke-width="1.4"/>
<rect x="1138.2" y="180.1" width="13.5" height="13.5" fill="none" stroke="#f4f4f4" stroke-width="1.4"/>
<rect x="1135.2" y="214.8" width="13.5" height="13.5" fill="none" stroke="#f4f4f4" stroke-width="1.4"/>
<rect x="1131.3" y="257.4" width="13.5" height="13.5" fill="none" stroke="#f4f4f4" stroke-width="1.4"/>
<rect x="1125.8" y="310.9" width="13.5" height="13.5" fill="none" stroke="#f4f4f4" stroke-width="1.4"/>
<rect x="1119.0" y="391.1" width="13.5" height="13.5" fill="none" stroke="#f4f4f4" stroke-width="1.4"/>
<rect x="1185.8" y="145.1" width="13.5" height="13.5" fill="none" stroke="#f4f4f4" stroke-width="1.4"/>
<rect x="1235.8" y="136.1" width="13.5" height="13.5" fill="none" stroke="#f4f4f4" stroke-width="1.4"/>
<rect x="1281.8" y="128.8" width="13.5" height="13.5" fill="none" stroke="#f4f4f4" stroke-width="1.4"/>
<rect x="1333.2" y="120.2" width="13.5" height="13.5" fill="none" stroke="#f4f4f4" stroke-width="1.4"/>
<rect x="1393.2" y="110.2" width="13.5" height="13.5" fill="none" stroke="#f4f4f4" stroke-width="1.4"/>
<rect x="1140.3" y="152.2" width="13.5" height="13.5" fill="none" stroke="#000" stroke-width="1.4"/>
<circle cx="1101.5" cy="90.3" r="4.2" fill="#2aa02a" stroke="#092309" stroke-width="1.3"/>
<circle cx="1109.0" cy="100.6" r="4.2" fill="#4d9a4d" stroke="#102110" stroke-width="1.3"/>
<circle cx="1116.5" cy="113.3" r="4.2" fill="#6aa06a" stroke="#172317" stroke-width="1.3"/>
<circle cx="1125.4" cy="126.4" r="4.2" fill="#86a886" stroke="#1d241d" stroke-width="1.3"/>
<circle cx="1135.7" cy="141.5" r="4.2" fill="#a0b0a0" stroke="#232623" stroke-width="1.3"/>
<circle cx="1158.4" cy="96.5" r="4.2" fill="#b8b830" stroke="#28280a" stroke-width="1.3"/>
<circle cx="1157.4" cy="108.5" r="4.2" fill="#b6b65a" stroke="#282813" stroke-width="1.3"/>
<circle cx="1154.6" cy="119.5" r="4.2" fill="#b8b878" stroke="#28281a" stroke-width="1.3"/>
<circle cx="1152.4" cy="131.6" r="4.2" fill="#b8b890" stroke="#28281f" stroke-width="1.3"/>
<circle cx="1149.5" cy="145.3" r="4.2" fill="#b8b8a4" stroke="#282824" stroke-width="1.3"/>
<circle cx="1105.5" cy="169.0" r="4.2" fill="#30a8b0" stroke="#0a2426" stroke-width="1.3"/>
<circle cx="1114.4" cy="167.2" r="4.2" fill="#56b0b4" stroke="#122627" stroke-width="1.3"/>
<circle cx="1121.7" cy="165.3" r="4.2" fill="#78b4b8" stroke="#1a2728" stroke-width="1.3"/>
<circle cx="1130.6" cy="163.1" r="4.2" fill="#98b8bc" stroke="#212829" stroke-width="1.3"/>
<circle cx="1139.5" cy="160.4" r="4.2" fill="#aabcbc" stroke="#252929" stroke-width="1.3"/>
<circle cx="1204.2" cy="244.0" r="4.2" fill="#c020b0" stroke="#2a0726" stroke-width="1.3"/>
<circle cx="1189.1" cy="220.3" r="4.2" fill="#b848b0" stroke="#280f26" stroke-width="1.3"/>
<circle cx="1176.4" cy="201.4" r="4.2" fill="#b070a8" stroke="#261824" stroke-width="1.3"/>
<circle cx="1166.2" cy="187.4" r="4.2" fill="#b090b0" stroke="#261f26" stroke-width="1.3"/>
<circle cx="1156.2" cy="172.6" r="4.2" fill="#b4a0b0" stroke="#272326" stroke-width="1.3"/>
<circle cx="1143.3" cy="183.3" r="4.2" fill="#9a9ab0" stroke="#212126" stroke-width="1.3"/>
<circle cx="1137.3" cy="213.0" r="4.2" fill="#8888b0" stroke="#1d1d26" stroke-width="1.3"/>
<circle cx="1131.4" cy="244.0" r="4.2" fill="#7070b0" stroke="#181826" stroke-width="1.3"/>
<circle cx="1123.0" cy="287.5" r="4.2" fill="#5050b0" stroke="#111126" stroke-width="1.3"/>
<circle cx="1112.1" cy="343.5" r="4.2" fill="#3030b0" stroke="#0a0a26" stroke-width="1.3"/>
<circle cx="1179.3" cy="151.3" r="4.2" fill="#b09090" stroke="#261f1f" stroke-width="1.3"/>
<circle cx="1213.3" cy="142.2" r="4.2" fill="#b07878" stroke="#261a1a" stroke-width="1.3"/>
<circle cx="1246.2" cy="135.3" r="4.2" fill="#b06060" stroke="#261515" stroke-width="1.3"/>
<circle cx="1286.2" cy="126.2" r="4.2" fill="#b04848" stroke="#260f0f" stroke-width="1.3"/>
<circle cx="1324.3" cy="117.3" r="4.2" fill="#b02a2a" stroke="#260909" stroke-width="1.3"/>
<circle cx="1148.2" cy="159.3" r="4.3" fill="#ffffff" stroke="#707070" stroke-width="0.8"/>
<rect x="1343" y="375.5" width="203.5" height="140" fill="#3a3a3a"/>
<clipPath id="insclip"><rect x="1346" y="378" width="199" height="134.5"/></clipPath>
<clipPath id="insin"><path d="M1346 392.3 L1545 498.1 L1545 512.5 L1346 512.5 Z"/></clipPath>
<g clip-path="url(#insclip)"><g shape-rendering="crispEdges">
<linearGradient id="ino1346" gradientUnits="userSpaceOnUse" x1="0" y1="378" x2="0" y2="512.5"><stop offset="0" stop-color="#689900"/><stop offset=".1" stop-color="#6b9900"/><stop offset=".2" stop-color="#6f9901"/><stop offset=".3" stop-color="#729903"/><stop offset=".4" stop-color="#759905"/><stop offset=".5" stop-color="#799907"/><stop offset=".6" stop-color="#7c9909"/><stop offset=".7" stop-color="#80990b"/><stop offset=".8" stop-color="#84990d"/><stop offset=".9" stop-color="#88990f"/><stop offset="1" stop-color="#8c9911"/></linearGradient>
<rect x="1346" y="378" width="5" height="134.5" fill="url(#ino1346)"/>
<linearGradient id="ino1351" gradientUnits="userSpaceOnUse" x1="0" y1="378" x2="0" y2="512.5"><stop offset="0" stop-color="#6a9900"/><stop offset=".1" stop-color="#6d9900"/><stop offset=".2" stop-color="#709901"/><stop offset=".3" stop-color="#739903"/><stop offset=".4" stop-color="#779905"/><stop offset=".5" stop-color="#7a9907"/><stop offset=".6" stop-color="#7e9908"/><stop offset=".7" stop-color="#82990a"/><stop offset=".8" stop-color="#86990d"/><stop offset=".9" stop-color="#8a990f"/><stop offset="1" stop-color="#8e9911"/></linearGradient>
<rect x="1351" y="378" width="5" height="134.5" fill="url(#ino1351)"/>
<linearGradient id="ino1356" gradientUnits="userSpaceOnUse" x1="0" y1="378" x2="0" y2="512.5"><stop offset="0" stop-color="#6b9900"/><stop offset=".1" stop-color="#6e9900"/><stop offset=".2" stop-color="#729901"/><stop offset=".3" stop-color="#759902"/><stop offset=".4" stop-color="#789904"/><stop offset=".5" stop-color="#7c9906"/><stop offset=".6" stop-color="#809908"/><stop offset=".7" stop-color="#84990a"/><stop offset=".8" stop-color="#87990c"/><stop offset=".9" stop-color="#8c990e"/><stop offset="1" stop-color="#909911"/></linearGradient>
<rect x="1356" y="378" width="5" height="134.5" fill="url(#ino1356)"/>
<linearGradient id="ino1361" gradientUnits="userSpaceOnUse" x1="0" y1="378" x2="0" y2="512.5"><stop offset="0" stop-color="#6d9900"/><stop offset=".1" stop-color="#709900"/><stop offset=".2" stop-color="#739900"/><stop offset=".3" stop-color="#779902"/><stop offset=".4" stop-color="#7a9904"/><stop offset=".5" stop-color="#7e9906"/><stop offset=".6" stop-color="#819908"/><stop offset=".7" stop-color="#85990a"/><stop offset=".8" stop-color="#89990c"/><stop offset=".9" stop-color="#8d990e"/><stop offset="1" stop-color="#929910"/></linearGradient>
<rect x="1361" y="378" width="5" height="134.5" fill="url(#ino1361)"/>
<linearGradient id="ino1366" gradientUnits="userSpaceOnUse" x1="0" y1="378" x2="0" y2="512.5"><stop offset="0" stop-color="#6e9900"/><stop offset=".1" stop-color="#719900"/><stop offset=".2" stop-color="#759900"/><stop offset=".3" stop-color="#789902"/><stop offset=".4" stop-color="#7c9904"/><stop offset=".5" stop-color="#7f9905"/><stop offset=".6" stop-color="#839907"/><stop offset=".7" stop-color="#879909"/><stop offset=".8" stop-color="#8b990c"/><stop offset=".9" stop-color="#8f990e"/><stop offset="1" stop-color="#949910"/></linearGradient>
<rect x="1366" y="378" width="5" height="134.5" fill="url(#ino1366)"/>
<linearGradient id="ino1371" gradientUnits="userSpaceOnUse" x1="0" y1="378" x2="0" y2="512.5"><stop offset="0" stop-color="#709900"/><stop offset=".1" stop-color="#739900"/><stop offset=".2" stop-color="#769900"/><stop offset=".3" stop-color="#7a9901"/><stop offset=".4" stop-color="#7d9903"/><stop offset=".5" stop-color="#819905"/><stop offset=".6" stop-color="#859907"/><stop offset=".7" stop-color="#899909"/><stop offset=".8" stop-color="#8d990b"/><stop offset=".9" stop-color="#91990d"/><stop offset="1" stop-color="#959910"/></linearGradient>
<rect x="1371" y="378" width="5" height="134.5" fill="url(#ino1371)"/>
<linearGradient id="ino1376" gradientUnits="userSpaceOnUse" x1="0" y1="378" x2="0" y2="512.5"><stop offset="0" stop-color="#719900"/><stop offset=".1" stop-color="#749900"/><stop offset=".2" stop-color="#789900"/><stop offset=".3" stop-color="#7b9901"/><stop offset=".4" stop-color="#7f9903"/><stop offset=".5" stop-color="#839905"/><stop offset=".6" stop-color="#869907"/><stop offset=".7" stop-color="#8a9909"/><stop offset=".8" stop-color="#8f990b"/><stop offset=".9" stop-color="#93990d"/><stop offset="1" stop-color="#97990f"/></linearGradient>
<rect x="1376" y="378" width="5" height="134.5" fill="url(#ino1376)"/>
<linearGradient id="ino1381" gradientUnits="userSpaceOnUse" x1="0" y1="378" x2="0" y2="512.5"><stop offset="0" stop-color="#739900"/><stop offset=".1" stop-color="#769900"/><stop offset=".2" stop-color="#799900"/><stop offset=".3" stop-color="#7d9901"/><stop offset=".4" stop-color="#819903"/><stop offset=".5" stop-color="#849904"/><stop offset=".6" stop-color="#889906"/><stop offset=".7" stop-color="#8c9908"/><stop offset=".8" stop-color="#90990a"/><stop offset=".9" stop-color="#95990d"/><stop offset="1" stop-color="#99990f"/></linearGradient>
<rect x="1381" y="378" width="5" height="134.5" fill="url(#ino1381)"/>
<linearGradient id="ino1386" gradientUnits="userSpaceOnUse" x1="0" y1="378" x2="0" y2="512.5"><stop offset="0" stop-color="#749900"/><stop offset=".1" stop-color="#789900"/><stop offset=".2" stop-color="#7b9900"/><stop offset=".3" stop-color="#7e9900"/><stop offset=".4" stop-color="#829902"/><stop offset=".5" stop-color="#869904"/><stop offset=".6" stop-color="#8a9906"/><stop offset=".7" stop-color="#8e9908"/><stop offset=".8" stop-color="#92990a"/><stop offset=".9" stop-color="#97990c"/><stop offset="1" stop-color="#99970e"/></linearGradient>
<rect x="1386" y="378" width="5" height="134.5" fill="url(#ino1386)"/>
<linearGradient id="ino1391" gradientUnits="userSpaceOnUse" x1="0" y1="378" x2="0" y2="512.5"><stop offset="0" stop-color="#769900"/><stop offset=".1" stop-color="#799900"/><stop offset=".2" stop-color="#7d9900"/><stop offset=".3" stop-color="#809900"/><stop offset=".4" stop-color="#849902"/><stop offset=".5" stop-color="#889904"/><stop offset=".6" stop-color="#8c9906"/><stop offset=".7" stop-color="#909908"/><stop offset=".8" stop-color="#94990a"/><stop offset=".9" stop-color="#98990c"/><stop offset="1" stop-color="#99950e"/></linearGradient>
<rect x="1391" y="378" width="5" height="134.5" fill="url(#ino1391)"/>
<linearGradient id="ino1396" gradientUnits="userSpaceOnUse" x1="0" y1="378" x2="0" y2="512.5"><stop offset="0" stop-color="#779900"/><stop offset=".1" stop-color="#7b9900"/><stop offset=".2" stop-color="#7e9900"/><stop offset=".3" stop-color="#829900"/><stop offset=".4" stop-color="#859901"/><stop offset=".5" stop-color="#899903"/><stop offset=".6" stop-color="#8d9905"/><stop offset=".7" stop-color="#919907"/><stop offset=".8" stop-color="#969909"/><stop offset=".9" stop-color="#99980b"/><stop offset="1" stop-color="#99930d"/></linearGradient>
<rect x="1396" y="378" width="5" height="134.5" fill="url(#ino1396)"/>
<linearGradient id="ino1401" gradientUnits="userSpaceOnUse" x1="0" y1="378" x2="0" y2="512.5"><stop offset="0" stop-color="#799900"/><stop offset=".1" stop-color="#7c9900"/><stop offset=".2" stop-color="#809900"/><stop offset=".3" stop-color="#839900"/><stop offset=".4" stop-color="#879901"/><stop offset=".5" stop-color="#8b9903"/><stop offset=".6" stop-color="#8f9905"/><stop offset=".7" stop-color="#939907"/><stop offset=".8" stop-color="#989909"/><stop offset=".9" stop-color="#99960b"/><stop offset="1" stop-color="#99920d"/></linearGradient>
<rect x="1401" y="378" width="5" height="134.5" fill="url(#ino1401)"/>
<linearGradient id="ino1406" gradientUnits="userSpaceOnUse" x1="0" y1="378" x2="0" y2="512.5"><stop offset="0" stop-color="#7a9900"/><stop offset=".1" stop-color="#7e9900"/><stop offset=".2" stop-color="#819900"/><stop offset=".3" stop-color="#859900"/><stop offset=".4" stop-color="#899901"/><stop offset=".5" stop-color="#8d9903"/><stop offset=".6" stop-color="#919905"/><stop offset=".7" stop-color="#959907"/><stop offset=".8" stop-color="#999909"/><stop offset=".9" stop-color="#99940a"/><stop offset="1" stop-color="#99900c"/></linearGradient>
<rect x="1406" y="378" width="5" height="134.5" fill="url(#ino1406)"/>
<linearGradient id="ino1411" gradientUnits="userSpaceOnUse" x1="0" y1="378" x2="0" y2="512.5"><stop offset="0" stop-color="#7c9900"/><stop offset=".1" stop-color="#7f9900"/><stop offset=".2" stop-color="#839900"/><stop offset=".3" stop-color="#879900"/><stop offset=".4" stop-color="#8a9900"/><stop offset=".5" stop-color="#8e9902"/><stop offset=".6" stop-color="#939904"/><stop offset=".7" stop-color="#979906"/><stop offset=".8" stop-color="#999708"/><stop offset=".9" stop-color="#99920a"/><stop offset="1" stop-color="#998e0c"/></linearGradient>
<rect x="1411" y="378" width="5" height="134.5" fill="url(#ino1411)"/>
<linearGradient id="ino1416" gradientUnits="userSpaceOnUse" x1="0" y1="378" x2="0" y2="512.5"><stop offset="0" stop-color="#7d9900"/><stop offset=".1" stop-color="#819900"/><stop offset=".2" stop-color="#849900"/><stop offset=".3" stop-color="#889900"/><stop offset=".4" stop-color="#8c9900"/><stop offset=".5" stop-color="#909902"/><stop offset=".6" stop-color="#949904"/><stop offset=".7" stop-color="#999906"/><stop offset=".8" stop-color="#999508"/><stop offset=".9" stop-color="#99910a"/><stop offset="1" stop-color="#998d0b"/></linearGradient>
<rect x="1416" y="378" width="5" height="134.5" fill="url(#ino1416)"/>
<linearGradient id="ino1421" gradientUnits="userSpaceOnUse" x1="0" y1="378" x2="0" y2="512.5"><stop offset="0" stop-color="#7f9900"/><stop offset=".1" stop-color="#829900"/><stop offset=".2" stop-color="#869900"/><stop offset=".3" stop-color="#8a9900"/><stop offset=".4" stop-color="#8e9900"/><stop offset=".5" stop-color="#929902"/><stop offset=".6" stop-color="#969903"/><stop offset=".7" stop-color="#999805"/><stop offset=".8" stop-color="#999307"/><stop offset=".9" stop-color="#998f09"/><stop offset="1" stop-color="#998b0b"/></linearGradient>
<rect x="1421" y="378" width="5" height="134.5" fill="url(#ino1421)"/>
<linearGradient id="ino1426" gradientUnits="userSpaceOnUse" x1="0" y1="378" x2="0" y2="512.5"><stop offset="0" stop-color="#809900"/><stop offset=".1" stop-color="#849900"/><stop offset=".2" stop-color="#889900"/><stop offset=".3" stop-color="#8c9900"/><stop offset=".4" stop-color="#909900"/><stop offset=".5" stop-color="#949901"/><stop offset=".6" stop-color="#989903"/><stop offset=".7" stop-color="#999605"/><stop offset=".8" stop-color="#999207"/><stop offset=".9" stop-color="#998d09"/><stop offset="1" stop-color="#99890a"/></linearGradient>
<rect x="1426" y="378" width="5" height="134.5" fill="url(#ino1426)"/>
<linearGradient id="ino1431" gradientUnits="userSpaceOnUse" x1="0" y1="378" x2="0" y2="512.5"><stop offset="0" stop-color="#829900"/><stop offset=".1" stop-color="#869900"/><stop offset=".2" stop-color="#899900"/><stop offset=".3" stop-color="#8d9900"/><stop offset=".4" stop-color="#919900"/><stop offset=".5" stop-color="#959901"/><stop offset=".6" stop-color="#999803"/><stop offset=".7" stop-color="#999405"/><stop offset=".8" stop-color="#999006"/><stop offset=".9" stop-color="#998c08"/><stop offset="1" stop-color="#99880a"/></linearGradient>
<rect x="1431" y="378" width="5" height="134.5" fill="url(#ino1431)"/>
<linearGradient id="ino1436" gradientUnits="userSpaceOnUse" x1="0" y1="378" x2="0" y2="512.5"><stop offset="0" stop-color="#849900"/><stop offset=".1" stop-color="#879900"/><stop offset=".2" stop-color="#8b9900"/><stop offset=".3" stop-color="#8f9900"/><stop offset=".4" stop-color="#939900"/><stop offset=".5" stop-color="#979900"/><stop offset=".6" stop-color="#999702"/><stop offset=".7" stop-color="#999204"/><stop offset=".8" stop-color="#998e06"/><stop offset=".9" stop-color="#998a08"/><stop offset="1" stop-color="#998609"/></linearGradient>
<rect x="1436" y="378" width="5" height="134.5" fill="url(#ino1436)"/>
<linearGradient id="ino1441" gradientUnits="userSpaceOnUse" x1="0" y1="378" x2="0" y2="512.5"><stop offset="0" stop-color="#859900"/><stop offset=".1" stop-color="#899900"/><stop offset=".2" stop-color="#8d9900"/><stop offset=".3" stop-color="#919900"/><stop offset=".4" stop-color="#959900"/><stop offset=".5" stop-color="#999900"/><stop offset=".6" stop-color="#999502"/><stop offset=".7" stop-color="#999104"/><stop offset=".8" stop-color="#998d06"/><stop offset=".9" stop-color="#998907"/><stop offset="1" stop-color="#998509"/></linearGradient>
<rect x="1441" y="378" width="5" height="134.5" fill="url(#ino1441)"/>
<linearGradient id="ino1446" gradientUnits="userSpaceOnUse" x1="0" y1="378" x2="0" y2="512.5"><stop offset="0" stop-color="#879900"/><stop offset=".1" stop-color="#8a9900"/><stop offset=".2" stop-color="#8e9900"/><stop offset=".3" stop-color="#929900"/><stop offset=".4" stop-color="#969900"/><stop offset=".5" stop-color="#999700"/><stop offset=".6" stop-color="#999302"/><stop offset=".7" stop-color="#998f03"/><stop offset=".8" stop-color="#998b05"/><stop offset=".9" stop-color="#998707"/><stop offset="1" stop-color="#998309"/></linearGradient>
<rect x="1446" y="378" width="5" height="134.5" fill="url(#ino1446)"/>
<linearGradient id="ino1451" gradientUnits="userSpaceOnUse" x1="0" y1="378" x2="0" y2="512.5"><stop offset="0" stop-color="#889900"/><stop offset=".1" stop-color="#8c9900"/><stop offset=".2" stop-color="#909900"/><stop offset=".3" stop-color="#949900"/><stop offset=".4" stop-color="#989900"/><stop offset=".5" stop-color="#999600"/><stop offset=".6" stop-color="#999101"/><stop offset=".7" stop-color="#998d03"/><stop offset=".8" stop-color="#998905"/><stop offset=".9" stop-color="#998506"/><stop offset="1" stop-color="#998208"/></linearGradient>
<rect x="1451" y="378" width="5" height="134.5" fill="url(#ino1451)"/>
<linearGradient id="ino1456" gradientUnits="userSpaceOnUse" x1="0" y1="378" x2="0" y2="512.5"><stop offset="0" stop-color="#8a9900"/><stop offset=".1" stop-color="#8e9900"/><stop offset=".2" stop-color="#929900"/><stop offset=".3" stop-color="#969900"/><stop offset=".4" stop-color="#999800"/><stop offset=".5" stop-color="#999400"/><stop offset=".6" stop-color="#999001"/><stop offset=".7" stop-color="#998c03"/><stop offset=".8" stop-color="#998804"/><stop offset=".9" stop-color="#998406"/><stop offset="1" stop-color="#998008"/></linearGradient>
<rect x="1456" y="378" width="5" height="134.5" fill="url(#ino1456)"/>
<linearGradient id="ino1461" gradientUnits="userSpaceOnUse" x1="0" y1="378" x2="0" y2="512.5"><stop offset="0" stop-color="#8c9900"/><stop offset=".1" stop-color="#8f9900"/><stop offset=".2" stop-color="#939900"/><stop offset=".3" stop-color="#979900"/><stop offset=".4" stop-color="#999600"/><stop offset=".5" stop-color="#999200"/><stop offset=".6" stop-color="#998e00"/><stop offset=".7" stop-color="#998a02"/><stop offset=".8" stop-color="#998604"/><stop offset=".9" stop-color="#998306"/><stop offset="1" stop-color="#997f07"/></linearGradient>
<rect x="1461" y="378" width="5" height="134.5" fill="url(#ino1461)"/>
<linearGradient id="ino1466" gradientUnits="userSpaceOnUse" x1="0" y1="378" x2="0" y2="512.5"><stop offset="0" stop-color="#8d9900"/><stop offset=".1" stop-color="#919900"/><stop offset=".2" stop-color="#959900"/><stop offset=".3" stop-color="#999900"/><stop offset=".4" stop-color="#999500"/><stop offset=".5" stop-color="#999100"/><stop offset=".6" stop-color="#998d00"/><stop offset=".7" stop-color="#998902"/><stop offset=".8" stop-color="#998504"/><stop offset=".9" stop-color="#998105"/><stop offset="1" stop-color="#997d07"/></linearGradient>
<rect x="1466" y="378" width="5" height="134.5" fill="url(#ino1466)"/>
<linearGradient id="ino1471" gradientUnits="userSpaceOnUse" x1="0" y1="378" x2="0" y2="512.5"><stop offset="0" stop-color="#8f9900"/><stop offset=".1" stop-color="#939900"/><stop offset=".2" stop-color="#979900"/><stop offset=".3" stop-color="#999700"/><stop offset=".4" stop-color="#999300"/><stop offset=".5" stop-color="#998f00"/><stop offset=".6" stop-color="#998b00"/><stop offset=".7" stop-color="#998701"/><stop offset=".8" stop-color="#998303"/><stop offset=".9" stop-color="#998005"/><stop offset="1" stop-color="#997c07"/></linearGradient>
<rect x="1471" y="378" width="5" height="134.5" fill="url(#ino1471)"/>
<linearGradient id="ino1476" gradientUnits="userSpaceOnUse" x1="0" y1="378" x2="0" y2="512.5"><stop offset="0" stop-color="#909900"/><stop offset=".1" stop-color="#949900"/><stop offset=".2" stop-color="#989900"/><stop offset=".3" stop-color="#999500"/><stop offset=".4" stop-color="#999100"/><stop offset=".5" stop-color="#998d00"/><stop offset=".6" stop-color="#998a00"/><stop offset=".7" stop-color="#998601"/><stop offset=".8" stop-color="#998203"/><stop offset=".9" stop-color="#997e05"/><stop offset="1" stop-color="#997b06"/></linearGradient>
<rect x="1476" y="378" width="5" height="134.5" fill="url(#ino1476)"/>
<linearGradient id="ino1481" gradientUnits="userSpaceOnUse" x1="0" y1="378" x2="0" y2="512.5"><stop offset="0" stop-color="#929900"/><stop offset=".1" stop-color="#969900"/><stop offset=".2" stop-color="#999800"/><stop offset=".3" stop-color="#999400"/><stop offset=".4" stop-color="#999000"/><stop offset=".5" stop-color="#998c00"/><stop offset=".6" stop-color="#998800"/><stop offset=".7" stop-color="#998401"/><stop offset=".8" stop-color="#998102"/><stop offset=".9" stop-color="#997d04"/><stop offset="1" stop-color="#997906"/></linearGradient>
<rect x="1481" y="378" width="5" height="134.5" fill="url(#ino1481)"/>
<linearGradient id="ino1486" gradientUnits="userSpaceOnUse" x1="0" y1="378" x2="0" y2="512.5"><stop offset="0" stop-color="#949900"/><stop offset=".1" stop-color="#989900"/><stop offset=".2" stop-color="#999600"/><stop offset=".3" stop-color="#999200"/><stop offset=".4" stop-color="#998e00"/><stop offset=".5" stop-color="#998a00"/><stop offset=".6" stop-color="#998700"/><stop offset=".7" stop-color="#998300"/><stop offset=".8" stop-color="#997f02"/><stop offset=".9" stop-color="#997c04"/><stop offset="1" stop-color="#997805"/></linearGradient>
<rect x="1486" y="378" width="5" height="134.5" fill="url(#ino1486)"/>
<linearGradient id="ino1491" gradientUnits="userSpaceOnUse" x1="0" y1="378" x2="0" y2="512.5"><stop offset="0" stop-color="#959900"/><stop offset=".1" stop-color="#999900"/><stop offset=".2" stop-color="#999500"/><stop offset=".3" stop-color="#999100"/><stop offset=".4" stop-color="#998d00"/><stop offset=".5" stop-color="#998900"/><stop offset=".6" stop-color="#998500"/><stop offset=".7" stop-color="#998100"/><stop offset=".8" stop-color="#997e02"/><stop offset=".9" stop-color="#997a03"/><stop offset="1" stop-color="#997705"/></linearGradient>
<rect x="1491" y="378" width="5" height="134.5" fill="url(#ino1491)"/>
<linearGradient id="ino1496" gradientUnits="userSpaceOnUse" x1="0" y1="378" x2="0" y2="512.5"><stop offset="0" stop-color="#979900"/><stop offset=".1" stop-color="#999700"/><stop offset=".2" stop-color="#999300"/><stop offset=".3" stop-color="#998f00"/><stop offset=".4" stop-color="#998b00"/><stop offset=".5" stop-color="#998700"/><stop offset=".6" stop-color="#998400"/><stop offset=".7" stop-color="#998000"/><stop offset=".8" stop-color="#997c01"/><stop offset=".9" stop-color="#997903"/><stop offset="1" stop-color="#997505"/></linearGradient>
<rect x="1496" y="378" width="5" height="134.5" fill="url(#ino1496)"/>
<linearGradient id="ino1501" gradientUnits="userSpaceOnUse" x1="0" y1="378" x2="0" y2="512.5"><stop offset="0" stop-color="#999900"/><stop offset=".1" stop-color="#999500"/><stop offset=".2" stop-color="#999100"/><stop offset=".3" stop-color="#998d00"/><stop offset=".4" stop-color="#998a00"/><stop offset=".5" stop-color="#998600"/><stop offset=".6" stop-color="#998200"/><stop offset=".7" stop-color="#997f00"/><stop offset=".8" stop-color="#997b01"/><stop offset=".9" stop-color="#997803"/><stop offset="1" stop-color="#997404"/></linearGradient>
<rect x="1501" y="378" width="5" height="134.5" fill="url(#ino1501)"/>
<linearGradient id="ino1506" gradientUnits="userSpaceOnUse" x1="0" y1="378" x2="0" y2="512.5"><stop offset="0" stop-color="#999800"/><stop offset=".1" stop-color="#999400"/><stop offset=".2" stop-color="#999000"/><stop offset=".3" stop-color="#998c00"/><stop offset=".4" stop-color="#998800"/><stop offset=".5" stop-color="#998400"/><stop offset=".6" stop-color="#998100"/><stop offset=".7" stop-color="#997d00"/><stop offset=".8" stop-color="#997a01"/><stop offset=".9" stop-color="#997602"/><stop offset="1" stop-color="#997304"/></linearGradient>
<rect x="1506" y="378" width="5" height="134.5" fill="url(#ino1506)"/>
<linearGradient id="ino1511" gradientUnits="userSpaceOnUse" x1="0" y1="378" x2="0" y2="512.5"><stop offset="0" stop-color="#999600"/><stop offset=".1" stop-color="#999200"/><stop offset=".2" stop-color="#998e00"/><stop offset=".3" stop-color="#998a00"/><stop offset=".4" stop-color="#998700"/><stop offset=".5" stop-color="#998300"/><stop offset=".6" stop-color="#998000"/><stop offset=".7" stop-color="#997c00"/><stop offset=".8" stop-color="#997900"/><stop offset=".9" stop-color="#997502"/><stop offset="1" stop-color="#997204"/></linearGradient>
<rect x="1511" y="378" width="5" height="134.5" fill="url(#ino1511)"/>
<linearGradient id="ino1516" gradientUnits="userSpaceOnUse" x1="0" y1="378" x2="0" y2="512.5"><stop offset="0" stop-color="#999400"/><stop offset=".1" stop-color="#999100"/><stop offset=".2" stop-color="#998d00"/><stop offset=".3" stop-color="#998900"/><stop offset=".4" stop-color="#998500"/><stop offset=".5" stop-color="#998200"/><stop offset=".6" stop-color="#997e00"/><stop offset=".7" stop-color="#997b00"/><stop offset=".8" stop-color="#997700"/><stop offset=".9" stop-color="#997402"/><stop offset="1" stop-color="#997103"/></linearGradient>
<rect x="1516" y="378" width="5" height="134.5" fill="url(#ino1516)"/>
<linearGradient id="ino1521" gradientUnits="userSpaceOnUse" x1="0" y1="378" x2="0" y2="512.5"><stop offset="0" stop-color="#999300"/><stop offset=".1" stop-color="#998f00"/><stop offset=".2" stop-color="#998b00"/><stop offset=".3" stop-color="#998800"/><stop offset=".4" stop-color="#998400"/><stop offset=".5" stop-color="#998000"/><stop offset=".6" stop-color="#997d00"/><stop offset=".7" stop-color="#997900"/><stop offset=".8" stop-color="#997600"/><stop offset=".9" stop-color="#997301"/><stop offset="1" stop-color="#996f03"/></linearGradient>
<rect x="1521" y="378" width="5" height="134.5" fill="url(#ino1521)"/>
<linearGradient id="ino1526" gradientUnits="userSpaceOnUse" x1="0" y1="378" x2="0" y2="512.5"><stop offset="0" stop-color="#999100"/><stop offset=".1" stop-color="#998e00"/><stop offset=".2" stop-color="#998a00"/><stop offset=".3" stop-color="#998600"/><stop offset=".4" stop-color="#998300"/><stop offset=".5" stop-color="#997f00"/><stop offset=".6" stop-color="#997c00"/><stop offset=".7" stop-color="#997800"/><stop offset=".8" stop-color="#997500"/><stop offset=".9" stop-color="#997101"/><stop offset="1" stop-color="#996e03"/></linearGradient>
<rect x="1526" y="378" width="5" height="134.5" fill="url(#ino1526)"/>
<linearGradient id="ino1531" gradientUnits="userSpaceOnUse" x1="0" y1="378" x2="0" y2="512.5"><stop offset="0" stop-color="#999000"/><stop offset=".1" stop-color="#998c00"/><stop offset=".2" stop-color="#998800"/><stop offset=".3" stop-color="#998500"/><stop offset=".4" stop-color="#998100"/><stop offset=".5" stop-color="#997e00"/><stop offset=".6" stop-color="#997a00"/><stop offset=".7" stop-color="#997700"/><stop offset=".8" stop-color="#997400"/><stop offset=".9" stop-color="#997001"/><stop offset="1" stop-color="#996d02"/></linearGradient>
<rect x="1531" y="378" width="5" height="134.5" fill="url(#ino1531)"/>
<linearGradient id="ino1536" gradientUnits="userSpaceOnUse" x1="0" y1="378" x2="0" y2="512.5"><stop offset="0" stop-color="#998e00"/><stop offset=".1" stop-color="#998b00"/><stop offset=".2" stop-color="#998700"/><stop offset=".3" stop-color="#998300"/><stop offset=".4" stop-color="#998000"/><stop offset=".5" stop-color="#997c00"/><stop offset=".6" stop-color="#997900"/><stop offset=".7" stop-color="#997600"/><stop offset=".8" stop-color="#997200"/><stop offset=".9" stop-color="#996f00"/><stop offset="1" stop-color="#996c02"/></linearGradient>
<rect x="1536" y="378" width="5" height="134.5" fill="url(#ino1536)"/>
<linearGradient id="ino1541" gradientUnits="userSpaceOnUse" x1="0" y1="378" x2="0" y2="512.5"><stop offset="0" stop-color="#998d00"/><stop offset=".1" stop-color="#998900"/><stop offset=".2" stop-color="#998600"/><stop offset=".3" stop-color="#998200"/><stop offset=".4" stop-color="#997f00"/><stop offset=".5" stop-color="#997b00"/><stop offset=".6" stop-color="#997800"/><stop offset=".7" stop-color="#997400"/><stop offset=".8" stop-color="#997100"/><stop offset=".9" stop-color="#996e00"/><stop offset="1" stop-color="#996b02"/></linearGradient>
<rect x="1541" y="378" width="5" height="134.5" fill="url(#ino1541)"/>
</g></g>
<g clip-path="url(#insclip)"><g clip-path="url(#insin)"><g shape-rendering="crispEdges">
<linearGradient id="ini1346" gradientUnits="userSpaceOnUse" x1="0" y1="378" x2="0" y2="512.5"><stop offset="0" stop-color="#aeff00"/><stop offset=".1" stop-color="#b3ff00"/><stop offset=".2" stop-color="#b8ff02"/><stop offset=".3" stop-color="#beff05"/><stop offset=".4" stop-color="#c3ff08"/><stop offset=".5" stop-color="#c9ff0b"/><stop offset=".6" stop-color="#cfff0f"/><stop offset=".7" stop-color="#d6ff12"/><stop offset=".8" stop-color="#dcff16"/><stop offset=".9" stop-color="#e3ff19"/><stop offset="1" stop-color="#eaff1d"/></linearGradient>
<rect x="1346" y="378" width="5" height="134.5" fill="url(#ini1346)"/>
<linearGradient id="ini1351" gradientUnits="userSpaceOnUse" x1="0" y1="378" x2="0" y2="512.5"><stop offset="0" stop-color="#b0ff00"/><stop offset=".1" stop-color="#b6ff00"/><stop offset=".2" stop-color="#bbff02"/><stop offset=".3" stop-color="#c0ff05"/><stop offset=".4" stop-color="#c6ff08"/><stop offset=".5" stop-color="#ccff0b"/><stop offset=".6" stop-color="#d2ff0e"/><stop offset=".7" stop-color="#d8ff11"/><stop offset=".8" stop-color="#dfff15"/><stop offset=".9" stop-color="#e6ff19"/><stop offset="1" stop-color="#edff1c"/></linearGradient>
<rect x="1351" y="378" width="5" height="134.5" fill="url(#ini1351)"/>
<linearGradient id="ini1356" gradientUnits="userSpaceOnUse" x1="0" y1="378" x2="0" y2="512.5"><stop offset="0" stop-color="#b3ff00"/><stop offset=".1" stop-color="#b8ff00"/><stop offset=".2" stop-color="#bdff01"/><stop offset=".3" stop-color="#c3ff04"/><stop offset=".4" stop-color="#c9ff07"/><stop offset=".5" stop-color="#cfff0a"/><stop offset=".6" stop-color="#d5ff0e"/><stop offset=".7" stop-color="#dbff11"/><stop offset=".8" stop-color="#e2ff14"/><stop offset=".9" stop-color="#e9ff18"/><stop offset="1" stop-color="#f0ff1c"/></linearGradient>
<rect x="1356" y="378" width="5" height="134.5" fill="url(#ini1356)"/>
<linearGradient id="ini1361" gradientUnits="userSpaceOnUse" x1="0" y1="378" x2="0" y2="512.5"><stop offset="0" stop-color="#b5ff00"/><stop offset=".1" stop-color="#bbff00"/><stop offset=".2" stop-color="#c0ff01"/><stop offset=".3" stop-color="#c6ff04"/><stop offset=".4" stop-color="#cbff07"/><stop offset=".5" stop-color="#d1ff0a"/><stop offset=".6" stop-color="#d8ff0d"/><stop offset=".7" stop-color="#deff10"/><stop offset=".8" stop-color="#e5ff14"/><stop offset=".9" stop-color="#ecff17"/><stop offset="1" stop-color="#f3ff1b"/></linearGradient>
<rect x="1361" y="378" width="5" height="134.5" fill="url(#ini1361)"/>
<linearGradient id="ini1366" gradientUnits="userSpaceOnUse" x1="0" y1="378" x2="0" y2="512.5"><stop offset="0" stop-color="#b8ff00"/><stop offset=".1" stop-color="#bdff00"/><stop offset=".2" stop-color="#c3ff00"/><stop offset=".3" stop-color="#c8ff03"/><stop offset=".4" stop-color="#ceff06"/><stop offset=".5" stop-color="#d4ff09"/><stop offset=".6" stop-color="#daff0c"/><stop offset=".7" stop-color="#e1ff10"/><stop offset=".8" stop-color="#e8ff13"/><stop offset=".9" stop-color="#efff17"/><stop offset="1" stop-color="#f6ff1b"/></linearGradient>
<rect x="1366" y="378" width="5" height="134.5" fill="url(#ini1366)"/>
<linearGradient id="ini1371" gradientUnits="userSpaceOnUse" x1="0" y1="378" x2="0" y2="512.5"><stop offset="0" stop-color="#baff00"/><stop offset=".1" stop-color="#c0ff00"/><stop offset=".2" stop-color="#c5ff00"/><stop offset=".3" stop-color="#cbff02"/><stop offset=".4" stop-color="#d1ff05"/><stop offset=".5" stop-color="#d7ff09"/><stop offset=".6" stop-color="#ddff0c"/><stop offset=".7" stop-color="#e4ff0f"/><stop offset=".8" stop-color="#ebff13"/><stop offset=".9" stop-color="#f2ff16"/><stop offset="1" stop-color="#f9ff1a"/></linearGradient>
<rect x="1371" y="378" width="5" height="134.5" fill="url(#ini1371)"/>
<linearGradient id="ini1376" gradientUnits="userSpaceOnUse" x1="0" y1="378" x2="0" y2="512.5"><stop offset="0" stop-color="#bdff00"/><stop offset=".1" stop-color="#c2ff00"/><stop offset=".2" stop-color="#c8ff00"/><stop offset=".3" stop-color="#cdff02"/><stop offset=".4" stop-color="#d3ff05"/><stop offset=".5" stop-color="#daff08"/><stop offset=".6" stop-color="#e0ff0b"/><stop offset=".7" stop-color="#e7ff0f"/><stop offset=".8" stop-color="#eeff12"/><stop offset=".9" stop-color="#f5ff16"/><stop offset="1" stop-color="#fcff19"/></linearGradient>
<rect x="1376" y="378" width="5" height="134.5" fill="url(#ini1376)"/>
<linearGradient id="ini1381" gradientUnits="userSpaceOnUse" x1="0" y1="378" x2="0" y2="512.5"><stop offset="0" stop-color="#bfff00"/><stop offset=".1" stop-color="#c5ff00"/><stop offset=".2" stop-color="#caff00"/><stop offset=".3" stop-color="#d0ff01"/><stop offset=".4" stop-color="#d6ff04"/><stop offset=".5" stop-color="#dcff07"/><stop offset=".6" stop-color="#e3ff0b"/><stop offset=".7" stop-color="#eaff0e"/><stop offset=".8" stop-color="#f1ff11"/><stop offset=".9" stop-color="#f8ff15"/><stop offset="1" stop-color="#ffff19"/></linearGradient>
<rect x="1381" y="378" width="5" height="134.5" fill="url(#ini1381)"/>
<linearGradient id="ini1386" gradientUnits="userSpaceOnUse" x1="0" y1="378" x2="0" y2="512.5"><stop offset="0" stop-color="#c2ff00"/><stop offset=".1" stop-color="#c7ff00"/><stop offset=".2" stop-color="#cdff00"/><stop offset=".3" stop-color="#d3ff01"/><stop offset=".4" stop-color="#d9ff04"/><stop offset=".5" stop-color="#dfff07"/><stop offset=".6" stop-color="#e6ff0a"/><stop offset=".7" stop-color="#edff0d"/><stop offset=".8" stop-color="#f4ff11"/><stop offset=".9" stop-color="#fbff14"/><stop offset="1" stop-color="#fffc18"/></linearGradient>
<rect x="1386" y="378" width="5" height="134.5" fill="url(#ini1386)"/>
<linearGradient id="ini1391" gradientUnits="userSpaceOnUse" x1="0" y1="378" x2="0" y2="512.5"><stop offset="0" stop-color="#c4ff00"/><stop offset=".1" stop-color="#caff00"/><stop offset=".2" stop-color="#d0ff00"/><stop offset=".3" stop-color="#d5ff00"/><stop offset=".4" stop-color="#dcff03"/><stop offset=".5" stop-color="#e2ff06"/><stop offset=".6" stop-color="#e9ff09"/><stop offset=".7" stop-color="#efff0d"/><stop offset=".8" stop-color="#f7ff10"/><stop offset=".9" stop-color="#feff14"/><stop offset="1" stop-color="#fff917"/></linearGradient>
<rect x="1391" y="378" width="5" height="134.5" fill="url(#ini1391)"/>
<linearGradient id="ini1396" gradientUnits="userSpaceOnUse" x1="0" y1="378" x2="0" y2="512.5"><stop offset="0" stop-color="#c7ff00"/><stop offset=".1" stop-color="#ccff00"/><stop offset=".2" stop-color="#d2ff00"/><stop offset=".3" stop-color="#d8ff00"/><stop offset=".4" stop-color="#deff02"/><stop offset=".5" stop-color="#e5ff06"/><stop offset=".6" stop-color="#ecff09"/><stop offset=".7" stop-color="#f2ff0c"/><stop offset=".8" stop-color="#faff10"/><stop offset=".9" stop-color="#fffd13"/><stop offset="1" stop-color="#fff616"/></linearGradient>
<rect x="1396" y="378" width="5" height="134.5" fill="url(#ini1396)"/>
<linearGradient id="ini1401" gradientUnits="userSpaceOnUse" x1="0" y1="378" x2="0" y2="512.5"><stop offset="0" stop-color="#c9ff00"/><stop offset=".1" stop-color="#cfff00"/><stop offset=".2" stop-color="#d5ff00"/><stop offset=".3" stop-color="#dbff00"/><stop offset=".4" stop-color="#e1ff02"/><stop offset=".5" stop-color="#e8ff05"/><stop offset=".6" stop-color="#eeff08"/><stop offset=".7" stop-color="#f5ff0c"/><stop offset=".8" stop-color="#fdff0f"/><stop offset=".9" stop-color="#fffa12"/><stop offset="1" stop-color="#fff315"/></linearGradient>
<rect x="1401" y="378" width="5" height="134.5" fill="url(#ini1401)"/>
<linearGradient id="ini1406" gradientUnits="userSpaceOnUse" x1="0" y1="378" x2="0" y2="512.5"><stop offset="0" stop-color="#ccff00"/><stop offset=".1" stop-color="#d2ff00"/><stop offset=".2" stop-color="#d7ff00"/><stop offset=".3" stop-color="#deff00"/><stop offset=".4" stop-color="#e4ff01"/><stop offset=".5" stop-color="#ebff04"/><stop offset=".6" stop-color="#f1ff08"/><stop offset=".7" stop-color="#f8ff0b"/><stop offset=".8" stop-color="#fffe0e"/><stop offset=".9" stop-color="#fff711"/><stop offset="1" stop-color="#fff014"/></linearGradient>
<rect x="1406" y="378" width="5" height="134.5" fill="url(#ini1406)"/>
<linearGradient id="ini1411" gradientUnits="userSpaceOnUse" x1="0" y1="378" x2="0" y2="512.5"><stop offset="0" stop-color="#ceff00"/><stop offset=".1" stop-color="#d4ff00"/><stop offset=".2" stop-color="#daff00"/><stop offset=".3" stop-color="#e0ff00"/><stop offset=".4" stop-color="#e7ff01"/><stop offset=".5" stop-color="#edff04"/><stop offset=".6" stop-color="#f4ff07"/><stop offset=".7" stop-color="#fbff0a"/><stop offset=".8" stop-color="#fffb0e"/><stop offset=".9" stop-color="#fff411"/><stop offset="1" stop-color="#ffed14"/></linearGradient>
<rect x="1411" y="378" width="5" height="134.5" fill="url(#ini1411)"/>
<linearGradient id="ini1416" gradientUnits="userSpaceOnUse" x1="0" y1="378" x2="0" y2="512.5"><stop offset="0" stop-color="#d1ff00"/><stop offset=".1" stop-color="#d7ff00"/><stop offset=".2" stop-color="#ddff00"/><stop offset=".3" stop-color="#e3ff00"/><stop offset=".4" stop-color="#eaff00"/><stop offset=".5" stop-color="#f0ff03"/><stop offset=".6" stop-color="#f7ff06"/><stop offset=".7" stop-color="#feff0a"/><stop offset=".8" stop-color="#fff80d"/><stop offset=".9" stop-color="#fff110"/><stop offset="1" stop-color="#ffea13"/></linearGradient>
<rect x="1416" y="378" width="5" height="134.5" fill="url(#ini1416)"/>
<linearGradient id="ini1421" gradientUnits="userSpaceOnUse" x1="0" y1="378" x2="0" y2="512.5"><stop offset="0" stop-color="#d4ff00"/><stop offset=".1" stop-color="#d9ff00"/><stop offset=".2" stop-color="#e0ff00"/><stop offset=".3" stop-color="#e6ff00"/><stop offset=".4" stop-color="#ecff00"/><stop offset=".5" stop-color="#f3ff03"/><stop offset=".6" stop-color="#faff06"/><stop offset=".7" stop-color="#fffd09"/><stop offset=".8" stop-color="#fff50c"/><stop offset=".9" stop-color="#ffee0f"/><stop offset="1" stop-color="#ffe712"/></linearGradient>
<rect x="1421" y="378" width="5" height="134.5" fill="url(#ini1421)"/>
<linearGradient id="ini1426" gradientUnits="userSpaceOnUse" x1="0" y1="378" x2="0" y2="512.5"><stop offset="0" stop-color="#d6ff00"/><stop offset=".1" stop-color="#dcff00"/><stop offset=".2" stop-color="#e2ff00"/><stop offset=".3" stop-color="#e9ff00"/><stop offset=".4" stop-color="#efff00"/><stop offset=".5" stop-color="#f6ff02"/><stop offset=".6" stop-color="#fdff05"/><stop offset=".7" stop-color="#fffa08"/><stop offset=".8" stop-color="#fff30b"/><stop offset=".9" stop-color="#ffec0e"/><stop offset="1" stop-color="#ffe511"/></linearGradient>
<rect x="1426" y="378" width="5" height="134.5" fill="url(#ini1426)"/>
<linearGradient id="ini1431" gradientUnits="userSpaceOnUse" x1="0" y1="378" x2="0" y2="512.5"><stop offset="0" stop-color="#d9ff00"/><stop offset=".1" stop-color="#dfff00"/><stop offset=".2" stop-color="#e5ff00"/><stop offset=".3" stop-color="#ebff00"/><stop offset=".4" stop-color="#f2ff00"/><stop offset=".5" stop-color="#f9ff01"/><stop offset=".6" stop-color="#fffe05"/><stop offset=".7" stop-color="#fff708"/><stop offset=".8" stop-color="#fff00b"/><stop offset=".9" stop-color="#ffe90e"/><stop offset="1" stop-color="#ffe211"/></linearGradient>
<rect x="1431" y="378" width="5" height="134.5" fill="url(#ini1431)"/>
<linearGradient id="ini1436" gradientUnits="userSpaceOnUse" x1="0" y1="378" x2="0" y2="512.5"><stop offset="0" stop-color="#dbff00"/><stop offset=".1" stop-color="#e1ff00"/><stop offset=".2" stop-color="#e8ff00"/><stop offset=".3" stop-color="#eeff00"/><stop offset=".4" stop-color="#f5ff00"/><stop offset=".5" stop-color="#fcff01"/><stop offset=".6" stop-color="#fffb04"/><stop offset=".7" stop-color="#fff407"/><stop offset=".8" stop-color="#ffed0a"/><stop offset=".9" stop-color="#ffe60d"/><stop offset="1" stop-color="#ffe010"/></linearGradient>
<rect x="1436" y="378" width="5" height="134.5" fill="url(#ini1436)"/>
<linearGradient id="ini1441" gradientUnits="userSpaceOnUse" x1="0" y1="378" x2="0" y2="512.5"><stop offset="0" stop-color="#deff00"/><stop offset=".1" stop-color="#e4ff00"/><stop offset=".2" stop-color="#eaff00"/><stop offset=".3" stop-color="#f1ff00"/><stop offset=".4" stop-color="#f8ff00"/><stop offset=".5" stop-color="#ffff00"/><stop offset=".6" stop-color="#fff803"/><stop offset=".7" stop-color="#fff106"/><stop offset=".8" stop-color="#ffea09"/><stop offset=".9" stop-color="#ffe40c"/><stop offset="1" stop-color="#ffdd0f"/></linearGradient>
<rect x="1441" y="378" width="5" height="134.5" fill="url(#ini1441)"/>
<linearGradient id="ini1446" gradientUnits="userSpaceOnUse" x1="0" y1="378" x2="0" y2="512.5"><stop offset="0" stop-color="#e1ff00"/><stop offset=".1" stop-color="#e7ff00"/><stop offset=".2" stop-color="#edff00"/><stop offset=".3" stop-color="#f4ff00"/><stop offset=".4" stop-color="#fbff00"/><stop offset=".5" stop-color="#fffc00"/><stop offset=".6" stop-color="#fff503"/><stop offset=".7" stop-color="#ffee06"/><stop offset=".8" stop-color="#ffe809"/><stop offset=".9" stop-color="#ffe10c"/><stop offset="1" stop-color="#ffdb0e"/></linearGradient>
<rect x="1446" y="378" width="5" height="134.5" fill="url(#ini1446)"/>
<linearGradient id="ini1451" gradientUnits="userSpaceOnUse" x1="0" y1="378" x2="0" y2="512.5"><stop offset="0" stop-color="#e3ff00"/><stop offset=".1" stop-color="#e9ff00"/><stop offset=".2" stop-color="#f0ff00"/><stop offset=".3" stop-color="#f7ff00"/><stop offset=".4" stop-color="#feff00"/><stop offset=".5" stop-color="#fff900"/><stop offset=".6" stop-color="#fff202"/><stop offset=".7" stop-color="#ffec05"/><stop offset=".8" stop-color="#ffe508"/><stop offset=".9" stop-color="#ffde0b"/><stop offset="1" stop-color="#ffd80e"/></linearGradient>
<rect x="1451" y="378" width="5" height="134.5" fill="url(#ini1451)"/>
<linearGradient id="ini1456" gradientUnits="userSpaceOnUse" x1="0" y1="378" x2="0" y2="512.5"><stop offset="0" stop-color="#e6ff00"/><stop offset=".1" stop-color="#ecff00"/><stop offset=".2" stop-color="#f3ff00"/><stop offset=".3" stop-color="#f9ff00"/><stop offset=".4" stop-color="#fffe00"/><stop offset=".5" stop-color="#fff700"/><stop offset=".6" stop-color="#fff001"/><stop offset=".7" stop-color="#ffe904"/><stop offset=".8" stop-color="#ffe207"/><stop offset=".9" stop-color="#ffdc0a"/><stop offset="1" stop-color="#ffd60d"/></linearGradient>
<rect x="1456" y="378" width="5" height="134.5" fill="url(#ini1456)"/>
<linearGradient id="ini1461" gradientUnits="userSpaceOnUse" x1="0" y1="378" x2="0" y2="512.5"><stop offset="0" stop-color="#e9ff00"/><stop offset=".1" stop-color="#efff00"/><stop offset=".2" stop-color="#f6ff00"/><stop offset=".3" stop-color="#fcff00"/><stop offset=".4" stop-color="#fffb00"/><stop offset=".5" stop-color="#fff400"/><stop offset=".6" stop-color="#ffed01"/><stop offset=".7" stop-color="#ffe604"/><stop offset=".8" stop-color="#ffe007"/><stop offset=".9" stop-color="#ffda09"/><stop offset="1" stop-color="#ffd30c"/></linearGradient>
<rect x="1461" y="378" width="5" height="134.5" fill="url(#ini1461)"/>
<linearGradient id="ini1466" gradientUnits="userSpaceOnUse" x1="0" y1="378" x2="0" y2="512.5"><stop offset="0" stop-color="#ebff00"/><stop offset=".1" stop-color="#f2ff00"/><stop offset=".2" stop-color="#f8ff00"/><stop offset=".3" stop-color="#ffff00"/><stop offset=".4" stop-color="#fff800"/><stop offset=".5" stop-color="#fff100"/><stop offset=".6" stop-color="#ffea00"/><stop offset=".7" stop-color="#ffe403"/><stop offset=".8" stop-color="#ffdd06"/><stop offset=".9" stop-color="#ffd709"/><stop offset="1" stop-color="#ffd10c"/></linearGradient>
<rect x="1466" y="378" width="5" height="134.5" fill="url(#ini1466)"/>
<linearGradient id="ini1471" gradientUnits="userSpaceOnUse" x1="0" y1="378" x2="0" y2="512.5"><stop offset="0" stop-color="#eeff00"/><stop offset=".1" stop-color="#f4ff00"/><stop offset=".2" stop-color="#fbff00"/><stop offset=".3" stop-color="#fffc00"/><stop offset=".4" stop-color="#fff500"/><stop offset=".5" stop-color="#ffee00"/><stop offset=".6" stop-color="#ffe800"/><stop offset=".7" stop-color="#ffe102"/><stop offset=".8" stop-color="#ffdb05"/><stop offset=".9" stop-color="#ffd508"/><stop offset="1" stop-color="#ffcf0b"/></linearGradient>
<rect x="1471" y="378" width="5" height="134.5" fill="url(#ini1471)"/>
<linearGradient id="ini1476" gradientUnits="userSpaceOnUse" x1="0" y1="378" x2="0" y2="512.5"><stop offset="0" stop-color="#f1ff00"/><stop offset=".1" stop-color="#f7ff00"/><stop offset=".2" stop-color="#feff00"/><stop offset=".3" stop-color="#fff900"/><stop offset=".4" stop-color="#fff200"/><stop offset=".5" stop-color="#ffec00"/><stop offset=".6" stop-color="#ffe500"/><stop offset=".7" stop-color="#ffdf02"/><stop offset=".8" stop-color="#ffd905"/><stop offset=".9" stop-color="#ffd208"/><stop offset="1" stop-color="#ffcc0a"/></linearGradient>
<rect x="1476" y="378" width="5" height="134.5" fill="url(#ini1476)"/>
<linearGradient id="ini1481" gradientUnits="userSpaceOnUse" x1="0" y1="378" x2="0" y2="512.5"><stop offset="0" stop-color="#f3ff00"/><stop offset=".1" stop-color="#faff00"/><stop offset=".2" stop-color="#fffd00"/><stop offset=".3" stop-color="#fff600"/><stop offset=".4" stop-color="#fff000"/><stop offset=".5" stop-color="#ffe900"/><stop offset=".6" stop-color="#ffe300"/><stop offset=".7" stop-color="#ffdc01"/><stop offset=".8" stop-color="#ffd604"/><stop offset=".9" stop-color="#ffd007"/><stop offset="1" stop-color="#ffca0a"/></linearGradient>
<rect x="1481" y="378" width="5" height="134.5" fill="url(#ini1481)"/>
<linearGradient id="ini1486" gradientUnits="userSpaceOnUse" x1="0" y1="378" x2="0" y2="512.5"><stop offset="0" stop-color="#f6ff00"/><stop offset=".1" stop-color="#fdff00"/><stop offset=".2" stop-color="#fffa00"/><stop offset=".3" stop-color="#fff400"/><stop offset=".4" stop-color="#ffed00"/><stop offset=".5" stop-color="#ffe700"/><stop offset=".6" stop-color="#ffe000"/><stop offset=".7" stop-color="#ffda01"/><stop offset=".8" stop-color="#ffd404"/><stop offset=".9" stop-color="#ffce06"/><stop offset="1" stop-color="#ffc809"/></linearGradient>
<rect x="1486" y="378" width="5" height="134.5" fill="url(#ini1486)"/>
<linearGradient id="ini1491" gradientUnits="userSpaceOnUse" x1="0" y1="378" x2="0" y2="512.5"><stop offset="0" stop-color="#f9ff00"/><stop offset=".1" stop-color="#fffe00"/><stop offset=".2" stop-color="#fff800"/><stop offset=".3" stop-color="#fff100"/><stop offset=".4" stop-color="#ffea00"/><stop offset=".5" stop-color="#ffe400"/><stop offset=".6" stop-color="#ffde00"/><stop offset=".7" stop-color="#ffd800"/><stop offset=".8" stop-color="#ffd203"/><stop offset=".9" stop-color="#ffcc06"/><stop offset="1" stop-color="#ffc608"/></linearGradient>
<rect x="1491" y="378" width="5" height="134.5" fill="url(#ini1491)"/>
<linearGradient id="ini1496" gradientUnits="userSpaceOnUse" x1="0" y1="378" x2="0" y2="512.5"><stop offset="0" stop-color="#fcff00"/><stop offset=".1" stop-color="#fffc00"/><stop offset=".2" stop-color="#fff500"/><stop offset=".3" stop-color="#ffee00"/><stop offset=".4" stop-color="#ffe800"/><stop offset=".5" stop-color="#ffe200"/><stop offset=".6" stop-color="#ffdb00"/><stop offset=".7" stop-color="#ffd500"/><stop offset=".8" stop-color="#ffcf02"/><stop offset=".9" stop-color="#ffca05"/><stop offset="1" stop-color="#ffc408"/></linearGradient>
<rect x="1496" y="378" width="5" height="134.5" fill="url(#ini1496)"/>
<linearGradient id="ini1501" gradientUnits="userSpaceOnUse" x1="0" y1="378" x2="0" y2="512.5"><stop offset="0" stop-color="#feff00"/><stop offset=".1" stop-color="#fff900"/><stop offset=".2" stop-color="#fff200"/><stop offset=".3" stop-color="#ffec00"/><stop offset=".4" stop-color="#ffe500"/><stop offset=".5" stop-color="#ffdf00"/><stop offset=".6" stop-color="#ffd900"/><stop offset=".7" stop-color="#ffd300"/><stop offset=".8" stop-color="#ffcd02"/><stop offset=".9" stop-color="#ffc705"/><stop offset="1" stop-color="#ffc207"/></linearGradient>
<rect x="1501" y="378" width="5" height="134.5" fill="url(#ini1501)"/>
<linearGradient id="ini1506" gradientUnits="userSpaceOnUse" x1="0" y1="378" x2="0" y2="512.5"><stop offset="0" stop-color="#fffd00"/><stop offset=".1" stop-color="#fff600"/><stop offset=".2" stop-color="#fff000"/><stop offset=".3" stop-color="#ffe900"/><stop offset=".4" stop-color="#ffe300"/><stop offset=".5" stop-color="#ffdd00"/><stop offset=".6" stop-color="#ffd700"/><stop offset=".7" stop-color="#ffd100"/><stop offset=".8" stop-color="#ffcb01"/><stop offset=".9" stop-color="#ffc504"/><stop offset="1" stop-color="#ffc007"/></linearGradient>
<rect x="1506" y="378" width="5" height="134.5" fill="url(#ini1506)"/>
<linearGradient id="ini1511" gradientUnits="userSpaceOnUse" x1="0" y1="378" x2="0" y2="512.5"><stop offset="0" stop-color="#fffa00"/><stop offset=".1" stop-color="#fff400"/><stop offset=".2" stop-color="#ffed00"/><stop offset=".3" stop-color="#ffe700"/><stop offset=".4" stop-color="#ffe100"/><stop offset=".5" stop-color="#ffda00"/><stop offset=".6" stop-color="#ffd500"/><stop offset=".7" stop-color="#ffcf00"/><stop offset=".8" stop-color="#ffc901"/><stop offset=".9" stop-color="#ffc303"/><stop offset="1" stop-color="#ffbe06"/></linearGradient>
<rect x="1511" y="378" width="5" height="134.5" fill="url(#ini1511)"/>
<linearGradient id="ini1516" gradientUnits="userSpaceOnUse" x1="0" y1="378" x2="0" y2="512.5"><stop offset="0" stop-color="#fff700"/><stop offset=".1" stop-color="#fff100"/><stop offset=".2" stop-color="#ffeb00"/><stop offset=".3" stop-color="#ffe400"/><stop offset=".4" stop-color="#ffde00"/><stop offset=".5" stop-color="#ffd800"/><stop offset=".6" stop-color="#ffd200"/><stop offset=".7" stop-color="#ffcc00"/><stop offset=".8" stop-color="#ffc700"/><stop offset=".9" stop-color="#ffc103"/><stop offset="1" stop-color="#ffbc05"/></linearGradient>
<rect x="1516" y="378" width="5" height="134.5" fill="url(#ini1516)"/>
<linearGradient id="ini1521" gradientUnits="userSpaceOnUse" x1="0" y1="378" x2="0" y2="512.5"><stop offset="0" stop-color="#fff500"/><stop offset=".1" stop-color="#ffee00"/><stop offset=".2" stop-color="#ffe800"/><stop offset=".3" stop-color="#ffe200"/><stop offset=".4" stop-color="#ffdc00"/><stop offset=".5" stop-color="#ffd600"/><stop offset=".6" stop-color="#ffd000"/><stop offset=".7" stop-color="#ffca00"/><stop offset=".8" stop-color="#ffc500"/><stop offset=".9" stop-color="#ffbf02"/><stop offset="1" stop-color="#ffba05"/></linearGradient>
<rect x="1521" y="378" width="5" height="134.5" fill="url(#ini1521)"/>
<linearGradient id="ini1526" gradientUnits="userSpaceOnUse" x1="0" y1="378" x2="0" y2="512.5"><stop offset="0" stop-color="#fff200"/><stop offset=".1" stop-color="#ffec00"/><stop offset=".2" stop-color="#ffe600"/><stop offset=".3" stop-color="#ffe000"/><stop offset=".4" stop-color="#ffda00"/><stop offset=".5" stop-color="#ffd400"/><stop offset=".6" stop-color="#ffce00"/><stop offset=".7" stop-color="#ffc800"/><stop offset=".8" stop-color="#ffc300"/><stop offset=".9" stop-color="#ffbd02"/><stop offset="1" stop-color="#ffb804"/></linearGradient>
<rect x="1526" y="378" width="5" height="134.5" fill="url(#ini1526)"/>
<linearGradient id="ini1531" gradientUnits="userSpaceOnUse" x1="0" y1="378" x2="0" y2="512.5"><stop offset="0" stop-color="#fff000"/><stop offset=".1" stop-color="#ffe900"/><stop offset=".2" stop-color="#ffe300"/><stop offset=".3" stop-color="#ffdd00"/><stop offset=".4" stop-color="#ffd700"/><stop offset=".5" stop-color="#ffd100"/><stop offset=".6" stop-color="#ffcc00"/><stop offset=".7" stop-color="#ffc600"/><stop offset=".8" stop-color="#ffc100"/><stop offset=".9" stop-color="#ffbb01"/><stop offset="1" stop-color="#ffb604"/></linearGradient>
<rect x="1531" y="378" width="5" height="134.5" fill="url(#ini1531)"/>
<linearGradient id="ini1536" gradientUnits="userSpaceOnUse" x1="0" y1="378" x2="0" y2="512.5"><stop offset="0" stop-color="#ffed00"/><stop offset=".1" stop-color="#ffe700"/><stop offset=".2" stop-color="#ffe100"/><stop offset=".3" stop-color="#ffdb00"/><stop offset=".4" stop-color="#ffd500"/><stop offset=".5" stop-color="#ffcf00"/><stop offset=".6" stop-color="#ffca00"/><stop offset=".7" stop-color="#ffc400"/><stop offset=".8" stop-color="#ffbf00"/><stop offset=".9" stop-color="#ffb901"/><stop offset="1" stop-color="#ffb403"/></linearGradient>
<rect x="1536" y="378" width="5" height="134.5" fill="url(#ini1536)"/>
<linearGradient id="ini1541" gradientUnits="userSpaceOnUse" x1="0" y1="378" x2="0" y2="512.5"><stop offset="0" stop-color="#ffeb00"/><stop offset=".1" stop-color="#ffe500"/><stop offset=".2" stop-color="#ffdf00"/><stop offset=".3" stop-color="#ffd900"/><stop offset=".4" stop-color="#ffd300"/><stop offset=".5" stop-color="#ffcd00"/><stop offset=".6" stop-color="#ffc800"/><stop offset=".7" stop-color="#ffc200"/><stop offset=".8" stop-color="#ffbd00"/><stop offset=".9" stop-color="#ffb700"/><stop offset="1" stop-color="#ffb203"/></linearGradient>
<rect x="1541" y="378" width="5" height="134.5" fill="url(#ini1541)"/>
</g></g></g>
<rect x="1346" y="378" width="199" height="134.5" fill="none" stroke="#9a9a9a" stroke-width="1"/>
<rect x="1437.2" y="438.1" width="13.5" height="13.5" fill="none" stroke="#f4f4f4" stroke-width="1.4"/>
<circle cx="1455.2" cy="478.9" r="4.2" fill="#b0b020" stroke="#262607" stroke-width="1.3"/>
<text x="43" y="584.3" font-size="26" fill="#f2f2f2" text-anchor="start" textLength="218" lengthAdjust="spacingAndGlyphs" >Avg dE2000: 4,63</text>
<text x="39" y="621.5" font-size="26" fill="#f2f2f2" text-anchor="start" textLength="226" lengthAdjust="spacingAndGlyphs" >Max dE2000: 9,77</text>
<text x="9" y="666.6" font-size="26" fill="#f2f2f2" text-anchor="start" textLength="205" lengthAdjust="spacingAndGlyphs" >Current Reading</text>
<text x="9" y="699" font-size="21" fill="#f2f2f2" text-anchor="start" textLength="96" lengthAdjust="spacingAndGlyphs" >x: 0,4223</text>
<text x="156.5" y="699" font-size="21" fill="#f2f2f2" text-anchor="start" textLength="96" lengthAdjust="spacingAndGlyphs" >y: 0,4925</text>
<text x="9" y="737.4" font-size="21" fill="#f2f2f2" text-anchor="start" textLength="91" lengthAdjust="spacingAndGlyphs" >fL: 43,51</text>
<text x="9" y="768.7" font-size="21" fill="#f2f2f2" text-anchor="start" textLength="149" lengthAdjust="spacingAndGlyphs" >cd/m²: 149,08</text>
<text x="433" y="584.6" font-size="13" fill="#d8d8d8" text-anchor="middle" >RGB Balance</text>
<rect x="330.8" y="591" width="233.5" height="168.4" fill="#232323"/>
<line x1="325.8" y1="591.0" x2="564.3" y2="591.0" stroke="#a8a8a8" stroke-width="1.3"/>
<text x="324.3" y="597.2" font-size="13" fill="#d8d8d8" text-anchor="end" >120</text>
<line x1="325.8" y1="633.1" x2="564.3" y2="633.1" stroke="#a8a8a8" stroke-width="1.3"/>
<text x="324.3" y="639.3" font-size="13" fill="#d8d8d8" text-anchor="end" >110</text>
<line x1="325.8" y1="675.2" x2="564.3" y2="675.2" stroke="#a8a8a8" stroke-width="1.3"/>
<text x="324.3" y="681.4" font-size="13" fill="#d8d8d8" text-anchor="end" >100</text>
<line x1="325.8" y1="717.3" x2="564.3" y2="717.3" stroke="#a8a8a8" stroke-width="1.3"/>
<text x="324.3" y="723.5" font-size="13" fill="#d8d8d8" text-anchor="end" >90</text>
<line x1="325.8" y1="759.4" x2="564.3" y2="759.4" stroke="#a8a8a8" stroke-width="1.3"/>
<text x="324.3" y="765.6" font-size="13" fill="#d8d8d8" text-anchor="end" >80</text>
<line x1="330.8" y1="589.5" x2="330.8" y2="764.4" stroke="#a8a8a8" stroke-width="1.3"/>
<line x1="330.8" y1="589.5" x2="564.3" y2="589.5" stroke="#a8a8a8" stroke-width="1"/>
<line x1="564.3" y1="591" x2="564.3" y2="764.4" stroke="#a8a8a8" stroke-width="1.3"/>
<linearGradient id="rgbR" x1="0" y1="0" x2="0" y2="1"><stop offset="0" stop-color="#ff5a5a"/><stop offset="1" stop-color="#ff0000"/></linearGradient>
<linearGradient id="rgbG" x1="0" y1="0" x2="0" y2="1"><stop offset="0" stop-color="#55aa55"/><stop offset="1" stop-color="#008000"/></linearGradient>
<linearGradient id="rgbB" x1="0" y1="0" x2="0" y2="1"><stop offset="0" stop-color="#5a5aff"/><stop offset="1" stop-color="#0000ff"/></linearGradient>
<rect x="354" y="676.7" width="60.2" height="82.7" fill="url(#rgbR)" stroke="#000" stroke-width="1"/>
<rect x="415.3" y="688.6" width="61.5" height="70.8" fill="url(#rgbG)" stroke="#000" stroke-width="1"/>
<rect x="478" y="630.1" width="61.4" height="129.3" fill="url(#rgbB)" stroke="#000" stroke-width="1"/>
<text x="447" y="773.5" font-size="13" fill="#d8d8d8" text-anchor="middle" >100%</text>
<rect x="583.5" y="559.5" width="684.5" height="222" fill="#111111"/>
<rect x="584.5" y="560.5" width="681.5" height="14" fill="#2e2e2e"/>
<rect x="584.5" y="574.5" width="681.5" height="13.5" fill="#131313"/>
<text x="798.5" y="579.9" font-size="13.5" fill="#f4f4f4" text-anchor="start" font-weight="bold" textLength="37.5" lengthAdjust="spacingAndGlyphs" >20%</text>
<text x="898.1" y="579.9" font-size="13.5" fill="#f4f4f4" text-anchor="start" font-weight="bold" textLength="37.5" lengthAdjust="spacingAndGlyphs" >40%</text>
<text x="997.7" y="579.9" font-size="13.5" fill="#f4f4f4" text-anchor="start" font-weight="bold" textLength="37.5" lengthAdjust="spacingAndGlyphs" >60%</text>
<text x="1097.3" y="579.9" font-size="13.5" fill="#f4f4f4" text-anchor="start" font-weight="bold" textLength="37.5" lengthAdjust="spacingAndGlyphs" >80%</text>
<text x="1193" y="579.9" font-size="13.5" fill="#f4f4f4" text-anchor="start" font-weight="bold" textLength="47.8" lengthAdjust="spacingAndGlyphs" >100%</text>
<rect x="584.5" y="588.0" width="681.5" height="24.10" fill="#3d3d3d"/>
<text x="602.3" y="606.2" font-size="15" fill="#f4f4f4" text-anchor="start" font-weight="bold" textLength="80.3" lengthAdjust="spacingAndGlyphs" >x: CIE31</text>
<text x="774.0" y="606.2" font-size="15" fill="#f4f4f4" text-anchor="start" textLength="63" lengthAdjust="spacingAndGlyphs" >0,3334</text>
<text x="873.6" y="606.2" font-size="15" fill="#f4f4f4" text-anchor="start" textLength="63" lengthAdjust="spacingAndGlyphs" >0,3553</text>
<text x="973.2" y="606.2" font-size="15" fill="#f4f4f4" text-anchor="start" textLength="63" lengthAdjust="spacingAndGlyphs" >0,3760</text>
<text x="1072.8" y="606.2" font-size="15" fill="#f4f4f4" text-anchor="start" textLength="63" lengthAdjust="spacingAndGlyphs" >0,3977</text>
<text x="1172.6" y="606.2" font-size="15" fill="#f4f4f4" text-anchor="start" textLength="63" lengthAdjust="spacingAndGlyphs" >0,4223</text>
<rect x="584.5" y="612.1" width="681.5" height="24.10" fill="#808080"/>
<text x="602.3" y="630.3" font-size="15" fill="#f4f4f4" text-anchor="start" font-weight="bold" textLength="80.3" lengthAdjust="spacingAndGlyphs" >y: CIE31</text>
<text x="774.0" y="630.3" font-size="15" fill="#f4f4f4" text-anchor="start" textLength="63" lengthAdjust="spacingAndGlyphs" >0,3602</text>
<text x="873.6" y="630.3" font-size="15" fill="#f4f4f4" text-anchor="start" textLength="63" lengthAdjust="spacingAndGlyphs" >0,3927</text>
<text x="973.2" y="630.3" font-size="15" fill="#f4f4f4" text-anchor="start" textLength="63" lengthAdjust="spacingAndGlyphs" >0,4235</text>
<text x="1072.8" y="630.3" font-size="15" fill="#f4f4f4" text-anchor="start" textLength="63" lengthAdjust="spacingAndGlyphs" >0,4557</text>
<text x="1172.6" y="630.3" font-size="15" fill="#f4f4f4" text-anchor="start" textLength="63" lengthAdjust="spacingAndGlyphs" >0,4925</text>
<rect x="584.5" y="636.2" width="681.5" height="24.10" fill="#3d3d3d"/>
<text x="602.3" y="654.4" font-size="15" fill="#f4f4f4" text-anchor="start" font-weight="bold" textLength="12" lengthAdjust="spacingAndGlyphs" >Y</text>
<text x="774.0" y="654.4" font-size="15" fill="#f4f4f4" text-anchor="start" textLength="86" lengthAdjust="spacingAndGlyphs" >169,3766</text>
<text x="873.6" y="654.4" font-size="15" fill="#f4f4f4" text-anchor="start" textLength="86" lengthAdjust="spacingAndGlyphs" >163,7731</text>
<text x="973.2" y="654.4" font-size="15" fill="#f4f4f4" text-anchor="start" textLength="86" lengthAdjust="spacingAndGlyphs" >159,4363</text>
<text x="1072.8" y="654.4" font-size="15" fill="#f4f4f4" text-anchor="start" textLength="86" lengthAdjust="spacingAndGlyphs" >155,5057</text>
<text x="1172.6" y="654.4" font-size="15" fill="#f4f4f4" text-anchor="start" textLength="86" lengthAdjust="spacingAndGlyphs" >149,0780</text>
<rect x="584.5" y="660.3" width="681.5" height="24.10" fill="#808080"/>
<text x="602.3" y="678.5" font-size="15" fill="#f4f4f4" text-anchor="start" font-weight="bold" textLength="146" lengthAdjust="spacingAndGlyphs" >Target x:CIE31</text>
<text x="774.0" y="678.5" font-size="15" fill="#f4f4f4" text-anchor="start" textLength="63" lengthAdjust="spacingAndGlyphs" >0,3344</text>
<text x="873.6" y="678.5" font-size="15" fill="#f4f4f4" text-anchor="start" textLength="63" lengthAdjust="spacingAndGlyphs" >0,3564</text>
<text x="973.2" y="678.5" font-size="15" fill="#f4f4f4" text-anchor="start" textLength="63" lengthAdjust="spacingAndGlyphs" >0,3773</text>
<text x="1072.8" y="678.5" font-size="15" fill="#f4f4f4" text-anchor="start" textLength="63" lengthAdjust="spacingAndGlyphs" >0,3969</text>
<text x="1172.6" y="678.5" font-size="15" fill="#f4f4f4" text-anchor="start" textLength="63" lengthAdjust="spacingAndGlyphs" >0,4193</text>
<rect x="584.5" y="684.4" width="681.5" height="24.10" fill="#3d3d3d"/>
<text x="602.3" y="702.6" font-size="15" fill="#f4f4f4" text-anchor="start" font-weight="bold" textLength="146" lengthAdjust="spacingAndGlyphs" >Target y:CIE31</text>
<text x="774.0" y="702.6" font-size="15" fill="#f4f4f4" text-anchor="start" textLength="63" lengthAdjust="spacingAndGlyphs" >0,3648</text>
<text x="873.6" y="702.6" font-size="15" fill="#f4f4f4" text-anchor="start" textLength="63" lengthAdjust="spacingAndGlyphs" >0,4013</text>
<text x="973.2" y="702.6" font-size="15" fill="#f4f4f4" text-anchor="start" textLength="63" lengthAdjust="spacingAndGlyphs" >0,4358</text>
<text x="1072.8" y="702.6" font-size="15" fill="#f4f4f4" text-anchor="start" textLength="63" lengthAdjust="spacingAndGlyphs" >0,4682</text>
<text x="1172.6" y="702.6" font-size="15" fill="#f4f4f4" text-anchor="start" textLength="63" lengthAdjust="spacingAndGlyphs" >0,5053</text>
<rect x="584.5" y="708.5" width="681.5" height="24.10" fill="#808080"/>
<text x="602.3" y="726.7" font-size="15" fill="#f4f4f4" text-anchor="start" font-weight="bold" textLength="84" lengthAdjust="spacingAndGlyphs" >Target Y</text>
<text x="774.0" y="726.7" font-size="15" fill="#f4f4f4" text-anchor="start" textLength="86" lengthAdjust="spacingAndGlyphs" >170,4371</text>
<text x="873.6" y="726.7" font-size="15" fill="#f4f4f4" text-anchor="start" textLength="86" lengthAdjust="spacingAndGlyphs" >167,4454</text>
<text x="973.2" y="726.7" font-size="15" fill="#f4f4f4" text-anchor="start" textLength="86" lengthAdjust="spacingAndGlyphs" >165,1467</text>
<text x="1072.8" y="726.7" font-size="15" fill="#f4f4f4" text-anchor="start" textLength="86" lengthAdjust="spacingAndGlyphs" >163,3427</text>
<text x="1172.6" y="726.7" font-size="15" fill="#f4f4f4" text-anchor="start" textLength="86" lengthAdjust="spacingAndGlyphs" >161,5987</text>
<rect x="584.5" y="732.6" width="681.5" height="24.10" fill="#3d3d3d"/>
<text x="602.3" y="750.8" font-size="15" fill="#f4f4f4" text-anchor="start" font-weight="bold" textLength="84" lengthAdjust="spacingAndGlyphs" >ΔE 2000</text>
<text x="774.0" y="750.8" font-size="15" fill="#f4f4f4" text-anchor="start" textLength="63" lengthAdjust="spacingAndGlyphs" >1,6049</text>
<text x="873.6" y="750.8" font-size="15" fill="#f4f4f4" text-anchor="start" textLength="63" lengthAdjust="spacingAndGlyphs" >2,0501</text>
<text x="973.2" y="750.8" font-size="15" fill="#f4f4f4" text-anchor="start" textLength="63" lengthAdjust="spacingAndGlyphs" >2,4012</text>
<text x="1072.8" y="750.8" font-size="15" fill="#f4f4f4" text-anchor="start" textLength="63" lengthAdjust="spacingAndGlyphs" >2,5089</text>
<text x="1172.6" y="750.8" font-size="15" fill="#f4f4f4" text-anchor="start" textLength="63" lengthAdjust="spacingAndGlyphs" >2,9293</text>
<rect x="584.5" y="756.7" width="681.5" height="24.10" fill="#808080"/>
<text x="602.3" y="774.9" font-size="15" fill="#f4f4f4" text-anchor="start" font-weight="bold" textLength="67" lengthAdjust="spacingAndGlyphs" >ΔE ITP</text>
<text x="774.0" y="774.9" font-size="15" fill="#f4f4f4" text-anchor="start" textLength="63" lengthAdjust="spacingAndGlyphs" >1,9683</text>
<text x="873.6" y="774.9" font-size="15" fill="#f4f4f4" text-anchor="start" textLength="63" lengthAdjust="spacingAndGlyphs" >4,0621</text>
<text x="973.2" y="774.9" font-size="15" fill="#f4f4f4" text-anchor="start" textLength="63" lengthAdjust="spacingAndGlyphs" >6,2263</text>
<text x="1072.8" y="774.9" font-size="15" fill="#f4f4f4" text-anchor="start" textLength="63" lengthAdjust="spacingAndGlyphs" >7,2816</text>
<text x="1172.6" y="774.9" font-size="15" fill="#f4f4f4" text-anchor="start" textLength="63" lengthAdjust="spacingAndGlyphs" >9,4574</text>
<linearGradient id="tile" x1="0" y1="0" x2="0" y2="1"><stop offset="0" stop-color="#a9a9a9"/><stop offset="0.45" stop-color="#8a8a8a"/><stop offset="1" stop-color="#5e5e5e"/></linearGradient>
<linearGradient id="tileSel" x1="0" y1="0" x2="0" y2="1"><stop offset="0" stop-color="#1c1c1c"/><stop offset="1" stop-color="#2c2c2c"/></linearGradient>
<linearGradient id="btn" x1="0" y1="0" x2="0" y2="1"><stop offset="0" stop-color="#adadad"/><stop offset="1" stop-color="#6c6c6c"/></linearGradient>
<linearGradient id="btn2" x1="0" y1="0" x2="0" y2="1"><stop offset="0" stop-color="#b0b0b0"/><stop offset="1" stop-color="#727272"/></linearGradient>
<linearGradient id="knob" x1="0" y1="0" x2="0" y2="1"><stop offset="0" stop-color="#747474"/><stop offset="1" stop-color="#b4b4b4"/></linearGradient>
<linearGradient id="shade" x1="0" y1="0" x2="1" y2="0"><stop offset="0" stop-color="#2e2e2e"/><stop offset="1" stop-color="#333333"/></linearGradient>
<rect x="0" y="801" width="1557" height="60" fill="#2d2d2d"/>
<linearGradient id="midpanel" x1="0" y1="0" x2="0" y2="1"><stop offset="0" stop-color="#484848"/><stop offset="1" stop-color="#262626"/></linearGradient>
<rect x="805" y="803" width="432" height="58" fill="url(#midpanel)"/>
<path d="M0 803 L37 803 Q41 803 41 807 L41 861 L0 861 Z" fill="url(#tile)"/>
<circle cx="18.3" cy="812" r="7" fill="url(#knob)"/>
<path d="M13.5 815 L23 815 L18.3 809.5 Z" fill="#2a2a2a"/>
<rect x="1.5" y="829" width="35" height="30.5" rx="3" fill="#ffff00" stroke="#8a8a00" stroke-width="0.8"/>
<path d="M47 861 L47 806.5 Q47 803 50.5 803 L193.3 803 Q196.8 803 196.8 806.5 L196.8 861 Z" fill="url(#tile)"/>
<rect x="52.5" y="808" width="138.8" height="36" rx="3" fill="#c2c2a4" stroke="#8d8d6a" stroke-width="0.7"/>
<text x="111.6" y="858.8" font-size="11" fill="#1e1e1e" text-anchor="start" font-weight="bold" textLength="20.5" lengthAdjust="spacingAndGlyphs" >20%</text>
<path d="M199 861 L199 806.5 Q199 803 202.5 803 L345.3 803 Q348.8 803 348.8 806.5 L348.8 861 Z" fill="url(#tile)"/>
<rect x="204.5" y="808" width="138.8" height="36" rx="3" fill="#c2c28a" stroke="#8d8d6a" stroke-width="0.7"/>
<text x="263.6" y="858.8" font-size="11" fill="#1e1e1e" text-anchor="start" font-weight="bold" textLength="20.5" lengthAdjust="spacingAndGlyphs" >40%</text>
<path d="M351 861 L351 806.5 Q351 803 354.5 803 L497.3 803 Q500.8 803 500.8 806.5 L500.8 861 Z" fill="url(#tile)"/>
<rect x="356.5" y="808" width="138.8" height="36" rx="3" fill="#c2bf73" stroke="#8d8d6a" stroke-width="0.7"/>
<text x="415.6" y="858.8" font-size="11" fill="#1e1e1e" text-anchor="start" font-weight="bold" textLength="20.5" lengthAdjust="spacingAndGlyphs" >60%</text>
<path d="M503 861 L503 806.5 Q503 803 506.5 803 L649.3 803 Q652.8 803 652.8 806.5 L652.8 861 Z" fill="url(#tile)"/>
<rect x="508.5" y="808" width="138.8" height="36" rx="3" fill="#c2c052" stroke="#8d8d6a" stroke-width="0.7"/>
<text x="567.6" y="858.8" font-size="11" fill="#1e1e1e" text-anchor="start" font-weight="bold" textLength="20.5" lengthAdjust="spacingAndGlyphs" >80%</text>
<path d="M655 861 L655 806.5 Q655 803 658.5 803 L801.3 803 Q804.8 803 804.8 806.5 L804.8 861 Z" fill="url(#tileSel)"/>
<rect x="660" y="808" width="139.8" height="36" rx="3.5" fill="#c2bf00"/>
<text x="716.5" y="858.8" font-size="11" fill="#ffffff" text-anchor="start" font-weight="bold" textLength="27" lengthAdjust="spacingAndGlyphs" >100%</text>
<rect x="1233" y="803" width="5" height="58" fill="#2a2a2a" opacity="0.6"/>
<path d="M1238 821 L1238 807 Q1238 803 1242 803 L1282 803 Q1286 803 1286 807 L1286 821 Z" fill="url(#btn)"/>
<circle cx="1262.4" cy="811.5" r="7" fill="url(#knob)"/>
<path d="M1257.5 814.5 L1267.3 814.5 L1262.4 809 Z" fill="#2a2a2a"/>
<rect x="1238" y="822" width="48" height="39" fill="url(#btn2)"/>
<rect x="1247.8" y="828.3" width="28.6" height="29" rx="4" fill="#a4a4a4" stroke="#1c1c1c" stroke-width="2.4"/>
<rect x="1249.2" y="829.7" width="25.8" height="13.3" rx="2.5" fill="#b8b8b8"/>
<rect x="1255" y="836" width="13.5" height="13.5" fill="#000000"/>
<rect x="1255" y="836" width="13.5" height="7" fill="#1c1c1c"/>
<path d="M1287.2 833 L1287.2 807 Q1287.2 803 1291.2 803 L1332.8 803 L1332.8 833 Z" fill="url(#btn)"/>
<circle cx="1310.0" cy="818" r="10" fill="url(#knob)"/>
<rect x="1334" y="803" width="43.9" height="30" fill="url(#btn)"/>
<circle cx="1356.0" cy="818" r="10" fill="url(#knob)"/>
<rect x="1378.9" y="803" width="43.8" height="30" fill="url(#btn)"/>
<circle cx="1400.8" cy="818" r="10" fill="url(#knob)"/>
<rect x="1424.5" y="803" width="43.5" height="30" fill="url(#btn)"/>
<circle cx="1446.2" cy="818" r="10" fill="url(#knob)"/>
<rect x="1469" y="803" width="44" height="30" fill="url(#btn)"/>
<circle cx="1491.0" cy="818" r="10" fill="url(#knob)"/>
<rect x="1514" y="803" width="43" height="30" fill="url(#btn)"/>
<circle cx="1535.5" cy="818" r="10" fill="url(#knob)"/>
<rect x="1305.5" y="813.5" width="9" height="9" fill="#2a2a2a"/>
<path d="M1352.5 812 L1361.0 818 L1352.5 824 Z" fill="#2a2a2a"/>
<path d="M1396.8 813 L1394.8 813 L1394.8 823 L1396.8 823 M1404.8 813 L1406.8 813 L1406.8 823 L1404.8 823" fill="none" stroke="#2a2a2a" stroke-width="1.8"/>
<rect x="1398.3" y="817" width="1.6" height="1.8" fill="#2a2a2a"/><rect x="1401.7" y="817" width="1.6" height="1.8" fill="#2a2a2a"/>
<path d="M1446.2 818 C1443.2 814.5 1439.2 814.5 1439.2 818 C1439.2 821.5 1443.2 821.5 1446.2 818 C1449.2 814.5 1453.2 814.5 1453.2 818 C1453.2 821.5 1449.2 821.5 1446.2 818 Z" fill="none" stroke="#2a2a2a" stroke-width="1.8"/>
<path d="M1485.5 817 A5.5 5.5 0 0 1 1495.5 815" fill="none" stroke="#2a2a2a" stroke-width="2"/><path d="M1496.5 819 A5.5 5.5 0 0 1 1486.5 821" fill="none" stroke="#2a2a2a" stroke-width="2"/>
<path d="M1493.0 812.5 L1497.5 812 L1496.5 816.5 Z M1489.0 823.5 L1484.5 824 L1485.5 819.5 Z" fill="#2a2a2a"/>
<rect x="1286.1" y="803" width="1" height="58" fill="#2c2c2c"/>
<rect x="1332.8" y="803" width="1" height="58" fill="#2c2c2c"/>
<rect x="1377.7" y="803" width="1" height="58" fill="#2c2c2c"/>
<rect x="1423.3" y="803" width="1" height="58" fill="#2c2c2c"/>
<rect x="1468.0" y="803" width="1" height="58" fill="#2c2c2c"/>
<rect x="1512.9" y="803" width="1" height="58" fill="#2c2c2c"/>
<rect x="1287" y="832.8" width="270" height="1.3" fill="#2c2c2c"/>
<rect x="1238" y="821" width="48" height="1.3" fill="#2c2c2c"/>
<path d="M1287.2 861 L1287.2 838 Q1287.2 834 1291.2 834 L1423.3 834 L1423.3 861 Z" fill="url(#btn2)"/>
<rect x="1424.3" y="834" width="133" height="27" fill="url(#btn2)"/>
<rect x="1423.3" y="834" width="1" height="27" fill="#2c2c2c"/>
<circle cx="1318" cy="848.7" r="10" fill="url(#knob)"/>
<path d="M1319.5 843.5 L1315.5 848.7 L1319.5 853.9 M1323 843.5 L1319 848.7 L1323 853.9" fill="none" stroke="#2a2a2a" stroke-width="1.5"/>
<text x="1345" y="856.4" font-size="21" fill="#262626" text-anchor="start" textLength="50" lengthAdjust="spacingAndGlyphs" stroke="#262626" stroke-width="0.35">Back</text>
<text x="1451.7" y="856.8" font-size="21.5" fill="#262626" text-anchor="start" textLength="51.4" lengthAdjust="spacingAndGlyphs" stroke="#262626" stroke-width="0.35">Next</text>
<circle cx="1531" cy="849" r="10" fill="url(#knob)"/>
<path d="M1527.5 843.8 L1531.5 849 L1527.5 854.2 M1531 843.8 L1535 849 L1531 854.2" fill="none" stroke="#2a2a2a" stroke-width="1.5"/>
</svg></body></html>
